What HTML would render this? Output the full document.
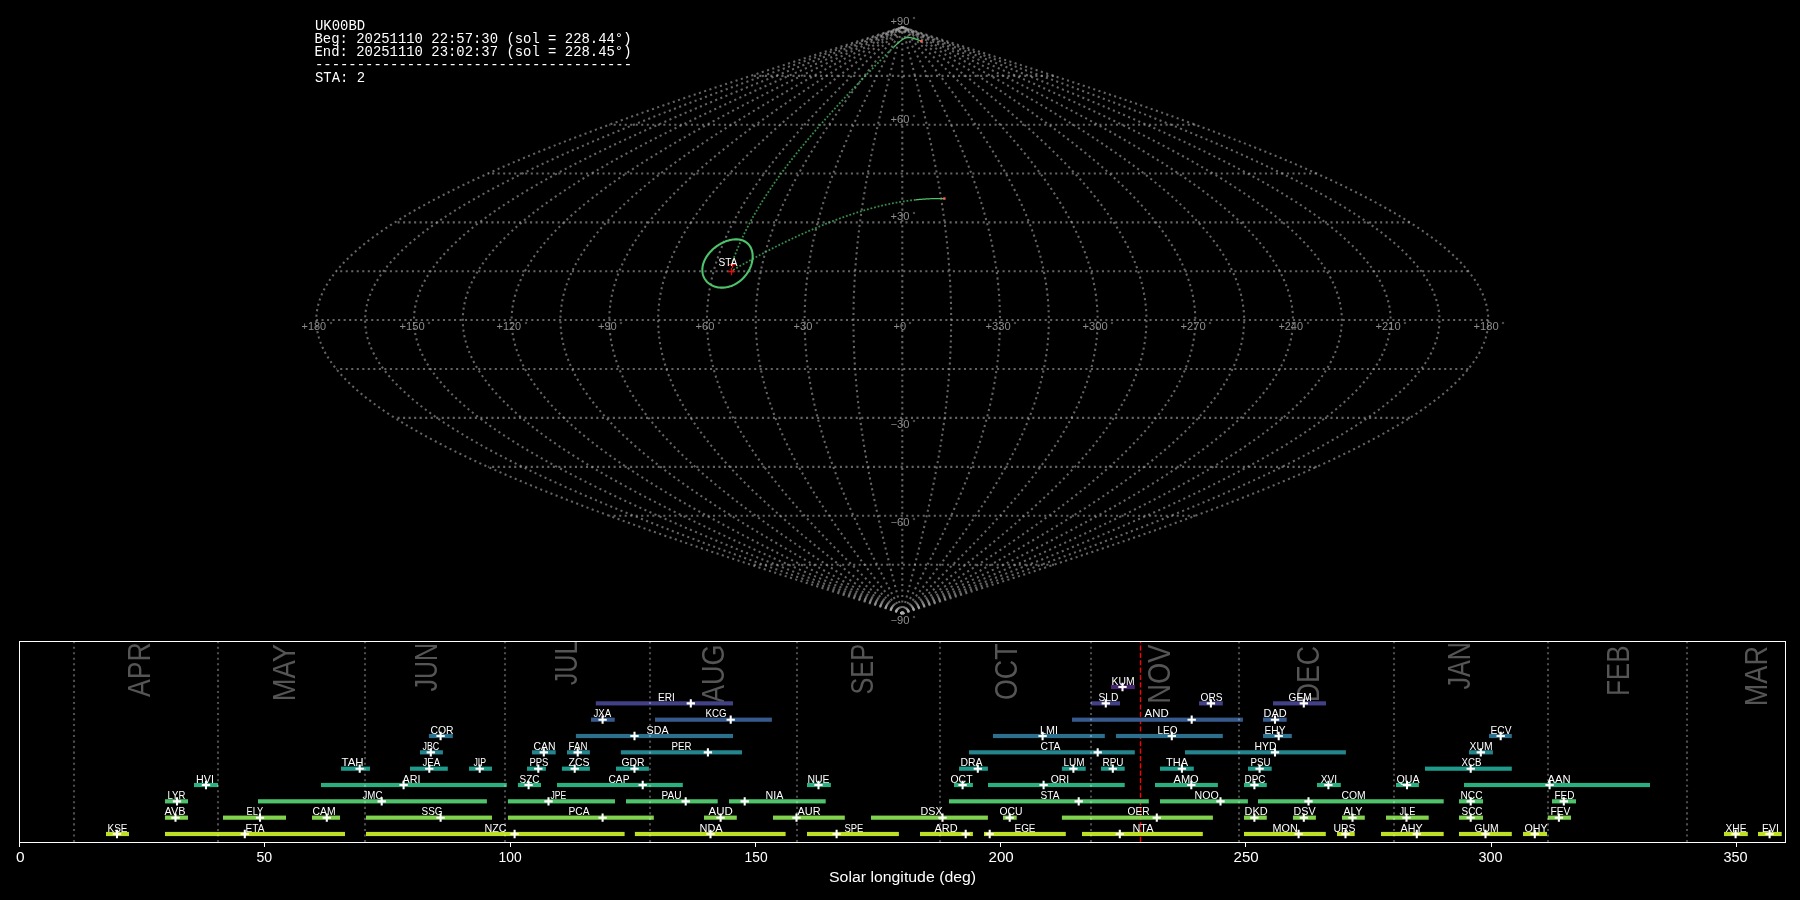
<!DOCTYPE html>
<html><head><meta charset="utf-8"><title>UK00BD STA</title>
<style>
html,body{margin:0;padding:0;background:#000;width:1800px;height:900px;overflow:hidden}
#wrap{width:1800px;height:900px;will-change:transform}
svg{display:block;font-family:"Liberation Sans",sans-serif}
</style></head><body>
<div id="wrap"><svg width="1800" height="900" viewBox="0 0 1800 900">
<g fill="none" stroke="#acacac" stroke-opacity="0.58" stroke-width="2.08" stroke-dasharray="2.08 3.44"><path d="M902.3 613.63 L907.41 612 L912.53 610.37 L917.64 608.74 L922.75 607.11 L927.86 605.48 L932.97 603.84 L938.07 602.21 L943.18 600.58 L948.28 598.95 L953.37 597.32 L958.47 595.69 L963.55 594.06 L968.64 592.43 L973.72 590.8 L978.79 589.16 L983.86 587.53 L988.92 585.9 L993.97 584.27 L999.02 582.64 L1004.06 581.01 L1009.09 579.38 L1014.12 577.75 L1019.13 576.12 L1024.14 574.49 L1029.14 572.86 L1034.12 571.22 L1039.1 569.59 L1044.07 567.96 L1049.02 566.33 L1053.97 564.7 L1058.9 563.07 L1063.83 561.44 L1068.74 559.81 L1073.63 558.18 L1078.52 556.55 L1083.39 554.91 L1088.24 553.28 L1093.09 551.65 L1097.91 550.02 L1102.73 548.39 L1107.52 546.76 L1112.31 545.13 L1117.07 543.5 L1121.82 541.87 L1126.56 540.24 L1131.27 538.6 L1135.97 536.97 L1140.65 535.34 L1145.31 533.71 L1149.96 532.08 L1154.58 530.45 L1159.19 528.82 L1163.78 527.19 L1168.34 525.56 L1172.89 523.92 L1177.41 522.29 L1181.92 520.66 L1186.4 519.03 L1190.86 517.4 L1195.3 515.77 L1199.72 514.14 L1204.12 512.51 L1208.49 510.88 L1212.84 509.25 L1217.16 507.62 L1221.46 505.98 L1225.74 504.35 L1229.99 502.72 L1234.22 501.09 L1238.42 499.46 L1242.6 497.83 L1246.75 496.2 L1250.87 494.57 L1254.97 492.94 L1259.04 491.31 L1263.08 489.67 L1267.1 488.04 L1271.09 486.41 L1275.05 484.78 L1278.98 483.15 L1282.88 481.52 L1286.76 479.89 L1290.6 478.26 L1294.42 476.63 L1298.2 475 L1301.96 473.36 L1305.68 471.73 L1309.38 470.1 L1313.04 468.47 L1316.67 466.84 L1320.27 465.21 L1323.84 463.58 L1327.38 461.95 L1330.88 460.32 L1334.35 458.69 L1337.79 457.05 L1341.19 455.42 L1344.57 453.79 L1347.9 452.16 L1351.21 450.53 L1354.48 448.9 L1357.71 447.27 L1360.91 445.64 L1364.08 444.01 L1367.21 442.38 L1370.31 440.74 L1373.37 439.11 L1376.39 437.48 L1379.38 435.85 L1382.33 434.22 L1385.24 432.59 L1388.12 430.96 L1390.96 429.33 L1393.77 427.7 L1396.53 426.06 L1399.26 424.43 L1401.95 422.8 L1404.61 421.17 L1407.22 419.54 L1409.8 417.91 L1412.34 416.28 L1414.83 414.65 L1417.29 413.02 L1419.71 411.39 L1422.1 409.75 L1424.44 408.12 L1426.74 406.49 L1429 404.86 L1431.22 403.23 L1433.4 401.6 L1435.54 399.97 L1437.64 398.34 L1439.7 396.71 L1441.72 395.08 L1443.7 393.44 L1445.64 391.81 L1447.53 390.18 L1449.39 388.55 L1451.2 386.92 L1452.97 385.29 L1454.7 383.66 L1456.38 382.03 L1458.03 380.4 L1459.63 378.77 L1461.19 377.13 L1462.7 375.5 L1464.18 373.87 L1465.61 372.24 L1467 370.61 L1468.34 368.98 L1469.64 367.35 L1470.9 365.72 L1472.12 364.09 L1473.29 362.46 L1474.42 360.82 L1475.5 359.19 L1476.54 357.56 L1477.54 355.93 L1478.5 354.3 L1479.41 352.67 L1480.27 351.04 L1481.09 349.41 L1481.87 347.78 L1482.61 346.15 L1483.29 344.51 L1483.94 342.88 L1484.54 341.25 L1485.1 339.62 L1485.61 337.99 L1486.08 336.36 L1486.5 334.73 L1486.88 333.1 L1487.21 331.47 L1487.5 329.84 L1487.75 328.2 L1487.95 326.57 L1488.11 324.94 L1488.22 323.31 L1488.29 321.68 L1488.31 320.05 L1488.29 318.42 L1488.22 316.79 L1488.11 315.17 L1487.95 313.54 L1487.75 311.91 L1487.5 310.28 L1487.21 308.66 L1486.88 307.03 L1486.5 305.4 L1486.08 303.77 L1485.61 302.14 L1485.1 300.52 L1484.54 298.89 L1483.94 297.26 L1483.29 295.63 L1482.61 294.01 L1481.87 292.38 L1481.09 290.75 L1480.27 289.12 L1479.41 287.49 L1478.5 285.87 L1477.54 284.24 L1476.54 282.61 L1475.5 280.98 L1474.42 279.36 L1473.29 277.73 L1472.12 276.1 L1470.9 274.47 L1469.64 272.84 L1468.34 271.22 L1467 269.59 L1465.61 267.96 L1464.18 266.33 L1462.7 264.7 L1461.19 263.08 L1459.63 261.45 L1458.03 259.82 L1456.38 258.19 L1454.7 256.57 L1452.97 254.94 L1451.2 253.31 L1449.39 251.68 L1447.53 250.05 L1445.64 248.43 L1443.7 246.8 L1441.72 245.17 L1439.7 243.54 L1437.64 241.92 L1435.54 240.29 L1433.4 238.66 L1431.22 237.03 L1429 235.4 L1426.74 233.78 L1424.44 232.15 L1422.1 230.52 L1419.71 228.89 L1417.29 227.27 L1414.83 225.64 L1412.34 224.01 L1409.8 222.38 L1407.22 220.75 L1404.61 219.13 L1401.95 217.5 L1399.26 215.87 L1396.53 214.24 L1393.77 212.62 L1390.96 210.99 L1388.12 209.36 L1385.24 207.73 L1382.33 206.1 L1379.38 204.48 L1376.39 202.85 L1373.37 201.22 L1370.31 199.59 L1367.21 197.97 L1364.08 196.34 L1360.91 194.71 L1357.71 193.08 L1354.48 191.45 L1351.21 189.83 L1347.9 188.2 L1344.57 186.57 L1341.19 184.94 L1337.79 183.31 L1334.35 181.69 L1330.88 180.06 L1327.38 178.43 L1323.84 176.8 L1320.27 175.18 L1316.67 173.55 L1313.04 171.92 L1309.38 170.29 L1305.68 168.66 L1301.96 167.04 L1298.2 165.41 L1294.42 163.78 L1290.6 162.15 L1286.76 160.53 L1282.88 158.9 L1278.98 157.27 L1275.05 155.64 L1271.09 154.01 L1267.1 152.39 L1263.08 150.76 L1259.04 149.13 L1254.97 147.5 L1250.87 145.88 L1246.75 144.25 L1242.6 142.62 L1238.42 140.99 L1234.22 139.36 L1229.99 137.74 L1225.74 136.11 L1221.46 134.48 L1217.16 132.85 L1212.84 131.23 L1208.49 129.6 L1204.12 127.97 L1199.72 126.34 L1195.3 124.71 L1190.86 123.09 L1186.4 121.46 L1181.92 119.83 L1177.41 118.2 L1172.89 116.58 L1168.34 114.95 L1163.78 113.32 L1159.19 111.69 L1154.58 110.06 L1149.96 108.44 L1145.31 106.81 L1140.65 105.18 L1135.97 103.55 L1131.27 101.92 L1126.56 100.3 L1121.82 98.67 L1117.07 97.04 L1112.31 95.41 L1107.52 93.79 L1102.73 92.16 L1097.91 90.53 L1093.09 88.9 L1088.24 87.27 L1083.39 85.65 L1078.52 84.02 L1073.63 82.39 L1068.74 80.76 L1063.83 79.14 L1058.9 77.51 L1053.97 75.88 L1049.02 74.25 L1044.07 72.62 L1039.1 71 L1034.12 69.37 L1029.14 67.74 L1024.14 66.11 L1019.13 64.49 L1014.12 62.86 L1009.09 61.23 L1004.06 59.6 L999.02 57.97 L993.97 56.35 L988.92 54.72 L983.86 53.09 L978.79 51.46 L973.72 49.84 L968.64 48.21 L963.55 46.58 L958.47 44.95 L953.37 43.32 L948.28 41.7 L943.18 40.07 L938.07 38.44 L932.97 36.81 L927.86 35.19 L922.75 33.56 L917.64 31.93 L912.53 30.3 L907.41 28.67 L902.3 27.05" stroke-dashoffset="0.0"/><path d="M902.3 613.63 L906.99 612 L911.67 610.37 L916.36 608.74 L921.05 607.11 L925.73 605.48 L930.41 603.84 L935.09 602.21 L939.77 600.58 L944.45 598.95 L949.12 597.32 L953.79 595.69 L958.45 594.06 L963.11 592.43 L967.77 590.8 L972.42 589.16 L977.06 587.53 L981.7 585.9 L986.33 584.27 L990.96 582.64 L995.58 581.01 L1000.19 579.38 L1004.8 577.75 L1009.4 576.12 L1013.98 574.49 L1018.57 572.86 L1023.14 571.22 L1027.7 569.59 L1032.25 567.96 L1036.8 566.33 L1041.33 564.7 L1045.85 563.07 L1050.37 561.44 L1054.87 559.81 L1059.35 558.18 L1063.83 556.55 L1068.3 554.91 L1072.75 553.28 L1077.19 551.65 L1081.61 550.02 L1086.02 548.39 L1090.42 546.76 L1094.81 545.13 L1099.17 543.5 L1103.53 541.87 L1107.87 540.24 L1112.19 538.6 L1116.5 536.97 L1120.79 535.34 L1125.06 533.71 L1129.32 532.08 L1133.56 530.45 L1137.78 528.82 L1141.99 527.19 L1146.17 525.56 L1150.34 523.92 L1154.49 522.29 L1158.62 520.66 L1162.73 519.03 L1166.82 517.4 L1170.89 515.77 L1174.94 514.14 L1178.97 512.51 L1182.97 510.88 L1186.96 509.25 L1190.92 507.62 L1194.87 505.98 L1198.79 504.35 L1202.68 502.72 L1206.56 501.09 L1210.41 499.46 L1214.24 497.83 L1218.04 496.2 L1221.82 494.57 L1225.58 492.94 L1229.31 491.31 L1233.02 489.67 L1236.7 488.04 L1240.35 486.41 L1243.98 484.78 L1247.59 483.15 L1251.17 481.52 L1254.72 479.89 L1258.24 478.26 L1261.74 476.63 L1265.21 475 L1268.65 473.36 L1272.07 471.73 L1275.45 470.1 L1278.81 468.47 L1282.14 466.84 L1285.44 465.21 L1288.71 463.58 L1291.95 461.95 L1295.16 460.32 L1298.35 458.69 L1301.5 457.05 L1304.62 455.42 L1307.71 453.79 L1310.77 452.16 L1313.8 450.53 L1316.8 448.9 L1319.76 447.27 L1322.7 445.64 L1325.6 444.01 L1328.47 442.38 L1331.31 440.74 L1334.11 439.11 L1336.88 437.48 L1339.62 435.85 L1342.33 434.22 L1345 432.59 L1347.64 430.96 L1350.24 429.33 L1352.81 427.7 L1355.35 426.06 L1357.85 424.43 L1360.32 422.8 L1362.75 421.17 L1365.14 419.54 L1367.51 417.91 L1369.83 416.28 L1372.12 414.65 L1374.38 413.02 L1376.6 411.39 L1378.78 409.75 L1380.93 408.12 L1383.04 406.49 L1385.11 404.86 L1387.15 403.23 L1389.14 401.6 L1391.11 399.97 L1393.03 398.34 L1394.92 396.71 L1396.77 395.08 L1398.58 393.44 L1400.36 391.81 L1402.1 390.18 L1403.8 388.55 L1405.46 386.92 L1407.08 385.29 L1408.66 383.66 L1410.21 382.03 L1411.71 380.4 L1413.18 378.77 L1414.61 377.13 L1416 375.5 L1417.35 373.87 L1418.66 372.24 L1419.94 370.61 L1421.17 368.98 L1422.36 367.35 L1423.52 365.72 L1424.63 364.09 L1425.71 362.46 L1426.74 360.82 L1427.74 359.19 L1428.69 357.56 L1429.6 355.93 L1430.48 354.3 L1431.31 352.67 L1432.11 351.04 L1432.86 349.41 L1433.57 347.78 L1434.25 346.15 L1434.88 344.51 L1435.47 342.88 L1436.02 341.25 L1436.53 339.62 L1437 337.99 L1437.43 336.36 L1437.82 334.73 L1438.17 333.1 L1438.47 331.47 L1438.74 329.84 L1438.96 328.2 L1439.15 326.57 L1439.29 324.94 L1439.39 323.31 L1439.45 321.68 L1439.47 320.05 L1439.45 318.42 L1439.39 316.79 L1439.29 315.17 L1439.15 313.54 L1438.96 311.91 L1438.74 310.28 L1438.47 308.66 L1438.17 307.03 L1437.82 305.4 L1437.43 303.77 L1437 302.14 L1436.53 300.52 L1436.02 298.89 L1435.47 297.26 L1434.88 295.63 L1434.25 294.01 L1433.57 292.38 L1432.86 290.75 L1432.11 289.12 L1431.31 287.49 L1430.48 285.87 L1429.6 284.24 L1428.69 282.61 L1427.74 280.98 L1426.74 279.36 L1425.71 277.73 L1424.63 276.1 L1423.52 274.47 L1422.36 272.84 L1421.17 271.22 L1419.94 269.59 L1418.66 267.96 L1417.35 266.33 L1416 264.7 L1414.61 263.08 L1413.18 261.45 L1411.71 259.82 L1410.21 258.19 L1408.66 256.57 L1407.08 254.94 L1405.46 253.31 L1403.8 251.68 L1402.1 250.05 L1400.36 248.43 L1398.58 246.8 L1396.77 245.17 L1394.92 243.54 L1393.03 241.92 L1391.11 240.29 L1389.14 238.66 L1387.15 237.03 L1385.11 235.4 L1383.04 233.78 L1380.93 232.15 L1378.78 230.52 L1376.6 228.89 L1374.38 227.27 L1372.12 225.64 L1369.83 224.01 L1367.51 222.38 L1365.14 220.75 L1362.75 219.13 L1360.32 217.5 L1357.85 215.87 L1355.35 214.24 L1352.81 212.62 L1350.24 210.99 L1347.64 209.36 L1345 207.73 L1342.33 206.1 L1339.62 204.48 L1336.88 202.85 L1334.11 201.22 L1331.31 199.59 L1328.47 197.97 L1325.6 196.34 L1322.7 194.71 L1319.76 193.08 L1316.8 191.45 L1313.8 189.83 L1310.77 188.2 L1307.71 186.57 L1304.62 184.94 L1301.5 183.31 L1298.35 181.69 L1295.16 180.06 L1291.95 178.43 L1288.71 176.8 L1285.44 175.18 L1282.14 173.55 L1278.81 171.92 L1275.45 170.29 L1272.07 168.66 L1268.65 167.04 L1265.21 165.41 L1261.74 163.78 L1258.24 162.15 L1254.72 160.53 L1251.17 158.9 L1247.59 157.27 L1243.98 155.64 L1240.35 154.01 L1236.7 152.39 L1233.02 150.76 L1229.31 149.13 L1225.58 147.5 L1221.82 145.88 L1218.04 144.25 L1214.24 142.62 L1210.41 140.99 L1206.56 139.36 L1202.68 137.74 L1198.79 136.11 L1194.87 134.48 L1190.92 132.85 L1186.96 131.23 L1182.97 129.6 L1178.97 127.97 L1174.94 126.34 L1170.89 124.71 L1166.82 123.09 L1162.73 121.46 L1158.62 119.83 L1154.49 118.2 L1150.34 116.58 L1146.17 114.95 L1141.99 113.32 L1137.78 111.69 L1133.56 110.06 L1129.32 108.44 L1125.06 106.81 L1120.79 105.18 L1116.5 103.55 L1112.19 101.92 L1107.87 100.3 L1103.53 98.67 L1099.17 97.04 L1094.81 95.41 L1090.42 93.79 L1086.02 92.16 L1081.61 90.53 L1077.19 88.9 L1072.75 87.27 L1068.3 85.65 L1063.83 84.02 L1059.35 82.39 L1054.87 80.76 L1050.37 79.14 L1045.85 77.51 L1041.33 75.88 L1036.8 74.25 L1032.25 72.62 L1027.7 71 L1023.14 69.37 L1018.57 67.74 L1013.98 66.11 L1009.4 64.49 L1004.8 62.86 L1000.19 61.23 L995.58 59.6 L990.96 57.97 L986.33 56.35 L981.7 54.72 L977.06 53.09 L972.42 51.46 L967.77 49.84 L963.11 48.21 L958.45 46.58 L953.79 44.95 L949.12 43.32 L944.45 41.7 L939.77 40.07 L935.09 38.44 L930.41 36.81 L925.73 35.19 L921.05 33.56 L916.36 31.93 L911.67 30.3 L906.99 28.67 L902.3 27.05" stroke-dashoffset="0.0"/><path d="M902.3 613.63 L906.56 612 L910.82 610.37 L915.08 608.74 L919.34 607.11 L923.6 605.48 L927.86 603.84 L932.11 602.21 L936.36 600.58 L940.61 598.95 L944.86 597.32 L949.11 595.69 L953.35 594.06 L957.58 592.43 L961.81 590.8 L966.04 589.16 L970.26 587.53 L974.48 585.9 L978.69 584.27 L982.9 582.64 L987.1 581.01 L991.29 579.38 L995.48 577.75 L999.66 576.12 L1003.83 574.49 L1008 572.86 L1012.15 571.22 L1016.3 569.59 L1020.44 567.96 L1024.57 566.33 L1028.69 564.7 L1032.8 563.07 L1036.9 561.44 L1041 559.81 L1045.08 558.18 L1049.15 556.55 L1053.21 554.91 L1057.25 553.28 L1061.29 551.65 L1065.31 550.02 L1069.32 548.39 L1073.32 546.76 L1077.31 545.13 L1081.28 543.5 L1085.24 541.87 L1089.18 540.24 L1093.11 538.6 L1097.03 536.97 L1100.93 535.34 L1104.81 533.71 L1108.68 532.08 L1112.54 530.45 L1116.37 528.82 L1120.2 527.19 L1124 525.56 L1127.79 523.92 L1131.56 522.29 L1135.32 520.66 L1139.05 519.03 L1142.77 517.4 L1146.47 515.77 L1150.15 514.14 L1153.81 512.51 L1157.46 510.88 L1161.08 509.25 L1164.68 507.62 L1168.27 505.98 L1171.83 504.35 L1175.38 502.72 L1178.9 501.09 L1182.4 499.46 L1185.88 497.83 L1189.34 496.2 L1192.78 494.57 L1196.19 492.94 L1199.58 491.31 L1202.95 489.67 L1206.3 488.04 L1209.62 486.41 L1212.92 484.78 L1216.2 483.15 L1219.45 481.52 L1222.68 479.89 L1225.88 478.26 L1229.06 476.63 L1232.22 475 L1235.35 473.36 L1238.45 471.73 L1241.53 470.1 L1244.58 468.47 L1247.61 466.84 L1250.61 465.21 L1253.58 463.58 L1256.53 461.95 L1259.45 460.32 L1262.34 458.69 L1265.21 457.05 L1268.05 455.42 L1270.85 453.79 L1273.64 452.16 L1276.39 450.53 L1279.12 448.9 L1281.81 447.27 L1284.48 445.64 L1287.12 444.01 L1289.73 442.38 L1292.31 440.74 L1294.86 439.11 L1297.38 437.48 L1299.87 435.85 L1302.32 434.22 L1304.75 432.59 L1307.15 430.96 L1309.52 429.33 L1311.86 427.7 L1314.16 426.06 L1316.44 424.43 L1318.68 422.8 L1320.89 421.17 L1323.07 419.54 L1325.21 417.91 L1327.33 416.28 L1329.41 414.65 L1331.46 413.02 L1333.48 411.39 L1335.46 409.75 L1337.41 408.12 L1339.33 406.49 L1341.22 404.86 L1343.07 403.23 L1344.89 401.6 L1346.67 399.97 L1348.42 398.34 L1350.14 396.71 L1351.82 395.08 L1353.47 393.44 L1355.08 391.81 L1356.66 390.18 L1358.2 388.55 L1359.71 386.92 L1361.19 385.29 L1362.63 383.66 L1364.03 382.03 L1365.4 380.4 L1366.74 378.77 L1368.04 377.13 L1369.3 375.5 L1370.53 373.87 L1371.72 372.24 L1372.88 370.61 L1374 368.98 L1375.09 367.35 L1376.13 365.72 L1377.15 364.09 L1378.12 362.46 L1379.06 360.82 L1379.97 359.19 L1380.84 357.56 L1381.67 355.93 L1382.46 354.3 L1383.22 352.67 L1383.94 351.04 L1384.63 349.41 L1385.28 347.78 L1385.89 346.15 L1386.46 344.51 L1387 342.88 L1387.5 341.25 L1387.96 339.62 L1388.39 337.99 L1388.78 336.36 L1389.13 334.73 L1389.45 333.1 L1389.73 331.47 L1389.97 329.84 L1390.18 328.2 L1390.34 326.57 L1390.47 324.94 L1390.57 323.31 L1390.62 321.68 L1390.64 320.05 L1390.62 318.42 L1390.57 316.79 L1390.47 315.17 L1390.34 313.54 L1390.18 311.91 L1389.97 310.28 L1389.73 308.66 L1389.45 307.03 L1389.13 305.4 L1388.78 303.77 L1388.39 302.14 L1387.96 300.52 L1387.5 298.89 L1387 297.26 L1386.46 295.63 L1385.89 294.01 L1385.28 292.38 L1384.63 290.75 L1383.94 289.12 L1383.22 287.49 L1382.46 285.87 L1381.67 284.24 L1380.84 282.61 L1379.97 280.98 L1379.06 279.36 L1378.12 277.73 L1377.15 276.1 L1376.13 274.47 L1375.09 272.84 L1374 271.22 L1372.88 269.59 L1371.72 267.96 L1370.53 266.33 L1369.3 264.7 L1368.04 263.08 L1366.74 261.45 L1365.4 259.82 L1364.03 258.19 L1362.63 256.57 L1361.19 254.94 L1359.71 253.31 L1358.2 251.68 L1356.66 250.05 L1355.08 248.43 L1353.47 246.8 L1351.82 245.17 L1350.14 243.54 L1348.42 241.92 L1346.67 240.29 L1344.89 238.66 L1343.07 237.03 L1341.22 235.4 L1339.33 233.78 L1337.41 232.15 L1335.46 230.52 L1333.48 228.89 L1331.46 227.27 L1329.41 225.64 L1327.33 224.01 L1325.21 222.38 L1323.07 220.75 L1320.89 219.13 L1318.68 217.5 L1316.44 215.87 L1314.16 214.24 L1311.86 212.62 L1309.52 210.99 L1307.15 209.36 L1304.75 207.73 L1302.32 206.1 L1299.87 204.48 L1297.38 202.85 L1294.86 201.22 L1292.31 199.59 L1289.73 197.97 L1287.12 196.34 L1284.48 194.71 L1281.81 193.08 L1279.12 191.45 L1276.39 189.83 L1273.64 188.2 L1270.85 186.57 L1268.05 184.94 L1265.21 183.31 L1262.34 181.69 L1259.45 180.06 L1256.53 178.43 L1253.58 176.8 L1250.61 175.18 L1247.61 173.55 L1244.58 171.92 L1241.53 170.29 L1238.45 168.66 L1235.35 167.04 L1232.22 165.41 L1229.06 163.78 L1225.88 162.15 L1222.68 160.53 L1219.45 158.9 L1216.2 157.27 L1212.92 155.64 L1209.62 154.01 L1206.3 152.39 L1202.95 150.76 L1199.58 149.13 L1196.19 147.5 L1192.78 145.88 L1189.34 144.25 L1185.88 142.62 L1182.4 140.99 L1178.9 139.36 L1175.38 137.74 L1171.83 136.11 L1168.27 134.48 L1164.68 132.85 L1161.08 131.23 L1157.46 129.6 L1153.81 127.97 L1150.15 126.34 L1146.47 124.71 L1142.77 123.09 L1139.05 121.46 L1135.32 119.83 L1131.56 118.2 L1127.79 116.58 L1124 114.95 L1120.2 113.32 L1116.37 111.69 L1112.54 110.06 L1108.68 108.44 L1104.81 106.81 L1100.93 105.18 L1097.03 103.55 L1093.11 101.92 L1089.18 100.3 L1085.24 98.67 L1081.28 97.04 L1077.31 95.41 L1073.32 93.79 L1069.32 92.16 L1065.31 90.53 L1061.29 88.9 L1057.25 87.27 L1053.21 85.65 L1049.15 84.02 L1045.08 82.39 L1041 80.76 L1036.9 79.14 L1032.8 77.51 L1028.69 75.88 L1024.57 74.25 L1020.44 72.62 L1016.3 71 L1012.15 69.37 L1008 67.74 L1003.83 66.11 L999.66 64.49 L995.48 62.86 L991.29 61.23 L987.1 59.6 L982.9 57.97 L978.69 56.35 L974.48 54.72 L970.26 53.09 L966.04 51.46 L961.81 49.84 L957.58 48.21 L953.35 46.58 L949.11 44.95 L944.86 43.32 L940.61 41.7 L936.36 40.07 L932.11 38.44 L927.86 36.81 L923.6 35.19 L919.34 33.56 L915.08 31.93 L910.82 30.3 L906.56 28.67 L902.3 27.05" stroke-dashoffset="0.0"/><path d="M902.3 613.63 L906.14 612 L909.97 610.37 L913.8 608.74 L917.64 607.11 L921.47 605.48 L925.3 603.84 L929.13 602.21 L932.96 600.58 L936.78 598.95 L940.61 597.32 L944.42 595.69 L948.24 594.06 L952.05 592.43 L955.86 590.8 L959.67 589.16 L963.47 587.53 L967.26 585.9 L971.05 584.27 L974.84 582.64 L978.62 581.01 L982.39 579.38 L986.16 577.75 L989.92 576.12 L993.68 574.49 L997.43 572.86 L1001.17 571.22 L1004.9 569.59 L1008.63 567.96 L1012.34 566.33 L1016.05 564.7 L1019.75 563.07 L1023.44 561.44 L1027.13 559.81 L1030.8 558.18 L1034.46 556.55 L1038.11 554.91 L1041.76 553.28 L1045.39 551.65 L1049.01 550.02 L1052.62 548.39 L1056.22 546.76 L1059.8 545.13 L1063.38 543.5 L1066.94 541.87 L1070.49 540.24 L1074.03 538.6 L1077.55 536.97 L1081.06 535.34 L1084.56 533.71 L1088.04 532.08 L1091.51 530.45 L1094.97 528.82 L1098.41 527.19 L1101.83 525.56 L1105.24 523.92 L1108.64 522.29 L1112.01 520.66 L1115.38 519.03 L1118.72 517.4 L1122.05 515.77 L1125.37 514.14 L1128.66 512.51 L1131.94 510.88 L1135.2 509.25 L1138.45 507.62 L1141.67 505.98 L1144.88 504.35 L1148.07 502.72 L1151.24 501.09 L1154.39 499.46 L1157.52 497.83 L1160.64 496.2 L1163.73 494.57 L1166.8 492.94 L1169.85 491.31 L1172.89 489.67 L1175.9 488.04 L1178.89 486.41 L1181.86 484.78 L1184.81 483.15 L1187.74 481.52 L1190.64 479.89 L1193.53 478.26 L1196.39 476.63 L1199.23 475 L1202.04 473.36 L1204.84 471.73 L1207.61 470.1 L1210.35 468.47 L1213.08 466.84 L1215.78 465.21 L1218.45 463.58 L1221.11 461.95 L1223.73 460.32 L1226.34 458.69 L1228.92 457.05 L1231.47 455.42 L1234 453.79 L1236.5 452.16 L1238.98 450.53 L1241.43 448.9 L1243.86 447.27 L1246.26 445.64 L1248.64 444.01 L1250.98 442.38 L1253.31 440.74 L1255.6 439.11 L1257.87 437.48 L1260.11 435.85 L1262.32 434.22 L1264.51 432.59 L1266.67 430.96 L1268.8 429.33 L1270.9 427.7 L1272.98 426.06 L1275.02 424.43 L1277.04 422.8 L1279.03 421.17 L1280.99 419.54 L1282.92 417.91 L1284.83 416.28 L1286.7 414.65 L1288.55 413.02 L1290.36 411.39 L1292.15 409.75 L1293.9 408.12 L1295.63 406.49 L1297.33 404.86 L1298.99 403.23 L1300.63 401.6 L1302.23 399.97 L1303.81 398.34 L1305.35 396.71 L1306.87 395.08 L1308.35 393.44 L1309.8 391.81 L1311.22 390.18 L1312.61 388.55 L1313.97 386.92 L1315.3 385.29 L1316.6 383.66 L1317.86 382.03 L1319.09 380.4 L1320.3 378.77 L1321.46 377.13 L1322.6 375.5 L1323.71 373.87 L1324.78 372.24 L1325.82 370.61 L1326.83 368.98 L1327.81 367.35 L1328.75 365.72 L1329.66 364.09 L1330.54 362.46 L1331.39 360.82 L1332.2 359.19 L1332.98 357.56 L1333.73 355.93 L1334.45 354.3 L1335.13 352.67 L1335.78 351.04 L1336.39 349.41 L1336.98 347.78 L1337.53 346.15 L1338.05 344.51 L1338.53 342.88 L1338.98 341.25 L1339.4 339.62 L1339.78 337.99 L1340.13 336.36 L1340.45 334.73 L1340.74 333.1 L1340.99 331.47 L1341.2 329.84 L1341.39 328.2 L1341.54 326.57 L1341.66 324.94 L1341.74 323.31 L1341.79 321.68 L1341.81 320.05 L1341.79 318.42 L1341.74 316.79 L1341.66 315.17 L1341.54 313.54 L1341.39 311.91 L1341.2 310.28 L1340.99 308.66 L1340.74 307.03 L1340.45 305.4 L1340.13 303.77 L1339.78 302.14 L1339.4 300.52 L1338.98 298.89 L1338.53 297.26 L1338.05 295.63 L1337.53 294.01 L1336.98 292.38 L1336.39 290.75 L1335.78 289.12 L1335.13 287.49 L1334.45 285.87 L1333.73 284.24 L1332.98 282.61 L1332.2 280.98 L1331.39 279.36 L1330.54 277.73 L1329.66 276.1 L1328.75 274.47 L1327.81 272.84 L1326.83 271.22 L1325.82 269.59 L1324.78 267.96 L1323.71 266.33 L1322.6 264.7 L1321.46 263.08 L1320.3 261.45 L1319.09 259.82 L1317.86 258.19 L1316.6 256.57 L1315.3 254.94 L1313.97 253.31 L1312.61 251.68 L1311.22 250.05 L1309.8 248.43 L1308.35 246.8 L1306.87 245.17 L1305.35 243.54 L1303.81 241.92 L1302.23 240.29 L1300.63 238.66 L1298.99 237.03 L1297.33 235.4 L1295.63 233.78 L1293.9 232.15 L1292.15 230.52 L1290.36 228.89 L1288.55 227.27 L1286.7 225.64 L1284.83 224.01 L1282.92 222.38 L1280.99 220.75 L1279.03 219.13 L1277.04 217.5 L1275.02 215.87 L1272.98 214.24 L1270.9 212.62 L1268.8 210.99 L1266.67 209.36 L1264.51 207.73 L1262.32 206.1 L1260.11 204.48 L1257.87 202.85 L1255.6 201.22 L1253.31 199.59 L1250.98 197.97 L1248.64 196.34 L1246.26 194.71 L1243.86 193.08 L1241.43 191.45 L1238.98 189.83 L1236.5 188.2 L1234 186.57 L1231.47 184.94 L1228.92 183.31 L1226.34 181.69 L1223.73 180.06 L1221.11 178.43 L1218.45 176.8 L1215.78 175.18 L1213.08 173.55 L1210.35 171.92 L1207.61 170.29 L1204.84 168.66 L1202.04 167.04 L1199.23 165.41 L1196.39 163.78 L1193.53 162.15 L1190.64 160.53 L1187.74 158.9 L1184.81 157.27 L1181.86 155.64 L1178.89 154.01 L1175.9 152.39 L1172.89 150.76 L1169.85 149.13 L1166.8 147.5 L1163.73 145.88 L1160.64 144.25 L1157.52 142.62 L1154.39 140.99 L1151.24 139.36 L1148.07 137.74 L1144.88 136.11 L1141.67 134.48 L1138.45 132.85 L1135.2 131.23 L1131.94 129.6 L1128.66 127.97 L1125.37 126.34 L1122.05 124.71 L1118.72 123.09 L1115.38 121.46 L1112.01 119.83 L1108.64 118.2 L1105.24 116.58 L1101.83 114.95 L1098.41 113.32 L1094.97 111.69 L1091.51 110.06 L1088.04 108.44 L1084.56 106.81 L1081.06 105.18 L1077.55 103.55 L1074.03 101.92 L1070.49 100.3 L1066.94 98.67 L1063.38 97.04 L1059.8 95.41 L1056.22 93.79 L1052.62 92.16 L1049.01 90.53 L1045.39 88.9 L1041.76 87.27 L1038.11 85.65 L1034.46 84.02 L1030.8 82.39 L1027.13 80.76 L1023.44 79.14 L1019.75 77.51 L1016.05 75.88 L1012.34 74.25 L1008.63 72.62 L1004.9 71 L1001.17 69.37 L997.43 67.74 L993.68 66.11 L989.92 64.49 L986.16 62.86 L982.39 61.23 L978.62 59.6 L974.84 57.97 L971.05 56.35 L967.26 54.72 L963.47 53.09 L959.67 51.46 L955.86 49.84 L952.05 48.21 L948.24 46.58 L944.42 44.95 L940.61 43.32 L936.78 41.7 L932.96 40.07 L929.13 38.44 L925.3 36.81 L921.47 35.19 L917.64 33.56 L913.8 31.93 L909.97 30.3 L906.14 28.67 L902.3 27.05" stroke-dashoffset="0.0"/><path d="M902.3 613.63 L905.71 612 L909.12 610.37 L912.53 608.74 L915.93 607.11 L919.34 605.48 L922.75 603.84 L926.15 602.21 L929.55 600.58 L932.95 598.95 L936.35 597.32 L939.74 595.69 L943.14 594.06 L946.53 592.43 L949.91 590.8 L953.29 589.16 L956.67 587.53 L960.04 585.9 L963.41 584.27 L966.78 582.64 L970.14 581.01 L973.49 579.38 L976.84 577.75 L980.19 576.12 L983.53 574.49 L986.86 572.86 L990.18 571.22 L993.5 569.59 L996.81 567.96 L1000.12 566.33 L1003.41 564.7 L1006.7 563.07 L1009.98 561.44 L1013.26 559.81 L1016.52 558.18 L1019.78 556.55 L1023.02 554.91 L1026.26 553.28 L1029.49 551.65 L1032.71 550.02 L1035.92 548.39 L1039.12 546.76 L1042.3 545.13 L1045.48 543.5 L1048.65 541.87 L1051.8 540.24 L1054.95 538.6 L1058.08 536.97 L1061.2 535.34 L1064.31 533.71 L1067.41 532.08 L1070.49 530.45 L1073.56 528.82 L1076.62 527.19 L1079.66 525.56 L1082.69 523.92 L1085.71 522.29 L1088.71 520.66 L1091.7 519.03 L1094.68 517.4 L1097.64 515.77 L1100.58 514.14 L1103.51 512.51 L1106.43 510.88 L1109.32 509.25 L1112.21 507.62 L1115.08 505.98 L1117.93 504.35 L1120.76 502.72 L1123.58 501.09 L1126.38 499.46 L1129.16 497.83 L1131.93 496.2 L1134.68 494.57 L1137.41 492.94 L1140.13 491.31 L1142.82 489.67 L1145.5 488.04 L1148.16 486.41 L1150.8 484.78 L1153.42 483.15 L1156.02 481.52 L1158.6 479.89 L1161.17 478.26 L1163.71 476.63 L1166.23 475 L1168.74 473.36 L1171.22 471.73 L1173.68 470.1 L1176.13 468.47 L1178.55 466.84 L1180.95 465.21 L1183.33 463.58 L1185.68 461.95 L1188.02 460.32 L1190.33 458.69 L1192.63 457.05 L1194.9 455.42 L1197.14 453.79 L1199.37 452.16 L1201.57 450.53 L1203.75 448.9 L1205.91 447.27 L1208.04 445.64 L1210.15 444.01 L1212.24 442.38 L1214.3 440.74 L1216.34 439.11 L1218.36 437.48 L1220.35 435.85 L1222.32 434.22 L1224.26 432.59 L1226.18 430.96 L1228.08 429.33 L1229.95 427.7 L1231.79 426.06 L1233.61 424.43 L1235.4 422.8 L1237.17 421.17 L1238.91 419.54 L1240.63 417.91 L1242.32 416.28 L1243.99 414.65 L1245.63 413.02 L1247.24 411.39 L1248.83 409.75 L1250.39 408.12 L1251.93 406.49 L1253.43 404.86 L1254.91 403.23 L1256.37 401.6 L1257.8 399.97 L1259.2 398.34 L1260.57 396.71 L1261.92 395.08 L1263.23 393.44 L1264.52 391.81 L1265.79 390.18 L1267.02 388.55 L1268.23 386.92 L1269.41 385.29 L1270.56 383.66 L1271.69 382.03 L1272.78 380.4 L1273.85 378.77 L1274.89 377.13 L1275.9 375.5 L1276.88 373.87 L1277.84 372.24 L1278.76 370.61 L1279.66 368.98 L1280.53 367.35 L1281.37 365.72 L1282.18 364.09 L1282.96 362.46 L1283.71 360.82 L1284.43 359.19 L1285.13 357.56 L1285.79 355.93 L1286.43 354.3 L1287.04 352.67 L1287.61 351.04 L1288.16 349.41 L1288.68 347.78 L1289.17 346.15 L1289.63 344.51 L1290.06 342.88 L1290.46 341.25 L1290.83 339.62 L1291.17 337.99 L1291.49 336.36 L1291.77 334.73 L1292.02 333.1 L1292.24 331.47 L1292.44 329.84 L1292.6 328.2 L1292.73 326.57 L1292.84 324.94 L1292.91 323.31 L1292.96 321.68 L1292.97 320.05 L1292.96 318.42 L1292.91 316.79 L1292.84 315.17 L1292.73 313.54 L1292.6 311.91 L1292.44 310.28 L1292.24 308.66 L1292.02 307.03 L1291.77 305.4 L1291.49 303.77 L1291.17 302.14 L1290.83 300.52 L1290.46 298.89 L1290.06 297.26 L1289.63 295.63 L1289.17 294.01 L1288.68 292.38 L1288.16 290.75 L1287.61 289.12 L1287.04 287.49 L1286.43 285.87 L1285.79 284.24 L1285.13 282.61 L1284.43 280.98 L1283.71 279.36 L1282.96 277.73 L1282.18 276.1 L1281.37 274.47 L1280.53 272.84 L1279.66 271.22 L1278.76 269.59 L1277.84 267.96 L1276.88 266.33 L1275.9 264.7 L1274.89 263.08 L1273.85 261.45 L1272.78 259.82 L1271.69 258.19 L1270.56 256.57 L1269.41 254.94 L1268.23 253.31 L1267.02 251.68 L1265.79 250.05 L1264.52 248.43 L1263.23 246.8 L1261.92 245.17 L1260.57 243.54 L1259.2 241.92 L1257.8 240.29 L1256.37 238.66 L1254.91 237.03 L1253.43 235.4 L1251.93 233.78 L1250.39 232.15 L1248.83 230.52 L1247.24 228.89 L1245.63 227.27 L1243.99 225.64 L1242.32 224.01 L1240.63 222.38 L1238.91 220.75 L1237.17 219.13 L1235.4 217.5 L1233.61 215.87 L1231.79 214.24 L1229.95 212.62 L1228.08 210.99 L1226.18 209.36 L1224.26 207.73 L1222.32 206.1 L1220.35 204.48 L1218.36 202.85 L1216.34 201.22 L1214.3 199.59 L1212.24 197.97 L1210.15 196.34 L1208.04 194.71 L1205.91 193.08 L1203.75 191.45 L1201.57 189.83 L1199.37 188.2 L1197.14 186.57 L1194.9 184.94 L1192.63 183.31 L1190.33 181.69 L1188.02 180.06 L1185.68 178.43 L1183.33 176.8 L1180.95 175.18 L1178.55 173.55 L1176.13 171.92 L1173.68 170.29 L1171.22 168.66 L1168.74 167.04 L1166.23 165.41 L1163.71 163.78 L1161.17 162.15 L1158.6 160.53 L1156.02 158.9 L1153.42 157.27 L1150.8 155.64 L1148.16 154.01 L1145.5 152.39 L1142.82 150.76 L1140.13 149.13 L1137.41 147.5 L1134.68 145.88 L1131.93 144.25 L1129.16 142.62 L1126.38 140.99 L1123.58 139.36 L1120.76 137.74 L1117.93 136.11 L1115.08 134.48 L1112.21 132.85 L1109.32 131.23 L1106.43 129.6 L1103.51 127.97 L1100.58 126.34 L1097.64 124.71 L1094.68 123.09 L1091.7 121.46 L1088.71 119.83 L1085.71 118.2 L1082.69 116.58 L1079.66 114.95 L1076.62 113.32 L1073.56 111.69 L1070.49 110.06 L1067.41 108.44 L1064.31 106.81 L1061.2 105.18 L1058.08 103.55 L1054.95 101.92 L1051.8 100.3 L1048.65 98.67 L1045.48 97.04 L1042.3 95.41 L1039.12 93.79 L1035.92 92.16 L1032.71 90.53 L1029.49 88.9 L1026.26 87.27 L1023.02 85.65 L1019.78 84.02 L1016.52 82.39 L1013.26 80.76 L1009.98 79.14 L1006.7 77.51 L1003.41 75.88 L1000.12 74.25 L996.81 72.62 L993.5 71 L990.18 69.37 L986.86 67.74 L983.53 66.11 L980.19 64.49 L976.84 62.86 L973.49 61.23 L970.14 59.6 L966.78 57.97 L963.41 56.35 L960.04 54.72 L956.67 53.09 L953.29 51.46 L949.91 49.84 L946.53 48.21 L943.14 46.58 L939.74 44.95 L936.35 43.32 L932.95 41.7 L929.55 40.07 L926.15 38.44 L922.75 36.81 L919.34 35.19 L915.93 33.56 L912.53 31.93 L909.12 30.3 L905.71 28.67 L902.3 27.05" stroke-dashoffset="0.0"/><path d="M902.3 613.63 L905.28 612 L908.27 610.37 L911.25 608.74 L914.23 607.11 L917.21 605.48 L920.19 603.84 L923.17 602.21 L926.15 600.58 L929.12 598.95 L932.09 597.32 L935.06 595.69 L938.03 594.06 L941 592.43 L943.96 590.8 L946.92 589.16 L949.87 587.53 L952.83 585.9 L955.78 584.27 L958.72 582.64 L961.66 581.01 L964.6 579.38 L967.53 577.75 L970.45 576.12 L973.37 574.49 L976.29 572.86 L979.2 571.22 L982.1 569.59 L985 567.96 L987.89 566.33 L990.77 564.7 L993.65 563.07 L996.52 561.44 L999.39 559.81 L1002.24 558.18 L1005.09 556.55 L1007.93 554.91 L1010.77 553.28 L1013.59 551.65 L1016.41 550.02 L1019.22 548.39 L1022.01 546.76 L1024.8 545.13 L1027.58 543.5 L1030.35 541.87 L1033.12 540.24 L1035.87 538.6 L1038.61 536.97 L1041.34 535.34 L1044.06 533.71 L1046.77 532.08 L1049.47 530.45 L1052.15 528.82 L1054.83 527.19 L1057.49 525.56 L1060.14 523.92 L1062.78 522.29 L1065.41 520.66 L1068.03 519.03 L1070.63 517.4 L1073.22 515.77 L1075.8 514.14 L1078.36 512.51 L1080.91 510.88 L1083.45 509.25 L1085.97 507.62 L1088.48 505.98 L1090.97 504.35 L1093.45 502.72 L1095.92 501.09 L1098.37 499.46 L1100.81 497.83 L1103.23 496.2 L1105.63 494.57 L1108.02 492.94 L1110.4 491.31 L1112.76 489.67 L1115.1 488.04 L1117.43 486.41 L1119.74 484.78 L1122.03 483.15 L1124.31 481.52 L1126.57 479.89 L1128.81 478.26 L1131.03 476.63 L1133.24 475 L1135.43 473.36 L1137.61 471.73 L1139.76 470.1 L1141.9 468.47 L1144.02 466.84 L1146.12 465.21 L1148.2 463.58 L1150.26 461.95 L1152.3 460.32 L1154.33 458.69 L1156.34 457.05 L1158.32 455.42 L1160.29 453.79 L1162.24 452.16 L1164.16 450.53 L1166.07 448.9 L1167.96 447.27 L1169.83 445.64 L1171.67 444.01 L1173.5 442.38 L1175.3 440.74 L1177.09 439.11 L1178.85 437.48 L1180.6 435.85 L1182.32 434.22 L1184.02 432.59 L1185.7 430.96 L1187.35 429.33 L1188.99 427.7 L1190.6 426.06 L1192.2 424.43 L1193.76 422.8 L1195.31 421.17 L1196.84 419.54 L1198.34 417.91 L1199.82 416.28 L1201.28 414.65 L1202.71 413.02 L1204.13 411.39 L1205.51 409.75 L1206.88 408.12 L1208.22 406.49 L1209.54 404.86 L1210.84 403.23 L1212.11 401.6 L1213.36 399.97 L1214.58 398.34 L1215.79 396.71 L1216.96 395.08 L1218.12 393.44 L1219.25 391.81 L1220.35 390.18 L1221.43 388.55 L1222.49 386.92 L1223.52 385.29 L1224.53 383.66 L1225.51 382.03 L1226.47 380.4 L1227.41 378.77 L1228.32 377.13 L1229.2 375.5 L1230.06 373.87 L1230.9 372.24 L1231.71 370.61 L1232.49 368.98 L1233.25 367.35 L1233.98 365.72 L1234.69 364.09 L1235.38 362.46 L1236.04 360.82 L1236.67 359.19 L1237.28 357.56 L1237.86 355.93 L1238.41 354.3 L1238.94 352.67 L1239.45 351.04 L1239.93 349.41 L1240.38 347.78 L1240.81 346.15 L1241.21 344.51 L1241.59 342.88 L1241.94 341.25 L1242.27 339.62 L1242.56 337.99 L1242.84 336.36 L1243.08 334.73 L1243.31 333.1 L1243.5 331.47 L1243.67 329.84 L1243.81 328.2 L1243.93 326.57 L1244.02 324.94 L1244.09 323.31 L1244.12 321.68 L1244.14 320.05 L1244.12 318.42 L1244.09 316.79 L1244.02 315.17 L1243.93 313.54 L1243.81 311.91 L1243.67 310.28 L1243.5 308.66 L1243.31 307.03 L1243.08 305.4 L1242.84 303.77 L1242.56 302.14 L1242.27 300.52 L1241.94 298.89 L1241.59 297.26 L1241.21 295.63 L1240.81 294.01 L1240.38 292.38 L1239.93 290.75 L1239.45 289.12 L1238.94 287.49 L1238.41 285.87 L1237.86 284.24 L1237.28 282.61 L1236.67 280.98 L1236.04 279.36 L1235.38 277.73 L1234.69 276.1 L1233.98 274.47 L1233.25 272.84 L1232.49 271.22 L1231.71 269.59 L1230.9 267.96 L1230.06 266.33 L1229.2 264.7 L1228.32 263.08 L1227.41 261.45 L1226.47 259.82 L1225.51 258.19 L1224.53 256.57 L1223.52 254.94 L1222.49 253.31 L1221.43 251.68 L1220.35 250.05 L1219.25 248.43 L1218.12 246.8 L1216.96 245.17 L1215.79 243.54 L1214.58 241.92 L1213.36 240.29 L1212.11 238.66 L1210.84 237.03 L1209.54 235.4 L1208.22 233.78 L1206.88 232.15 L1205.51 230.52 L1204.13 228.89 L1202.71 227.27 L1201.28 225.64 L1199.82 224.01 L1198.34 222.38 L1196.84 220.75 L1195.31 219.13 L1193.76 217.5 L1192.2 215.87 L1190.6 214.24 L1188.99 212.62 L1187.35 210.99 L1185.7 209.36 L1184.02 207.73 L1182.32 206.1 L1180.6 204.48 L1178.85 202.85 L1177.09 201.22 L1175.3 199.59 L1173.5 197.97 L1171.67 196.34 L1169.83 194.71 L1167.96 193.08 L1166.07 191.45 L1164.16 189.83 L1162.24 188.2 L1160.29 186.57 L1158.32 184.94 L1156.34 183.31 L1154.33 181.69 L1152.3 180.06 L1150.26 178.43 L1148.2 176.8 L1146.12 175.18 L1144.02 173.55 L1141.9 171.92 L1139.76 170.29 L1137.61 168.66 L1135.43 167.04 L1133.24 165.41 L1131.03 163.78 L1128.81 162.15 L1126.57 160.53 L1124.31 158.9 L1122.03 157.27 L1119.74 155.64 L1117.43 154.01 L1115.1 152.39 L1112.76 150.76 L1110.4 149.13 L1108.02 147.5 L1105.63 145.88 L1103.23 144.25 L1100.81 142.62 L1098.37 140.99 L1095.92 139.36 L1093.45 137.74 L1090.97 136.11 L1088.48 134.48 L1085.97 132.85 L1083.45 131.23 L1080.91 129.6 L1078.36 127.97 L1075.8 126.34 L1073.22 124.71 L1070.63 123.09 L1068.03 121.46 L1065.41 119.83 L1062.78 118.2 L1060.14 116.58 L1057.49 114.95 L1054.83 113.32 L1052.15 111.69 L1049.47 110.06 L1046.77 108.44 L1044.06 106.81 L1041.34 105.18 L1038.61 103.55 L1035.87 101.92 L1033.12 100.3 L1030.35 98.67 L1027.58 97.04 L1024.8 95.41 L1022.01 93.79 L1019.22 92.16 L1016.41 90.53 L1013.59 88.9 L1010.77 87.27 L1007.93 85.65 L1005.09 84.02 L1002.24 82.39 L999.39 80.76 L996.52 79.14 L993.65 77.51 L990.77 75.88 L987.89 74.25 L985 72.62 L982.1 71 L979.2 69.37 L976.29 67.74 L973.37 66.11 L970.45 64.49 L967.53 62.86 L964.6 61.23 L961.66 59.6 L958.72 57.97 L955.78 56.35 L952.83 54.72 L949.87 53.09 L946.92 51.46 L943.96 49.84 L941 48.21 L938.03 46.58 L935.06 44.95 L932.09 43.32 L929.12 41.7 L926.15 40.07 L923.17 38.44 L920.19 36.81 L917.21 35.19 L914.23 33.56 L911.25 31.93 L908.27 30.3 L905.28 28.67 L902.3 27.05" stroke-dashoffset="0.0"/><path d="M902.3 613.63 L904.86 612 L907.41 610.37 L909.97 608.74 L912.53 607.11 L915.08 605.48 L917.63 603.84 L920.19 602.21 L922.74 600.58 L925.29 598.95 L927.84 597.32 L930.38 595.69 L932.93 594.06 L935.47 592.43 L938.01 590.8 L940.54 589.16 L943.08 587.53 L945.61 585.9 L948.14 584.27 L950.66 582.64 L953.18 581.01 L955.7 579.38 L958.21 577.75 L960.72 576.12 L963.22 574.49 L965.72 572.86 L968.21 571.22 L970.7 569.59 L973.18 567.96 L975.66 566.33 L978.14 564.7 L980.6 563.07 L983.06 561.44 L985.52 559.81 L987.97 558.18 L990.41 556.55 L992.84 554.91 L995.27 553.28 L997.69 551.65 L1000.11 550.02 L1002.51 548.39 L1004.91 546.76 L1007.3 545.13 L1009.69 543.5 L1012.06 541.87 L1014.43 540.24 L1016.79 538.6 L1019.14 536.97 L1021.48 535.34 L1023.81 533.71 L1026.13 532.08 L1028.44 530.45 L1030.74 528.82 L1033.04 527.19 L1035.32 525.56 L1037.59 523.92 L1039.86 522.29 L1042.11 520.66 L1044.35 519.03 L1046.58 517.4 L1048.8 515.77 L1051.01 514.14 L1053.21 512.51 L1055.39 510.88 L1057.57 509.25 L1059.73 507.62 L1061.88 505.98 L1064.02 504.35 L1066.15 502.72 L1068.26 501.09 L1070.36 499.46 L1072.45 497.83 L1074.52 496.2 L1076.59 494.57 L1078.63 492.94 L1080.67 491.31 L1082.69 489.67 L1084.7 488.04 L1086.69 486.41 L1088.67 484.78 L1090.64 483.15 L1092.59 481.52 L1094.53 479.89 L1096.45 478.26 L1098.36 476.63 L1100.25 475 L1102.13 473.36 L1103.99 471.73 L1105.84 470.1 L1107.67 468.47 L1109.49 466.84 L1111.29 465.21 L1113.07 463.58 L1114.84 461.95 L1116.59 460.32 L1118.33 458.69 L1120.04 457.05 L1121.75 455.42 L1123.43 453.79 L1125.1 452.16 L1126.75 450.53 L1128.39 448.9 L1130.01 447.27 L1131.61 445.64 L1133.19 444.01 L1134.76 442.38 L1136.3 440.74 L1137.83 439.11 L1139.35 437.48 L1140.84 435.85 L1142.31 434.22 L1143.77 432.59 L1145.21 430.96 L1146.63 429.33 L1148.03 427.7 L1149.42 426.06 L1150.78 424.43 L1152.13 422.8 L1153.45 421.17 L1154.76 419.54 L1156.05 417.91 L1157.32 416.28 L1158.57 414.65 L1159.8 413.02 L1161.01 411.39 L1162.2 409.75 L1163.37 408.12 L1164.52 406.49 L1165.65 404.86 L1166.76 403.23 L1167.85 401.6 L1168.92 399.97 L1169.97 398.34 L1171 396.71 L1172.01 395.08 L1173 393.44 L1173.97 391.81 L1174.92 390.18 L1175.84 388.55 L1176.75 386.92 L1177.63 385.29 L1178.5 383.66 L1179.34 382.03 L1180.16 380.4 L1180.96 378.77 L1181.74 377.13 L1182.5 375.5 L1183.24 373.87 L1183.95 372.24 L1184.65 370.61 L1185.32 368.98 L1185.97 367.35 L1186.6 365.72 L1187.21 364.09 L1187.79 362.46 L1188.36 360.82 L1188.9 359.19 L1189.42 357.56 L1189.92 355.93 L1190.4 354.3 L1190.85 352.67 L1191.29 351.04 L1191.7 349.41 L1192.09 347.78 L1192.45 346.15 L1192.8 344.51 L1193.12 342.88 L1193.42 341.25 L1193.7 339.62 L1193.96 337.99 L1194.19 336.36 L1194.4 334.73 L1194.59 333.1 L1194.76 331.47 L1194.9 329.84 L1195.03 328.2 L1195.13 326.57 L1195.2 324.94 L1195.26 323.31 L1195.29 321.68 L1195.3 320.05 L1195.29 318.42 L1195.26 316.79 L1195.2 315.17 L1195.13 313.54 L1195.03 311.91 L1194.9 310.28 L1194.76 308.66 L1194.59 307.03 L1194.4 305.4 L1194.19 303.77 L1193.96 302.14 L1193.7 300.52 L1193.42 298.89 L1193.12 297.26 L1192.8 295.63 L1192.45 294.01 L1192.09 292.38 L1191.7 290.75 L1191.29 289.12 L1190.85 287.49 L1190.4 285.87 L1189.92 284.24 L1189.42 282.61 L1188.9 280.98 L1188.36 279.36 L1187.79 277.73 L1187.21 276.1 L1186.6 274.47 L1185.97 272.84 L1185.32 271.22 L1184.65 269.59 L1183.95 267.96 L1183.24 266.33 L1182.5 264.7 L1181.74 263.08 L1180.96 261.45 L1180.16 259.82 L1179.34 258.19 L1178.5 256.57 L1177.63 254.94 L1176.75 253.31 L1175.84 251.68 L1174.92 250.05 L1173.97 248.43 L1173 246.8 L1172.01 245.17 L1171 243.54 L1169.97 241.92 L1168.92 240.29 L1167.85 238.66 L1166.76 237.03 L1165.65 235.4 L1164.52 233.78 L1163.37 232.15 L1162.2 230.52 L1161.01 228.89 L1159.8 227.27 L1158.57 225.64 L1157.32 224.01 L1156.05 222.38 L1154.76 220.75 L1153.45 219.13 L1152.13 217.5 L1150.78 215.87 L1149.42 214.24 L1148.03 212.62 L1146.63 210.99 L1145.21 209.36 L1143.77 207.73 L1142.31 206.1 L1140.84 204.48 L1139.35 202.85 L1137.83 201.22 L1136.3 199.59 L1134.76 197.97 L1133.19 196.34 L1131.61 194.71 L1130.01 193.08 L1128.39 191.45 L1126.75 189.83 L1125.1 188.2 L1123.43 186.57 L1121.75 184.94 L1120.04 183.31 L1118.33 181.69 L1116.59 180.06 L1114.84 178.43 L1113.07 176.8 L1111.29 175.18 L1109.49 173.55 L1107.67 171.92 L1105.84 170.29 L1103.99 168.66 L1102.13 167.04 L1100.25 165.41 L1098.36 163.78 L1096.45 162.15 L1094.53 160.53 L1092.59 158.9 L1090.64 157.27 L1088.67 155.64 L1086.69 154.01 L1084.7 152.39 L1082.69 150.76 L1080.67 149.13 L1078.63 147.5 L1076.59 145.88 L1074.52 144.25 L1072.45 142.62 L1070.36 140.99 L1068.26 139.36 L1066.15 137.74 L1064.02 136.11 L1061.88 134.48 L1059.73 132.85 L1057.57 131.23 L1055.39 129.6 L1053.21 127.97 L1051.01 126.34 L1048.8 124.71 L1046.58 123.09 L1044.35 121.46 L1042.11 119.83 L1039.86 118.2 L1037.59 116.58 L1035.32 114.95 L1033.04 113.32 L1030.74 111.69 L1028.44 110.06 L1026.13 108.44 L1023.81 106.81 L1021.48 105.18 L1019.14 103.55 L1016.79 101.92 L1014.43 100.3 L1012.06 98.67 L1009.69 97.04 L1007.3 95.41 L1004.91 93.79 L1002.51 92.16 L1000.11 90.53 L997.69 88.9 L995.27 87.27 L992.84 85.65 L990.41 84.02 L987.97 82.39 L985.52 80.76 L983.06 79.14 L980.6 77.51 L978.14 75.88 L975.66 74.25 L973.18 72.62 L970.7 71 L968.21 69.37 L965.72 67.74 L963.22 66.11 L960.72 64.49 L958.21 62.86 L955.7 61.23 L953.18 59.6 L950.66 57.97 L948.14 56.35 L945.61 54.72 L943.08 53.09 L940.54 51.46 L938.01 49.84 L935.47 48.21 L932.93 46.58 L930.38 44.95 L927.84 43.32 L925.29 41.7 L922.74 40.07 L920.19 38.44 L917.63 36.81 L915.08 35.19 L912.53 33.56 L909.97 31.93 L907.41 30.3 L904.86 28.67 L902.3 27.05" stroke-dashoffset="0.0"/><path d="M902.3 613.63 L904.43 612 L906.56 610.37 L908.69 608.74 L910.82 607.11 L912.95 605.48 L915.08 603.84 L917.21 602.21 L919.33 600.58 L921.46 598.95 L923.58 597.32 L925.7 595.69 L927.82 594.06 L929.94 592.43 L932.06 590.8 L934.17 589.16 L936.28 587.53 L938.39 585.9 L940.5 584.27 L942.6 582.64 L944.7 581.01 L946.8 579.38 L948.89 577.75 L950.98 576.12 L953.07 574.49 L955.15 572.86 L957.23 571.22 L959.3 569.59 L961.37 567.96 L963.44 566.33 L965.5 564.7 L967.55 563.07 L969.6 561.44 L971.65 559.81 L973.69 558.18 L975.72 556.55 L977.75 554.91 L979.78 553.28 L981.79 551.65 L983.81 550.02 L985.81 548.39 L987.81 546.76 L989.8 545.13 L991.79 543.5 L993.77 541.87 L995.74 540.24 L997.7 538.6 L999.66 536.97 L1001.61 535.34 L1003.56 533.71 L1005.49 532.08 L1007.42 530.45 L1009.34 528.82 L1011.25 527.19 L1013.15 525.56 L1015.05 523.92 L1016.93 522.29 L1018.81 520.66 L1020.68 519.03 L1022.54 517.4 L1024.38 515.77 L1026.23 514.14 L1028.06 512.51 L1029.88 510.88 L1031.69 509.25 L1033.49 507.62 L1035.28 505.98 L1037.07 504.35 L1038.84 502.72 L1040.6 501.09 L1042.35 499.46 L1044.09 497.83 L1045.82 496.2 L1047.54 494.57 L1049.25 492.94 L1050.94 491.31 L1052.63 489.67 L1054.3 488.04 L1055.96 486.41 L1057.61 484.78 L1059.25 483.15 L1060.88 481.52 L1062.49 479.89 L1064.09 478.26 L1065.68 476.63 L1067.26 475 L1068.82 473.36 L1070.38 471.73 L1071.91 470.1 L1073.44 468.47 L1074.95 466.84 L1076.45 465.21 L1077.94 463.58 L1079.41 461.95 L1080.87 460.32 L1082.32 458.69 L1083.75 457.05 L1085.17 455.42 L1086.58 453.79 L1087.97 452.16 L1089.35 450.53 L1090.71 448.9 L1092.06 447.27 L1093.39 445.64 L1094.71 444.01 L1096.01 442.38 L1097.3 440.74 L1098.58 439.11 L1099.84 437.48 L1101.08 435.85 L1102.31 434.22 L1103.53 432.59 L1104.73 430.96 L1105.91 429.33 L1107.08 427.7 L1108.23 426.06 L1109.37 424.43 L1110.49 422.8 L1111.59 421.17 L1112.68 419.54 L1113.76 417.91 L1114.81 416.28 L1115.86 414.65 L1116.88 413.02 L1117.89 411.39 L1118.88 409.75 L1119.86 408.12 L1120.82 406.49 L1121.76 404.86 L1122.68 403.23 L1123.59 401.6 L1124.49 399.97 L1125.36 398.34 L1126.22 396.71 L1127.06 395.08 L1127.88 393.44 L1128.69 391.81 L1129.48 390.18 L1130.25 388.55 L1131.01 386.92 L1131.74 385.29 L1132.46 383.66 L1133.17 382.03 L1133.85 380.4 L1134.52 378.77 L1135.17 377.13 L1135.8 375.5 L1136.42 373.87 L1137.01 372.24 L1137.59 370.61 L1138.15 368.98 L1138.69 367.35 L1139.22 365.72 L1139.72 364.09 L1140.21 362.46 L1140.68 360.82 L1141.13 359.19 L1141.57 357.56 L1141.98 355.93 L1142.38 354.3 L1142.76 352.67 L1143.12 351.04 L1143.46 349.41 L1143.79 347.78 L1144.09 346.15 L1144.38 344.51 L1144.65 342.88 L1144.9 341.25 L1145.13 339.62 L1145.35 337.99 L1145.54 336.36 L1145.72 334.73 L1145.88 333.1 L1146.01 331.47 L1146.14 329.84 L1146.24 328.2 L1146.32 326.57 L1146.39 324.94 L1146.43 323.31 L1146.46 321.68 L1146.47 320.05 L1146.46 318.42 L1146.43 316.79 L1146.39 315.17 L1146.32 313.54 L1146.24 311.91 L1146.14 310.28 L1146.01 308.66 L1145.88 307.03 L1145.72 305.4 L1145.54 303.77 L1145.35 302.14 L1145.13 300.52 L1144.9 298.89 L1144.65 297.26 L1144.38 295.63 L1144.09 294.01 L1143.79 292.38 L1143.46 290.75 L1143.12 289.12 L1142.76 287.49 L1142.38 285.87 L1141.98 284.24 L1141.57 282.61 L1141.13 280.98 L1140.68 279.36 L1140.21 277.73 L1139.72 276.1 L1139.22 274.47 L1138.69 272.84 L1138.15 271.22 L1137.59 269.59 L1137.01 267.96 L1136.42 266.33 L1135.8 264.7 L1135.17 263.08 L1134.52 261.45 L1133.85 259.82 L1133.17 258.19 L1132.46 256.57 L1131.74 254.94 L1131.01 253.31 L1130.25 251.68 L1129.48 250.05 L1128.69 248.43 L1127.88 246.8 L1127.06 245.17 L1126.22 243.54 L1125.36 241.92 L1124.49 240.29 L1123.59 238.66 L1122.68 237.03 L1121.76 235.4 L1120.82 233.78 L1119.86 232.15 L1118.88 230.52 L1117.89 228.89 L1116.88 227.27 L1115.86 225.64 L1114.81 224.01 L1113.76 222.38 L1112.68 220.75 L1111.59 219.13 L1110.49 217.5 L1109.37 215.87 L1108.23 214.24 L1107.08 212.62 L1105.91 210.99 L1104.73 209.36 L1103.53 207.73 L1102.31 206.1 L1101.08 204.48 L1099.84 202.85 L1098.58 201.22 L1097.3 199.59 L1096.01 197.97 L1094.71 196.34 L1093.39 194.71 L1092.06 193.08 L1090.71 191.45 L1089.35 189.83 L1087.97 188.2 L1086.58 186.57 L1085.17 184.94 L1083.75 183.31 L1082.32 181.69 L1080.87 180.06 L1079.41 178.43 L1077.94 176.8 L1076.45 175.18 L1074.95 173.55 L1073.44 171.92 L1071.91 170.29 L1070.38 168.66 L1068.82 167.04 L1067.26 165.41 L1065.68 163.78 L1064.09 162.15 L1062.49 160.53 L1060.88 158.9 L1059.25 157.27 L1057.61 155.64 L1055.96 154.01 L1054.3 152.39 L1052.63 150.76 L1050.94 149.13 L1049.25 147.5 L1047.54 145.88 L1045.82 144.25 L1044.09 142.62 L1042.35 140.99 L1040.6 139.36 L1038.84 137.74 L1037.07 136.11 L1035.28 134.48 L1033.49 132.85 L1031.69 131.23 L1029.88 129.6 L1028.06 127.97 L1026.23 126.34 L1024.38 124.71 L1022.54 123.09 L1020.68 121.46 L1018.81 119.83 L1016.93 118.2 L1015.05 116.58 L1013.15 114.95 L1011.25 113.32 L1009.34 111.69 L1007.42 110.06 L1005.49 108.44 L1003.56 106.81 L1001.61 105.18 L999.66 103.55 L997.7 101.92 L995.74 100.3 L993.77 98.67 L991.79 97.04 L989.8 95.41 L987.81 93.79 L985.81 92.16 L983.81 90.53 L981.79 88.9 L979.78 87.27 L977.75 85.65 L975.72 84.02 L973.69 82.39 L971.65 80.76 L969.6 79.14 L967.55 77.51 L965.5 75.88 L963.44 74.25 L961.37 72.62 L959.3 71 L957.23 69.37 L955.15 67.74 L953.07 66.11 L950.98 64.49 L948.89 62.86 L946.8 61.23 L944.7 59.6 L942.6 57.97 L940.5 56.35 L938.39 54.72 L936.28 53.09 L934.17 51.46 L932.06 49.84 L929.94 48.21 L927.82 46.58 L925.7 44.95 L923.58 43.32 L921.46 41.7 L919.33 40.07 L917.21 38.44 L915.08 36.81 L912.95 35.19 L910.82 33.56 L908.69 31.93 L906.56 30.3 L904.43 28.67 L902.3 27.05" stroke-dashoffset="0.0"/><path d="M902.3 613.63 L904 612 L905.71 610.37 L907.41 608.74 L909.12 607.11 L910.82 605.48 L912.52 603.84 L914.22 602.21 L915.93 600.58 L917.63 598.95 L919.32 597.32 L921.02 595.69 L922.72 594.06 L924.41 592.43 L926.11 590.8 L927.8 589.16 L929.49 587.53 L931.17 585.9 L932.86 584.27 L934.54 582.64 L936.22 581.01 L937.9 579.38 L939.57 577.75 L941.24 576.12 L942.91 574.49 L944.58 572.86 L946.24 571.22 L947.9 569.59 L949.56 567.96 L951.21 566.33 L952.86 564.7 L954.5 563.07 L956.14 561.44 L957.78 559.81 L959.41 558.18 L961.04 556.55 L962.66 554.91 L964.28 553.28 L965.9 551.65 L967.5 550.02 L969.11 548.39 L970.71 546.76 L972.3 545.13 L973.89 543.5 L975.47 541.87 L977.05 540.24 L978.62 538.6 L980.19 536.97 L981.75 535.34 L983.3 533.71 L984.85 532.08 L986.39 530.45 L987.93 528.82 L989.46 527.19 L990.98 525.56 L992.5 523.92 L994 522.29 L995.51 520.66 L997 519.03 L998.49 517.4 L999.97 515.77 L1001.44 514.14 L1002.91 512.51 L1004.36 510.88 L1005.81 509.25 L1007.25 507.62 L1008.69 505.98 L1010.11 504.35 L1011.53 502.72 L1012.94 501.09 L1014.34 499.46 L1015.73 497.83 L1017.12 496.2 L1018.49 494.57 L1019.86 492.94 L1021.21 491.31 L1022.56 489.67 L1023.9 488.04 L1025.23 486.41 L1026.55 484.78 L1027.86 483.15 L1029.16 481.52 L1030.45 479.89 L1031.73 478.26 L1033.01 476.63 L1034.27 475 L1035.52 473.36 L1036.76 471.73 L1037.99 470.1 L1039.21 468.47 L1040.42 466.84 L1041.62 465.21 L1042.81 463.58 L1043.99 461.95 L1045.16 460.32 L1046.32 458.69 L1047.46 457.05 L1048.6 455.42 L1049.72 453.79 L1050.83 452.16 L1051.94 450.53 L1053.03 448.9 L1054.1 447.27 L1055.17 445.64 L1056.23 444.01 L1057.27 442.38 L1058.3 440.74 L1059.32 439.11 L1060.33 437.48 L1061.33 435.85 L1062.31 434.22 L1063.28 432.59 L1064.24 430.96 L1065.19 429.33 L1066.12 427.7 L1067.04 426.06 L1067.95 424.43 L1068.85 422.8 L1069.74 421.17 L1070.61 419.54 L1071.47 417.91 L1072.31 416.28 L1073.14 414.65 L1073.96 413.02 L1074.77 411.39 L1075.57 409.75 L1076.35 408.12 L1077.11 406.49 L1077.87 404.86 L1078.61 403.23 L1079.33 401.6 L1080.05 399.97 L1080.75 398.34 L1081.43 396.71 L1082.11 395.08 L1082.77 393.44 L1083.41 391.81 L1084.04 390.18 L1084.66 388.55 L1085.27 386.92 L1085.86 385.29 L1086.43 383.66 L1086.99 382.03 L1087.54 380.4 L1088.08 378.77 L1088.6 377.13 L1089.1 375.5 L1089.59 373.87 L1090.07 372.24 L1090.53 370.61 L1090.98 368.98 L1091.41 367.35 L1091.83 365.72 L1092.24 364.09 L1092.63 362.46 L1093.01 360.82 L1093.37 359.19 L1093.71 357.56 L1094.05 355.93 L1094.37 354.3 L1094.67 352.67 L1094.96 351.04 L1095.23 349.41 L1095.49 347.78 L1095.74 346.15 L1095.96 344.51 L1096.18 342.88 L1096.38 341.25 L1096.57 339.62 L1096.74 337.99 L1096.89 336.36 L1097.03 334.73 L1097.16 333.1 L1097.27 331.47 L1097.37 329.84 L1097.45 328.2 L1097.52 326.57 L1097.57 324.94 L1097.61 323.31 L1097.63 321.68 L1097.64 320.05 L1097.63 318.42 L1097.61 316.79 L1097.57 315.17 L1097.52 313.54 L1097.45 311.91 L1097.37 310.28 L1097.27 308.66 L1097.16 307.03 L1097.03 305.4 L1096.89 303.77 L1096.74 302.14 L1096.57 300.52 L1096.38 298.89 L1096.18 297.26 L1095.96 295.63 L1095.74 294.01 L1095.49 292.38 L1095.23 290.75 L1094.96 289.12 L1094.67 287.49 L1094.37 285.87 L1094.05 284.24 L1093.71 282.61 L1093.37 280.98 L1093.01 279.36 L1092.63 277.73 L1092.24 276.1 L1091.83 274.47 L1091.41 272.84 L1090.98 271.22 L1090.53 269.59 L1090.07 267.96 L1089.59 266.33 L1089.1 264.7 L1088.6 263.08 L1088.08 261.45 L1087.54 259.82 L1086.99 258.19 L1086.43 256.57 L1085.86 254.94 L1085.27 253.31 L1084.66 251.68 L1084.04 250.05 L1083.41 248.43 L1082.77 246.8 L1082.11 245.17 L1081.43 243.54 L1080.75 241.92 L1080.05 240.29 L1079.33 238.66 L1078.61 237.03 L1077.87 235.4 L1077.11 233.78 L1076.35 232.15 L1075.57 230.52 L1074.77 228.89 L1073.96 227.27 L1073.14 225.64 L1072.31 224.01 L1071.47 222.38 L1070.61 220.75 L1069.74 219.13 L1068.85 217.5 L1067.95 215.87 L1067.04 214.24 L1066.12 212.62 L1065.19 210.99 L1064.24 209.36 L1063.28 207.73 L1062.31 206.1 L1061.33 204.48 L1060.33 202.85 L1059.32 201.22 L1058.3 199.59 L1057.27 197.97 L1056.23 196.34 L1055.17 194.71 L1054.1 193.08 L1053.03 191.45 L1051.94 189.83 L1050.83 188.2 L1049.72 186.57 L1048.6 184.94 L1047.46 183.31 L1046.32 181.69 L1045.16 180.06 L1043.99 178.43 L1042.81 176.8 L1041.62 175.18 L1040.42 173.55 L1039.21 171.92 L1037.99 170.29 L1036.76 168.66 L1035.52 167.04 L1034.27 165.41 L1033.01 163.78 L1031.73 162.15 L1030.45 160.53 L1029.16 158.9 L1027.86 157.27 L1026.55 155.64 L1025.23 154.01 L1023.9 152.39 L1022.56 150.76 L1021.21 149.13 L1019.86 147.5 L1018.49 145.88 L1017.12 144.25 L1015.73 142.62 L1014.34 140.99 L1012.94 139.36 L1011.53 137.74 L1010.11 136.11 L1008.69 134.48 L1007.25 132.85 L1005.81 131.23 L1004.36 129.6 L1002.91 127.97 L1001.44 126.34 L999.97 124.71 L998.49 123.09 L997 121.46 L995.51 119.83 L994 118.2 L992.5 116.58 L990.98 114.95 L989.46 113.32 L987.93 111.69 L986.39 110.06 L984.85 108.44 L983.3 106.81 L981.75 105.18 L980.19 103.55 L978.62 101.92 L977.05 100.3 L975.47 98.67 L973.89 97.04 L972.3 95.41 L970.71 93.79 L969.11 92.16 L967.5 90.53 L965.9 88.9 L964.28 87.27 L962.66 85.65 L961.04 84.02 L959.41 82.39 L957.78 80.76 L956.14 79.14 L954.5 77.51 L952.86 75.88 L951.21 74.25 L949.56 72.62 L947.9 71 L946.24 69.37 L944.58 67.74 L942.91 66.11 L941.24 64.49 L939.57 62.86 L937.9 61.23 L936.22 59.6 L934.54 57.97 L932.86 56.35 L931.17 54.72 L929.49 53.09 L927.8 51.46 L926.11 49.84 L924.41 48.21 L922.72 46.58 L921.02 44.95 L919.32 43.32 L917.63 41.7 L915.93 40.07 L914.22 38.44 L912.52 36.81 L910.82 35.19 L909.12 33.56 L907.41 31.93 L905.71 30.3 L904 28.67 L902.3 27.05" stroke-dashoffset="0.0"/><path d="M902.3 613.63 L903.58 612 L904.86 610.37 L906.13 608.74 L907.41 607.11 L908.69 605.48 L909.97 603.84 L911.24 602.21 L912.52 600.58 L913.79 598.95 L915.07 597.32 L916.34 595.69 L917.61 594.06 L918.88 592.43 L920.15 590.8 L921.42 589.16 L922.69 587.53 L923.95 585.9 L925.22 584.27 L926.48 582.64 L927.74 581.01 L929 579.38 L930.25 577.75 L931.51 576.12 L932.76 574.49 L934.01 572.86 L935.26 571.22 L936.5 569.59 L937.74 567.96 L938.98 566.33 L940.22 564.7 L941.45 563.07 L942.68 561.44 L943.91 559.81 L945.13 558.18 L946.35 556.55 L947.57 554.91 L948.79 553.28 L950 551.65 L951.2 550.02 L952.41 548.39 L953.61 546.76 L954.8 545.13 L955.99 543.5 L957.18 541.87 L958.36 540.24 L959.54 538.6 L960.72 536.97 L961.89 535.34 L963.05 533.71 L964.21 532.08 L965.37 530.45 L966.52 528.82 L967.67 527.19 L968.81 525.56 L969.95 523.92 L971.08 522.29 L972.2 520.66 L973.33 519.03 L974.44 517.4 L975.55 515.77 L976.66 514.14 L977.75 512.51 L978.85 510.88 L979.93 509.25 L981.02 507.62 L982.09 505.98 L983.16 504.35 L984.22 502.72 L985.28 501.09 L986.33 499.46 L987.37 497.83 L988.41 496.2 L989.44 494.57 L990.47 492.94 L991.48 491.31 L992.5 489.67 L993.5 488.04 L994.5 486.41 L995.49 484.78 L996.47 483.15 L997.45 481.52 L998.41 479.89 L999.38 478.26 L1000.33 476.63 L1001.28 475 L1002.21 473.36 L1003.15 471.73 L1004.07 470.1 L1004.98 468.47 L1005.89 466.84 L1006.79 465.21 L1007.68 463.58 L1008.57 461.95 L1009.44 460.32 L1010.31 458.69 L1011.17 457.05 L1012.02 455.42 L1012.87 453.79 L1013.7 452.16 L1014.53 450.53 L1015.34 448.9 L1016.15 447.27 L1016.95 445.64 L1017.75 444.01 L1018.53 442.38 L1019.3 440.74 L1020.07 439.11 L1020.82 437.48 L1021.57 435.85 L1022.31 434.22 L1023.04 432.59 L1023.76 430.96 L1024.47 429.33 L1025.17 427.7 L1025.86 426.06 L1026.54 424.43 L1027.21 422.8 L1027.88 421.17 L1028.53 419.54 L1029.17 417.91 L1029.81 416.28 L1030.43 414.65 L1031.05 413.02 L1031.65 411.39 L1032.25 409.75 L1032.83 408.12 L1033.41 406.49 L1033.98 404.86 L1034.53 403.23 L1035.08 401.6 L1035.61 399.97 L1036.14 398.34 L1036.65 396.71 L1037.16 395.08 L1037.65 393.44 L1038.13 391.81 L1038.61 390.18 L1039.07 388.55 L1039.52 386.92 L1039.97 385.29 L1040.4 383.66 L1040.82 382.03 L1041.23 380.4 L1041.63 378.77 L1042.02 377.13 L1042.4 375.5 L1042.77 373.87 L1043.13 372.24 L1043.47 370.61 L1043.81 368.98 L1044.14 367.35 L1044.45 365.72 L1044.75 364.09 L1045.05 362.46 L1045.33 360.82 L1045.6 359.19 L1045.86 357.56 L1046.11 355.93 L1046.35 354.3 L1046.58 352.67 L1046.79 351.04 L1047 349.41 L1047.19 347.78 L1047.38 346.15 L1047.55 344.51 L1047.71 342.88 L1047.86 341.25 L1048 339.62 L1048.13 337.99 L1048.24 336.36 L1048.35 334.73 L1048.45 333.1 L1048.53 331.47 L1048.6 329.84 L1048.66 328.2 L1048.71 326.57 L1048.75 324.94 L1048.78 323.31 L1048.8 321.68 L1048.8 320.05 L1048.8 318.42 L1048.78 316.79 L1048.75 315.17 L1048.71 313.54 L1048.66 311.91 L1048.6 310.28 L1048.53 308.66 L1048.45 307.03 L1048.35 305.4 L1048.24 303.77 L1048.13 302.14 L1048 300.52 L1047.86 298.89 L1047.71 297.26 L1047.55 295.63 L1047.38 294.01 L1047.19 292.38 L1047 290.75 L1046.79 289.12 L1046.58 287.49 L1046.35 285.87 L1046.11 284.24 L1045.86 282.61 L1045.6 280.98 L1045.33 279.36 L1045.05 277.73 L1044.75 276.1 L1044.45 274.47 L1044.14 272.84 L1043.81 271.22 L1043.47 269.59 L1043.13 267.96 L1042.77 266.33 L1042.4 264.7 L1042.02 263.08 L1041.63 261.45 L1041.23 259.82 L1040.82 258.19 L1040.4 256.57 L1039.97 254.94 L1039.52 253.31 L1039.07 251.68 L1038.61 250.05 L1038.13 248.43 L1037.65 246.8 L1037.16 245.17 L1036.65 243.54 L1036.14 241.92 L1035.61 240.29 L1035.08 238.66 L1034.53 237.03 L1033.98 235.4 L1033.41 233.78 L1032.83 232.15 L1032.25 230.52 L1031.65 228.89 L1031.05 227.27 L1030.43 225.64 L1029.81 224.01 L1029.17 222.38 L1028.53 220.75 L1027.88 219.13 L1027.21 217.5 L1026.54 215.87 L1025.86 214.24 L1025.17 212.62 L1024.47 210.99 L1023.76 209.36 L1023.04 207.73 L1022.31 206.1 L1021.57 204.48 L1020.82 202.85 L1020.07 201.22 L1019.3 199.59 L1018.53 197.97 L1017.75 196.34 L1016.95 194.71 L1016.15 193.08 L1015.34 191.45 L1014.53 189.83 L1013.7 188.2 L1012.87 186.57 L1012.02 184.94 L1011.17 183.31 L1010.31 181.69 L1009.44 180.06 L1008.57 178.43 L1007.68 176.8 L1006.79 175.18 L1005.89 173.55 L1004.98 171.92 L1004.07 170.29 L1003.15 168.66 L1002.21 167.04 L1001.28 165.41 L1000.33 163.78 L999.38 162.15 L998.41 160.53 L997.45 158.9 L996.47 157.27 L995.49 155.64 L994.5 154.01 L993.5 152.39 L992.5 150.76 L991.48 149.13 L990.47 147.5 L989.44 145.88 L988.41 144.25 L987.37 142.62 L986.33 140.99 L985.28 139.36 L984.22 137.74 L983.16 136.11 L982.09 134.48 L981.02 132.85 L979.93 131.23 L978.85 129.6 L977.75 127.97 L976.66 126.34 L975.55 124.71 L974.44 123.09 L973.33 121.46 L972.2 119.83 L971.08 118.2 L969.95 116.58 L968.81 114.95 L967.67 113.32 L966.52 111.69 L965.37 110.06 L964.21 108.44 L963.05 106.81 L961.89 105.18 L960.72 103.55 L959.54 101.92 L958.36 100.3 L957.18 98.67 L955.99 97.04 L954.8 95.41 L953.61 93.79 L952.41 92.16 L951.2 90.53 L950 88.9 L948.79 87.27 L947.57 85.65 L946.35 84.02 L945.13 82.39 L943.91 80.76 L942.68 79.14 L941.45 77.51 L940.22 75.88 L938.98 74.25 L937.74 72.62 L936.5 71 L935.26 69.37 L934.01 67.74 L932.76 66.11 L931.51 64.49 L930.25 62.86 L929 61.23 L927.74 59.6 L926.48 57.97 L925.22 56.35 L923.95 54.72 L922.69 53.09 L921.42 51.46 L920.15 49.84 L918.88 48.21 L917.61 46.58 L916.34 44.95 L915.07 43.32 L913.79 41.7 L912.52 40.07 L911.24 38.44 L909.97 36.81 L908.69 35.19 L907.41 33.56 L906.13 31.93 L904.86 30.3 L903.58 28.67 L902.3 27.05" stroke-dashoffset="0.0"/><path d="M902.3 613.63 L903.15 612 L904 610.37 L904.86 608.74 L905.71 607.11 L906.56 605.48 L907.41 603.84 L908.26 602.21 L909.11 600.58 L909.96 598.95 L910.81 597.32 L911.66 595.69 L912.51 594.06 L913.36 592.43 L914.2 590.8 L915.05 589.16 L915.89 587.53 L916.74 585.9 L917.58 584.27 L918.42 582.64 L919.26 581.01 L920.1 579.38 L920.94 577.75 L921.77 576.12 L922.61 574.49 L923.44 572.86 L924.27 571.22 L925.1 569.59 L925.93 567.96 L926.75 566.33 L927.58 564.7 L928.4 563.07 L929.22 561.44 L930.04 559.81 L930.86 558.18 L931.67 556.55 L932.48 554.91 L933.29 553.28 L934.1 551.65 L934.9 550.02 L935.7 548.39 L936.5 546.76 L937.3 545.13 L938.1 543.5 L938.89 541.87 L939.68 540.24 L940.46 538.6 L941.25 536.97 L942.03 535.34 L942.8 533.71 L943.58 532.08 L944.35 530.45 L945.11 528.82 L945.88 527.19 L946.64 525.56 L947.4 523.92 L948.15 522.29 L948.9 520.66 L949.65 519.03 L950.39 517.4 L951.13 515.77 L951.87 514.14 L952.6 512.51 L953.33 510.88 L954.06 509.25 L954.78 507.62 L955.49 505.98 L956.21 504.35 L956.92 502.72 L957.62 501.09 L958.32 499.46 L959.02 497.83 L959.71 496.2 L960.4 494.57 L961.08 492.94 L961.76 491.31 L962.43 489.67 L963.1 488.04 L963.76 486.41 L964.42 484.78 L965.08 483.15 L965.73 481.52 L966.38 479.89 L967.02 478.26 L967.65 476.63 L968.28 475 L968.91 473.36 L969.53 471.73 L970.15 470.1 L970.76 468.47 L971.36 466.84 L971.96 465.21 L972.56 463.58 L973.15 461.95 L973.73 460.32 L974.31 458.69 L974.88 457.05 L975.45 455.42 L976.01 453.79 L976.57 452.16 L977.12 450.53 L977.66 448.9 L978.2 447.27 L978.74 445.64 L979.26 444.01 L979.79 442.38 L980.3 440.74 L980.81 439.11 L981.32 437.48 L981.81 435.85 L982.3 434.22 L982.79 432.59 L983.27 430.96 L983.74 429.33 L984.21 427.7 L984.67 426.06 L985.13 424.43 L985.58 422.8 L986.02 421.17 L986.45 419.54 L986.88 417.91 L987.31 416.28 L987.72 414.65 L988.13 413.02 L988.54 411.39 L988.93 409.75 L989.32 408.12 L989.71 406.49 L990.08 404.86 L990.45 403.23 L990.82 401.6 L991.17 399.97 L991.52 398.34 L991.87 396.71 L992.2 395.08 L992.53 393.44 L992.86 391.81 L993.17 390.18 L993.48 388.55 L993.78 386.92 L994.08 385.29 L994.37 383.66 L994.65 382.03 L994.92 380.4 L995.19 378.77 L995.45 377.13 L995.7 375.5 L995.95 373.87 L996.18 372.24 L996.42 370.61 L996.64 368.98 L996.86 367.35 L997.07 365.72 L997.27 364.09 L997.46 362.46 L997.65 360.82 L997.83 359.19 L998.01 357.56 L998.17 355.93 L998.33 354.3 L998.48 352.67 L998.63 351.04 L998.77 349.41 L998.9 347.78 L999.02 346.15 L999.13 344.51 L999.24 342.88 L999.34 341.25 L999.43 339.62 L999.52 337.99 L999.6 336.36 L999.67 334.73 L999.73 333.1 L999.79 331.47 L999.83 329.84 L999.88 328.2 L999.91 326.57 L999.93 324.94 L999.95 323.31 L999.96 321.68 L999.97 320.05 L999.96 318.42 L999.95 316.79 L999.93 315.17 L999.91 313.54 L999.88 311.91 L999.83 310.28 L999.79 308.66 L999.73 307.03 L999.67 305.4 L999.6 303.77 L999.52 302.14 L999.43 300.52 L999.34 298.89 L999.24 297.26 L999.13 295.63 L999.02 294.01 L998.9 292.38 L998.77 290.75 L998.63 289.12 L998.48 287.49 L998.33 285.87 L998.17 284.24 L998.01 282.61 L997.83 280.98 L997.65 279.36 L997.46 277.73 L997.27 276.1 L997.07 274.47 L996.86 272.84 L996.64 271.22 L996.42 269.59 L996.18 267.96 L995.95 266.33 L995.7 264.7 L995.45 263.08 L995.19 261.45 L994.92 259.82 L994.65 258.19 L994.37 256.57 L994.08 254.94 L993.78 253.31 L993.48 251.68 L993.17 250.05 L992.86 248.43 L992.53 246.8 L992.2 245.17 L991.87 243.54 L991.52 241.92 L991.17 240.29 L990.82 238.66 L990.45 237.03 L990.08 235.4 L989.71 233.78 L989.32 232.15 L988.93 230.52 L988.54 228.89 L988.13 227.27 L987.72 225.64 L987.31 224.01 L986.88 222.38 L986.45 220.75 L986.02 219.13 L985.58 217.5 L985.13 215.87 L984.67 214.24 L984.21 212.62 L983.74 210.99 L983.27 209.36 L982.79 207.73 L982.3 206.1 L981.81 204.48 L981.32 202.85 L980.81 201.22 L980.3 199.59 L979.79 197.97 L979.26 196.34 L978.74 194.71 L978.2 193.08 L977.66 191.45 L977.12 189.83 L976.57 188.2 L976.01 186.57 L975.45 184.94 L974.88 183.31 L974.31 181.69 L973.73 180.06 L973.15 178.43 L972.56 176.8 L971.96 175.18 L971.36 173.55 L970.76 171.92 L970.15 170.29 L969.53 168.66 L968.91 167.04 L968.28 165.41 L967.65 163.78 L967.02 162.15 L966.38 160.53 L965.73 158.9 L965.08 157.27 L964.42 155.64 L963.76 154.01 L963.1 152.39 L962.43 150.76 L961.76 149.13 L961.08 147.5 L960.4 145.88 L959.71 144.25 L959.02 142.62 L958.32 140.99 L957.62 139.36 L956.92 137.74 L956.21 136.11 L955.49 134.48 L954.78 132.85 L954.06 131.23 L953.33 129.6 L952.6 127.97 L951.87 126.34 L951.13 124.71 L950.39 123.09 L949.65 121.46 L948.9 119.83 L948.15 118.2 L947.4 116.58 L946.64 114.95 L945.88 113.32 L945.11 111.69 L944.35 110.06 L943.58 108.44 L942.8 106.81 L942.03 105.18 L941.25 103.55 L940.46 101.92 L939.68 100.3 L938.89 98.67 L938.1 97.04 L937.3 95.41 L936.5 93.79 L935.7 92.16 L934.9 90.53 L934.1 88.9 L933.29 87.27 L932.48 85.65 L931.67 84.02 L930.86 82.39 L930.04 80.76 L929.22 79.14 L928.4 77.51 L927.58 75.88 L926.75 74.25 L925.93 72.62 L925.1 71 L924.27 69.37 L923.44 67.74 L922.61 66.11 L921.77 64.49 L920.94 62.86 L920.1 61.23 L919.26 59.6 L918.42 57.97 L917.58 56.35 L916.74 54.72 L915.89 53.09 L915.05 51.46 L914.2 49.84 L913.36 48.21 L912.51 46.58 L911.66 44.95 L910.81 43.32 L909.96 41.7 L909.11 40.07 L908.26 38.44 L907.41 36.81 L906.56 35.19 L905.71 33.56 L904.86 31.93 L904 30.3 L903.15 28.67 L902.3 27.05" stroke-dashoffset="0.0"/><path d="M902.3 613.63 L902.73 612 L903.15 610.37 L903.58 608.74 L904 607.11 L904.43 605.48 L904.86 603.84 L905.28 602.21 L905.71 600.58 L906.13 598.95 L906.56 597.32 L906.98 595.69 L907.4 594.06 L907.83 592.43 L908.25 590.8 L908.67 589.16 L909.1 587.53 L909.52 585.9 L909.94 584.27 L910.36 582.64 L910.78 581.01 L911.2 579.38 L911.62 577.75 L912.04 576.12 L912.45 574.49 L912.87 572.86 L913.29 571.22 L913.7 569.59 L914.11 567.96 L914.53 566.33 L914.94 564.7 L915.35 563.07 L915.76 561.44 L916.17 559.81 L916.58 558.18 L916.98 556.55 L917.39 554.91 L917.8 553.28 L918.2 551.65 L918.6 550.02 L919 548.39 L919.4 546.76 L919.8 545.13 L920.2 543.5 L920.59 541.87 L920.99 540.24 L921.38 538.6 L921.77 536.97 L922.16 535.34 L922.55 533.71 L922.94 532.08 L923.32 530.45 L923.71 528.82 L924.09 527.19 L924.47 525.56 L924.85 523.92 L925.23 522.29 L925.6 520.66 L925.98 519.03 L926.35 517.4 L926.72 515.77 L927.09 514.14 L927.45 512.51 L927.82 510.88 L928.18 509.25 L928.54 507.62 L928.9 505.98 L929.25 504.35 L929.61 502.72 L929.96 501.09 L930.31 499.46 L930.66 497.83 L931 496.2 L931.35 494.57 L931.69 492.94 L932.03 491.31 L932.37 489.67 L932.7 488.04 L933.03 486.41 L933.36 484.78 L933.69 483.15 L934.02 481.52 L934.34 479.89 L934.66 478.26 L934.98 476.63 L935.29 475 L935.6 473.36 L935.92 471.73 L936.22 470.1 L936.53 468.47 L936.83 466.84 L937.13 465.21 L937.43 463.58 L937.72 461.95 L938.01 460.32 L938.3 458.69 L938.59 457.05 L938.87 455.42 L939.16 453.79 L939.43 452.16 L939.71 450.53 L939.98 448.9 L940.25 447.27 L940.52 445.64 L940.78 444.01 L941.04 442.38 L941.3 440.74 L941.56 439.11 L941.81 437.48 L942.06 435.85 L942.3 434.22 L942.55 432.59 L942.79 430.96 L943.02 429.33 L943.26 427.7 L943.49 426.06 L943.71 424.43 L943.94 422.8 L944.16 421.17 L944.38 419.54 L944.59 417.91 L944.8 416.28 L945.01 414.65 L945.22 413.02 L945.42 411.39 L945.62 409.75 L945.81 408.12 L946 406.49 L946.19 404.86 L946.38 403.23 L946.56 401.6 L946.74 399.97 L946.91 398.34 L947.08 396.71 L947.25 395.08 L947.42 393.44 L947.58 391.81 L947.74 390.18 L947.89 388.55 L948.04 386.92 L948.19 385.29 L948.33 383.66 L948.47 382.03 L948.61 380.4 L948.74 378.77 L948.87 377.13 L949 375.5 L949.12 373.87 L949.24 372.24 L949.36 370.61 L949.47 368.98 L949.58 367.35 L949.68 365.72 L949.78 364.09 L949.88 362.46 L949.98 360.82 L950.07 359.19 L950.15 357.56 L950.24 355.93 L950.32 354.3 L950.39 352.67 L950.46 351.04 L950.53 349.41 L950.6 347.78 L950.66 346.15 L950.72 344.51 L950.77 342.88 L950.82 341.25 L950.87 339.62 L950.91 337.99 L950.95 336.36 L950.98 334.73 L951.02 333.1 L951.04 331.47 L951.07 329.84 L951.09 328.2 L951.1 326.57 L951.12 324.94 L951.13 323.31 L951.13 321.68 L951.13 320.05 L951.13 318.42 L951.13 316.79 L951.12 315.17 L951.1 313.54 L951.09 311.91 L951.07 310.28 L951.04 308.66 L951.02 307.03 L950.98 305.4 L950.95 303.77 L950.91 302.14 L950.87 300.52 L950.82 298.89 L950.77 297.26 L950.72 295.63 L950.66 294.01 L950.6 292.38 L950.53 290.75 L950.46 289.12 L950.39 287.49 L950.32 285.87 L950.24 284.24 L950.15 282.61 L950.07 280.98 L949.98 279.36 L949.88 277.73 L949.78 276.1 L949.68 274.47 L949.58 272.84 L949.47 271.22 L949.36 269.59 L949.24 267.96 L949.12 266.33 L949 264.7 L948.87 263.08 L948.74 261.45 L948.61 259.82 L948.47 258.19 L948.33 256.57 L948.19 254.94 L948.04 253.31 L947.89 251.68 L947.74 250.05 L947.58 248.43 L947.42 246.8 L947.25 245.17 L947.08 243.54 L946.91 241.92 L946.74 240.29 L946.56 238.66 L946.38 237.03 L946.19 235.4 L946 233.78 L945.81 232.15 L945.62 230.52 L945.42 228.89 L945.22 227.27 L945.01 225.64 L944.8 224.01 L944.59 222.38 L944.38 220.75 L944.16 219.13 L943.94 217.5 L943.71 215.87 L943.49 214.24 L943.26 212.62 L943.02 210.99 L942.79 209.36 L942.55 207.73 L942.3 206.1 L942.06 204.48 L941.81 202.85 L941.56 201.22 L941.3 199.59 L941.04 197.97 L940.78 196.34 L940.52 194.71 L940.25 193.08 L939.98 191.45 L939.71 189.83 L939.43 188.2 L939.16 186.57 L938.87 184.94 L938.59 183.31 L938.3 181.69 L938.01 180.06 L937.72 178.43 L937.43 176.8 L937.13 175.18 L936.83 173.55 L936.53 171.92 L936.22 170.29 L935.92 168.66 L935.6 167.04 L935.29 165.41 L934.98 163.78 L934.66 162.15 L934.34 160.53 L934.02 158.9 L933.69 157.27 L933.36 155.64 L933.03 154.01 L932.7 152.39 L932.37 150.76 L932.03 149.13 L931.69 147.5 L931.35 145.88 L931 144.25 L930.66 142.62 L930.31 140.99 L929.96 139.36 L929.61 137.74 L929.25 136.11 L928.9 134.48 L928.54 132.85 L928.18 131.23 L927.82 129.6 L927.45 127.97 L927.09 126.34 L926.72 124.71 L926.35 123.09 L925.98 121.46 L925.6 119.83 L925.23 118.2 L924.85 116.58 L924.47 114.95 L924.09 113.32 L923.71 111.69 L923.32 110.06 L922.94 108.44 L922.55 106.81 L922.16 105.18 L921.77 103.55 L921.38 101.92 L920.99 100.3 L920.59 98.67 L920.2 97.04 L919.8 95.41 L919.4 93.79 L919 92.16 L918.6 90.53 L918.2 88.9 L917.8 87.27 L917.39 85.65 L916.98 84.02 L916.58 82.39 L916.17 80.76 L915.76 79.14 L915.35 77.51 L914.94 75.88 L914.53 74.25 L914.11 72.62 L913.7 71 L913.29 69.37 L912.87 67.74 L912.45 66.11 L912.04 64.49 L911.62 62.86 L911.2 61.23 L910.78 59.6 L910.36 57.97 L909.94 56.35 L909.52 54.72 L909.1 53.09 L908.67 51.46 L908.25 49.84 L907.83 48.21 L907.4 46.58 L906.98 44.95 L906.56 43.32 L906.13 41.7 L905.71 40.07 L905.28 38.44 L904.86 36.81 L904.43 35.19 L904 33.56 L903.58 31.93 L903.15 30.3 L902.73 28.67 L902.3 27.05" stroke-dashoffset="0.0"/><path d="M902.3 613.63 L902.3 612 L902.3 610.37 L902.3 608.74 L902.3 607.11 L902.3 605.48 L902.3 603.84 L902.3 602.21 L902.3 600.58 L902.3 598.95 L902.3 597.32 L902.3 595.69 L902.3 594.06 L902.3 592.43 L902.3 590.8 L902.3 589.16 L902.3 587.53 L902.3 585.9 L902.3 584.27 L902.3 582.64 L902.3 581.01 L902.3 579.38 L902.3 577.75 L902.3 576.12 L902.3 574.49 L902.3 572.86 L902.3 571.22 L902.3 569.59 L902.3 567.96 L902.3 566.33 L902.3 564.7 L902.3 563.07 L902.3 561.44 L902.3 559.81 L902.3 558.18 L902.3 556.55 L902.3 554.91 L902.3 553.28 L902.3 551.65 L902.3 550.02 L902.3 548.39 L902.3 546.76 L902.3 545.13 L902.3 543.5 L902.3 541.87 L902.3 540.24 L902.3 538.6 L902.3 536.97 L902.3 535.34 L902.3 533.71 L902.3 532.08 L902.3 530.45 L902.3 528.82 L902.3 527.19 L902.3 525.56 L902.3 523.92 L902.3 522.29 L902.3 520.66 L902.3 519.03 L902.3 517.4 L902.3 515.77 L902.3 514.14 L902.3 512.51 L902.3 510.88 L902.3 509.25 L902.3 507.62 L902.3 505.98 L902.3 504.35 L902.3 502.72 L902.3 501.09 L902.3 499.46 L902.3 497.83 L902.3 496.2 L902.3 494.57 L902.3 492.94 L902.3 491.31 L902.3 489.67 L902.3 488.04 L902.3 486.41 L902.3 484.78 L902.3 483.15 L902.3 481.52 L902.3 479.89 L902.3 478.26 L902.3 476.63 L902.3 475 L902.3 473.36 L902.3 471.73 L902.3 470.1 L902.3 468.47 L902.3 466.84 L902.3 465.21 L902.3 463.58 L902.3 461.95 L902.3 460.32 L902.3 458.69 L902.3 457.05 L902.3 455.42 L902.3 453.79 L902.3 452.16 L902.3 450.53 L902.3 448.9 L902.3 447.27 L902.3 445.64 L902.3 444.01 L902.3 442.38 L902.3 440.74 L902.3 439.11 L902.3 437.48 L902.3 435.85 L902.3 434.22 L902.3 432.59 L902.3 430.96 L902.3 429.33 L902.3 427.7 L902.3 426.06 L902.3 424.43 L902.3 422.8 L902.3 421.17 L902.3 419.54 L902.3 417.91 L902.3 416.28 L902.3 414.65 L902.3 413.02 L902.3 411.39 L902.3 409.75 L902.3 408.12 L902.3 406.49 L902.3 404.86 L902.3 403.23 L902.3 401.6 L902.3 399.97 L902.3 398.34 L902.3 396.71 L902.3 395.08 L902.3 393.44 L902.3 391.81 L902.3 390.18 L902.3 388.55 L902.3 386.92 L902.3 385.29 L902.3 383.66 L902.3 382.03 L902.3 380.4 L902.3 378.77 L902.3 377.13 L902.3 375.5 L902.3 373.87 L902.3 372.24 L902.3 370.61 L902.3 368.98 L902.3 367.35 L902.3 365.72 L902.3 364.09 L902.3 362.46 L902.3 360.82 L902.3 359.19 L902.3 357.56 L902.3 355.93 L902.3 354.3 L902.3 352.67 L902.3 351.04 L902.3 349.41 L902.3 347.78 L902.3 346.15 L902.3 344.51 L902.3 342.88 L902.3 341.25 L902.3 339.62 L902.3 337.99 L902.3 336.36 L902.3 334.73 L902.3 333.1 L902.3 331.47 L902.3 329.84 L902.3 328.2 L902.3 326.57 L902.3 324.94 L902.3 323.31 L902.3 321.68 L902.3 320.05 L902.3 318.42 L902.3 316.79 L902.3 315.17 L902.3 313.54 L902.3 311.91 L902.3 310.28 L902.3 308.66 L902.3 307.03 L902.3 305.4 L902.3 303.77 L902.3 302.14 L902.3 300.52 L902.3 298.89 L902.3 297.26 L902.3 295.63 L902.3 294.01 L902.3 292.38 L902.3 290.75 L902.3 289.12 L902.3 287.49 L902.3 285.87 L902.3 284.24 L902.3 282.61 L902.3 280.98 L902.3 279.36 L902.3 277.73 L902.3 276.1 L902.3 274.47 L902.3 272.84 L902.3 271.22 L902.3 269.59 L902.3 267.96 L902.3 266.33 L902.3 264.7 L902.3 263.08 L902.3 261.45 L902.3 259.82 L902.3 258.19 L902.3 256.57 L902.3 254.94 L902.3 253.31 L902.3 251.68 L902.3 250.05 L902.3 248.43 L902.3 246.8 L902.3 245.17 L902.3 243.54 L902.3 241.92 L902.3 240.29 L902.3 238.66 L902.3 237.03 L902.3 235.4 L902.3 233.78 L902.3 232.15 L902.3 230.52 L902.3 228.89 L902.3 227.27 L902.3 225.64 L902.3 224.01 L902.3 222.38 L902.3 220.75 L902.3 219.13 L902.3 217.5 L902.3 215.87 L902.3 214.24 L902.3 212.62 L902.3 210.99 L902.3 209.36 L902.3 207.73 L902.3 206.1 L902.3 204.48 L902.3 202.85 L902.3 201.22 L902.3 199.59 L902.3 197.97 L902.3 196.34 L902.3 194.71 L902.3 193.08 L902.3 191.45 L902.3 189.83 L902.3 188.2 L902.3 186.57 L902.3 184.94 L902.3 183.31 L902.3 181.69 L902.3 180.06 L902.3 178.43 L902.3 176.8 L902.3 175.18 L902.3 173.55 L902.3 171.92 L902.3 170.29 L902.3 168.66 L902.3 167.04 L902.3 165.41 L902.3 163.78 L902.3 162.15 L902.3 160.53 L902.3 158.9 L902.3 157.27 L902.3 155.64 L902.3 154.01 L902.3 152.39 L902.3 150.76 L902.3 149.13 L902.3 147.5 L902.3 145.88 L902.3 144.25 L902.3 142.62 L902.3 140.99 L902.3 139.36 L902.3 137.74 L902.3 136.11 L902.3 134.48 L902.3 132.85 L902.3 131.23 L902.3 129.6 L902.3 127.97 L902.3 126.34 L902.3 124.71 L902.3 123.09 L902.3 121.46 L902.3 119.83 L902.3 118.2 L902.3 116.58 L902.3 114.95 L902.3 113.32 L902.3 111.69 L902.3 110.06 L902.3 108.44 L902.3 106.81 L902.3 105.18 L902.3 103.55 L902.3 101.92 L902.3 100.3 L902.3 98.67 L902.3 97.04 L902.3 95.41 L902.3 93.79 L902.3 92.16 L902.3 90.53 L902.3 88.9 L902.3 87.27 L902.3 85.65 L902.3 84.02 L902.3 82.39 L902.3 80.76 L902.3 79.14 L902.3 77.51 L902.3 75.88 L902.3 74.25 L902.3 72.62 L902.3 71 L902.3 69.37 L902.3 67.74 L902.3 66.11 L902.3 64.49 L902.3 62.86 L902.3 61.23 L902.3 59.6 L902.3 57.97 L902.3 56.35 L902.3 54.72 L902.3 53.09 L902.3 51.46 L902.3 49.84 L902.3 48.21 L902.3 46.58 L902.3 44.95 L902.3 43.32 L902.3 41.7 L902.3 40.07 L902.3 38.44 L902.3 36.81 L902.3 35.19 L902.3 33.56 L902.3 31.93 L902.3 30.3 L902.3 28.67 L902.3 27.05" stroke-dashoffset="0.0"/><path d="M902.3 613.63 L901.87 612 L901.45 610.37 L901.02 608.74 L900.6 607.11 L900.17 605.48 L899.74 603.84 L899.32 602.21 L898.89 600.58 L898.47 598.95 L898.04 597.32 L897.62 595.69 L897.2 594.06 L896.77 592.43 L896.35 590.8 L895.93 589.16 L895.5 587.53 L895.08 585.9 L894.66 584.27 L894.24 582.64 L893.82 581.01 L893.4 579.38 L892.98 577.75 L892.56 576.12 L892.15 574.49 L891.73 572.86 L891.31 571.22 L890.9 569.59 L890.49 567.96 L890.07 566.33 L889.66 564.7 L889.25 563.07 L888.84 561.44 L888.43 559.81 L888.02 558.18 L887.62 556.55 L887.21 554.91 L886.8 553.28 L886.4 551.65 L886 550.02 L885.6 548.39 L885.2 546.76 L884.8 545.13 L884.4 543.5 L884.01 541.87 L883.61 540.24 L883.22 538.6 L882.83 536.97 L882.44 535.34 L882.05 533.71 L881.66 532.08 L881.28 530.45 L880.89 528.82 L880.51 527.19 L880.13 525.56 L879.75 523.92 L879.37 522.29 L879 520.66 L878.62 519.03 L878.25 517.4 L877.88 515.77 L877.51 514.14 L877.15 512.51 L876.78 510.88 L876.42 509.25 L876.06 507.62 L875.7 505.98 L875.35 504.35 L874.99 502.72 L874.64 501.09 L874.29 499.46 L873.94 497.83 L873.6 496.2 L873.25 494.57 L872.91 492.94 L872.57 491.31 L872.23 489.67 L871.9 488.04 L871.57 486.41 L871.24 484.78 L870.91 483.15 L870.58 481.52 L870.26 479.89 L869.94 478.26 L869.62 476.63 L869.31 475 L869 473.36 L868.68 471.73 L868.38 470.1 L868.07 468.47 L867.77 466.84 L867.47 465.21 L867.17 463.58 L866.88 461.95 L866.59 460.32 L866.3 458.69 L866.01 457.05 L865.73 455.42 L865.44 453.79 L865.17 452.16 L864.89 450.53 L864.62 448.9 L864.35 447.27 L864.08 445.64 L863.82 444.01 L863.56 442.38 L863.3 440.74 L863.04 439.11 L862.79 437.48 L862.54 435.85 L862.3 434.22 L862.05 432.59 L861.81 430.96 L861.58 429.33 L861.34 427.7 L861.11 426.06 L860.89 424.43 L860.66 422.8 L860.44 421.17 L860.22 419.54 L860.01 417.91 L859.8 416.28 L859.59 414.65 L859.38 413.02 L859.18 411.39 L858.98 409.75 L858.79 408.12 L858.6 406.49 L858.41 404.86 L858.22 403.23 L858.04 401.6 L857.86 399.97 L857.69 398.34 L857.52 396.71 L857.35 395.08 L857.18 393.44 L857.02 391.81 L856.86 390.18 L856.71 388.55 L856.56 386.92 L856.41 385.29 L856.27 383.66 L856.13 382.03 L855.99 380.4 L855.86 378.77 L855.73 377.13 L855.6 375.5 L855.48 373.87 L855.36 372.24 L855.24 370.61 L855.13 368.98 L855.02 367.35 L854.92 365.72 L854.82 364.09 L854.72 362.46 L854.62 360.82 L854.53 359.19 L854.45 357.56 L854.36 355.93 L854.28 354.3 L854.21 352.67 L854.14 351.04 L854.07 349.41 L854 347.78 L853.94 346.15 L853.88 344.51 L853.83 342.88 L853.78 341.25 L853.73 339.62 L853.69 337.99 L853.65 336.36 L853.62 334.73 L853.58 333.1 L853.56 331.47 L853.53 329.84 L853.51 328.2 L853.5 326.57 L853.48 324.94 L853.47 323.31 L853.47 321.68 L853.47 320.05 L853.47 318.42 L853.47 316.79 L853.48 315.17 L853.5 313.54 L853.51 311.91 L853.53 310.28 L853.56 308.66 L853.58 307.03 L853.62 305.4 L853.65 303.77 L853.69 302.14 L853.73 300.52 L853.78 298.89 L853.83 297.26 L853.88 295.63 L853.94 294.01 L854 292.38 L854.07 290.75 L854.14 289.12 L854.21 287.49 L854.28 285.87 L854.36 284.24 L854.45 282.61 L854.53 280.98 L854.62 279.36 L854.72 277.73 L854.82 276.1 L854.92 274.47 L855.02 272.84 L855.13 271.22 L855.24 269.59 L855.36 267.96 L855.48 266.33 L855.6 264.7 L855.73 263.08 L855.86 261.45 L855.99 259.82 L856.13 258.19 L856.27 256.57 L856.41 254.94 L856.56 253.31 L856.71 251.68 L856.86 250.05 L857.02 248.43 L857.18 246.8 L857.35 245.17 L857.52 243.54 L857.69 241.92 L857.86 240.29 L858.04 238.66 L858.22 237.03 L858.41 235.4 L858.6 233.78 L858.79 232.15 L858.98 230.52 L859.18 228.89 L859.38 227.27 L859.59 225.64 L859.8 224.01 L860.01 222.38 L860.22 220.75 L860.44 219.13 L860.66 217.5 L860.89 215.87 L861.11 214.24 L861.34 212.62 L861.58 210.99 L861.81 209.36 L862.05 207.73 L862.3 206.1 L862.54 204.48 L862.79 202.85 L863.04 201.22 L863.3 199.59 L863.56 197.97 L863.82 196.34 L864.08 194.71 L864.35 193.08 L864.62 191.45 L864.89 189.83 L865.17 188.2 L865.44 186.57 L865.73 184.94 L866.01 183.31 L866.3 181.69 L866.59 180.06 L866.88 178.43 L867.17 176.8 L867.47 175.18 L867.77 173.55 L868.07 171.92 L868.38 170.29 L868.68 168.66 L869 167.04 L869.31 165.41 L869.62 163.78 L869.94 162.15 L870.26 160.53 L870.58 158.9 L870.91 157.27 L871.24 155.64 L871.57 154.01 L871.9 152.39 L872.23 150.76 L872.57 149.13 L872.91 147.5 L873.25 145.88 L873.6 144.25 L873.94 142.62 L874.29 140.99 L874.64 139.36 L874.99 137.74 L875.35 136.11 L875.7 134.48 L876.06 132.85 L876.42 131.23 L876.78 129.6 L877.15 127.97 L877.51 126.34 L877.88 124.71 L878.25 123.09 L878.62 121.46 L879 119.83 L879.37 118.2 L879.75 116.58 L880.13 114.95 L880.51 113.32 L880.89 111.69 L881.28 110.06 L881.66 108.44 L882.05 106.81 L882.44 105.18 L882.83 103.55 L883.22 101.92 L883.61 100.3 L884.01 98.67 L884.4 97.04 L884.8 95.41 L885.2 93.79 L885.6 92.16 L886 90.53 L886.4 88.9 L886.8 87.27 L887.21 85.65 L887.62 84.02 L888.02 82.39 L888.43 80.76 L888.84 79.14 L889.25 77.51 L889.66 75.88 L890.07 74.25 L890.49 72.62 L890.9 71 L891.31 69.37 L891.73 67.74 L892.15 66.11 L892.56 64.49 L892.98 62.86 L893.4 61.23 L893.82 59.6 L894.24 57.97 L894.66 56.35 L895.08 54.72 L895.5 53.09 L895.93 51.46 L896.35 49.84 L896.77 48.21 L897.2 46.58 L897.62 44.95 L898.04 43.32 L898.47 41.7 L898.89 40.07 L899.32 38.44 L899.74 36.81 L900.17 35.19 L900.6 33.56 L901.02 31.93 L901.45 30.3 L901.87 28.67 L902.3 27.05" stroke-dashoffset="0.0"/><path d="M902.3 613.63 L901.45 612 L900.6 610.37 L899.74 608.74 L898.89 607.11 L898.04 605.48 L897.19 603.84 L896.34 602.21 L895.49 600.58 L894.64 598.95 L893.79 597.32 L892.94 595.69 L892.09 594.06 L891.24 592.43 L890.4 590.8 L889.55 589.16 L888.71 587.53 L887.86 585.9 L887.02 584.27 L886.18 582.64 L885.34 581.01 L884.5 579.38 L883.66 577.75 L882.83 576.12 L881.99 574.49 L881.16 572.86 L880.33 571.22 L879.5 569.59 L878.67 567.96 L877.85 566.33 L877.02 564.7 L876.2 563.07 L875.38 561.44 L874.56 559.81 L873.74 558.18 L872.93 556.55 L872.12 554.91 L871.31 553.28 L870.5 551.65 L869.7 550.02 L868.9 548.39 L868.1 546.76 L867.3 545.13 L866.5 543.5 L865.71 541.87 L864.92 540.24 L864.14 538.6 L863.35 536.97 L862.57 535.34 L861.8 533.71 L861.02 532.08 L860.25 530.45 L859.49 528.82 L858.72 527.19 L857.96 525.56 L857.2 523.92 L856.45 522.29 L855.7 520.66 L854.95 519.03 L854.21 517.4 L853.47 515.77 L852.73 514.14 L852 512.51 L851.27 510.88 L850.54 509.25 L849.82 507.62 L849.11 505.98 L848.39 504.35 L847.68 502.72 L846.98 501.09 L846.28 499.46 L845.58 497.83 L844.89 496.2 L844.2 494.57 L843.52 492.94 L842.84 491.31 L842.17 489.67 L841.5 488.04 L840.84 486.41 L840.18 484.78 L839.52 483.15 L838.87 481.52 L838.22 479.89 L837.58 478.26 L836.95 476.63 L836.32 475 L835.69 473.36 L835.07 471.73 L834.45 470.1 L833.84 468.47 L833.24 466.84 L832.64 465.21 L832.04 463.58 L831.45 461.95 L830.87 460.32 L830.29 458.69 L829.72 457.05 L829.15 455.42 L828.59 453.79 L828.03 452.16 L827.48 450.53 L826.94 448.9 L826.4 447.27 L825.86 445.64 L825.34 444.01 L824.81 442.38 L824.3 440.74 L823.79 439.11 L823.28 437.48 L822.79 435.85 L822.3 434.22 L821.81 432.59 L821.33 430.96 L820.86 429.33 L820.39 427.7 L819.93 426.06 L819.47 424.43 L819.02 422.8 L818.58 421.17 L818.15 419.54 L817.72 417.91 L817.29 416.28 L816.88 414.65 L816.47 413.02 L816.06 411.39 L815.67 409.75 L815.28 408.12 L814.89 406.49 L814.52 404.86 L814.15 403.23 L813.78 401.6 L813.43 399.97 L813.08 398.34 L812.73 396.71 L812.4 395.08 L812.07 393.44 L811.74 391.81 L811.43 390.18 L811.12 388.55 L810.82 386.92 L810.52 385.29 L810.23 383.66 L809.95 382.03 L809.68 380.4 L809.41 378.77 L809.15 377.13 L808.9 375.5 L808.65 373.87 L808.42 372.24 L808.18 370.61 L807.96 368.98 L807.74 367.35 L807.53 365.72 L807.33 364.09 L807.14 362.46 L806.95 360.82 L806.77 359.19 L806.59 357.56 L806.43 355.93 L806.27 354.3 L806.12 352.67 L805.97 351.04 L805.83 349.41 L805.7 347.78 L805.58 346.15 L805.47 344.51 L805.36 342.88 L805.26 341.25 L805.17 339.62 L805.08 337.99 L805 336.36 L804.93 334.73 L804.87 333.1 L804.81 331.47 L804.77 329.84 L804.72 328.2 L804.69 326.57 L804.67 324.94 L804.65 323.31 L804.64 321.68 L804.63 320.05 L804.64 318.42 L804.65 316.79 L804.67 315.17 L804.69 313.54 L804.72 311.91 L804.77 310.28 L804.81 308.66 L804.87 307.03 L804.93 305.4 L805 303.77 L805.08 302.14 L805.17 300.52 L805.26 298.89 L805.36 297.26 L805.47 295.63 L805.58 294.01 L805.7 292.38 L805.83 290.75 L805.97 289.12 L806.12 287.49 L806.27 285.87 L806.43 284.24 L806.59 282.61 L806.77 280.98 L806.95 279.36 L807.14 277.73 L807.33 276.1 L807.53 274.47 L807.74 272.84 L807.96 271.22 L808.18 269.59 L808.42 267.96 L808.65 266.33 L808.9 264.7 L809.15 263.08 L809.41 261.45 L809.68 259.82 L809.95 258.19 L810.23 256.57 L810.52 254.94 L810.82 253.31 L811.12 251.68 L811.43 250.05 L811.74 248.43 L812.07 246.8 L812.4 245.17 L812.73 243.54 L813.08 241.92 L813.43 240.29 L813.78 238.66 L814.15 237.03 L814.52 235.4 L814.89 233.78 L815.28 232.15 L815.67 230.52 L816.06 228.89 L816.47 227.27 L816.88 225.64 L817.29 224.01 L817.72 222.38 L818.15 220.75 L818.58 219.13 L819.02 217.5 L819.47 215.87 L819.93 214.24 L820.39 212.62 L820.86 210.99 L821.33 209.36 L821.81 207.73 L822.3 206.1 L822.79 204.48 L823.28 202.85 L823.79 201.22 L824.3 199.59 L824.81 197.97 L825.34 196.34 L825.86 194.71 L826.4 193.08 L826.94 191.45 L827.48 189.83 L828.03 188.2 L828.59 186.57 L829.15 184.94 L829.72 183.31 L830.29 181.69 L830.87 180.06 L831.45 178.43 L832.04 176.8 L832.64 175.18 L833.24 173.55 L833.84 171.92 L834.45 170.29 L835.07 168.66 L835.69 167.04 L836.32 165.41 L836.95 163.78 L837.58 162.15 L838.22 160.53 L838.87 158.9 L839.52 157.27 L840.18 155.64 L840.84 154.01 L841.5 152.39 L842.17 150.76 L842.84 149.13 L843.52 147.5 L844.2 145.88 L844.89 144.25 L845.58 142.62 L846.28 140.99 L846.98 139.36 L847.68 137.74 L848.39 136.11 L849.11 134.48 L849.82 132.85 L850.54 131.23 L851.27 129.6 L852 127.97 L852.73 126.34 L853.47 124.71 L854.21 123.09 L854.95 121.46 L855.7 119.83 L856.45 118.2 L857.2 116.58 L857.96 114.95 L858.72 113.32 L859.49 111.69 L860.25 110.06 L861.02 108.44 L861.8 106.81 L862.57 105.18 L863.35 103.55 L864.14 101.92 L864.92 100.3 L865.71 98.67 L866.5 97.04 L867.3 95.41 L868.1 93.79 L868.9 92.16 L869.7 90.53 L870.5 88.9 L871.31 87.27 L872.12 85.65 L872.93 84.02 L873.74 82.39 L874.56 80.76 L875.38 79.14 L876.2 77.51 L877.02 75.88 L877.85 74.25 L878.67 72.62 L879.5 71 L880.33 69.37 L881.16 67.74 L881.99 66.11 L882.83 64.49 L883.66 62.86 L884.5 61.23 L885.34 59.6 L886.18 57.97 L887.02 56.35 L887.86 54.72 L888.71 53.09 L889.55 51.46 L890.4 49.84 L891.24 48.21 L892.09 46.58 L892.94 44.95 L893.79 43.32 L894.64 41.7 L895.49 40.07 L896.34 38.44 L897.19 36.81 L898.04 35.19 L898.89 33.56 L899.74 31.93 L900.6 30.3 L901.45 28.67 L902.3 27.05" stroke-dashoffset="0.0"/><path d="M902.3 613.63 L901.02 612 L899.74 610.37 L898.47 608.74 L897.19 607.11 L895.91 605.48 L894.63 603.84 L893.36 602.21 L892.08 600.58 L890.81 598.95 L889.53 597.32 L888.26 595.69 L886.99 594.06 L885.72 592.43 L884.45 590.8 L883.18 589.16 L881.91 587.53 L880.65 585.9 L879.38 584.27 L878.12 582.64 L876.86 581.01 L875.6 579.38 L874.35 577.75 L873.09 576.12 L871.84 574.49 L870.59 572.86 L869.34 571.22 L868.1 569.59 L866.86 567.96 L865.62 566.33 L864.38 564.7 L863.15 563.07 L861.92 561.44 L860.69 559.81 L859.47 558.18 L858.25 556.55 L857.03 554.91 L855.81 553.28 L854.6 551.65 L853.4 550.02 L852.19 548.39 L850.99 546.76 L849.8 545.13 L848.61 543.5 L847.42 541.87 L846.24 540.24 L845.06 538.6 L843.88 536.97 L842.71 535.34 L841.55 533.71 L840.39 532.08 L839.23 530.45 L838.08 528.82 L836.93 527.19 L835.79 525.56 L834.65 523.92 L833.52 522.29 L832.4 520.66 L831.27 519.03 L830.16 517.4 L829.05 515.77 L827.94 514.14 L826.85 512.51 L825.75 510.88 L824.67 509.25 L823.58 507.62 L822.51 505.98 L821.44 504.35 L820.38 502.72 L819.32 501.09 L818.27 499.46 L817.23 497.83 L816.19 496.2 L815.16 494.57 L814.13 492.94 L813.12 491.31 L812.1 489.67 L811.1 488.04 L810.1 486.41 L809.11 484.78 L808.13 483.15 L807.15 481.52 L806.19 479.89 L805.22 478.26 L804.27 476.63 L803.32 475 L802.39 473.36 L801.45 471.73 L800.53 470.1 L799.62 468.47 L798.71 466.84 L797.81 465.21 L796.92 463.58 L796.03 461.95 L795.16 460.32 L794.29 458.69 L793.43 457.05 L792.58 455.42 L791.73 453.79 L790.9 452.16 L790.07 450.53 L789.26 448.9 L788.45 447.27 L787.65 445.64 L786.85 444.01 L786.07 442.38 L785.3 440.74 L784.53 439.11 L783.78 437.48 L783.03 435.85 L782.29 434.22 L781.56 432.59 L780.84 430.96 L780.13 429.33 L779.43 427.7 L778.74 426.06 L778.06 424.43 L777.39 422.8 L776.72 421.17 L776.07 419.54 L775.43 417.91 L774.79 416.28 L774.17 414.65 L773.55 413.02 L772.95 411.39 L772.35 409.75 L771.77 408.12 L771.19 406.49 L770.62 404.86 L770.07 403.23 L769.52 401.6 L768.99 399.97 L768.46 398.34 L767.95 396.71 L767.44 395.08 L766.95 393.44 L766.47 391.81 L765.99 390.18 L765.53 388.55 L765.08 386.92 L764.63 385.29 L764.2 383.66 L763.78 382.03 L763.37 380.4 L762.97 378.77 L762.58 377.13 L762.2 375.5 L761.83 373.87 L761.47 372.24 L761.13 370.61 L760.79 368.98 L760.46 367.35 L760.15 365.72 L759.85 364.09 L759.55 362.46 L759.27 360.82 L759 359.19 L758.74 357.56 L758.49 355.93 L758.25 354.3 L758.02 352.67 L757.81 351.04 L757.6 349.41 L757.41 347.78 L757.22 346.15 L757.05 344.51 L756.89 342.88 L756.74 341.25 L756.6 339.62 L756.47 337.99 L756.36 336.36 L756.25 334.73 L756.15 333.1 L756.07 331.47 L756 329.84 L755.94 328.2 L755.89 326.57 L755.85 324.94 L755.82 323.31 L755.8 321.68 L755.8 320.05 L755.8 318.42 L755.82 316.79 L755.85 315.17 L755.89 313.54 L755.94 311.91 L756 310.28 L756.07 308.66 L756.15 307.03 L756.25 305.4 L756.36 303.77 L756.47 302.14 L756.6 300.52 L756.74 298.89 L756.89 297.26 L757.05 295.63 L757.22 294.01 L757.41 292.38 L757.6 290.75 L757.81 289.12 L758.02 287.49 L758.25 285.87 L758.49 284.24 L758.74 282.61 L759 280.98 L759.27 279.36 L759.55 277.73 L759.85 276.1 L760.15 274.47 L760.46 272.84 L760.79 271.22 L761.13 269.59 L761.47 267.96 L761.83 266.33 L762.2 264.7 L762.58 263.08 L762.97 261.45 L763.37 259.82 L763.78 258.19 L764.2 256.57 L764.63 254.94 L765.08 253.31 L765.53 251.68 L765.99 250.05 L766.47 248.43 L766.95 246.8 L767.44 245.17 L767.95 243.54 L768.46 241.92 L768.99 240.29 L769.52 238.66 L770.07 237.03 L770.62 235.4 L771.19 233.78 L771.77 232.15 L772.35 230.52 L772.95 228.89 L773.55 227.27 L774.17 225.64 L774.79 224.01 L775.43 222.38 L776.07 220.75 L776.72 219.13 L777.39 217.5 L778.06 215.87 L778.74 214.24 L779.43 212.62 L780.13 210.99 L780.84 209.36 L781.56 207.73 L782.29 206.1 L783.03 204.48 L783.78 202.85 L784.53 201.22 L785.3 199.59 L786.07 197.97 L786.85 196.34 L787.65 194.71 L788.45 193.08 L789.26 191.45 L790.07 189.83 L790.9 188.2 L791.73 186.57 L792.58 184.94 L793.43 183.31 L794.29 181.69 L795.16 180.06 L796.03 178.43 L796.92 176.8 L797.81 175.18 L798.71 173.55 L799.62 171.92 L800.53 170.29 L801.45 168.66 L802.39 167.04 L803.32 165.41 L804.27 163.78 L805.22 162.15 L806.19 160.53 L807.15 158.9 L808.13 157.27 L809.11 155.64 L810.1 154.01 L811.1 152.39 L812.1 150.76 L813.12 149.13 L814.13 147.5 L815.16 145.88 L816.19 144.25 L817.23 142.62 L818.27 140.99 L819.32 139.36 L820.38 137.74 L821.44 136.11 L822.51 134.48 L823.58 132.85 L824.67 131.23 L825.75 129.6 L826.85 127.97 L827.94 126.34 L829.05 124.71 L830.16 123.09 L831.27 121.46 L832.4 119.83 L833.52 118.2 L834.65 116.58 L835.79 114.95 L836.93 113.32 L838.08 111.69 L839.23 110.06 L840.39 108.44 L841.55 106.81 L842.71 105.18 L843.88 103.55 L845.06 101.92 L846.24 100.3 L847.42 98.67 L848.61 97.04 L849.8 95.41 L850.99 93.79 L852.19 92.16 L853.4 90.53 L854.6 88.9 L855.81 87.27 L857.03 85.65 L858.25 84.02 L859.47 82.39 L860.69 80.76 L861.92 79.14 L863.15 77.51 L864.38 75.88 L865.62 74.25 L866.86 72.62 L868.1 71 L869.34 69.37 L870.59 67.74 L871.84 66.11 L873.09 64.49 L874.35 62.86 L875.6 61.23 L876.86 59.6 L878.12 57.97 L879.38 56.35 L880.65 54.72 L881.91 53.09 L883.18 51.46 L884.45 49.84 L885.72 48.21 L886.99 46.58 L888.26 44.95 L889.53 43.32 L890.81 41.7 L892.08 40.07 L893.36 38.44 L894.63 36.81 L895.91 35.19 L897.19 33.56 L898.47 31.93 L899.74 30.3 L901.02 28.67 L902.3 27.05" stroke-dashoffset="0.0"/><path d="M902.3 613.63 L900.6 612 L898.89 610.37 L897.19 608.74 L895.48 607.11 L893.78 605.48 L892.08 603.84 L890.38 602.21 L888.67 600.58 L886.97 598.95 L885.28 597.32 L883.58 595.69 L881.88 594.06 L880.19 592.43 L878.49 590.8 L876.8 589.16 L875.11 587.53 L873.43 585.9 L871.74 584.27 L870.06 582.64 L868.38 581.01 L866.7 579.38 L865.03 577.75 L863.36 576.12 L861.69 574.49 L860.02 572.86 L858.36 571.22 L856.7 569.59 L855.04 567.96 L853.39 566.33 L851.74 564.7 L850.1 563.07 L848.46 561.44 L846.82 559.81 L845.19 558.18 L843.56 556.55 L841.94 554.91 L840.32 553.28 L838.7 551.65 L837.1 550.02 L835.49 548.39 L833.89 546.76 L832.3 545.13 L830.71 543.5 L829.13 541.87 L827.55 540.24 L825.98 538.6 L824.41 536.97 L822.85 535.34 L821.3 533.71 L819.75 532.08 L818.21 530.45 L816.67 528.82 L815.14 527.19 L813.62 525.56 L812.1 523.92 L810.6 522.29 L809.09 520.66 L807.6 519.03 L806.11 517.4 L804.63 515.77 L803.16 514.14 L801.69 512.51 L800.24 510.88 L798.79 509.25 L797.35 507.62 L795.91 505.98 L794.49 504.35 L793.07 502.72 L791.66 501.09 L790.26 499.46 L788.87 497.83 L787.48 496.2 L786.11 494.57 L784.74 492.94 L783.39 491.31 L782.04 489.67 L780.7 488.04 L779.37 486.41 L778.05 484.78 L776.74 483.15 L775.44 481.52 L774.15 479.89 L772.87 478.26 L771.59 476.63 L770.33 475 L769.08 473.36 L767.84 471.73 L766.61 470.1 L765.39 468.47 L764.18 466.84 L762.98 465.21 L761.79 463.58 L760.61 461.95 L759.44 460.32 L758.28 458.69 L757.14 457.05 L756 455.42 L754.88 453.79 L753.77 452.16 L752.66 450.53 L751.57 448.9 L750.5 447.27 L749.43 445.64 L748.37 444.01 L747.33 442.38 L746.3 440.74 L745.28 439.11 L744.27 437.48 L743.27 435.85 L742.29 434.22 L741.32 432.59 L740.36 430.96 L739.41 429.33 L738.48 427.7 L737.56 426.06 L736.65 424.43 L735.75 422.8 L734.86 421.17 L733.99 419.54 L733.13 417.91 L732.29 416.28 L731.46 414.65 L730.64 413.02 L729.83 411.39 L729.03 409.75 L728.25 408.12 L727.49 406.49 L726.73 404.86 L725.99 403.23 L725.27 401.6 L724.55 399.97 L723.85 398.34 L723.17 396.71 L722.49 395.08 L721.83 393.44 L721.19 391.81 L720.56 390.18 L719.94 388.55 L719.33 386.92 L718.74 385.29 L718.17 383.66 L717.61 382.03 L717.06 380.4 L716.52 378.77 L716 377.13 L715.5 375.5 L715.01 373.87 L714.53 372.24 L714.07 370.61 L713.62 368.98 L713.19 367.35 L712.77 365.72 L712.36 364.09 L711.97 362.46 L711.59 360.82 L711.23 359.19 L710.89 357.56 L710.55 355.93 L710.23 354.3 L709.93 352.67 L709.64 351.04 L709.37 349.41 L709.11 347.78 L708.86 346.15 L708.64 344.51 L708.42 342.88 L708.22 341.25 L708.03 339.62 L707.86 337.99 L707.71 336.36 L707.57 334.73 L707.44 333.1 L707.33 331.47 L707.23 329.84 L707.15 328.2 L707.08 326.57 L707.03 324.94 L706.99 323.31 L706.97 321.68 L706.96 320.05 L706.97 318.42 L706.99 316.79 L707.03 315.17 L707.08 313.54 L707.15 311.91 L707.23 310.28 L707.33 308.66 L707.44 307.03 L707.57 305.4 L707.71 303.77 L707.86 302.14 L708.03 300.52 L708.22 298.89 L708.42 297.26 L708.64 295.63 L708.86 294.01 L709.11 292.38 L709.37 290.75 L709.64 289.12 L709.93 287.49 L710.23 285.87 L710.55 284.24 L710.89 282.61 L711.23 280.98 L711.59 279.36 L711.97 277.73 L712.36 276.1 L712.77 274.47 L713.19 272.84 L713.62 271.22 L714.07 269.59 L714.53 267.96 L715.01 266.33 L715.5 264.7 L716 263.08 L716.52 261.45 L717.06 259.82 L717.61 258.19 L718.17 256.57 L718.74 254.94 L719.33 253.31 L719.94 251.68 L720.56 250.05 L721.19 248.43 L721.83 246.8 L722.49 245.17 L723.17 243.54 L723.85 241.92 L724.55 240.29 L725.27 238.66 L725.99 237.03 L726.73 235.4 L727.49 233.78 L728.25 232.15 L729.03 230.52 L729.83 228.89 L730.64 227.27 L731.46 225.64 L732.29 224.01 L733.13 222.38 L733.99 220.75 L734.86 219.13 L735.75 217.5 L736.65 215.87 L737.56 214.24 L738.48 212.62 L739.41 210.99 L740.36 209.36 L741.32 207.73 L742.29 206.1 L743.27 204.48 L744.27 202.85 L745.28 201.22 L746.3 199.59 L747.33 197.97 L748.37 196.34 L749.43 194.71 L750.5 193.08 L751.57 191.45 L752.66 189.83 L753.77 188.2 L754.88 186.57 L756 184.94 L757.14 183.31 L758.28 181.69 L759.44 180.06 L760.61 178.43 L761.79 176.8 L762.98 175.18 L764.18 173.55 L765.39 171.92 L766.61 170.29 L767.84 168.66 L769.08 167.04 L770.33 165.41 L771.59 163.78 L772.87 162.15 L774.15 160.53 L775.44 158.9 L776.74 157.27 L778.05 155.64 L779.37 154.01 L780.7 152.39 L782.04 150.76 L783.39 149.13 L784.74 147.5 L786.11 145.88 L787.48 144.25 L788.87 142.62 L790.26 140.99 L791.66 139.36 L793.07 137.74 L794.49 136.11 L795.91 134.48 L797.35 132.85 L798.79 131.23 L800.24 129.6 L801.69 127.97 L803.16 126.34 L804.63 124.71 L806.11 123.09 L807.6 121.46 L809.09 119.83 L810.6 118.2 L812.1 116.58 L813.62 114.95 L815.14 113.32 L816.67 111.69 L818.21 110.06 L819.75 108.44 L821.3 106.81 L822.85 105.18 L824.41 103.55 L825.98 101.92 L827.55 100.3 L829.13 98.67 L830.71 97.04 L832.3 95.41 L833.89 93.79 L835.49 92.16 L837.1 90.53 L838.7 88.9 L840.32 87.27 L841.94 85.65 L843.56 84.02 L845.19 82.39 L846.82 80.76 L848.46 79.14 L850.1 77.51 L851.74 75.88 L853.39 74.25 L855.04 72.62 L856.7 71 L858.36 69.37 L860.02 67.74 L861.69 66.11 L863.36 64.49 L865.03 62.86 L866.7 61.23 L868.38 59.6 L870.06 57.97 L871.74 56.35 L873.43 54.72 L875.11 53.09 L876.8 51.46 L878.49 49.84 L880.19 48.21 L881.88 46.58 L883.58 44.95 L885.28 43.32 L886.97 41.7 L888.67 40.07 L890.38 38.44 L892.08 36.81 L893.78 35.19 L895.48 33.56 L897.19 31.93 L898.89 30.3 L900.6 28.67 L902.3 27.05" stroke-dashoffset="0.0"/><path d="M902.3 613.63 L900.17 612 L898.04 610.37 L895.91 608.74 L893.78 607.11 L891.65 605.48 L889.52 603.84 L887.39 602.21 L885.27 600.58 L883.14 598.95 L881.02 597.32 L878.9 595.69 L876.78 594.06 L874.66 592.43 L872.54 590.8 L870.43 589.16 L868.32 587.53 L866.21 585.9 L864.1 584.27 L862 582.64 L859.9 581.01 L857.8 579.38 L855.71 577.75 L853.62 576.12 L851.53 574.49 L849.45 572.86 L847.37 571.22 L845.3 569.59 L843.23 567.96 L841.16 566.33 L839.1 564.7 L837.05 563.07 L835 561.44 L832.95 559.81 L830.91 558.18 L828.88 556.55 L826.85 554.91 L824.82 553.28 L822.81 551.65 L820.79 550.02 L818.79 548.39 L816.79 546.76 L814.8 545.13 L812.81 543.5 L810.83 541.87 L808.86 540.24 L806.9 538.6 L804.94 536.97 L802.99 535.34 L801.04 533.71 L799.11 532.08 L797.18 530.45 L795.26 528.82 L793.35 527.19 L791.45 525.56 L789.55 523.92 L787.67 522.29 L785.79 520.66 L783.92 519.03 L782.06 517.4 L780.21 515.77 L778.37 514.14 L776.54 512.51 L774.72 510.88 L772.91 509.25 L771.11 507.62 L769.32 505.98 L767.53 504.35 L765.76 502.72 L764 501.09 L762.25 499.46 L760.51 497.83 L758.78 496.2 L757.06 494.57 L755.35 492.94 L753.66 491.31 L751.97 489.67 L750.3 488.04 L748.64 486.41 L746.99 484.78 L745.35 483.15 L743.72 481.52 L742.11 479.89 L740.51 478.26 L738.92 476.63 L737.34 475 L735.78 473.36 L734.22 471.73 L732.69 470.1 L731.16 468.47 L729.65 466.84 L728.15 465.21 L726.66 463.58 L725.19 461.95 L723.73 460.32 L722.28 458.69 L720.85 457.05 L719.43 455.42 L718.02 453.79 L716.63 452.16 L715.25 450.53 L713.89 448.9 L712.54 447.27 L711.21 445.64 L709.89 444.01 L708.59 442.38 L707.3 440.74 L706.02 439.11 L704.76 437.48 L703.52 435.85 L702.29 434.22 L701.07 432.59 L699.87 430.96 L698.69 429.33 L697.52 427.7 L696.37 426.06 L695.23 424.43 L694.11 422.8 L693.01 421.17 L691.92 419.54 L690.84 417.91 L689.79 416.28 L688.74 414.65 L687.72 413.02 L686.71 411.39 L685.72 409.75 L684.74 408.12 L683.78 406.49 L682.84 404.86 L681.92 403.23 L681.01 401.6 L680.11 399.97 L679.24 398.34 L678.38 396.71 L677.54 395.08 L676.72 393.44 L675.91 391.81 L675.12 390.18 L674.35 388.55 L673.59 386.92 L672.86 385.29 L672.14 383.66 L671.43 382.03 L670.75 380.4 L670.08 378.77 L669.43 377.13 L668.8 375.5 L668.18 373.87 L667.59 372.24 L667.01 370.61 L666.45 368.98 L665.91 367.35 L665.38 365.72 L664.88 364.09 L664.39 362.46 L663.92 360.82 L663.47 359.19 L663.03 357.56 L662.62 355.93 L662.22 354.3 L661.84 352.67 L661.48 351.04 L661.14 349.41 L660.81 347.78 L660.51 346.15 L660.22 344.51 L659.95 342.88 L659.7 341.25 L659.47 339.62 L659.25 337.99 L659.06 336.36 L658.88 334.73 L658.72 333.1 L658.59 331.47 L658.46 329.84 L658.36 328.2 L658.28 326.57 L658.21 324.94 L658.17 323.31 L658.14 321.68 L658.13 320.05 L658.14 318.42 L658.17 316.79 L658.21 315.17 L658.28 313.54 L658.36 311.91 L658.46 310.28 L658.59 308.66 L658.72 307.03 L658.88 305.4 L659.06 303.77 L659.25 302.14 L659.47 300.52 L659.7 298.89 L659.95 297.26 L660.22 295.63 L660.51 294.01 L660.81 292.38 L661.14 290.75 L661.48 289.12 L661.84 287.49 L662.22 285.87 L662.62 284.24 L663.03 282.61 L663.47 280.98 L663.92 279.36 L664.39 277.73 L664.88 276.1 L665.38 274.47 L665.91 272.84 L666.45 271.22 L667.01 269.59 L667.59 267.96 L668.18 266.33 L668.8 264.7 L669.43 263.08 L670.08 261.45 L670.75 259.82 L671.43 258.19 L672.14 256.57 L672.86 254.94 L673.59 253.31 L674.35 251.68 L675.12 250.05 L675.91 248.43 L676.72 246.8 L677.54 245.17 L678.38 243.54 L679.24 241.92 L680.11 240.29 L681.01 238.66 L681.92 237.03 L682.84 235.4 L683.78 233.78 L684.74 232.15 L685.72 230.52 L686.71 228.89 L687.72 227.27 L688.74 225.64 L689.79 224.01 L690.84 222.38 L691.92 220.75 L693.01 219.13 L694.11 217.5 L695.23 215.87 L696.37 214.24 L697.52 212.62 L698.69 210.99 L699.87 209.36 L701.07 207.73 L702.29 206.1 L703.52 204.48 L704.76 202.85 L706.02 201.22 L707.3 199.59 L708.59 197.97 L709.89 196.34 L711.21 194.71 L712.54 193.08 L713.89 191.45 L715.25 189.83 L716.63 188.2 L718.02 186.57 L719.43 184.94 L720.85 183.31 L722.28 181.69 L723.73 180.06 L725.19 178.43 L726.66 176.8 L728.15 175.18 L729.65 173.55 L731.16 171.92 L732.69 170.29 L734.22 168.66 L735.78 167.04 L737.34 165.41 L738.92 163.78 L740.51 162.15 L742.11 160.53 L743.72 158.9 L745.35 157.27 L746.99 155.64 L748.64 154.01 L750.3 152.39 L751.97 150.76 L753.66 149.13 L755.35 147.5 L757.06 145.88 L758.78 144.25 L760.51 142.62 L762.25 140.99 L764 139.36 L765.76 137.74 L767.53 136.11 L769.32 134.48 L771.11 132.85 L772.91 131.23 L774.72 129.6 L776.54 127.97 L778.37 126.34 L780.21 124.71 L782.06 123.09 L783.92 121.46 L785.79 119.83 L787.67 118.2 L789.55 116.58 L791.45 114.95 L793.35 113.32 L795.26 111.69 L797.18 110.06 L799.11 108.44 L801.04 106.81 L802.99 105.18 L804.94 103.55 L806.9 101.92 L808.86 100.3 L810.83 98.67 L812.81 97.04 L814.8 95.41 L816.79 93.79 L818.79 92.16 L820.79 90.53 L822.81 88.9 L824.82 87.27 L826.85 85.65 L828.88 84.02 L830.91 82.39 L832.95 80.76 L835 79.14 L837.05 77.51 L839.1 75.88 L841.16 74.25 L843.23 72.62 L845.3 71 L847.37 69.37 L849.45 67.74 L851.53 66.11 L853.62 64.49 L855.71 62.86 L857.8 61.23 L859.9 59.6 L862 57.97 L864.1 56.35 L866.21 54.72 L868.32 53.09 L870.43 51.46 L872.54 49.84 L874.66 48.21 L876.78 46.58 L878.9 44.95 L881.02 43.32 L883.14 41.7 L885.27 40.07 L887.39 38.44 L889.52 36.81 L891.65 35.19 L893.78 33.56 L895.91 31.93 L898.04 30.3 L900.17 28.67 L902.3 27.05" stroke-dashoffset="0.0"/><path d="M902.3 613.63 L899.74 612 L897.19 610.37 L894.63 608.74 L892.07 607.11 L889.52 605.48 L886.97 603.84 L884.41 602.21 L881.86 600.58 L879.31 598.95 L876.76 597.32 L874.22 595.69 L871.67 594.06 L869.13 592.43 L866.59 590.8 L864.06 589.16 L861.52 587.53 L858.99 585.9 L856.46 584.27 L853.94 582.64 L851.42 581.01 L848.9 579.38 L846.39 577.75 L843.88 576.12 L841.38 574.49 L838.88 572.86 L836.39 571.22 L833.9 569.59 L831.42 567.96 L828.94 566.33 L826.46 564.7 L824 563.07 L821.54 561.44 L819.08 559.81 L816.63 558.18 L814.19 556.55 L811.76 554.91 L809.33 553.28 L806.91 551.65 L804.49 550.02 L802.09 548.39 L799.69 546.76 L797.3 545.13 L794.91 543.5 L792.54 541.87 L790.17 540.24 L787.81 538.6 L785.46 536.97 L783.12 535.34 L780.79 533.71 L778.47 532.08 L776.16 530.45 L773.86 528.82 L771.56 527.19 L769.28 525.56 L767.01 523.92 L764.74 522.29 L762.49 520.66 L760.25 519.03 L758.02 517.4 L755.8 515.77 L753.59 514.14 L751.39 512.51 L749.21 510.88 L747.03 509.25 L744.87 507.62 L742.72 505.98 L740.58 504.35 L738.45 502.72 L736.34 501.09 L734.24 499.46 L732.15 497.83 L730.08 496.2 L728.01 494.57 L725.97 492.94 L723.93 491.31 L721.91 489.67 L719.9 488.04 L717.91 486.41 L715.93 484.78 L713.96 483.15 L712.01 481.52 L710.07 479.89 L708.15 478.26 L706.24 476.63 L704.35 475 L702.47 473.36 L700.61 471.73 L698.76 470.1 L696.93 468.47 L695.11 466.84 L693.31 465.21 L691.53 463.58 L689.76 461.95 L688.01 460.32 L686.27 458.69 L684.56 457.05 L682.85 455.42 L681.17 453.79 L679.5 452.16 L677.85 450.53 L676.21 448.9 L674.59 447.27 L672.99 445.64 L671.41 444.01 L669.84 442.38 L668.3 440.74 L666.77 439.11 L665.25 437.48 L663.76 435.85 L662.29 434.22 L660.83 432.59 L659.39 430.96 L657.97 429.33 L656.57 427.7 L655.18 426.06 L653.82 424.43 L652.47 422.8 L651.15 421.17 L649.84 419.54 L648.55 417.91 L647.28 416.28 L646.03 414.65 L644.8 413.02 L643.59 411.39 L642.4 409.75 L641.23 408.12 L640.08 406.49 L638.95 404.86 L637.84 403.23 L636.75 401.6 L635.68 399.97 L634.63 398.34 L633.6 396.71 L632.59 395.08 L631.6 393.44 L630.63 391.81 L629.68 390.18 L628.76 388.55 L627.85 386.92 L626.97 385.29 L626.1 383.66 L625.26 382.03 L624.44 380.4 L623.64 378.77 L622.86 377.13 L622.1 375.5 L621.36 373.87 L620.65 372.24 L619.95 370.61 L619.28 368.98 L618.63 367.35 L618 365.72 L617.39 364.09 L616.81 362.46 L616.24 360.82 L615.7 359.19 L615.18 357.56 L614.68 355.93 L614.2 354.3 L613.75 352.67 L613.31 351.04 L612.9 349.41 L612.51 347.78 L612.15 346.15 L611.8 344.51 L611.48 342.88 L611.18 341.25 L610.9 339.62 L610.64 337.99 L610.41 336.36 L610.2 334.73 L610.01 333.1 L609.84 331.47 L609.7 329.84 L609.57 328.2 L609.47 326.57 L609.4 324.94 L609.34 323.31 L609.31 321.68 L609.3 320.05 L609.31 318.42 L609.34 316.79 L609.4 315.17 L609.47 313.54 L609.57 311.91 L609.7 310.28 L609.84 308.66 L610.01 307.03 L610.2 305.4 L610.41 303.77 L610.64 302.14 L610.9 300.52 L611.18 298.89 L611.48 297.26 L611.8 295.63 L612.15 294.01 L612.51 292.38 L612.9 290.75 L613.31 289.12 L613.75 287.49 L614.2 285.87 L614.68 284.24 L615.18 282.61 L615.7 280.98 L616.24 279.36 L616.81 277.73 L617.39 276.1 L618 274.47 L618.63 272.84 L619.28 271.22 L619.95 269.59 L620.65 267.96 L621.36 266.33 L622.1 264.7 L622.86 263.08 L623.64 261.45 L624.44 259.82 L625.26 258.19 L626.1 256.57 L626.97 254.94 L627.85 253.31 L628.76 251.68 L629.68 250.05 L630.63 248.43 L631.6 246.8 L632.59 245.17 L633.6 243.54 L634.63 241.92 L635.68 240.29 L636.75 238.66 L637.84 237.03 L638.95 235.4 L640.08 233.78 L641.23 232.15 L642.4 230.52 L643.59 228.89 L644.8 227.27 L646.03 225.64 L647.28 224.01 L648.55 222.38 L649.84 220.75 L651.15 219.13 L652.47 217.5 L653.82 215.87 L655.18 214.24 L656.57 212.62 L657.97 210.99 L659.39 209.36 L660.83 207.73 L662.29 206.1 L663.76 204.48 L665.25 202.85 L666.77 201.22 L668.3 199.59 L669.84 197.97 L671.41 196.34 L672.99 194.71 L674.59 193.08 L676.21 191.45 L677.85 189.83 L679.5 188.2 L681.17 186.57 L682.85 184.94 L684.56 183.31 L686.27 181.69 L688.01 180.06 L689.76 178.43 L691.53 176.8 L693.31 175.18 L695.11 173.55 L696.93 171.92 L698.76 170.29 L700.61 168.66 L702.47 167.04 L704.35 165.41 L706.24 163.78 L708.15 162.15 L710.07 160.53 L712.01 158.9 L713.96 157.27 L715.93 155.64 L717.91 154.01 L719.9 152.39 L721.91 150.76 L723.93 149.13 L725.97 147.5 L728.01 145.88 L730.08 144.25 L732.15 142.62 L734.24 140.99 L736.34 139.36 L738.45 137.74 L740.58 136.11 L742.72 134.48 L744.87 132.85 L747.03 131.23 L749.21 129.6 L751.39 127.97 L753.59 126.34 L755.8 124.71 L758.02 123.09 L760.25 121.46 L762.49 119.83 L764.74 118.2 L767.01 116.58 L769.28 114.95 L771.56 113.32 L773.86 111.69 L776.16 110.06 L778.47 108.44 L780.79 106.81 L783.12 105.18 L785.46 103.55 L787.81 101.92 L790.17 100.3 L792.54 98.67 L794.91 97.04 L797.3 95.41 L799.69 93.79 L802.09 92.16 L804.49 90.53 L806.91 88.9 L809.33 87.27 L811.76 85.65 L814.19 84.02 L816.63 82.39 L819.08 80.76 L821.54 79.14 L824 77.51 L826.46 75.88 L828.94 74.25 L831.42 72.62 L833.9 71 L836.39 69.37 L838.88 67.74 L841.38 66.11 L843.88 64.49 L846.39 62.86 L848.9 61.23 L851.42 59.6 L853.94 57.97 L856.46 56.35 L858.99 54.72 L861.52 53.09 L864.06 51.46 L866.59 49.84 L869.13 48.21 L871.67 46.58 L874.22 44.95 L876.76 43.32 L879.31 41.7 L881.86 40.07 L884.41 38.44 L886.97 36.81 L889.52 35.19 L892.07 33.56 L894.63 31.93 L897.19 30.3 L899.74 28.67 L902.3 27.05" stroke-dashoffset="0.0"/><path d="M902.3 613.63 L899.32 612 L896.33 610.37 L893.35 608.74 L890.37 607.11 L887.39 605.48 L884.41 603.84 L881.43 602.21 L878.45 600.58 L875.48 598.95 L872.51 597.32 L869.54 595.69 L866.57 594.06 L863.6 592.43 L860.64 590.8 L857.68 589.16 L854.73 587.53 L851.77 585.9 L848.82 584.27 L845.88 582.64 L842.94 581.01 L840 579.38 L837.07 577.75 L834.15 576.12 L831.23 574.49 L828.31 572.86 L825.4 571.22 L822.5 569.59 L819.6 567.96 L816.71 566.33 L813.83 564.7 L810.95 563.07 L808.08 561.44 L805.21 559.81 L802.36 558.18 L799.51 556.55 L796.67 554.91 L793.83 553.28 L791.01 551.65 L788.19 550.02 L785.38 548.39 L782.59 546.76 L779.8 545.13 L777.02 543.5 L774.25 541.87 L771.48 540.24 L768.73 538.6 L765.99 536.97 L763.26 535.34 L760.54 533.71 L757.83 532.08 L755.13 530.45 L752.45 528.82 L749.77 527.19 L747.11 525.56 L744.46 523.92 L741.82 522.29 L739.19 520.66 L736.57 519.03 L733.97 517.4 L731.38 515.77 L728.8 514.14 L726.24 512.51 L723.69 510.88 L721.15 509.25 L718.63 507.62 L716.12 505.98 L713.63 504.35 L711.15 502.72 L708.68 501.09 L706.23 499.46 L703.79 497.83 L701.37 496.2 L698.97 494.57 L696.58 492.94 L694.2 491.31 L691.84 489.67 L689.5 488.04 L687.17 486.41 L684.86 484.78 L682.57 483.15 L680.29 481.52 L678.03 479.89 L675.79 478.26 L673.57 476.63 L671.36 475 L669.17 473.36 L666.99 471.73 L664.84 470.1 L662.7 468.47 L660.58 466.84 L658.48 465.21 L656.4 463.58 L654.34 461.95 L652.3 460.32 L650.27 458.69 L648.26 457.05 L646.28 455.42 L644.31 453.79 L642.36 452.16 L640.44 450.53 L638.53 448.9 L636.64 447.27 L634.77 445.64 L632.93 444.01 L631.1 442.38 L629.3 440.74 L627.51 439.11 L625.75 437.48 L624 435.85 L622.28 434.22 L620.58 432.59 L618.9 430.96 L617.25 429.33 L615.61 427.7 L614 426.06 L612.4 424.43 L610.84 422.8 L609.29 421.17 L607.76 419.54 L606.26 417.91 L604.78 416.28 L603.32 414.65 L601.89 413.02 L600.47 411.39 L599.09 409.75 L597.72 408.12 L596.38 406.49 L595.06 404.86 L593.76 403.23 L592.49 401.6 L591.24 399.97 L590.02 398.34 L588.81 396.71 L587.64 395.08 L586.48 393.44 L585.35 391.81 L584.25 390.18 L583.17 388.55 L582.11 386.92 L581.08 385.29 L580.07 383.66 L579.09 382.03 L578.13 380.4 L577.19 378.77 L576.28 377.13 L575.4 375.5 L574.54 373.87 L573.7 372.24 L572.89 370.61 L572.11 368.98 L571.35 367.35 L570.62 365.72 L569.91 364.09 L569.22 362.46 L568.56 360.82 L567.93 359.19 L567.32 357.56 L566.74 355.93 L566.19 354.3 L565.66 352.67 L565.15 351.04 L564.67 349.41 L564.22 347.78 L563.79 346.15 L563.39 344.51 L563.01 342.88 L562.66 341.25 L562.33 339.62 L562.04 337.99 L561.76 336.36 L561.52 334.73 L561.29 333.1 L561.1 331.47 L560.93 329.84 L560.79 328.2 L560.67 326.57 L560.58 324.94 L560.51 323.31 L560.48 321.68 L560.46 320.05 L560.48 318.42 L560.51 316.79 L560.58 315.17 L560.67 313.54 L560.79 311.91 L560.93 310.28 L561.1 308.66 L561.29 307.03 L561.52 305.4 L561.76 303.77 L562.04 302.14 L562.33 300.52 L562.66 298.89 L563.01 297.26 L563.39 295.63 L563.79 294.01 L564.22 292.38 L564.67 290.75 L565.15 289.12 L565.66 287.49 L566.19 285.87 L566.74 284.24 L567.32 282.61 L567.93 280.98 L568.56 279.36 L569.22 277.73 L569.91 276.1 L570.62 274.47 L571.35 272.84 L572.11 271.22 L572.89 269.59 L573.7 267.96 L574.54 266.33 L575.4 264.7 L576.28 263.08 L577.19 261.45 L578.13 259.82 L579.09 258.19 L580.07 256.57 L581.08 254.94 L582.11 253.31 L583.17 251.68 L584.25 250.05 L585.35 248.43 L586.48 246.8 L587.64 245.17 L588.81 243.54 L590.02 241.92 L591.24 240.29 L592.49 238.66 L593.76 237.03 L595.06 235.4 L596.38 233.78 L597.72 232.15 L599.09 230.52 L600.47 228.89 L601.89 227.27 L603.32 225.64 L604.78 224.01 L606.26 222.38 L607.76 220.75 L609.29 219.13 L610.84 217.5 L612.4 215.87 L614 214.24 L615.61 212.62 L617.25 210.99 L618.9 209.36 L620.58 207.73 L622.28 206.1 L624 204.48 L625.75 202.85 L627.51 201.22 L629.3 199.59 L631.1 197.97 L632.93 196.34 L634.77 194.71 L636.64 193.08 L638.53 191.45 L640.44 189.83 L642.36 188.2 L644.31 186.57 L646.28 184.94 L648.26 183.31 L650.27 181.69 L652.3 180.06 L654.34 178.43 L656.4 176.8 L658.48 175.18 L660.58 173.55 L662.7 171.92 L664.84 170.29 L666.99 168.66 L669.17 167.04 L671.36 165.41 L673.57 163.78 L675.79 162.15 L678.03 160.53 L680.29 158.9 L682.57 157.27 L684.86 155.64 L687.17 154.01 L689.5 152.39 L691.84 150.76 L694.2 149.13 L696.58 147.5 L698.97 145.88 L701.37 144.25 L703.79 142.62 L706.23 140.99 L708.68 139.36 L711.15 137.74 L713.63 136.11 L716.12 134.48 L718.63 132.85 L721.15 131.23 L723.69 129.6 L726.24 127.97 L728.8 126.34 L731.38 124.71 L733.97 123.09 L736.57 121.46 L739.19 119.83 L741.82 118.2 L744.46 116.58 L747.11 114.95 L749.77 113.32 L752.45 111.69 L755.13 110.06 L757.83 108.44 L760.54 106.81 L763.26 105.18 L765.99 103.55 L768.73 101.92 L771.48 100.3 L774.25 98.67 L777.02 97.04 L779.8 95.41 L782.59 93.79 L785.38 92.16 L788.19 90.53 L791.01 88.9 L793.83 87.27 L796.67 85.65 L799.51 84.02 L802.36 82.39 L805.21 80.76 L808.08 79.14 L810.95 77.51 L813.83 75.88 L816.71 74.25 L819.6 72.62 L822.5 71 L825.4 69.37 L828.31 67.74 L831.23 66.11 L834.15 64.49 L837.07 62.86 L840 61.23 L842.94 59.6 L845.88 57.97 L848.82 56.35 L851.77 54.72 L854.73 53.09 L857.68 51.46 L860.64 49.84 L863.6 48.21 L866.57 46.58 L869.54 44.95 L872.51 43.32 L875.48 41.7 L878.45 40.07 L881.43 38.44 L884.41 36.81 L887.39 35.19 L890.37 33.56 L893.35 31.93 L896.33 30.3 L899.32 28.67 L902.3 27.05" stroke-dashoffset="0.0"/><path d="M902.3 613.63 L898.89 612 L895.48 610.37 L892.07 608.74 L888.67 607.11 L885.26 605.48 L881.85 603.84 L878.45 602.21 L875.05 600.58 L871.65 598.95 L868.25 597.32 L864.86 595.69 L861.46 594.06 L858.07 592.43 L854.69 590.8 L851.31 589.16 L847.93 587.53 L844.56 585.9 L841.19 584.27 L837.82 582.64 L834.46 581.01 L831.11 579.38 L827.76 577.75 L824.41 576.12 L821.07 574.49 L817.74 572.86 L814.42 571.22 L811.1 569.59 L807.79 567.96 L804.48 566.33 L801.19 564.7 L797.9 563.07 L794.62 561.44 L791.34 559.81 L788.08 558.18 L784.82 556.55 L781.58 554.91 L778.34 553.28 L775.11 551.65 L771.89 550.02 L768.68 548.39 L765.48 546.76 L762.3 545.13 L759.12 543.5 L755.95 541.87 L752.8 540.24 L749.65 538.6 L746.52 536.97 L743.4 535.34 L740.29 533.71 L737.19 532.08 L734.11 530.45 L731.04 528.82 L727.98 527.19 L724.94 525.56 L721.91 523.92 L718.89 522.29 L715.89 520.66 L712.9 519.03 L709.92 517.4 L706.96 515.77 L704.02 514.14 L701.09 512.51 L698.17 510.88 L695.28 509.25 L692.39 507.62 L689.52 505.98 L686.67 504.35 L683.84 502.72 L681.02 501.09 L678.22 499.46 L675.44 497.83 L672.67 496.2 L669.92 494.57 L667.19 492.94 L664.47 491.31 L661.78 489.67 L659.1 488.04 L656.44 486.41 L653.8 484.78 L651.18 483.15 L648.58 481.52 L646 479.89 L643.43 478.26 L640.89 476.63 L638.37 475 L635.86 473.36 L633.38 471.73 L630.92 470.1 L628.47 468.47 L626.05 466.84 L623.65 465.21 L621.27 463.58 L618.92 461.95 L616.58 460.32 L614.27 458.69 L611.97 457.05 L609.7 455.42 L607.46 453.79 L605.23 452.16 L603.03 450.53 L600.85 448.9 L598.69 447.27 L596.56 445.64 L594.45 444.01 L592.36 442.38 L590.3 440.74 L588.26 439.11 L586.24 437.48 L584.25 435.85 L582.28 434.22 L580.34 432.59 L578.42 430.96 L576.52 429.33 L574.65 427.7 L572.81 426.06 L570.99 424.43 L569.2 422.8 L567.43 421.17 L565.69 419.54 L563.97 417.91 L562.28 416.28 L560.61 414.65 L558.97 413.02 L557.36 411.39 L555.77 409.75 L554.21 408.12 L552.67 406.49 L551.17 404.86 L549.69 403.23 L548.23 401.6 L546.8 399.97 L545.4 398.34 L544.03 396.71 L542.68 395.08 L541.37 393.44 L540.08 391.81 L538.81 390.18 L537.58 388.55 L536.37 386.92 L535.19 385.29 L534.04 383.66 L532.91 382.03 L531.82 380.4 L530.75 378.77 L529.71 377.13 L528.7 375.5 L527.72 373.87 L526.76 372.24 L525.84 370.61 L524.94 368.98 L524.07 367.35 L523.23 365.72 L522.42 364.09 L521.64 362.46 L520.89 360.82 L520.17 359.19 L519.47 357.56 L518.81 355.93 L518.17 354.3 L517.56 352.67 L516.99 351.04 L516.44 349.41 L515.92 347.78 L515.43 346.15 L514.97 344.51 L514.54 342.88 L514.14 341.25 L513.77 339.62 L513.43 337.99 L513.11 336.36 L512.83 334.73 L512.58 333.1 L512.36 331.47 L512.16 329.84 L512 328.2 L511.87 326.57 L511.76 324.94 L511.69 323.31 L511.64 321.68 L511.63 320.05 L511.64 318.42 L511.69 316.79 L511.76 315.17 L511.87 313.54 L512 311.91 L512.16 310.28 L512.36 308.66 L512.58 307.03 L512.83 305.4 L513.11 303.77 L513.43 302.14 L513.77 300.52 L514.14 298.89 L514.54 297.26 L514.97 295.63 L515.43 294.01 L515.92 292.38 L516.44 290.75 L516.99 289.12 L517.56 287.49 L518.17 285.87 L518.81 284.24 L519.47 282.61 L520.17 280.98 L520.89 279.36 L521.64 277.73 L522.42 276.1 L523.23 274.47 L524.07 272.84 L524.94 271.22 L525.84 269.59 L526.76 267.96 L527.72 266.33 L528.7 264.7 L529.71 263.08 L530.75 261.45 L531.82 259.82 L532.91 258.19 L534.04 256.57 L535.19 254.94 L536.37 253.31 L537.58 251.68 L538.81 250.05 L540.08 248.43 L541.37 246.8 L542.68 245.17 L544.03 243.54 L545.4 241.92 L546.8 240.29 L548.23 238.66 L549.69 237.03 L551.17 235.4 L552.67 233.78 L554.21 232.15 L555.77 230.52 L557.36 228.89 L558.97 227.27 L560.61 225.64 L562.28 224.01 L563.97 222.38 L565.69 220.75 L567.43 219.13 L569.2 217.5 L570.99 215.87 L572.81 214.24 L574.65 212.62 L576.52 210.99 L578.42 209.36 L580.34 207.73 L582.28 206.1 L584.25 204.48 L586.24 202.85 L588.26 201.22 L590.3 199.59 L592.36 197.97 L594.45 196.34 L596.56 194.71 L598.69 193.08 L600.85 191.45 L603.03 189.83 L605.23 188.2 L607.46 186.57 L609.7 184.94 L611.97 183.31 L614.27 181.69 L616.58 180.06 L618.92 178.43 L621.27 176.8 L623.65 175.18 L626.05 173.55 L628.47 171.92 L630.92 170.29 L633.38 168.66 L635.86 167.04 L638.37 165.41 L640.89 163.78 L643.43 162.15 L646 160.53 L648.58 158.9 L651.18 157.27 L653.8 155.64 L656.44 154.01 L659.1 152.39 L661.78 150.76 L664.47 149.13 L667.19 147.5 L669.92 145.88 L672.67 144.25 L675.44 142.62 L678.22 140.99 L681.02 139.36 L683.84 137.74 L686.67 136.11 L689.52 134.48 L692.39 132.85 L695.28 131.23 L698.17 129.6 L701.09 127.97 L704.02 126.34 L706.96 124.71 L709.92 123.09 L712.9 121.46 L715.89 119.83 L718.89 118.2 L721.91 116.58 L724.94 114.95 L727.98 113.32 L731.04 111.69 L734.11 110.06 L737.19 108.44 L740.29 106.81 L743.4 105.18 L746.52 103.55 L749.65 101.92 L752.8 100.3 L755.95 98.67 L759.12 97.04 L762.3 95.41 L765.48 93.79 L768.68 92.16 L771.89 90.53 L775.11 88.9 L778.34 87.27 L781.58 85.65 L784.82 84.02 L788.08 82.39 L791.34 80.76 L794.62 79.14 L797.9 77.51 L801.19 75.88 L804.48 74.25 L807.79 72.62 L811.1 71 L814.42 69.37 L817.74 67.74 L821.07 66.11 L824.41 64.49 L827.76 62.86 L831.11 61.23 L834.46 59.6 L837.82 57.97 L841.19 56.35 L844.56 54.72 L847.93 53.09 L851.31 51.46 L854.69 49.84 L858.07 48.21 L861.46 46.58 L864.86 44.95 L868.25 43.32 L871.65 41.7 L875.05 40.07 L878.45 38.44 L881.85 36.81 L885.26 35.19 L888.67 33.56 L892.07 31.93 L895.48 30.3 L898.89 28.67 L902.3 27.05" stroke-dashoffset="0.0"/><path d="M902.3 613.63 L898.46 612 L894.63 610.37 L890.8 608.74 L886.96 607.11 L883.13 605.48 L879.3 603.84 L875.47 602.21 L871.64 600.58 L867.82 598.95 L863.99 597.32 L860.18 595.69 L856.36 594.06 L852.55 592.43 L848.74 590.8 L844.93 589.16 L841.13 587.53 L837.34 585.9 L833.55 584.27 L829.76 582.64 L825.98 581.01 L822.21 579.38 L818.44 577.75 L814.68 576.12 L810.92 574.49 L807.17 572.86 L803.43 571.22 L799.7 569.59 L795.97 567.96 L792.26 566.33 L788.55 564.7 L784.85 563.07 L781.16 561.44 L777.47 559.81 L773.8 558.18 L770.14 556.55 L766.49 554.91 L762.84 553.28 L759.21 551.65 L755.59 550.02 L751.98 548.39 L748.38 546.76 L744.8 545.13 L741.22 543.5 L737.66 541.87 L734.11 540.24 L730.57 538.6 L727.05 536.97 L723.54 535.34 L720.04 533.71 L716.56 532.08 L713.09 530.45 L709.63 528.82 L706.19 527.19 L702.77 525.56 L699.36 523.92 L695.96 522.29 L692.59 520.66 L689.22 519.03 L685.88 517.4 L682.55 515.77 L679.23 514.14 L675.94 512.51 L672.66 510.88 L669.4 509.25 L666.15 507.62 L662.93 505.98 L659.72 504.35 L656.53 502.72 L653.36 501.09 L650.21 499.46 L647.08 497.83 L643.96 496.2 L640.87 494.57 L637.8 492.94 L634.75 491.31 L631.71 489.67 L628.7 488.04 L625.71 486.41 L622.74 484.78 L619.79 483.15 L616.86 481.52 L613.96 479.89 L611.07 478.26 L608.21 476.63 L605.37 475 L602.56 473.36 L599.76 471.73 L596.99 470.1 L594.25 468.47 L591.52 466.84 L588.82 465.21 L586.15 463.58 L583.49 461.95 L580.87 460.32 L578.26 458.69 L575.68 457.05 L573.13 455.42 L570.6 453.79 L568.1 452.16 L565.62 450.53 L563.17 448.9 L560.74 447.27 L558.34 445.64 L555.96 444.01 L553.62 442.38 L551.29 440.74 L549 439.11 L546.73 437.48 L544.49 435.85 L542.28 434.22 L540.09 432.59 L537.93 430.96 L535.8 429.33 L533.7 427.7 L531.62 426.06 L529.58 424.43 L527.56 422.8 L525.57 421.17 L523.61 419.54 L521.68 417.91 L519.77 416.28 L517.9 414.65 L516.05 413.02 L514.24 411.39 L512.45 409.75 L510.7 408.12 L508.97 406.49 L507.27 404.86 L505.61 403.23 L503.97 401.6 L502.37 399.97 L500.79 398.34 L499.25 396.71 L497.73 395.08 L496.25 393.44 L494.8 391.81 L493.38 390.18 L491.99 388.55 L490.63 386.92 L489.3 385.29 L488 383.66 L486.74 382.03 L485.51 380.4 L484.3 378.77 L483.14 377.13 L482 375.5 L480.89 373.87 L479.82 372.24 L478.78 370.61 L477.77 368.98 L476.79 367.35 L475.85 365.72 L474.94 364.09 L474.06 362.46 L473.21 360.82 L472.4 359.19 L471.62 357.56 L470.87 355.93 L470.15 354.3 L469.47 352.67 L468.82 351.04 L468.21 349.41 L467.62 347.78 L467.07 346.15 L466.55 344.51 L466.07 342.88 L465.62 341.25 L465.2 339.62 L464.82 337.99 L464.47 336.36 L464.15 334.73 L463.86 333.1 L463.61 331.47 L463.4 329.84 L463.21 328.2 L463.06 326.57 L462.94 324.94 L462.86 323.31 L462.81 321.68 L462.79 320.05 L462.81 318.42 L462.86 316.79 L462.94 315.17 L463.06 313.54 L463.21 311.91 L463.4 310.28 L463.61 308.66 L463.86 307.03 L464.15 305.4 L464.47 303.77 L464.82 302.14 L465.2 300.52 L465.62 298.89 L466.07 297.26 L466.55 295.63 L467.07 294.01 L467.62 292.38 L468.21 290.75 L468.82 289.12 L469.47 287.49 L470.15 285.87 L470.87 284.24 L471.62 282.61 L472.4 280.98 L473.21 279.36 L474.06 277.73 L474.94 276.1 L475.85 274.47 L476.79 272.84 L477.77 271.22 L478.78 269.59 L479.82 267.96 L480.89 266.33 L482 264.7 L483.14 263.08 L484.3 261.45 L485.51 259.82 L486.74 258.19 L488 256.57 L489.3 254.94 L490.63 253.31 L491.99 251.68 L493.38 250.05 L494.8 248.43 L496.25 246.8 L497.73 245.17 L499.25 243.54 L500.79 241.92 L502.37 240.29 L503.97 238.66 L505.61 237.03 L507.27 235.4 L508.97 233.78 L510.7 232.15 L512.45 230.52 L514.24 228.89 L516.05 227.27 L517.9 225.64 L519.77 224.01 L521.68 222.38 L523.61 220.75 L525.57 219.13 L527.56 217.5 L529.58 215.87 L531.62 214.24 L533.7 212.62 L535.8 210.99 L537.93 209.36 L540.09 207.73 L542.28 206.1 L544.49 204.48 L546.73 202.85 L549 201.22 L551.29 199.59 L553.62 197.97 L555.96 196.34 L558.34 194.71 L560.74 193.08 L563.17 191.45 L565.62 189.83 L568.1 188.2 L570.6 186.57 L573.13 184.94 L575.68 183.31 L578.26 181.69 L580.87 180.06 L583.49 178.43 L586.15 176.8 L588.82 175.18 L591.52 173.55 L594.25 171.92 L596.99 170.29 L599.76 168.66 L602.56 167.04 L605.37 165.41 L608.21 163.78 L611.07 162.15 L613.96 160.53 L616.86 158.9 L619.79 157.27 L622.74 155.64 L625.71 154.01 L628.7 152.39 L631.71 150.76 L634.75 149.13 L637.8 147.5 L640.87 145.88 L643.96 144.25 L647.08 142.62 L650.21 140.99 L653.36 139.36 L656.53 137.74 L659.72 136.11 L662.93 134.48 L666.15 132.85 L669.4 131.23 L672.66 129.6 L675.94 127.97 L679.23 126.34 L682.55 124.71 L685.88 123.09 L689.22 121.46 L692.59 119.83 L695.96 118.2 L699.36 116.58 L702.77 114.95 L706.19 113.32 L709.63 111.69 L713.09 110.06 L716.56 108.44 L720.04 106.81 L723.54 105.18 L727.05 103.55 L730.57 101.92 L734.11 100.3 L737.66 98.67 L741.22 97.04 L744.8 95.41 L748.38 93.79 L751.98 92.16 L755.59 90.53 L759.21 88.9 L762.84 87.27 L766.49 85.65 L770.14 84.02 L773.8 82.39 L777.47 80.76 L781.16 79.14 L784.85 77.51 L788.55 75.88 L792.26 74.25 L795.97 72.62 L799.7 71 L803.43 69.37 L807.17 67.74 L810.92 66.11 L814.68 64.49 L818.44 62.86 L822.21 61.23 L825.98 59.6 L829.76 57.97 L833.55 56.35 L837.34 54.72 L841.13 53.09 L844.93 51.46 L848.74 49.84 L852.55 48.21 L856.36 46.58 L860.18 44.95 L863.99 43.32 L867.82 41.7 L871.64 40.07 L875.47 38.44 L879.3 36.81 L883.13 35.19 L886.96 33.56 L890.8 31.93 L894.63 30.3 L898.46 28.67 L902.3 27.05" stroke-dashoffset="0.0"/><path d="M902.3 613.63 L898.04 612 L893.78 610.37 L889.52 608.74 L885.26 607.11 L881 605.48 L876.74 603.84 L872.49 602.21 L868.24 600.58 L863.99 598.95 L859.74 597.32 L855.49 595.69 L851.25 594.06 L847.02 592.43 L842.79 590.8 L838.56 589.16 L834.34 587.53 L830.12 585.9 L825.91 584.27 L821.7 582.64 L817.5 581.01 L813.31 579.38 L809.12 577.75 L804.94 576.12 L800.77 574.49 L796.6 572.86 L792.45 571.22 L788.3 569.59 L784.16 567.96 L780.03 566.33 L775.91 564.7 L771.8 563.07 L767.7 561.44 L763.6 559.81 L759.52 558.18 L755.45 556.55 L751.39 554.91 L747.35 553.28 L743.31 551.65 L739.29 550.02 L735.28 548.39 L731.28 546.76 L727.29 545.13 L723.32 543.5 L719.36 541.87 L715.42 540.24 L711.49 538.6 L707.57 536.97 L703.67 535.34 L699.79 533.71 L695.92 532.08 L692.06 530.45 L688.23 528.82 L684.4 527.19 L680.6 525.56 L676.81 523.92 L673.04 522.29 L669.28 520.66 L665.55 519.03 L661.83 517.4 L658.13 515.77 L654.45 514.14 L650.79 512.51 L647.14 510.88 L643.52 509.25 L639.92 507.62 L636.33 505.98 L632.77 504.35 L629.22 502.72 L625.7 501.09 L622.2 499.46 L618.72 497.83 L615.26 496.2 L611.82 494.57 L608.41 492.94 L605.02 491.31 L601.65 489.67 L598.3 488.04 L594.98 486.41 L591.68 484.78 L588.4 483.15 L585.15 481.52 L581.92 479.89 L578.72 478.26 L575.54 476.63 L572.38 475 L569.25 473.36 L566.15 471.73 L563.07 470.1 L560.02 468.47 L556.99 466.84 L553.99 465.21 L551.02 463.58 L548.07 461.95 L545.15 460.32 L542.26 458.69 L539.39 457.05 L536.55 455.42 L533.75 453.79 L530.96 452.16 L528.21 450.53 L525.48 448.9 L522.79 447.27 L520.12 445.64 L517.48 444.01 L514.87 442.38 L512.29 440.74 L509.74 439.11 L507.22 437.48 L504.73 435.85 L502.28 434.22 L499.85 432.59 L497.45 430.96 L495.08 429.33 L492.74 427.7 L490.44 426.06 L488.16 424.43 L485.92 422.8 L483.71 421.17 L481.53 419.54 L479.39 417.91 L477.27 416.28 L475.19 414.65 L473.14 413.02 L471.12 411.39 L469.14 409.75 L467.19 408.12 L465.27 406.49 L463.38 404.86 L461.53 403.23 L459.71 401.6 L457.93 399.97 L456.18 398.34 L454.46 396.71 L452.78 395.08 L451.13 393.44 L449.52 391.81 L447.94 390.18 L446.4 388.55 L444.89 386.92 L443.41 385.29 L441.97 383.66 L440.57 382.03 L439.2 380.4 L437.86 378.77 L436.56 377.13 L435.3 375.5 L434.07 373.87 L432.88 372.24 L431.72 370.61 L430.6 368.98 L429.51 367.35 L428.47 365.72 L427.45 364.09 L426.48 362.46 L425.54 360.82 L424.63 359.19 L423.76 357.56 L422.93 355.93 L422.14 354.3 L421.38 352.67 L420.66 351.04 L419.97 349.41 L419.32 347.78 L418.71 346.15 L418.14 344.51 L417.6 342.88 L417.1 341.25 L416.64 339.62 L416.21 337.99 L415.82 336.36 L415.47 334.73 L415.15 333.1 L414.87 331.47 L414.63 329.84 L414.42 328.2 L414.26 326.57 L414.13 324.94 L414.03 323.31 L413.98 321.68 L413.96 320.05 L413.98 318.42 L414.03 316.79 L414.13 315.17 L414.26 313.54 L414.42 311.91 L414.63 310.28 L414.87 308.66 L415.15 307.03 L415.47 305.4 L415.82 303.77 L416.21 302.14 L416.64 300.52 L417.1 298.89 L417.6 297.26 L418.14 295.63 L418.71 294.01 L419.32 292.38 L419.97 290.75 L420.66 289.12 L421.38 287.49 L422.14 285.87 L422.93 284.24 L423.76 282.61 L424.63 280.98 L425.54 279.36 L426.48 277.73 L427.45 276.1 L428.47 274.47 L429.51 272.84 L430.6 271.22 L431.72 269.59 L432.88 267.96 L434.07 266.33 L435.3 264.7 L436.56 263.08 L437.86 261.45 L439.2 259.82 L440.57 258.19 L441.97 256.57 L443.41 254.94 L444.89 253.31 L446.4 251.68 L447.94 250.05 L449.52 248.43 L451.13 246.8 L452.78 245.17 L454.46 243.54 L456.18 241.92 L457.93 240.29 L459.71 238.66 L461.53 237.03 L463.38 235.4 L465.27 233.78 L467.19 232.15 L469.14 230.52 L471.12 228.89 L473.14 227.27 L475.19 225.64 L477.27 224.01 L479.39 222.38 L481.53 220.75 L483.71 219.13 L485.92 217.5 L488.16 215.87 L490.44 214.24 L492.74 212.62 L495.08 210.99 L497.45 209.36 L499.85 207.73 L502.28 206.1 L504.73 204.48 L507.22 202.85 L509.74 201.22 L512.29 199.59 L514.87 197.97 L517.48 196.34 L520.12 194.71 L522.79 193.08 L525.48 191.45 L528.21 189.83 L530.96 188.2 L533.75 186.57 L536.55 184.94 L539.39 183.31 L542.26 181.69 L545.15 180.06 L548.07 178.43 L551.02 176.8 L553.99 175.18 L556.99 173.55 L560.02 171.92 L563.07 170.29 L566.15 168.66 L569.25 167.04 L572.38 165.41 L575.54 163.78 L578.72 162.15 L581.92 160.53 L585.15 158.9 L588.4 157.27 L591.68 155.64 L594.98 154.01 L598.3 152.39 L601.65 150.76 L605.02 149.13 L608.41 147.5 L611.82 145.88 L615.26 144.25 L618.72 142.62 L622.2 140.99 L625.7 139.36 L629.22 137.74 L632.77 136.11 L636.33 134.48 L639.92 132.85 L643.52 131.23 L647.14 129.6 L650.79 127.97 L654.45 126.34 L658.13 124.71 L661.83 123.09 L665.55 121.46 L669.28 119.83 L673.04 118.2 L676.81 116.58 L680.6 114.95 L684.4 113.32 L688.23 111.69 L692.06 110.06 L695.92 108.44 L699.79 106.81 L703.67 105.18 L707.57 103.55 L711.49 101.92 L715.42 100.3 L719.36 98.67 L723.32 97.04 L727.29 95.41 L731.28 93.79 L735.28 92.16 L739.29 90.53 L743.31 88.9 L747.35 87.27 L751.39 85.65 L755.45 84.02 L759.52 82.39 L763.6 80.76 L767.7 79.14 L771.8 77.51 L775.91 75.88 L780.03 74.25 L784.16 72.62 L788.3 71 L792.45 69.37 L796.6 67.74 L800.77 66.11 L804.94 64.49 L809.12 62.86 L813.31 61.23 L817.5 59.6 L821.7 57.97 L825.91 56.35 L830.12 54.72 L834.34 53.09 L838.56 51.46 L842.79 49.84 L847.02 48.21 L851.25 46.58 L855.49 44.95 L859.74 43.32 L863.99 41.7 L868.24 40.07 L872.49 38.44 L876.74 36.81 L881 35.19 L885.26 33.56 L889.52 31.93 L893.78 30.3 L898.04 28.67 L902.3 27.05" stroke-dashoffset="0.0"/><path d="M902.3 613.63 L897.61 612 L892.93 610.37 L888.24 608.74 L883.55 607.11 L878.87 605.48 L874.19 603.84 L869.51 602.21 L864.83 600.58 L860.15 598.95 L855.48 597.32 L850.81 595.69 L846.15 594.06 L841.49 592.43 L836.83 590.8 L832.18 589.16 L827.54 587.53 L822.9 585.9 L818.27 584.27 L813.64 582.64 L809.02 581.01 L804.41 579.38 L799.8 577.75 L795.2 576.12 L790.62 574.49 L786.03 572.86 L781.46 571.22 L776.9 569.59 L772.35 567.96 L767.8 566.33 L763.27 564.7 L758.75 563.07 L754.23 561.44 L749.73 559.81 L745.25 558.18 L740.77 556.55 L736.3 554.91 L731.85 553.28 L727.41 551.65 L722.99 550.02 L718.58 548.39 L714.18 546.76 L709.79 545.13 L705.43 543.5 L701.07 541.87 L696.73 540.24 L692.41 538.6 L688.1 536.97 L683.81 535.34 L679.54 533.71 L675.28 532.08 L671.04 530.45 L666.82 528.82 L662.61 527.19 L658.43 525.56 L654.26 523.92 L650.11 522.29 L645.98 520.66 L641.87 519.03 L637.78 517.4 L633.71 515.77 L629.66 514.14 L625.63 512.51 L621.63 510.88 L617.64 509.25 L613.68 507.62 L609.73 505.98 L605.81 504.35 L601.92 502.72 L598.04 501.09 L594.19 499.46 L590.36 497.83 L586.56 496.2 L582.78 494.57 L579.02 492.94 L575.29 491.31 L571.58 489.67 L567.9 488.04 L564.25 486.41 L560.62 484.78 L557.01 483.15 L553.43 481.52 L549.88 479.89 L546.36 478.26 L542.86 476.63 L539.39 475 L535.95 473.36 L532.53 471.73 L529.15 470.1 L525.79 468.47 L522.46 466.84 L519.16 465.21 L515.89 463.58 L512.65 461.95 L509.44 460.32 L506.25 458.69 L503.1 457.05 L499.98 455.42 L496.89 453.79 L493.83 452.16 L490.8 450.53 L487.8 448.9 L484.84 447.27 L481.9 445.64 L479 444.01 L476.13 442.38 L473.29 440.74 L470.49 439.11 L467.72 437.48 L464.98 435.85 L462.27 434.22 L459.6 432.59 L456.96 430.96 L454.36 429.33 L451.79 427.7 L449.25 426.06 L446.75 424.43 L444.28 422.8 L441.85 421.17 L439.46 419.54 L437.09 417.91 L434.77 416.28 L432.48 414.65 L430.22 413.02 L428 411.39 L425.82 409.75 L423.67 408.12 L421.56 406.49 L419.49 404.86 L417.45 403.23 L415.46 401.6 L413.49 399.97 L411.57 398.34 L409.68 396.71 L407.83 395.08 L406.02 393.44 L404.24 391.81 L402.5 390.18 L400.8 388.55 L399.14 386.92 L397.52 385.29 L395.94 383.66 L394.39 382.03 L392.89 380.4 L391.42 378.77 L389.99 377.13 L388.6 375.5 L387.25 373.87 L385.94 372.24 L384.66 370.61 L383.43 368.98 L382.24 367.35 L381.08 365.72 L379.97 364.09 L378.89 362.46 L377.86 360.82 L376.86 359.19 L375.91 357.56 L375 355.93 L374.12 354.3 L373.29 352.67 L372.49 351.04 L371.74 349.41 L371.03 347.78 L370.35 346.15 L369.72 344.51 L369.13 342.88 L368.58 341.25 L368.07 339.62 L367.6 337.99 L367.17 336.36 L366.78 334.73 L366.43 333.1 L366.13 331.47 L365.86 329.84 L365.64 328.2 L365.45 326.57 L365.31 324.94 L365.21 323.31 L365.15 321.68 L365.13 320.05 L365.15 318.42 L365.21 316.79 L365.31 315.17 L365.45 313.54 L365.64 311.91 L365.86 310.28 L366.13 308.66 L366.43 307.03 L366.78 305.4 L367.17 303.77 L367.6 302.14 L368.07 300.52 L368.58 298.89 L369.13 297.26 L369.72 295.63 L370.35 294.01 L371.03 292.38 L371.74 290.75 L372.49 289.12 L373.29 287.49 L374.12 285.87 L375 284.24 L375.91 282.61 L376.86 280.98 L377.86 279.36 L378.89 277.73 L379.97 276.1 L381.08 274.47 L382.24 272.84 L383.43 271.22 L384.66 269.59 L385.94 267.96 L387.25 266.33 L388.6 264.7 L389.99 263.08 L391.42 261.45 L392.89 259.82 L394.39 258.19 L395.94 256.57 L397.52 254.94 L399.14 253.31 L400.8 251.68 L402.5 250.05 L404.24 248.43 L406.02 246.8 L407.83 245.17 L409.68 243.54 L411.57 241.92 L413.49 240.29 L415.46 238.66 L417.45 237.03 L419.49 235.4 L421.56 233.78 L423.67 232.15 L425.82 230.52 L428 228.89 L430.22 227.27 L432.48 225.64 L434.77 224.01 L437.09 222.38 L439.46 220.75 L441.85 219.13 L444.28 217.5 L446.75 215.87 L449.25 214.24 L451.79 212.62 L454.36 210.99 L456.96 209.36 L459.6 207.73 L462.27 206.1 L464.98 204.48 L467.72 202.85 L470.49 201.22 L473.29 199.59 L476.13 197.97 L479 196.34 L481.9 194.71 L484.84 193.08 L487.8 191.45 L490.8 189.83 L493.83 188.2 L496.89 186.57 L499.98 184.94 L503.1 183.31 L506.25 181.69 L509.44 180.06 L512.65 178.43 L515.89 176.8 L519.16 175.18 L522.46 173.55 L525.79 171.92 L529.15 170.29 L532.53 168.66 L535.95 167.04 L539.39 165.41 L542.86 163.78 L546.36 162.15 L549.88 160.53 L553.43 158.9 L557.01 157.27 L560.62 155.64 L564.25 154.01 L567.9 152.39 L571.58 150.76 L575.29 149.13 L579.02 147.5 L582.78 145.88 L586.56 144.25 L590.36 142.62 L594.19 140.99 L598.04 139.36 L601.92 137.74 L605.81 136.11 L609.73 134.48 L613.68 132.85 L617.64 131.23 L621.63 129.6 L625.63 127.97 L629.66 126.34 L633.71 124.71 L637.78 123.09 L641.87 121.46 L645.98 119.83 L650.11 118.2 L654.26 116.58 L658.43 114.95 L662.61 113.32 L666.82 111.69 L671.04 110.06 L675.28 108.44 L679.54 106.81 L683.81 105.18 L688.1 103.55 L692.41 101.92 L696.73 100.3 L701.07 98.67 L705.43 97.04 L709.79 95.41 L714.18 93.79 L718.58 92.16 L722.99 90.53 L727.41 88.9 L731.85 87.27 L736.3 85.65 L740.77 84.02 L745.25 82.39 L749.73 80.76 L754.23 79.14 L758.75 77.51 L763.27 75.88 L767.8 74.25 L772.35 72.62 L776.9 71 L781.46 69.37 L786.03 67.74 L790.62 66.11 L795.2 64.49 L799.8 62.86 L804.41 61.23 L809.02 59.6 L813.64 57.97 L818.27 56.35 L822.9 54.72 L827.54 53.09 L832.18 51.46 L836.83 49.84 L841.49 48.21 L846.15 46.58 L850.81 44.95 L855.48 43.32 L860.15 41.7 L864.83 40.07 L869.51 38.44 L874.19 36.81 L878.87 35.19 L883.55 33.56 L888.24 31.93 L892.93 30.3 L897.61 28.67 L902.3 27.05" stroke-dashoffset="0.0"/><path d="M902.3 613.63 L897.19 612 L892.07 610.37 L886.96 608.74 L881.85 607.11 L876.74 605.48 L871.63 603.84 L866.53 602.21 L861.42 600.58 L856.32 598.95 L851.23 597.32 L846.13 595.69 L841.05 594.06 L835.96 592.43 L830.88 590.8 L825.81 589.16 L820.74 587.53 L815.68 585.9 L810.63 584.27 L805.58 582.64 L800.54 581.01 L795.51 579.38 L790.48 577.75 L785.47 576.12 L780.46 574.49 L775.46 572.86 L770.48 571.22 L765.5 569.59 L760.53 567.96 L755.58 566.33 L750.63 564.7 L745.7 563.07 L740.77 561.44 L735.86 559.81 L730.97 558.18 L726.08 556.55 L721.21 554.91 L716.36 553.28 L711.51 551.65 L706.69 550.02 L701.87 548.39 L697.08 546.76 L692.29 545.13 L687.53 543.5 L682.78 541.87 L678.04 540.24 L673.33 538.6 L668.63 536.97 L663.95 535.34 L659.29 533.71 L654.64 532.08 L650.02 530.45 L645.41 528.82 L640.82 527.19 L636.26 525.56 L631.71 523.92 L627.19 522.29 L622.68 520.66 L618.2 519.03 L613.74 517.4 L609.3 515.77 L604.88 514.14 L600.48 512.51 L596.11 510.88 L591.76 509.25 L587.44 507.62 L583.14 505.98 L578.86 504.35 L574.61 502.72 L570.38 501.09 L566.18 499.46 L562 497.83 L557.85 496.2 L553.73 494.57 L549.63 492.94 L545.56 491.31 L541.52 489.67 L537.5 488.04 L533.51 486.41 L529.55 484.78 L525.62 483.15 L521.72 481.52 L517.84 479.89 L514 478.26 L510.18 476.63 L506.4 475 L502.64 473.36 L498.92 471.73 L495.22 470.1 L491.56 468.47 L487.93 466.84 L484.33 465.21 L480.76 463.58 L477.22 461.95 L473.72 460.32 L470.25 458.69 L466.81 457.05 L463.41 455.42 L460.03 453.79 L456.7 452.16 L453.39 450.53 L450.12 448.9 L446.89 447.27 L443.69 445.64 L440.52 444.01 L437.39 442.38 L434.29 440.74 L431.23 439.11 L428.21 437.48 L425.22 435.85 L422.27 434.22 L419.36 432.59 L416.48 430.96 L413.64 429.33 L410.83 427.7 L408.07 426.06 L405.34 424.43 L402.65 422.8 L399.99 421.17 L397.38 419.54 L394.8 417.91 L392.26 416.28 L389.77 414.65 L387.31 413.02 L384.89 411.39 L382.5 409.75 L380.16 408.12 L377.86 406.49 L375.6 404.86 L373.38 403.23 L371.2 401.6 L369.06 399.97 L366.96 398.34 L364.9 396.71 L362.88 395.08 L360.9 393.44 L358.96 391.81 L357.07 390.18 L355.21 388.55 L353.4 386.92 L351.63 385.29 L349.9 383.66 L348.22 382.03 L346.57 380.4 L344.97 378.77 L343.41 377.13 L341.9 375.5 L340.42 373.87 L338.99 372.24 L337.6 370.61 L336.26 368.98 L334.96 367.35 L333.7 365.72 L332.48 364.09 L331.31 362.46 L330.18 360.82 L329.1 359.19 L328.06 357.56 L327.06 355.93 L326.1 354.3 L325.19 352.67 L324.33 351.04 L323.51 349.41 L322.73 347.78 L321.99 346.15 L321.31 344.51 L320.66 342.88 L320.06 341.25 L319.5 339.62 L318.99 337.99 L318.52 336.36 L318.1 334.73 L317.72 333.1 L317.39 331.47 L317.1 329.84 L316.85 328.2 L316.65 326.57 L316.49 324.94 L316.38 323.31 L316.31 321.68 L316.29 320.05 L316.31 318.42 L316.38 316.79 L316.49 315.17 L316.65 313.54 L316.85 311.91 L317.1 310.28 L317.39 308.66 L317.72 307.03 L318.1 305.4 L318.52 303.77 L318.99 302.14 L319.5 300.52 L320.06 298.89 L320.66 297.26 L321.31 295.63 L321.99 294.01 L322.73 292.38 L323.51 290.75 L324.33 289.12 L325.19 287.49 L326.1 285.87 L327.06 284.24 L328.06 282.61 L329.1 280.98 L330.18 279.36 L331.31 277.73 L332.48 276.1 L333.7 274.47 L334.96 272.84 L336.26 271.22 L337.6 269.59 L338.99 267.96 L340.42 266.33 L341.9 264.7 L343.41 263.08 L344.97 261.45 L346.57 259.82 L348.22 258.19 L349.9 256.57 L351.63 254.94 L353.4 253.31 L355.21 251.68 L357.07 250.05 L358.96 248.43 L360.9 246.8 L362.88 245.17 L364.9 243.54 L366.96 241.92 L369.06 240.29 L371.2 238.66 L373.38 237.03 L375.6 235.4 L377.86 233.78 L380.16 232.15 L382.5 230.52 L384.89 228.89 L387.31 227.27 L389.77 225.64 L392.26 224.01 L394.8 222.38 L397.38 220.75 L399.99 219.13 L402.65 217.5 L405.34 215.87 L408.07 214.24 L410.83 212.62 L413.64 210.99 L416.48 209.36 L419.36 207.73 L422.27 206.1 L425.22 204.48 L428.21 202.85 L431.23 201.22 L434.29 199.59 L437.39 197.97 L440.52 196.34 L443.69 194.71 L446.89 193.08 L450.12 191.45 L453.39 189.83 L456.7 188.2 L460.03 186.57 L463.41 184.94 L466.81 183.31 L470.25 181.69 L473.72 180.06 L477.22 178.43 L480.76 176.8 L484.33 175.18 L487.93 173.55 L491.56 171.92 L495.22 170.29 L498.92 168.66 L502.64 167.04 L506.4 165.41 L510.18 163.78 L514 162.15 L517.84 160.53 L521.72 158.9 L525.62 157.27 L529.55 155.64 L533.51 154.01 L537.5 152.39 L541.52 150.76 L545.56 149.13 L549.63 147.5 L553.73 145.88 L557.85 144.25 L562 142.62 L566.18 140.99 L570.38 139.36 L574.61 137.74 L578.86 136.11 L583.14 134.48 L587.44 132.85 L591.76 131.23 L596.11 129.6 L600.48 127.97 L604.88 126.34 L609.3 124.71 L613.74 123.09 L618.2 121.46 L622.68 119.83 L627.19 118.2 L631.71 116.58 L636.26 114.95 L640.82 113.32 L645.41 111.69 L650.02 110.06 L654.64 108.44 L659.29 106.81 L663.95 105.18 L668.63 103.55 L673.33 101.92 L678.04 100.3 L682.78 98.67 L687.53 97.04 L692.29 95.41 L697.08 93.79 L701.87 92.16 L706.69 90.53 L711.51 88.9 L716.36 87.27 L721.21 85.65 L726.08 84.02 L730.97 82.39 L735.86 80.76 L740.77 79.14 L745.7 77.51 L750.63 75.88 L755.58 74.25 L760.53 72.62 L765.5 71 L770.48 69.37 L775.46 67.74 L780.46 66.11 L785.47 64.49 L790.48 62.86 L795.51 61.23 L800.54 59.6 L805.58 57.97 L810.63 56.35 L815.68 54.72 L820.74 53.09 L825.81 51.46 L830.88 49.84 L835.96 48.21 L841.05 46.58 L846.13 44.95 L851.23 43.32 L856.32 41.7 L861.42 40.07 L866.53 38.44 L871.63 36.81 L876.74 35.19 L881.85 33.56 L886.96 31.93 L892.07 30.3 L897.19 28.67 L902.3 27.05" stroke-dashoffset="0.0"/><path d="M1053.97 564.7 L1053.55 564.7 L1053.13 564.7 L1052.71 564.7 L1052.28 564.7 L1051.86 564.7 L1051.44 564.7 L1051.02 564.7 L1050.6 564.7 L1050.18 564.7 L1049.76 564.7 L1049.34 564.7 L1048.91 564.7 L1048.49 564.7 L1048.07 564.7 L1047.65 564.7 L1047.23 564.7 L1046.81 564.7 L1046.39 564.7 L1045.97 564.7 L1045.54 564.7 L1045.12 564.7 L1044.7 564.7 L1044.28 564.7 L1043.86 564.7 L1043.44 564.7 L1043.02 564.7 L1042.59 564.7 L1042.17 564.7 L1041.75 564.7 L1041.33 564.7 L1040.91 564.7 L1040.49 564.7 L1040.07 564.7 L1039.65 564.7 L1039.22 564.7 L1038.8 564.7 L1038.38 564.7 L1037.96 564.7 L1037.54 564.7 L1037.12 564.7 L1036.7 564.7 L1036.28 564.7 L1035.85 564.7 L1035.43 564.7 L1035.01 564.7 L1034.59 564.7 L1034.17 564.7 L1033.75 564.7 L1033.33 564.7 L1032.9 564.7 L1032.48 564.7 L1032.06 564.7 L1031.64 564.7 L1031.22 564.7 L1030.8 564.7 L1030.38 564.7 L1029.96 564.7 L1029.53 564.7 L1029.11 564.7 L1028.69 564.7 L1028.27 564.7 L1027.85 564.7 L1027.43 564.7 L1027.01 564.7 L1026.59 564.7 L1026.16 564.7 L1025.74 564.7 L1025.32 564.7 L1024.9 564.7 L1024.48 564.7 L1024.06 564.7 L1023.64 564.7 L1023.21 564.7 L1022.79 564.7 L1022.37 564.7 L1021.95 564.7 L1021.53 564.7 L1021.11 564.7 L1020.69 564.7 L1020.27 564.7 L1019.84 564.7 L1019.42 564.7 L1019 564.7 L1018.58 564.7 L1018.16 564.7 L1017.74 564.7 L1017.32 564.7 L1016.9 564.7 L1016.47 564.7 L1016.05 564.7 L1015.63 564.7 L1015.21 564.7 L1014.79 564.7 L1014.37 564.7 L1013.95 564.7 L1013.52 564.7 L1013.1 564.7 L1012.68 564.7 L1012.26 564.7 L1011.84 564.7 L1011.42 564.7 L1011 564.7 L1010.58 564.7 L1010.15 564.7 L1009.73 564.7 L1009.31 564.7 L1008.89 564.7 L1008.47 564.7 L1008.05 564.7 L1007.63 564.7 L1007.21 564.7 L1006.78 564.7 L1006.36 564.7 L1005.94 564.7 L1005.52 564.7 L1005.1 564.7 L1004.68 564.7 L1004.26 564.7 L1003.83 564.7 L1003.41 564.7 L1002.99 564.7 L1002.57 564.7 L1002.15 564.7 L1001.73 564.7 L1001.31 564.7 L1000.89 564.7 L1000.46 564.7 L1000.04 564.7 L999.62 564.7 L999.2 564.7 L998.78 564.7 L998.36 564.7 L997.94 564.7 L997.52 564.7 L997.09 564.7 L996.67 564.7 L996.25 564.7 L995.83 564.7 L995.41 564.7 L994.99 564.7 L994.57 564.7 L994.14 564.7 L993.72 564.7 L993.3 564.7 L992.88 564.7 L992.46 564.7 L992.04 564.7 L991.62 564.7 L991.2 564.7 L990.77 564.7 L990.35 564.7 L989.93 564.7 L989.51 564.7 L989.09 564.7 L988.67 564.7 L988.25 564.7 L987.83 564.7 L987.4 564.7 L986.98 564.7 L986.56 564.7 L986.14 564.7 L985.72 564.7 L985.3 564.7 L984.88 564.7 L984.45 564.7 L984.03 564.7 L983.61 564.7 L983.19 564.7 L982.77 564.7 L982.35 564.7 L981.93 564.7 L981.51 564.7 L981.08 564.7 L980.66 564.7 L980.24 564.7 L979.82 564.7 L979.4 564.7 L978.98 564.7 L978.56 564.7 L978.14 564.7 L977.71 564.7 L977.29 564.7 L976.87 564.7 L976.45 564.7 L976.03 564.7 L975.61 564.7 L975.19 564.7 L974.76 564.7 L974.34 564.7 L973.92 564.7 L973.5 564.7 L973.08 564.7 L972.66 564.7 L972.24 564.7 L971.82 564.7 L971.39 564.7 L970.97 564.7 L970.55 564.7 L970.13 564.7 L969.71 564.7 L969.29 564.7 L968.87 564.7 L968.44 564.7 L968.02 564.7 L967.6 564.7 L967.18 564.7 L966.76 564.7 L966.34 564.7 L965.92 564.7 L965.5 564.7 L965.07 564.7 L964.65 564.7 L964.23 564.7 L963.81 564.7 L963.39 564.7 L962.97 564.7 L962.55 564.7 L962.13 564.7 L961.7 564.7 L961.28 564.7 L960.86 564.7 L960.44 564.7 L960.02 564.7 L959.6 564.7 L959.18 564.7 L958.75 564.7 L958.33 564.7 L957.91 564.7 L957.49 564.7 L957.07 564.7 L956.65 564.7 L956.23 564.7 L955.81 564.7 L955.38 564.7 L954.96 564.7 L954.54 564.7 L954.12 564.7 L953.7 564.7 L953.28 564.7 L952.86 564.7 L952.44 564.7 L952.01 564.7 L951.59 564.7 L951.17 564.7 L950.75 564.7 L950.33 564.7 L949.91 564.7 L949.49 564.7 L949.06 564.7 L948.64 564.7 L948.22 564.7 L947.8 564.7 L947.38 564.7 L946.96 564.7 L946.54 564.7 L946.12 564.7 L945.69 564.7 L945.27 564.7 L944.85 564.7 L944.43 564.7 L944.01 564.7 L943.59 564.7 L943.17 564.7 L942.75 564.7 L942.32 564.7 L941.9 564.7 L941.48 564.7 L941.06 564.7 L940.64 564.7 L940.22 564.7 L939.8 564.7 L939.37 564.7 L938.95 564.7 L938.53 564.7 L938.11 564.7 L937.69 564.7 L937.27 564.7 L936.85 564.7 L936.43 564.7 L936 564.7 L935.58 564.7 L935.16 564.7 L934.74 564.7 L934.32 564.7 L933.9 564.7 L933.48 564.7 L933.06 564.7 L932.63 564.7 L932.21 564.7 L931.79 564.7 L931.37 564.7 L930.95 564.7 L930.53 564.7 L930.11 564.7 L929.68 564.7 L929.26 564.7 L928.84 564.7 L928.42 564.7 L928 564.7 L927.58 564.7 L927.16 564.7 L926.74 564.7 L926.31 564.7 L925.89 564.7 L925.47 564.7 L925.05 564.7 L924.63 564.7 L924.21 564.7 L923.79 564.7 L923.37 564.7 L922.94 564.7 L922.52 564.7 L922.1 564.7 L921.68 564.7 L921.26 564.7 L920.84 564.7 L920.42 564.7 L919.99 564.7 L919.57 564.7 L919.15 564.7 L918.73 564.7 L918.31 564.7 L917.89 564.7 L917.47 564.7 L917.05 564.7 L916.62 564.7 L916.2 564.7 L915.78 564.7 L915.36 564.7 L914.94 564.7 L914.52 564.7 L914.1 564.7 L913.68 564.7 L913.25 564.7 L912.83 564.7 L912.41 564.7 L911.99 564.7 L911.57 564.7 L911.15 564.7 L910.73 564.7 L910.3 564.7 L909.88 564.7 L909.46 564.7 L909.04 564.7 L908.62 564.7 L908.2 564.7 L907.78 564.7 L907.36 564.7 L906.93 564.7 L906.51 564.7 L906.09 564.7 L905.67 564.7 L905.25 564.7 L904.83 564.7 L904.41 564.7 L903.99 564.7 L903.56 564.7 L903.14 564.7 L902.72 564.7 L902.3 564.7 L901.88 564.7 L901.46 564.7 L901.04 564.7 L900.61 564.7 L900.19 564.7 L899.77 564.7 L899.35 564.7 L898.93 564.7 L898.51 564.7 L898.09 564.7 L897.67 564.7 L897.24 564.7 L896.82 564.7 L896.4 564.7 L895.98 564.7 L895.56 564.7 L895.14 564.7 L894.72 564.7 L894.3 564.7 L893.87 564.7 L893.45 564.7 L893.03 564.7 L892.61 564.7 L892.19 564.7 L891.77 564.7 L891.35 564.7 L890.92 564.7 L890.5 564.7 L890.08 564.7 L889.66 564.7 L889.24 564.7 L888.82 564.7 L888.4 564.7 L887.98 564.7 L887.55 564.7 L887.13 564.7 L886.71 564.7 L886.29 564.7 L885.87 564.7 L885.45 564.7 L885.03 564.7 L884.61 564.7 L884.18 564.7 L883.76 564.7 L883.34 564.7 L882.92 564.7 L882.5 564.7 L882.08 564.7 L881.66 564.7 L881.23 564.7 L880.81 564.7 L880.39 564.7 L879.97 564.7 L879.55 564.7 L879.13 564.7 L878.71 564.7 L878.29 564.7 L877.86 564.7 L877.44 564.7 L877.02 564.7 L876.6 564.7 L876.18 564.7 L875.76 564.7 L875.34 564.7 L874.92 564.7 L874.49 564.7 L874.07 564.7 L873.65 564.7 L873.23 564.7 L872.81 564.7 L872.39 564.7 L871.97 564.7 L871.54 564.7 L871.12 564.7 L870.7 564.7 L870.28 564.7 L869.86 564.7 L869.44 564.7 L869.02 564.7 L868.6 564.7 L868.17 564.7 L867.75 564.7 L867.33 564.7 L866.91 564.7 L866.49 564.7 L866.07 564.7 L865.65 564.7 L865.23 564.7 L864.8 564.7 L864.38 564.7 L863.96 564.7 L863.54 564.7 L863.12 564.7 L862.7 564.7 L862.28 564.7 L861.85 564.7 L861.43 564.7 L861.01 564.7 L860.59 564.7 L860.17 564.7 L859.75 564.7 L859.33 564.7 L858.91 564.7 L858.48 564.7 L858.06 564.7 L857.64 564.7 L857.22 564.7 L856.8 564.7 L856.38 564.7 L855.96 564.7 L855.54 564.7 L855.11 564.7 L854.69 564.7 L854.27 564.7 L853.85 564.7 L853.43 564.7 L853.01 564.7 L852.59 564.7 L852.16 564.7 L851.74 564.7 L851.32 564.7 L850.9 564.7 L850.48 564.7 L850.06 564.7 L849.64 564.7 L849.22 564.7 L848.79 564.7 L848.37 564.7 L847.95 564.7 L847.53 564.7 L847.11 564.7 L846.69 564.7 L846.27 564.7 L845.85 564.7 L845.42 564.7 L845 564.7 L844.58 564.7 L844.16 564.7 L843.74 564.7 L843.32 564.7 L842.9 564.7 L842.47 564.7 L842.05 564.7 L841.63 564.7 L841.21 564.7 L840.79 564.7 L840.37 564.7 L839.95 564.7 L839.53 564.7 L839.1 564.7 L838.68 564.7 L838.26 564.7 L837.84 564.7 L837.42 564.7 L837 564.7 L836.58 564.7 L836.16 564.7 L835.73 564.7 L835.31 564.7 L834.89 564.7 L834.47 564.7 L834.05 564.7 L833.63 564.7 L833.21 564.7 L832.78 564.7 L832.36 564.7 L831.94 564.7 L831.52 564.7 L831.1 564.7 L830.68 564.7 L830.26 564.7 L829.84 564.7 L829.41 564.7 L828.99 564.7 L828.57 564.7 L828.15 564.7 L827.73 564.7 L827.31 564.7 L826.89 564.7 L826.46 564.7 L826.04 564.7 L825.62 564.7 L825.2 564.7 L824.78 564.7 L824.36 564.7 L823.94 564.7 L823.52 564.7 L823.09 564.7 L822.67 564.7 L822.25 564.7 L821.83 564.7 L821.41 564.7 L820.99 564.7 L820.57 564.7 L820.15 564.7 L819.72 564.7 L819.3 564.7 L818.88 564.7 L818.46 564.7 L818.04 564.7 L817.62 564.7 L817.2 564.7 L816.77 564.7 L816.35 564.7 L815.93 564.7 L815.51 564.7 L815.09 564.7 L814.67 564.7 L814.25 564.7 L813.83 564.7 L813.4 564.7 L812.98 564.7 L812.56 564.7 L812.14 564.7 L811.72 564.7 L811.3 564.7 L810.88 564.7 L810.46 564.7 L810.03 564.7 L809.61 564.7 L809.19 564.7 L808.77 564.7 L808.35 564.7 L807.93 564.7 L807.51 564.7 L807.08 564.7 L806.66 564.7 L806.24 564.7 L805.82 564.7 L805.4 564.7 L804.98 564.7 L804.56 564.7 L804.14 564.7 L803.71 564.7 L803.29 564.7 L802.87 564.7 L802.45 564.7 L802.03 564.7 L801.61 564.7 L801.19 564.7 L800.77 564.7 L800.34 564.7 L799.92 564.7 L799.5 564.7 L799.08 564.7 L798.66 564.7 L798.24 564.7 L797.82 564.7 L797.39 564.7 L796.97 564.7 L796.55 564.7 L796.13 564.7 L795.71 564.7 L795.29 564.7 L794.87 564.7 L794.45 564.7 L794.02 564.7 L793.6 564.7 L793.18 564.7 L792.76 564.7 L792.34 564.7 L791.92 564.7 L791.5 564.7 L791.08 564.7 L790.65 564.7 L790.23 564.7 L789.81 564.7 L789.39 564.7 L788.97 564.7 L788.55 564.7 L788.13 564.7 L787.7 564.7 L787.28 564.7 L786.86 564.7 L786.44 564.7 L786.02 564.7 L785.6 564.7 L785.18 564.7 L784.76 564.7 L784.33 564.7 L783.91 564.7 L783.49 564.7 L783.07 564.7 L782.65 564.7 L782.23 564.7 L781.81 564.7 L781.39 564.7 L780.96 564.7 L780.54 564.7 L780.12 564.7 L779.7 564.7 L779.28 564.7 L778.86 564.7 L778.44 564.7 L778.01 564.7 L777.59 564.7 L777.17 564.7 L776.75 564.7 L776.33 564.7 L775.91 564.7 L775.49 564.7 L775.07 564.7 L774.64 564.7 L774.22 564.7 L773.8 564.7 L773.38 564.7 L772.96 564.7 L772.54 564.7 L772.12 564.7 L771.7 564.7 L771.27 564.7 L770.85 564.7 L770.43 564.7 L770.01 564.7 L769.59 564.7 L769.17 564.7 L768.75 564.7 L768.32 564.7 L767.9 564.7 L767.48 564.7 L767.06 564.7 L766.64 564.7 L766.22 564.7 L765.8 564.7 L765.38 564.7 L764.95 564.7 L764.53 564.7 L764.11 564.7 L763.69 564.7 L763.27 564.7 L762.85 564.7 L762.43 564.7 L762.01 564.7 L761.58 564.7 L761.16 564.7 L760.74 564.7 L760.32 564.7 L759.9 564.7 L759.48 564.7 L759.06 564.7 L758.63 564.7 L758.21 564.7 L757.79 564.7 L757.37 564.7 L756.95 564.7 L756.53 564.7 L756.11 564.7 L755.69 564.7 L755.26 564.7 L754.84 564.7 L754.42 564.7 L754 564.7 L753.58 564.7 L753.16 564.7 L752.74 564.7 L752.32 564.7 L751.89 564.7 L751.47 564.7 L751.05 564.7 L750.63 564.7"/><path d="M1195.3 515.77 L1194.49 515.77 L1193.68 515.77 L1192.86 515.77 L1192.05 515.77 L1191.23 515.77 L1190.42 515.77 L1189.61 515.77 L1188.79 515.77 L1187.98 515.77 L1187.16 515.77 L1186.35 515.77 L1185.54 515.77 L1184.72 515.77 L1183.91 515.77 L1183.1 515.77 L1182.28 515.77 L1181.47 515.77 L1180.65 515.77 L1179.84 515.77 L1179.03 515.77 L1178.21 515.77 L1177.4 515.77 L1176.58 515.77 L1175.77 515.77 L1174.96 515.77 L1174.14 515.77 L1173.33 515.77 L1172.51 515.77 L1171.7 515.77 L1170.89 515.77 L1170.07 515.77 L1169.26 515.77 L1168.45 515.77 L1167.63 515.77 L1166.82 515.77 L1166 515.77 L1165.19 515.77 L1164.38 515.77 L1163.56 515.77 L1162.75 515.77 L1161.93 515.77 L1161.12 515.77 L1160.31 515.77 L1159.49 515.77 L1158.68 515.77 L1157.86 515.77 L1157.05 515.77 L1156.24 515.77 L1155.42 515.77 L1154.61 515.77 L1153.8 515.77 L1152.98 515.77 L1152.17 515.77 L1151.35 515.77 L1150.54 515.77 L1149.73 515.77 L1148.91 515.77 L1148.1 515.77 L1147.28 515.77 L1146.47 515.77 L1145.66 515.77 L1144.84 515.77 L1144.03 515.77 L1143.21 515.77 L1142.4 515.77 L1141.59 515.77 L1140.77 515.77 L1139.96 515.77 L1139.14 515.77 L1138.33 515.77 L1137.52 515.77 L1136.7 515.77 L1135.89 515.77 L1135.08 515.77 L1134.26 515.77 L1133.45 515.77 L1132.63 515.77 L1131.82 515.77 L1131.01 515.77 L1130.19 515.77 L1129.38 515.77 L1128.56 515.77 L1127.75 515.77 L1126.94 515.77 L1126.12 515.77 L1125.31 515.77 L1124.49 515.77 L1123.68 515.77 L1122.87 515.77 L1122.05 515.77 L1121.24 515.77 L1120.43 515.77 L1119.61 515.77 L1118.8 515.77 L1117.98 515.77 L1117.17 515.77 L1116.36 515.77 L1115.54 515.77 L1114.73 515.77 L1113.91 515.77 L1113.1 515.77 L1112.29 515.77 L1111.47 515.77 L1110.66 515.77 L1109.84 515.77 L1109.03 515.77 L1108.22 515.77 L1107.4 515.77 L1106.59 515.77 L1105.78 515.77 L1104.96 515.77 L1104.15 515.77 L1103.33 515.77 L1102.52 515.77 L1101.71 515.77 L1100.89 515.77 L1100.08 515.77 L1099.26 515.77 L1098.45 515.77 L1097.64 515.77 L1096.82 515.77 L1096.01 515.77 L1095.19 515.77 L1094.38 515.77 L1093.57 515.77 L1092.75 515.77 L1091.94 515.77 L1091.12 515.77 L1090.31 515.77 L1089.5 515.77 L1088.68 515.77 L1087.87 515.77 L1087.06 515.77 L1086.24 515.77 L1085.43 515.77 L1084.61 515.77 L1083.8 515.77 L1082.99 515.77 L1082.17 515.77 L1081.36 515.77 L1080.54 515.77 L1079.73 515.77 L1078.92 515.77 L1078.1 515.77 L1077.29 515.77 L1076.47 515.77 L1075.66 515.77 L1074.85 515.77 L1074.03 515.77 L1073.22 515.77 L1072.41 515.77 L1071.59 515.77 L1070.78 515.77 L1069.96 515.77 L1069.15 515.77 L1068.34 515.77 L1067.52 515.77 L1066.71 515.77 L1065.89 515.77 L1065.08 515.77 L1064.27 515.77 L1063.45 515.77 L1062.64 515.77 L1061.82 515.77 L1061.01 515.77 L1060.2 515.77 L1059.38 515.77 L1058.57 515.77 L1057.75 515.77 L1056.94 515.77 L1056.13 515.77 L1055.31 515.77 L1054.5 515.77 L1053.69 515.77 L1052.87 515.77 L1052.06 515.77 L1051.24 515.77 L1050.43 515.77 L1049.62 515.77 L1048.8 515.77 L1047.99 515.77 L1047.17 515.77 L1046.36 515.77 L1045.55 515.77 L1044.73 515.77 L1043.92 515.77 L1043.1 515.77 L1042.29 515.77 L1041.48 515.77 L1040.66 515.77 L1039.85 515.77 L1039.04 515.77 L1038.22 515.77 L1037.41 515.77 L1036.59 515.77 L1035.78 515.77 L1034.97 515.77 L1034.15 515.77 L1033.34 515.77 L1032.52 515.77 L1031.71 515.77 L1030.9 515.77 L1030.08 515.77 L1029.27 515.77 L1028.45 515.77 L1027.64 515.77 L1026.83 515.77 L1026.01 515.77 L1025.2 515.77 L1024.38 515.77 L1023.57 515.77 L1022.76 515.77 L1021.94 515.77 L1021.13 515.77 L1020.32 515.77 L1019.5 515.77 L1018.69 515.77 L1017.87 515.77 L1017.06 515.77 L1016.25 515.77 L1015.43 515.77 L1014.62 515.77 L1013.8 515.77 L1012.99 515.77 L1012.18 515.77 L1011.36 515.77 L1010.55 515.77 L1009.73 515.77 L1008.92 515.77 L1008.11 515.77 L1007.29 515.77 L1006.48 515.77 L1005.67 515.77 L1004.85 515.77 L1004.04 515.77 L1003.22 515.77 L1002.41 515.77 L1001.6 515.77 L1000.78 515.77 L999.97 515.77 L999.15 515.77 L998.34 515.77 L997.53 515.77 L996.71 515.77 L995.9 515.77 L995.08 515.77 L994.27 515.77 L993.46 515.77 L992.64 515.77 L991.83 515.77 L991.02 515.77 L990.2 515.77 L989.39 515.77 L988.57 515.77 L987.76 515.77 L986.95 515.77 L986.13 515.77 L985.32 515.77 L984.5 515.77 L983.69 515.77 L982.88 515.77 L982.06 515.77 L981.25 515.77 L980.43 515.77 L979.62 515.77 L978.81 515.77 L977.99 515.77 L977.18 515.77 L976.36 515.77 L975.55 515.77 L974.74 515.77 L973.92 515.77 L973.11 515.77 L972.3 515.77 L971.48 515.77 L970.67 515.77 L969.85 515.77 L969.04 515.77 L968.23 515.77 L967.41 515.77 L966.6 515.77 L965.78 515.77 L964.97 515.77 L964.16 515.77 L963.34 515.77 L962.53 515.77 L961.71 515.77 L960.9 515.77 L960.09 515.77 L959.27 515.77 L958.46 515.77 L957.65 515.77 L956.83 515.77 L956.02 515.77 L955.2 515.77 L954.39 515.77 L953.58 515.77 L952.76 515.77 L951.95 515.77 L951.13 515.77 L950.32 515.77 L949.51 515.77 L948.69 515.77 L947.88 515.77 L947.06 515.77 L946.25 515.77 L945.44 515.77 L944.62 515.77 L943.81 515.77 L943 515.77 L942.18 515.77 L941.37 515.77 L940.55 515.77 L939.74 515.77 L938.93 515.77 L938.11 515.77 L937.3 515.77 L936.48 515.77 L935.67 515.77 L934.86 515.77 L934.04 515.77 L933.23 515.77 L932.41 515.77 L931.6 515.77 L930.79 515.77 L929.97 515.77 L929.16 515.77 L928.34 515.77 L927.53 515.77 L926.72 515.77 L925.9 515.77 L925.09 515.77 L924.28 515.77 L923.46 515.77 L922.65 515.77 L921.83 515.77 L921.02 515.77 L920.21 515.77 L919.39 515.77 L918.58 515.77 L917.76 515.77 L916.95 515.77 L916.14 515.77 L915.32 515.77 L914.51 515.77 L913.69 515.77 L912.88 515.77 L912.07 515.77 L911.25 515.77 L910.44 515.77 L909.63 515.77 L908.81 515.77 L908 515.77 L907.18 515.77 L906.37 515.77 L905.56 515.77 L904.74 515.77 L903.93 515.77 L903.11 515.77 L902.3 515.77 L901.49 515.77 L900.67 515.77 L899.86 515.77 L899.04 515.77 L898.23 515.77 L897.42 515.77 L896.6 515.77 L895.79 515.77 L894.97 515.77 L894.16 515.77 L893.35 515.77 L892.53 515.77 L891.72 515.77 L890.91 515.77 L890.09 515.77 L889.28 515.77 L888.46 515.77 L887.65 515.77 L886.84 515.77 L886.02 515.77 L885.21 515.77 L884.39 515.77 L883.58 515.77 L882.77 515.77 L881.95 515.77 L881.14 515.77 L880.32 515.77 L879.51 515.77 L878.7 515.77 L877.88 515.77 L877.07 515.77 L876.26 515.77 L875.44 515.77 L874.63 515.77 L873.81 515.77 L873 515.77 L872.19 515.77 L871.37 515.77 L870.56 515.77 L869.74 515.77 L868.93 515.77 L868.12 515.77 L867.3 515.77 L866.49 515.77 L865.67 515.77 L864.86 515.77 L864.05 515.77 L863.23 515.77 L862.42 515.77 L861.6 515.77 L860.79 515.77 L859.98 515.77 L859.16 515.77 L858.35 515.77 L857.54 515.77 L856.72 515.77 L855.91 515.77 L855.09 515.77 L854.28 515.77 L853.47 515.77 L852.65 515.77 L851.84 515.77 L851.02 515.77 L850.21 515.77 L849.4 515.77 L848.58 515.77 L847.77 515.77 L846.95 515.77 L846.14 515.77 L845.33 515.77 L844.51 515.77 L843.7 515.77 L842.89 515.77 L842.07 515.77 L841.26 515.77 L840.44 515.77 L839.63 515.77 L838.82 515.77 L838 515.77 L837.19 515.77 L836.37 515.77 L835.56 515.77 L834.75 515.77 L833.93 515.77 L833.12 515.77 L832.3 515.77 L831.49 515.77 L830.68 515.77 L829.86 515.77 L829.05 515.77 L828.24 515.77 L827.42 515.77 L826.61 515.77 L825.79 515.77 L824.98 515.77 L824.17 515.77 L823.35 515.77 L822.54 515.77 L821.72 515.77 L820.91 515.77 L820.1 515.77 L819.28 515.77 L818.47 515.77 L817.65 515.77 L816.84 515.77 L816.03 515.77 L815.21 515.77 L814.4 515.77 L813.58 515.77 L812.77 515.77 L811.96 515.77 L811.14 515.77 L810.33 515.77 L809.52 515.77 L808.7 515.77 L807.89 515.77 L807.07 515.77 L806.26 515.77 L805.45 515.77 L804.63 515.77 L803.82 515.77 L803 515.77 L802.19 515.77 L801.38 515.77 L800.56 515.77 L799.75 515.77 L798.93 515.77 L798.12 515.77 L797.31 515.77 L796.49 515.77 L795.68 515.77 L794.87 515.77 L794.05 515.77 L793.24 515.77 L792.42 515.77 L791.61 515.77 L790.8 515.77 L789.98 515.77 L789.17 515.77 L788.35 515.77 L787.54 515.77 L786.73 515.77 L785.91 515.77 L785.1 515.77 L784.28 515.77 L783.47 515.77 L782.66 515.77 L781.84 515.77 L781.03 515.77 L780.21 515.77 L779.4 515.77 L778.59 515.77 L777.77 515.77 L776.96 515.77 L776.15 515.77 L775.33 515.77 L774.52 515.77 L773.7 515.77 L772.89 515.77 L772.08 515.77 L771.26 515.77 L770.45 515.77 L769.63 515.77 L768.82 515.77 L768.01 515.77 L767.19 515.77 L766.38 515.77 L765.56 515.77 L764.75 515.77 L763.94 515.77 L763.12 515.77 L762.31 515.77 L761.5 515.77 L760.68 515.77 L759.87 515.77 L759.05 515.77 L758.24 515.77 L757.43 515.77 L756.61 515.77 L755.8 515.77 L754.98 515.77 L754.17 515.77 L753.36 515.77 L752.54 515.77 L751.73 515.77 L750.91 515.77 L750.1 515.77 L749.29 515.77 L748.47 515.77 L747.66 515.77 L746.85 515.77 L746.03 515.77 L745.22 515.77 L744.4 515.77 L743.59 515.77 L742.78 515.77 L741.96 515.77 L741.15 515.77 L740.33 515.77 L739.52 515.77 L738.71 515.77 L737.89 515.77 L737.08 515.77 L736.26 515.77 L735.45 515.77 L734.64 515.77 L733.82 515.77 L733.01 515.77 L732.19 515.77 L731.38 515.77 L730.57 515.77 L729.75 515.77 L728.94 515.77 L728.13 515.77 L727.31 515.77 L726.5 515.77 L725.68 515.77 L724.87 515.77 L724.06 515.77 L723.24 515.77 L722.43 515.77 L721.61 515.77 L720.8 515.77 L719.99 515.77 L719.17 515.77 L718.36 515.77 L717.54 515.77 L716.73 515.77 L715.92 515.77 L715.1 515.77 L714.29 515.77 L713.48 515.77 L712.66 515.77 L711.85 515.77 L711.03 515.77 L710.22 515.77 L709.41 515.77 L708.59 515.77 L707.78 515.77 L706.96 515.77 L706.15 515.77 L705.34 515.77 L704.52 515.77 L703.71 515.77 L702.89 515.77 L702.08 515.77 L701.27 515.77 L700.45 515.77 L699.64 515.77 L698.82 515.77 L698.01 515.77 L697.2 515.77 L696.38 515.77 L695.57 515.77 L694.76 515.77 L693.94 515.77 L693.13 515.77 L692.31 515.77 L691.5 515.77 L690.69 515.77 L689.87 515.77 L689.06 515.77 L688.24 515.77 L687.43 515.77 L686.62 515.77 L685.8 515.77 L684.99 515.77 L684.17 515.77 L683.36 515.77 L682.55 515.77 L681.73 515.77 L680.92 515.77 L680.11 515.77 L679.29 515.77 L678.48 515.77 L677.66 515.77 L676.85 515.77 L676.04 515.77 L675.22 515.77 L674.41 515.77 L673.59 515.77 L672.78 515.77 L671.97 515.77 L671.15 515.77 L670.34 515.77 L669.52 515.77 L668.71 515.77 L667.9 515.77 L667.08 515.77 L666.27 515.77 L665.46 515.77 L664.64 515.77 L663.83 515.77 L663.01 515.77 L662.2 515.77 L661.39 515.77 L660.57 515.77 L659.76 515.77 L658.94 515.77 L658.13 515.77 L657.32 515.77 L656.5 515.77 L655.69 515.77 L654.87 515.77 L654.06 515.77 L653.25 515.77 L652.43 515.77 L651.62 515.77 L650.8 515.77 L649.99 515.77 L649.18 515.77 L648.36 515.77 L647.55 515.77 L646.74 515.77 L645.92 515.77 L645.11 515.77 L644.29 515.77 L643.48 515.77 L642.67 515.77 L641.85 515.77 L641.04 515.77 L640.22 515.77 L639.41 515.77 L638.6 515.77 L637.78 515.77 L636.97 515.77 L636.15 515.77 L635.34 515.77 L634.53 515.77 L633.71 515.77 L632.9 515.77 L632.09 515.77 L631.27 515.77 L630.46 515.77 L629.64 515.77 L628.83 515.77 L628.02 515.77 L627.2 515.77 L626.39 515.77 L625.57 515.77 L624.76 515.77 L623.95 515.77 L623.13 515.77 L622.32 515.77 L621.5 515.77 L620.69 515.77 L619.88 515.77 L619.06 515.77 L618.25 515.77 L617.43 515.77 L616.62 515.77 L615.81 515.77 L614.99 515.77 L614.18 515.77 L613.37 515.77 L612.55 515.77 L611.74 515.77 L610.92 515.77 L610.11 515.77 L609.3 515.77"/><path d="M1316.67 466.84 L1315.52 466.84 L1314.37 466.84 L1313.22 466.84 L1312.07 466.84 L1310.92 466.84 L1309.76 466.84 L1308.61 466.84 L1307.46 466.84 L1306.31 466.84 L1305.16 466.84 L1304.01 466.84 L1302.86 466.84 L1301.71 466.84 L1300.56 466.84 L1299.4 466.84 L1298.25 466.84 L1297.1 466.84 L1295.95 466.84 L1294.8 466.84 L1293.65 466.84 L1292.5 466.84 L1291.35 466.84 L1290.2 466.84 L1289.05 466.84 L1287.89 466.84 L1286.74 466.84 L1285.59 466.84 L1284.44 466.84 L1283.29 466.84 L1282.14 466.84 L1280.99 466.84 L1279.84 466.84 L1278.69 466.84 L1277.54 466.84 L1276.38 466.84 L1275.23 466.84 L1274.08 466.84 L1272.93 466.84 L1271.78 466.84 L1270.63 466.84 L1269.48 466.84 L1268.33 466.84 L1267.18 466.84 L1266.02 466.84 L1264.87 466.84 L1263.72 466.84 L1262.57 466.84 L1261.42 466.84 L1260.27 466.84 L1259.12 466.84 L1257.97 466.84 L1256.82 466.84 L1255.67 466.84 L1254.51 466.84 L1253.36 466.84 L1252.21 466.84 L1251.06 466.84 L1249.91 466.84 L1248.76 466.84 L1247.61 466.84 L1246.46 466.84 L1245.31 466.84 L1244.16 466.84 L1243 466.84 L1241.85 466.84 L1240.7 466.84 L1239.55 466.84 L1238.4 466.84 L1237.25 466.84 L1236.1 466.84 L1234.95 466.84 L1233.8 466.84 L1232.65 466.84 L1231.49 466.84 L1230.34 466.84 L1229.19 466.84 L1228.04 466.84 L1226.89 466.84 L1225.74 466.84 L1224.59 466.84 L1223.44 466.84 L1222.29 466.84 L1221.13 466.84 L1219.98 466.84 L1218.83 466.84 L1217.68 466.84 L1216.53 466.84 L1215.38 466.84 L1214.23 466.84 L1213.08 466.84 L1211.93 466.84 L1210.78 466.84 L1209.62 466.84 L1208.47 466.84 L1207.32 466.84 L1206.17 466.84 L1205.02 466.84 L1203.87 466.84 L1202.72 466.84 L1201.57 466.84 L1200.42 466.84 L1199.27 466.84 L1198.11 466.84 L1196.96 466.84 L1195.81 466.84 L1194.66 466.84 L1193.51 466.84 L1192.36 466.84 L1191.21 466.84 L1190.06 466.84 L1188.91 466.84 L1187.76 466.84 L1186.6 466.84 L1185.45 466.84 L1184.3 466.84 L1183.15 466.84 L1182 466.84 L1180.85 466.84 L1179.7 466.84 L1178.55 466.84 L1177.4 466.84 L1176.24 466.84 L1175.09 466.84 L1173.94 466.84 L1172.79 466.84 L1171.64 466.84 L1170.49 466.84 L1169.34 466.84 L1168.19 466.84 L1167.04 466.84 L1165.89 466.84 L1164.73 466.84 L1163.58 466.84 L1162.43 466.84 L1161.28 466.84 L1160.13 466.84 L1158.98 466.84 L1157.83 466.84 L1156.68 466.84 L1155.53 466.84 L1154.38 466.84 L1153.22 466.84 L1152.07 466.84 L1150.92 466.84 L1149.77 466.84 L1148.62 466.84 L1147.47 466.84 L1146.32 466.84 L1145.17 466.84 L1144.02 466.84 L1142.86 466.84 L1141.71 466.84 L1140.56 466.84 L1139.41 466.84 L1138.26 466.84 L1137.11 466.84 L1135.96 466.84 L1134.81 466.84 L1133.66 466.84 L1132.51 466.84 L1131.35 466.84 L1130.2 466.84 L1129.05 466.84 L1127.9 466.84 L1126.75 466.84 L1125.6 466.84 L1124.45 466.84 L1123.3 466.84 L1122.15 466.84 L1121 466.84 L1119.84 466.84 L1118.69 466.84 L1117.54 466.84 L1116.39 466.84 L1115.24 466.84 L1114.09 466.84 L1112.94 466.84 L1111.79 466.84 L1110.64 466.84 L1109.49 466.84 L1108.33 466.84 L1107.18 466.84 L1106.03 466.84 L1104.88 466.84 L1103.73 466.84 L1102.58 466.84 L1101.43 466.84 L1100.28 466.84 L1099.13 466.84 L1097.97 466.84 L1096.82 466.84 L1095.67 466.84 L1094.52 466.84 L1093.37 466.84 L1092.22 466.84 L1091.07 466.84 L1089.92 466.84 L1088.77 466.84 L1087.62 466.84 L1086.46 466.84 L1085.31 466.84 L1084.16 466.84 L1083.01 466.84 L1081.86 466.84 L1080.71 466.84 L1079.56 466.84 L1078.41 466.84 L1077.26 466.84 L1076.11 466.84 L1074.95 466.84 L1073.8 466.84 L1072.65 466.84 L1071.5 466.84 L1070.35 466.84 L1069.2 466.84 L1068.05 466.84 L1066.9 466.84 L1065.75 466.84 L1064.6 466.84 L1063.44 466.84 L1062.29 466.84 L1061.14 466.84 L1059.99 466.84 L1058.84 466.84 L1057.69 466.84 L1056.54 466.84 L1055.39 466.84 L1054.24 466.84 L1053.08 466.84 L1051.93 466.84 L1050.78 466.84 L1049.63 466.84 L1048.48 466.84 L1047.33 466.84 L1046.18 466.84 L1045.03 466.84 L1043.88 466.84 L1042.73 466.84 L1041.57 466.84 L1040.42 466.84 L1039.27 466.84 L1038.12 466.84 L1036.97 466.84 L1035.82 466.84 L1034.67 466.84 L1033.52 466.84 L1032.37 466.84 L1031.22 466.84 L1030.06 466.84 L1028.91 466.84 L1027.76 466.84 L1026.61 466.84 L1025.46 466.84 L1024.31 466.84 L1023.16 466.84 L1022.01 466.84 L1020.86 466.84 L1019.7 466.84 L1018.55 466.84 L1017.4 466.84 L1016.25 466.84 L1015.1 466.84 L1013.95 466.84 L1012.8 466.84 L1011.65 466.84 L1010.5 466.84 L1009.35 466.84 L1008.19 466.84 L1007.04 466.84 L1005.89 466.84 L1004.74 466.84 L1003.59 466.84 L1002.44 466.84 L1001.29 466.84 L1000.14 466.84 L998.99 466.84 L997.84 466.84 L996.68 466.84 L995.53 466.84 L994.38 466.84 L993.23 466.84 L992.08 466.84 L990.93 466.84 L989.78 466.84 L988.63 466.84 L987.48 466.84 L986.33 466.84 L985.17 466.84 L984.02 466.84 L982.87 466.84 L981.72 466.84 L980.57 466.84 L979.42 466.84 L978.27 466.84 L977.12 466.84 L975.97 466.84 L974.81 466.84 L973.66 466.84 L972.51 466.84 L971.36 466.84 L970.21 466.84 L969.06 466.84 L967.91 466.84 L966.76 466.84 L965.61 466.84 L964.46 466.84 L963.3 466.84 L962.15 466.84 L961 466.84 L959.85 466.84 L958.7 466.84 L957.55 466.84 L956.4 466.84 L955.25 466.84 L954.1 466.84 L952.95 466.84 L951.79 466.84 L950.64 466.84 L949.49 466.84 L948.34 466.84 L947.19 466.84 L946.04 466.84 L944.89 466.84 L943.74 466.84 L942.59 466.84 L941.43 466.84 L940.28 466.84 L939.13 466.84 L937.98 466.84 L936.83 466.84 L935.68 466.84 L934.53 466.84 L933.38 466.84 L932.23 466.84 L931.08 466.84 L929.92 466.84 L928.77 466.84 L927.62 466.84 L926.47 466.84 L925.32 466.84 L924.17 466.84 L923.02 466.84 L921.87 466.84 L920.72 466.84 L919.57 466.84 L918.41 466.84 L917.26 466.84 L916.11 466.84 L914.96 466.84 L913.81 466.84 L912.66 466.84 L911.51 466.84 L910.36 466.84 L909.21 466.84 L908.06 466.84 L906.9 466.84 L905.75 466.84 L904.6 466.84 L903.45 466.84 L902.3 466.84 L901.15 466.84 L900 466.84 L898.85 466.84 L897.7 466.84 L896.54 466.84 L895.39 466.84 L894.24 466.84 L893.09 466.84 L891.94 466.84 L890.79 466.84 L889.64 466.84 L888.49 466.84 L887.34 466.84 L886.19 466.84 L885.03 466.84 L883.88 466.84 L882.73 466.84 L881.58 466.84 L880.43 466.84 L879.28 466.84 L878.13 466.84 L876.98 466.84 L875.83 466.84 L874.68 466.84 L873.52 466.84 L872.37 466.84 L871.22 466.84 L870.07 466.84 L868.92 466.84 L867.77 466.84 L866.62 466.84 L865.47 466.84 L864.32 466.84 L863.17 466.84 L862.01 466.84 L860.86 466.84 L859.71 466.84 L858.56 466.84 L857.41 466.84 L856.26 466.84 L855.11 466.84 L853.96 466.84 L852.81 466.84 L851.65 466.84 L850.5 466.84 L849.35 466.84 L848.2 466.84 L847.05 466.84 L845.9 466.84 L844.75 466.84 L843.6 466.84 L842.45 466.84 L841.3 466.84 L840.14 466.84 L838.99 466.84 L837.84 466.84 L836.69 466.84 L835.54 466.84 L834.39 466.84 L833.24 466.84 L832.09 466.84 L830.94 466.84 L829.79 466.84 L828.63 466.84 L827.48 466.84 L826.33 466.84 L825.18 466.84 L824.03 466.84 L822.88 466.84 L821.73 466.84 L820.58 466.84 L819.43 466.84 L818.27 466.84 L817.12 466.84 L815.97 466.84 L814.82 466.84 L813.67 466.84 L812.52 466.84 L811.37 466.84 L810.22 466.84 L809.07 466.84 L807.92 466.84 L806.76 466.84 L805.61 466.84 L804.46 466.84 L803.31 466.84 L802.16 466.84 L801.01 466.84 L799.86 466.84 L798.71 466.84 L797.56 466.84 L796.41 466.84 L795.25 466.84 L794.1 466.84 L792.95 466.84 L791.8 466.84 L790.65 466.84 L789.5 466.84 L788.35 466.84 L787.2 466.84 L786.05 466.84 L784.9 466.84 L783.74 466.84 L782.59 466.84 L781.44 466.84 L780.29 466.84 L779.14 466.84 L777.99 466.84 L776.84 466.84 L775.69 466.84 L774.54 466.84 L773.38 466.84 L772.23 466.84 L771.08 466.84 L769.93 466.84 L768.78 466.84 L767.63 466.84 L766.48 466.84 L765.33 466.84 L764.18 466.84 L763.03 466.84 L761.87 466.84 L760.72 466.84 L759.57 466.84 L758.42 466.84 L757.27 466.84 L756.12 466.84 L754.97 466.84 L753.82 466.84 L752.67 466.84 L751.52 466.84 L750.36 466.84 L749.21 466.84 L748.06 466.84 L746.91 466.84 L745.76 466.84 L744.61 466.84 L743.46 466.84 L742.31 466.84 L741.16 466.84 L740 466.84 L738.85 466.84 L737.7 466.84 L736.55 466.84 L735.4 466.84 L734.25 466.84 L733.1 466.84 L731.95 466.84 L730.8 466.84 L729.65 466.84 L728.49 466.84 L727.34 466.84 L726.19 466.84 L725.04 466.84 L723.89 466.84 L722.74 466.84 L721.59 466.84 L720.44 466.84 L719.29 466.84 L718.14 466.84 L716.98 466.84 L715.83 466.84 L714.68 466.84 L713.53 466.84 L712.38 466.84 L711.23 466.84 L710.08 466.84 L708.93 466.84 L707.78 466.84 L706.63 466.84 L705.47 466.84 L704.32 466.84 L703.17 466.84 L702.02 466.84 L700.87 466.84 L699.72 466.84 L698.57 466.84 L697.42 466.84 L696.27 466.84 L695.11 466.84 L693.96 466.84 L692.81 466.84 L691.66 466.84 L690.51 466.84 L689.36 466.84 L688.21 466.84 L687.06 466.84 L685.91 466.84 L684.76 466.84 L683.6 466.84 L682.45 466.84 L681.3 466.84 L680.15 466.84 L679 466.84 L677.85 466.84 L676.7 466.84 L675.55 466.84 L674.4 466.84 L673.25 466.84 L672.09 466.84 L670.94 466.84 L669.79 466.84 L668.64 466.84 L667.49 466.84 L666.34 466.84 L665.19 466.84 L664.04 466.84 L662.89 466.84 L661.74 466.84 L660.58 466.84 L659.43 466.84 L658.28 466.84 L657.13 466.84 L655.98 466.84 L654.83 466.84 L653.68 466.84 L652.53 466.84 L651.38 466.84 L650.22 466.84 L649.07 466.84 L647.92 466.84 L646.77 466.84 L645.62 466.84 L644.47 466.84 L643.32 466.84 L642.17 466.84 L641.02 466.84 L639.87 466.84 L638.71 466.84 L637.56 466.84 L636.41 466.84 L635.26 466.84 L634.11 466.84 L632.96 466.84 L631.81 466.84 L630.66 466.84 L629.51 466.84 L628.36 466.84 L627.2 466.84 L626.05 466.84 L624.9 466.84 L623.75 466.84 L622.6 466.84 L621.45 466.84 L620.3 466.84 L619.15 466.84 L618 466.84 L616.84 466.84 L615.69 466.84 L614.54 466.84 L613.39 466.84 L612.24 466.84 L611.09 466.84 L609.94 466.84 L608.79 466.84 L607.64 466.84 L606.49 466.84 L605.33 466.84 L604.18 466.84 L603.03 466.84 L601.88 466.84 L600.73 466.84 L599.58 466.84 L598.43 466.84 L597.28 466.84 L596.13 466.84 L594.98 466.84 L593.82 466.84 L592.67 466.84 L591.52 466.84 L590.37 466.84 L589.22 466.84 L588.07 466.84 L586.92 466.84 L585.77 466.84 L584.62 466.84 L583.47 466.84 L582.31 466.84 L581.16 466.84 L580.01 466.84 L578.86 466.84 L577.71 466.84 L576.56 466.84 L575.41 466.84 L574.26 466.84 L573.11 466.84 L571.95 466.84 L570.8 466.84 L569.65 466.84 L568.5 466.84 L567.35 466.84 L566.2 466.84 L565.05 466.84 L563.9 466.84 L562.75 466.84 L561.6 466.84 L560.44 466.84 L559.29 466.84 L558.14 466.84 L556.99 466.84 L555.84 466.84 L554.69 466.84 L553.54 466.84 L552.39 466.84 L551.24 466.84 L550.09 466.84 L548.93 466.84 L547.78 466.84 L546.63 466.84 L545.48 466.84 L544.33 466.84 L543.18 466.84 L542.03 466.84 L540.88 466.84 L539.73 466.84 L538.58 466.84 L537.42 466.84 L536.27 466.84 L535.12 466.84 L533.97 466.84 L532.82 466.84 L531.67 466.84 L530.52 466.84 L529.37 466.84 L528.22 466.84 L527.06 466.84 L525.91 466.84 L524.76 466.84 L523.61 466.84 L522.46 466.84 L521.31 466.84 L520.16 466.84 L519.01 466.84 L517.86 466.84 L516.71 466.84 L515.55 466.84 L514.4 466.84 L513.25 466.84 L512.1 466.84 L510.95 466.84 L509.8 466.84 L508.65 466.84 L507.5 466.84 L506.35 466.84 L505.2 466.84 L504.04 466.84 L502.89 466.84 L501.74 466.84 L500.59 466.84 L499.44 466.84 L498.29 466.84 L497.14 466.84 L495.99 466.84 L494.84 466.84 L493.68 466.84 L492.53 466.84 L491.38 466.84 L490.23 466.84 L489.08 466.84 L487.93 466.84"/><path d="M1409.8 417.91 L1408.39 417.91 L1406.98 417.91 L1405.57 417.91 L1404.16 417.91 L1402.75 417.91 L1401.34 417.91 L1399.93 417.91 L1398.52 417.91 L1397.11 417.91 L1395.7 417.91 L1394.29 417.91 L1392.88 417.91 L1391.47 417.91 L1390.06 417.91 L1388.65 417.91 L1387.24 417.91 L1385.83 417.91 L1384.42 417.91 L1383.01 417.91 L1381.6 417.91 L1380.19 417.91 L1378.78 417.91 L1377.37 417.91 L1375.96 417.91 L1374.55 417.91 L1373.15 417.91 L1371.74 417.91 L1370.33 417.91 L1368.92 417.91 L1367.51 417.91 L1366.1 417.91 L1364.69 417.91 L1363.28 417.91 L1361.87 417.91 L1360.46 417.91 L1359.05 417.91 L1357.64 417.91 L1356.23 417.91 L1354.82 417.91 L1353.41 417.91 L1352 417.91 L1350.59 417.91 L1349.18 417.91 L1347.77 417.91 L1346.36 417.91 L1344.95 417.91 L1343.54 417.91 L1342.13 417.91 L1340.72 417.91 L1339.31 417.91 L1337.9 417.91 L1336.49 417.91 L1335.08 417.91 L1333.67 417.91 L1332.26 417.91 L1330.85 417.91 L1329.44 417.91 L1328.03 417.91 L1326.62 417.91 L1325.21 417.91 L1323.81 417.91 L1322.4 417.91 L1320.99 417.91 L1319.58 417.91 L1318.17 417.91 L1316.76 417.91 L1315.35 417.91 L1313.94 417.91 L1312.53 417.91 L1311.12 417.91 L1309.71 417.91 L1308.3 417.91 L1306.89 417.91 L1305.48 417.91 L1304.07 417.91 L1302.66 417.91 L1301.25 417.91 L1299.84 417.91 L1298.43 417.91 L1297.02 417.91 L1295.61 417.91 L1294.2 417.91 L1292.79 417.91 L1291.38 417.91 L1289.97 417.91 L1288.56 417.91 L1287.15 417.91 L1285.74 417.91 L1284.33 417.91 L1282.92 417.91 L1281.51 417.91 L1280.1 417.91 L1278.69 417.91 L1277.28 417.91 L1275.87 417.91 L1274.47 417.91 L1273.06 417.91 L1271.65 417.91 L1270.24 417.91 L1268.83 417.91 L1267.42 417.91 L1266.01 417.91 L1264.6 417.91 L1263.19 417.91 L1261.78 417.91 L1260.37 417.91 L1258.96 417.91 L1257.55 417.91 L1256.14 417.91 L1254.73 417.91 L1253.32 417.91 L1251.91 417.91 L1250.5 417.91 L1249.09 417.91 L1247.68 417.91 L1246.27 417.91 L1244.86 417.91 L1243.45 417.91 L1242.04 417.91 L1240.63 417.91 L1239.22 417.91 L1237.81 417.91 L1236.4 417.91 L1234.99 417.91 L1233.58 417.91 L1232.17 417.91 L1230.76 417.91 L1229.35 417.91 L1227.94 417.91 L1226.53 417.91 L1225.12 417.91 L1223.72 417.91 L1222.31 417.91 L1220.9 417.91 L1219.49 417.91 L1218.08 417.91 L1216.67 417.91 L1215.26 417.91 L1213.85 417.91 L1212.44 417.91 L1211.03 417.91 L1209.62 417.91 L1208.21 417.91 L1206.8 417.91 L1205.39 417.91 L1203.98 417.91 L1202.57 417.91 L1201.16 417.91 L1199.75 417.91 L1198.34 417.91 L1196.93 417.91 L1195.52 417.91 L1194.11 417.91 L1192.7 417.91 L1191.29 417.91 L1189.88 417.91 L1188.47 417.91 L1187.06 417.91 L1185.65 417.91 L1184.24 417.91 L1182.83 417.91 L1181.42 417.91 L1180.01 417.91 L1178.6 417.91 L1177.19 417.91 L1175.78 417.91 L1174.38 417.91 L1172.97 417.91 L1171.56 417.91 L1170.15 417.91 L1168.74 417.91 L1167.33 417.91 L1165.92 417.91 L1164.51 417.91 L1163.1 417.91 L1161.69 417.91 L1160.28 417.91 L1158.87 417.91 L1157.46 417.91 L1156.05 417.91 L1154.64 417.91 L1153.23 417.91 L1151.82 417.91 L1150.41 417.91 L1149 417.91 L1147.59 417.91 L1146.18 417.91 L1144.77 417.91 L1143.36 417.91 L1141.95 417.91 L1140.54 417.91 L1139.13 417.91 L1137.72 417.91 L1136.31 417.91 L1134.9 417.91 L1133.49 417.91 L1132.08 417.91 L1130.67 417.91 L1129.26 417.91 L1127.85 417.91 L1126.44 417.91 L1125.04 417.91 L1123.63 417.91 L1122.22 417.91 L1120.81 417.91 L1119.4 417.91 L1117.99 417.91 L1116.58 417.91 L1115.17 417.91 L1113.76 417.91 L1112.35 417.91 L1110.94 417.91 L1109.53 417.91 L1108.12 417.91 L1106.71 417.91 L1105.3 417.91 L1103.89 417.91 L1102.48 417.91 L1101.07 417.91 L1099.66 417.91 L1098.25 417.91 L1096.84 417.91 L1095.43 417.91 L1094.02 417.91 L1092.61 417.91 L1091.2 417.91 L1089.79 417.91 L1088.38 417.91 L1086.97 417.91 L1085.56 417.91 L1084.15 417.91 L1082.74 417.91 L1081.33 417.91 L1079.92 417.91 L1078.51 417.91 L1077.1 417.91 L1075.7 417.91 L1074.29 417.91 L1072.88 417.91 L1071.47 417.91 L1070.06 417.91 L1068.65 417.91 L1067.24 417.91 L1065.83 417.91 L1064.42 417.91 L1063.01 417.91 L1061.6 417.91 L1060.19 417.91 L1058.78 417.91 L1057.37 417.91 L1055.96 417.91 L1054.55 417.91 L1053.14 417.91 L1051.73 417.91 L1050.32 417.91 L1048.91 417.91 L1047.5 417.91 L1046.09 417.91 L1044.68 417.91 L1043.27 417.91 L1041.86 417.91 L1040.45 417.91 L1039.04 417.91 L1037.63 417.91 L1036.22 417.91 L1034.81 417.91 L1033.4 417.91 L1031.99 417.91 L1030.58 417.91 L1029.17 417.91 L1027.76 417.91 L1026.36 417.91 L1024.95 417.91 L1023.54 417.91 L1022.13 417.91 L1020.72 417.91 L1019.31 417.91 L1017.9 417.91 L1016.49 417.91 L1015.08 417.91 L1013.67 417.91 L1012.26 417.91 L1010.85 417.91 L1009.44 417.91 L1008.03 417.91 L1006.62 417.91 L1005.21 417.91 L1003.8 417.91 L1002.39 417.91 L1000.98 417.91 L999.57 417.91 L998.16 417.91 L996.75 417.91 L995.34 417.91 L993.93 417.91 L992.52 417.91 L991.11 417.91 L989.7 417.91 L988.29 417.91 L986.88 417.91 L985.47 417.91 L984.06 417.91 L982.65 417.91 L981.24 417.91 L979.83 417.91 L978.42 417.91 L977.01 417.91 L975.61 417.91 L974.2 417.91 L972.79 417.91 L971.38 417.91 L969.97 417.91 L968.56 417.91 L967.15 417.91 L965.74 417.91 L964.33 417.91 L962.92 417.91 L961.51 417.91 L960.1 417.91 L958.69 417.91 L957.28 417.91 L955.87 417.91 L954.46 417.91 L953.05 417.91 L951.64 417.91 L950.23 417.91 L948.82 417.91 L947.41 417.91 L946 417.91 L944.59 417.91 L943.18 417.91 L941.77 417.91 L940.36 417.91 L938.95 417.91 L937.54 417.91 L936.13 417.91 L934.72 417.91 L933.31 417.91 L931.9 417.91 L930.49 417.91 L929.08 417.91 L927.67 417.91 L926.27 417.91 L924.86 417.91 L923.45 417.91 L922.04 417.91 L920.63 417.91 L919.22 417.91 L917.81 417.91 L916.4 417.91 L914.99 417.91 L913.58 417.91 L912.17 417.91 L910.76 417.91 L909.35 417.91 L907.94 417.91 L906.53 417.91 L905.12 417.91 L903.71 417.91 L902.3 417.91 L900.89 417.91 L899.48 417.91 L898.07 417.91 L896.66 417.91 L895.25 417.91 L893.84 417.91 L892.43 417.91 L891.02 417.91 L889.61 417.91 L888.2 417.91 L886.79 417.91 L885.38 417.91 L883.97 417.91 L882.56 417.91 L881.15 417.91 L879.74 417.91 L878.33 417.91 L876.93 417.91 L875.52 417.91 L874.11 417.91 L872.7 417.91 L871.29 417.91 L869.88 417.91 L868.47 417.91 L867.06 417.91 L865.65 417.91 L864.24 417.91 L862.83 417.91 L861.42 417.91 L860.01 417.91 L858.6 417.91 L857.19 417.91 L855.78 417.91 L854.37 417.91 L852.96 417.91 L851.55 417.91 L850.14 417.91 L848.73 417.91 L847.32 417.91 L845.91 417.91 L844.5 417.91 L843.09 417.91 L841.68 417.91 L840.27 417.91 L838.86 417.91 L837.45 417.91 L836.04 417.91 L834.63 417.91 L833.22 417.91 L831.81 417.91 L830.4 417.91 L828.99 417.91 L827.59 417.91 L826.18 417.91 L824.77 417.91 L823.36 417.91 L821.95 417.91 L820.54 417.91 L819.13 417.91 L817.72 417.91 L816.31 417.91 L814.9 417.91 L813.49 417.91 L812.08 417.91 L810.67 417.91 L809.26 417.91 L807.85 417.91 L806.44 417.91 L805.03 417.91 L803.62 417.91 L802.21 417.91 L800.8 417.91 L799.39 417.91 L797.98 417.91 L796.57 417.91 L795.16 417.91 L793.75 417.91 L792.34 417.91 L790.93 417.91 L789.52 417.91 L788.11 417.91 L786.7 417.91 L785.29 417.91 L783.88 417.91 L782.47 417.91 L781.06 417.91 L779.65 417.91 L778.24 417.91 L776.84 417.91 L775.43 417.91 L774.02 417.91 L772.61 417.91 L771.2 417.91 L769.79 417.91 L768.38 417.91 L766.97 417.91 L765.56 417.91 L764.15 417.91 L762.74 417.91 L761.33 417.91 L759.92 417.91 L758.51 417.91 L757.1 417.91 L755.69 417.91 L754.28 417.91 L752.87 417.91 L751.46 417.91 L750.05 417.91 L748.64 417.91 L747.23 417.91 L745.82 417.91 L744.41 417.91 L743 417.91 L741.59 417.91 L740.18 417.91 L738.77 417.91 L737.36 417.91 L735.95 417.91 L734.54 417.91 L733.13 417.91 L731.72 417.91 L730.31 417.91 L728.9 417.91 L727.5 417.91 L726.09 417.91 L724.68 417.91 L723.27 417.91 L721.86 417.91 L720.45 417.91 L719.04 417.91 L717.63 417.91 L716.22 417.91 L714.81 417.91 L713.4 417.91 L711.99 417.91 L710.58 417.91 L709.17 417.91 L707.76 417.91 L706.35 417.91 L704.94 417.91 L703.53 417.91 L702.12 417.91 L700.71 417.91 L699.3 417.91 L697.89 417.91 L696.48 417.91 L695.07 417.91 L693.66 417.91 L692.25 417.91 L690.84 417.91 L689.43 417.91 L688.02 417.91 L686.61 417.91 L685.2 417.91 L683.79 417.91 L682.38 417.91 L680.97 417.91 L679.56 417.91 L678.16 417.91 L676.75 417.91 L675.34 417.91 L673.93 417.91 L672.52 417.91 L671.11 417.91 L669.7 417.91 L668.29 417.91 L666.88 417.91 L665.47 417.91 L664.06 417.91 L662.65 417.91 L661.24 417.91 L659.83 417.91 L658.42 417.91 L657.01 417.91 L655.6 417.91 L654.19 417.91 L652.78 417.91 L651.37 417.91 L649.96 417.91 L648.55 417.91 L647.14 417.91 L645.73 417.91 L644.32 417.91 L642.91 417.91 L641.5 417.91 L640.09 417.91 L638.68 417.91 L637.27 417.91 L635.86 417.91 L634.45 417.91 L633.04 417.91 L631.63 417.91 L630.22 417.91 L628.82 417.91 L627.41 417.91 L626 417.91 L624.59 417.91 L623.18 417.91 L621.77 417.91 L620.36 417.91 L618.95 417.91 L617.54 417.91 L616.13 417.91 L614.72 417.91 L613.31 417.91 L611.9 417.91 L610.49 417.91 L609.08 417.91 L607.67 417.91 L606.26 417.91 L604.85 417.91 L603.44 417.91 L602.03 417.91 L600.62 417.91 L599.21 417.91 L597.8 417.91 L596.39 417.91 L594.98 417.91 L593.57 417.91 L592.16 417.91 L590.75 417.91 L589.34 417.91 L587.93 417.91 L586.52 417.91 L585.11 417.91 L583.7 417.91 L582.29 417.91 L580.88 417.91 L579.48 417.91 L578.07 417.91 L576.66 417.91 L575.25 417.91 L573.84 417.91 L572.43 417.91 L571.02 417.91 L569.61 417.91 L568.2 417.91 L566.79 417.91 L565.38 417.91 L563.97 417.91 L562.56 417.91 L561.15 417.91 L559.74 417.91 L558.33 417.91 L556.92 417.91 L555.51 417.91 L554.1 417.91 L552.69 417.91 L551.28 417.91 L549.87 417.91 L548.46 417.91 L547.05 417.91 L545.64 417.91 L544.23 417.91 L542.82 417.91 L541.41 417.91 L540 417.91 L538.59 417.91 L537.18 417.91 L535.77 417.91 L534.36 417.91 L532.95 417.91 L531.54 417.91 L530.13 417.91 L528.73 417.91 L527.32 417.91 L525.91 417.91 L524.5 417.91 L523.09 417.91 L521.68 417.91 L520.27 417.91 L518.86 417.91 L517.45 417.91 L516.04 417.91 L514.63 417.91 L513.22 417.91 L511.81 417.91 L510.4 417.91 L508.99 417.91 L507.58 417.91 L506.17 417.91 L504.76 417.91 L503.35 417.91 L501.94 417.91 L500.53 417.91 L499.12 417.91 L497.71 417.91 L496.3 417.91 L494.89 417.91 L493.48 417.91 L492.07 417.91 L490.66 417.91 L489.25 417.91 L487.84 417.91 L486.43 417.91 L485.02 417.91 L483.61 417.91 L482.2 417.91 L480.79 417.91 L479.39 417.91 L477.98 417.91 L476.57 417.91 L475.16 417.91 L473.75 417.91 L472.34 417.91 L470.93 417.91 L469.52 417.91 L468.11 417.91 L466.7 417.91 L465.29 417.91 L463.88 417.91 L462.47 417.91 L461.06 417.91 L459.65 417.91 L458.24 417.91 L456.83 417.91 L455.42 417.91 L454.01 417.91 L452.6 417.91 L451.19 417.91 L449.78 417.91 L448.37 417.91 L446.96 417.91 L445.55 417.91 L444.14 417.91 L442.73 417.91 L441.32 417.91 L439.91 417.91 L438.5 417.91 L437.09 417.91 L435.68 417.91 L434.27 417.91 L432.86 417.91 L431.45 417.91 L430.05 417.91 L428.64 417.91 L427.23 417.91 L425.82 417.91 L424.41 417.91 L423 417.91 L421.59 417.91 L420.18 417.91 L418.77 417.91 L417.36 417.91 L415.95 417.91 L414.54 417.91 L413.13 417.91 L411.72 417.91 L410.31 417.91 L408.9 417.91 L407.49 417.91 L406.08 417.91 L404.67 417.91 L403.26 417.91 L401.85 417.91 L400.44 417.91 L399.03 417.91 L397.62 417.91 L396.21 417.91 L394.8 417.91"/><path d="M1468.34 368.98 L1466.77 368.98 L1465.2 368.98 L1463.62 368.98 L1462.05 368.98 L1460.48 368.98 L1458.91 368.98 L1457.33 368.98 L1455.76 368.98 L1454.19 368.98 L1452.62 368.98 L1451.04 368.98 L1449.47 368.98 L1447.9 368.98 L1446.33 368.98 L1444.76 368.98 L1443.18 368.98 L1441.61 368.98 L1440.04 368.98 L1438.47 368.98 L1436.89 368.98 L1435.32 368.98 L1433.75 368.98 L1432.18 368.98 L1430.6 368.98 L1429.03 368.98 L1427.46 368.98 L1425.89 368.98 L1424.31 368.98 L1422.74 368.98 L1421.17 368.98 L1419.6 368.98 L1418.03 368.98 L1416.45 368.98 L1414.88 368.98 L1413.31 368.98 L1411.74 368.98 L1410.16 368.98 L1408.59 368.98 L1407.02 368.98 L1405.45 368.98 L1403.87 368.98 L1402.3 368.98 L1400.73 368.98 L1399.16 368.98 L1397.59 368.98 L1396.01 368.98 L1394.44 368.98 L1392.87 368.98 L1391.3 368.98 L1389.72 368.98 L1388.15 368.98 L1386.58 368.98 L1385.01 368.98 L1383.43 368.98 L1381.86 368.98 L1380.29 368.98 L1378.72 368.98 L1377.14 368.98 L1375.57 368.98 L1374 368.98 L1372.43 368.98 L1370.86 368.98 L1369.28 368.98 L1367.71 368.98 L1366.14 368.98 L1364.57 368.98 L1362.99 368.98 L1361.42 368.98 L1359.85 368.98 L1358.28 368.98 L1356.7 368.98 L1355.13 368.98 L1353.56 368.98 L1351.99 368.98 L1350.42 368.98 L1348.84 368.98 L1347.27 368.98 L1345.7 368.98 L1344.13 368.98 L1342.55 368.98 L1340.98 368.98 L1339.41 368.98 L1337.84 368.98 L1336.26 368.98 L1334.69 368.98 L1333.12 368.98 L1331.55 368.98 L1329.97 368.98 L1328.4 368.98 L1326.83 368.98 L1325.26 368.98 L1323.69 368.98 L1322.11 368.98 L1320.54 368.98 L1318.97 368.98 L1317.4 368.98 L1315.82 368.98 L1314.25 368.98 L1312.68 368.98 L1311.11 368.98 L1309.53 368.98 L1307.96 368.98 L1306.39 368.98 L1304.82 368.98 L1303.25 368.98 L1301.67 368.98 L1300.1 368.98 L1298.53 368.98 L1296.96 368.98 L1295.38 368.98 L1293.81 368.98 L1292.24 368.98 L1290.67 368.98 L1289.09 368.98 L1287.52 368.98 L1285.95 368.98 L1284.38 368.98 L1282.8 368.98 L1281.23 368.98 L1279.66 368.98 L1278.09 368.98 L1276.52 368.98 L1274.94 368.98 L1273.37 368.98 L1271.8 368.98 L1270.23 368.98 L1268.65 368.98 L1267.08 368.98 L1265.51 368.98 L1263.94 368.98 L1262.36 368.98 L1260.79 368.98 L1259.22 368.98 L1257.65 368.98 L1256.08 368.98 L1254.5 368.98 L1252.93 368.98 L1251.36 368.98 L1249.79 368.98 L1248.21 368.98 L1246.64 368.98 L1245.07 368.98 L1243.5 368.98 L1241.92 368.98 L1240.35 368.98 L1238.78 368.98 L1237.21 368.98 L1235.63 368.98 L1234.06 368.98 L1232.49 368.98 L1230.92 368.98 L1229.35 368.98 L1227.77 368.98 L1226.2 368.98 L1224.63 368.98 L1223.06 368.98 L1221.48 368.98 L1219.91 368.98 L1218.34 368.98 L1216.77 368.98 L1215.19 368.98 L1213.62 368.98 L1212.05 368.98 L1210.48 368.98 L1208.91 368.98 L1207.33 368.98 L1205.76 368.98 L1204.19 368.98 L1202.62 368.98 L1201.04 368.98 L1199.47 368.98 L1197.9 368.98 L1196.33 368.98 L1194.75 368.98 L1193.18 368.98 L1191.61 368.98 L1190.04 368.98 L1188.46 368.98 L1186.89 368.98 L1185.32 368.98 L1183.75 368.98 L1182.18 368.98 L1180.6 368.98 L1179.03 368.98 L1177.46 368.98 L1175.89 368.98 L1174.31 368.98 L1172.74 368.98 L1171.17 368.98 L1169.6 368.98 L1168.02 368.98 L1166.45 368.98 L1164.88 368.98 L1163.31 368.98 L1161.74 368.98 L1160.16 368.98 L1158.59 368.98 L1157.02 368.98 L1155.45 368.98 L1153.87 368.98 L1152.3 368.98 L1150.73 368.98 L1149.16 368.98 L1147.58 368.98 L1146.01 368.98 L1144.44 368.98 L1142.87 368.98 L1141.29 368.98 L1139.72 368.98 L1138.15 368.98 L1136.58 368.98 L1135.01 368.98 L1133.43 368.98 L1131.86 368.98 L1130.29 368.98 L1128.72 368.98 L1127.14 368.98 L1125.57 368.98 L1124 368.98 L1122.43 368.98 L1120.85 368.98 L1119.28 368.98 L1117.71 368.98 L1116.14 368.98 L1114.57 368.98 L1112.99 368.98 L1111.42 368.98 L1109.85 368.98 L1108.28 368.98 L1106.7 368.98 L1105.13 368.98 L1103.56 368.98 L1101.99 368.98 L1100.41 368.98 L1098.84 368.98 L1097.27 368.98 L1095.7 368.98 L1094.12 368.98 L1092.55 368.98 L1090.98 368.98 L1089.41 368.98 L1087.84 368.98 L1086.26 368.98 L1084.69 368.98 L1083.12 368.98 L1081.55 368.98 L1079.97 368.98 L1078.4 368.98 L1076.83 368.98 L1075.26 368.98 L1073.68 368.98 L1072.11 368.98 L1070.54 368.98 L1068.97 368.98 L1067.4 368.98 L1065.82 368.98 L1064.25 368.98 L1062.68 368.98 L1061.11 368.98 L1059.53 368.98 L1057.96 368.98 L1056.39 368.98 L1054.82 368.98 L1053.24 368.98 L1051.67 368.98 L1050.1 368.98 L1048.53 368.98 L1046.95 368.98 L1045.38 368.98 L1043.81 368.98 L1042.24 368.98 L1040.67 368.98 L1039.09 368.98 L1037.52 368.98 L1035.95 368.98 L1034.38 368.98 L1032.8 368.98 L1031.23 368.98 L1029.66 368.98 L1028.09 368.98 L1026.51 368.98 L1024.94 368.98 L1023.37 368.98 L1021.8 368.98 L1020.23 368.98 L1018.65 368.98 L1017.08 368.98 L1015.51 368.98 L1013.94 368.98 L1012.36 368.98 L1010.79 368.98 L1009.22 368.98 L1007.65 368.98 L1006.07 368.98 L1004.5 368.98 L1002.93 368.98 L1001.36 368.98 L999.78 368.98 L998.21 368.98 L996.64 368.98 L995.07 368.98 L993.5 368.98 L991.92 368.98 L990.35 368.98 L988.78 368.98 L987.21 368.98 L985.63 368.98 L984.06 368.98 L982.49 368.98 L980.92 368.98 L979.34 368.98 L977.77 368.98 L976.2 368.98 L974.63 368.98 L973.06 368.98 L971.48 368.98 L969.91 368.98 L968.34 368.98 L966.77 368.98 L965.19 368.98 L963.62 368.98 L962.05 368.98 L960.48 368.98 L958.9 368.98 L957.33 368.98 L955.76 368.98 L954.19 368.98 L952.61 368.98 L951.04 368.98 L949.47 368.98 L947.9 368.98 L946.33 368.98 L944.75 368.98 L943.18 368.98 L941.61 368.98 L940.04 368.98 L938.46 368.98 L936.89 368.98 L935.32 368.98 L933.75 368.98 L932.17 368.98 L930.6 368.98 L929.03 368.98 L927.46 368.98 L925.89 368.98 L924.31 368.98 L922.74 368.98 L921.17 368.98 L919.6 368.98 L918.02 368.98 L916.45 368.98 L914.88 368.98 L913.31 368.98 L911.73 368.98 L910.16 368.98 L908.59 368.98 L907.02 368.98 L905.44 368.98 L903.87 368.98 L902.3 368.98 L900.73 368.98 L899.16 368.98 L897.58 368.98 L896.01 368.98 L894.44 368.98 L892.87 368.98 L891.29 368.98 L889.72 368.98 L888.15 368.98 L886.58 368.98 L885 368.98 L883.43 368.98 L881.86 368.98 L880.29 368.98 L878.71 368.98 L877.14 368.98 L875.57 368.98 L874 368.98 L872.43 368.98 L870.85 368.98 L869.28 368.98 L867.71 368.98 L866.14 368.98 L864.56 368.98 L862.99 368.98 L861.42 368.98 L859.85 368.98 L858.27 368.98 L856.7 368.98 L855.13 368.98 L853.56 368.98 L851.99 368.98 L850.41 368.98 L848.84 368.98 L847.27 368.98 L845.7 368.98 L844.12 368.98 L842.55 368.98 L840.98 368.98 L839.41 368.98 L837.83 368.98 L836.26 368.98 L834.69 368.98 L833.12 368.98 L831.54 368.98 L829.97 368.98 L828.4 368.98 L826.83 368.98 L825.26 368.98 L823.68 368.98 L822.11 368.98 L820.54 368.98 L818.97 368.98 L817.39 368.98 L815.82 368.98 L814.25 368.98 L812.68 368.98 L811.1 368.98 L809.53 368.98 L807.96 368.98 L806.39 368.98 L804.82 368.98 L803.24 368.98 L801.67 368.98 L800.1 368.98 L798.53 368.98 L796.95 368.98 L795.38 368.98 L793.81 368.98 L792.24 368.98 L790.66 368.98 L789.09 368.98 L787.52 368.98 L785.95 368.98 L784.37 368.98 L782.8 368.98 L781.23 368.98 L779.66 368.98 L778.09 368.98 L776.51 368.98 L774.94 368.98 L773.37 368.98 L771.8 368.98 L770.22 368.98 L768.65 368.98 L767.08 368.98 L765.51 368.98 L763.93 368.98 L762.36 368.98 L760.79 368.98 L759.22 368.98 L757.65 368.98 L756.07 368.98 L754.5 368.98 L752.93 368.98 L751.36 368.98 L749.78 368.98 L748.21 368.98 L746.64 368.98 L745.07 368.98 L743.49 368.98 L741.92 368.98 L740.35 368.98 L738.78 368.98 L737.2 368.98 L735.63 368.98 L734.06 368.98 L732.49 368.98 L730.92 368.98 L729.34 368.98 L727.77 368.98 L726.2 368.98 L724.63 368.98 L723.05 368.98 L721.48 368.98 L719.91 368.98 L718.34 368.98 L716.76 368.98 L715.19 368.98 L713.62 368.98 L712.05 368.98 L710.48 368.98 L708.9 368.98 L707.33 368.98 L705.76 368.98 L704.19 368.98 L702.61 368.98 L701.04 368.98 L699.47 368.98 L697.9 368.98 L696.32 368.98 L694.75 368.98 L693.18 368.98 L691.61 368.98 L690.03 368.98 L688.46 368.98 L686.89 368.98 L685.32 368.98 L683.75 368.98 L682.17 368.98 L680.6 368.98 L679.03 368.98 L677.46 368.98 L675.88 368.98 L674.31 368.98 L672.74 368.98 L671.17 368.98 L669.59 368.98 L668.02 368.98 L666.45 368.98 L664.88 368.98 L663.31 368.98 L661.73 368.98 L660.16 368.98 L658.59 368.98 L657.02 368.98 L655.44 368.98 L653.87 368.98 L652.3 368.98 L650.73 368.98 L649.15 368.98 L647.58 368.98 L646.01 368.98 L644.44 368.98 L642.86 368.98 L641.29 368.98 L639.72 368.98 L638.15 368.98 L636.58 368.98 L635 368.98 L633.43 368.98 L631.86 368.98 L630.29 368.98 L628.71 368.98 L627.14 368.98 L625.57 368.98 L624 368.98 L622.42 368.98 L620.85 368.98 L619.28 368.98 L617.71 368.98 L616.14 368.98 L614.56 368.98 L612.99 368.98 L611.42 368.98 L609.85 368.98 L608.27 368.98 L606.7 368.98 L605.13 368.98 L603.56 368.98 L601.98 368.98 L600.41 368.98 L598.84 368.98 L597.27 368.98 L595.69 368.98 L594.12 368.98 L592.55 368.98 L590.98 368.98 L589.41 368.98 L587.83 368.98 L586.26 368.98 L584.69 368.98 L583.12 368.98 L581.54 368.98 L579.97 368.98 L578.4 368.98 L576.83 368.98 L575.25 368.98 L573.68 368.98 L572.11 368.98 L570.54 368.98 L568.97 368.98 L567.39 368.98 L565.82 368.98 L564.25 368.98 L562.68 368.98 L561.1 368.98 L559.53 368.98 L557.96 368.98 L556.39 368.98 L554.81 368.98 L553.24 368.98 L551.67 368.98 L550.1 368.98 L548.52 368.98 L546.95 368.98 L545.38 368.98 L543.81 368.98 L542.24 368.98 L540.66 368.98 L539.09 368.98 L537.52 368.98 L535.95 368.98 L534.37 368.98 L532.8 368.98 L531.23 368.98 L529.66 368.98 L528.08 368.98 L526.51 368.98 L524.94 368.98 L523.37 368.98 L521.8 368.98 L520.22 368.98 L518.65 368.98 L517.08 368.98 L515.51 368.98 L513.93 368.98 L512.36 368.98 L510.79 368.98 L509.22 368.98 L507.64 368.98 L506.07 368.98 L504.5 368.98 L502.93 368.98 L501.35 368.98 L499.78 368.98 L498.21 368.98 L496.64 368.98 L495.07 368.98 L493.49 368.98 L491.92 368.98 L490.35 368.98 L488.78 368.98 L487.2 368.98 L485.63 368.98 L484.06 368.98 L482.49 368.98 L480.91 368.98 L479.34 368.98 L477.77 368.98 L476.2 368.98 L474.63 368.98 L473.05 368.98 L471.48 368.98 L469.91 368.98 L468.34 368.98 L466.76 368.98 L465.19 368.98 L463.62 368.98 L462.05 368.98 L460.47 368.98 L458.9 368.98 L457.33 368.98 L455.76 368.98 L454.18 368.98 L452.61 368.98 L451.04 368.98 L449.47 368.98 L447.9 368.98 L446.32 368.98 L444.75 368.98 L443.18 368.98 L441.61 368.98 L440.03 368.98 L438.46 368.98 L436.89 368.98 L435.32 368.98 L433.74 368.98 L432.17 368.98 L430.6 368.98 L429.03 368.98 L427.46 368.98 L425.88 368.98 L424.31 368.98 L422.74 368.98 L421.17 368.98 L419.59 368.98 L418.02 368.98 L416.45 368.98 L414.88 368.98 L413.3 368.98 L411.73 368.98 L410.16 368.98 L408.59 368.98 L407.01 368.98 L405.44 368.98 L403.87 368.98 L402.3 368.98 L400.73 368.98 L399.15 368.98 L397.58 368.98 L396.01 368.98 L394.44 368.98 L392.86 368.98 L391.29 368.98 L389.72 368.98 L388.15 368.98 L386.57 368.98 L385 368.98 L383.43 368.98 L381.86 368.98 L380.29 368.98 L378.71 368.98 L377.14 368.98 L375.57 368.98 L374 368.98 L372.42 368.98 L370.85 368.98 L369.28 368.98 L367.71 368.98 L366.13 368.98 L364.56 368.98 L362.99 368.98 L361.42 368.98 L359.84 368.98 L358.27 368.98 L356.7 368.98 L355.13 368.98 L353.56 368.98 L351.98 368.98 L350.41 368.98 L348.84 368.98 L347.27 368.98 L345.69 368.98 L344.12 368.98 L342.55 368.98 L340.98 368.98 L339.4 368.98 L337.83 368.98 L336.26 368.98"/><path d="M1488.31 320.05 L1486.68 320.05 L1485.05 320.05 L1483.42 320.05 L1481.8 320.05 L1480.17 320.05 L1478.54 320.05 L1476.91 320.05 L1475.29 320.05 L1473.66 320.05 L1472.03 320.05 L1470.4 320.05 L1468.77 320.05 L1467.15 320.05 L1465.52 320.05 L1463.89 320.05 L1462.26 320.05 L1460.64 320.05 L1459.01 320.05 L1457.38 320.05 L1455.75 320.05 L1454.12 320.05 L1452.5 320.05 L1450.87 320.05 L1449.24 320.05 L1447.61 320.05 L1445.99 320.05 L1444.36 320.05 L1442.73 320.05 L1441.1 320.05 L1439.47 320.05 L1437.85 320.05 L1436.22 320.05 L1434.59 320.05 L1432.96 320.05 L1431.34 320.05 L1429.71 320.05 L1428.08 320.05 L1426.45 320.05 L1424.82 320.05 L1423.2 320.05 L1421.57 320.05 L1419.94 320.05 L1418.31 320.05 L1416.68 320.05 L1415.06 320.05 L1413.43 320.05 L1411.8 320.05 L1410.17 320.05 L1408.55 320.05 L1406.92 320.05 L1405.29 320.05 L1403.66 320.05 L1402.03 320.05 L1400.41 320.05 L1398.78 320.05 L1397.15 320.05 L1395.52 320.05 L1393.9 320.05 L1392.27 320.05 L1390.64 320.05 L1389.01 320.05 L1387.38 320.05 L1385.76 320.05 L1384.13 320.05 L1382.5 320.05 L1380.87 320.05 L1379.25 320.05 L1377.62 320.05 L1375.99 320.05 L1374.36 320.05 L1372.73 320.05 L1371.11 320.05 L1369.48 320.05 L1367.85 320.05 L1366.22 320.05 L1364.6 320.05 L1362.97 320.05 L1361.34 320.05 L1359.71 320.05 L1358.08 320.05 L1356.46 320.05 L1354.83 320.05 L1353.2 320.05 L1351.57 320.05 L1349.94 320.05 L1348.32 320.05 L1346.69 320.05 L1345.06 320.05 L1343.43 320.05 L1341.81 320.05 L1340.18 320.05 L1338.55 320.05 L1336.92 320.05 L1335.29 320.05 L1333.67 320.05 L1332.04 320.05 L1330.41 320.05 L1328.78 320.05 L1327.16 320.05 L1325.53 320.05 L1323.9 320.05 L1322.27 320.05 L1320.64 320.05 L1319.02 320.05 L1317.39 320.05 L1315.76 320.05 L1314.13 320.05 L1312.51 320.05 L1310.88 320.05 L1309.25 320.05 L1307.62 320.05 L1305.99 320.05 L1304.37 320.05 L1302.74 320.05 L1301.11 320.05 L1299.48 320.05 L1297.86 320.05 L1296.23 320.05 L1294.6 320.05 L1292.97 320.05 L1291.34 320.05 L1289.72 320.05 L1288.09 320.05 L1286.46 320.05 L1284.83 320.05 L1283.21 320.05 L1281.58 320.05 L1279.95 320.05 L1278.32 320.05 L1276.69 320.05 L1275.07 320.05 L1273.44 320.05 L1271.81 320.05 L1270.18 320.05 L1268.55 320.05 L1266.93 320.05 L1265.3 320.05 L1263.67 320.05 L1262.04 320.05 L1260.42 320.05 L1258.79 320.05 L1257.16 320.05 L1255.53 320.05 L1253.9 320.05 L1252.28 320.05 L1250.65 320.05 L1249.02 320.05 L1247.39 320.05 L1245.77 320.05 L1244.14 320.05 L1242.51 320.05 L1240.88 320.05 L1239.25 320.05 L1237.63 320.05 L1236 320.05 L1234.37 320.05 L1232.74 320.05 L1231.12 320.05 L1229.49 320.05 L1227.86 320.05 L1226.23 320.05 L1224.6 320.05 L1222.98 320.05 L1221.35 320.05 L1219.72 320.05 L1218.09 320.05 L1216.47 320.05 L1214.84 320.05 L1213.21 320.05 L1211.58 320.05 L1209.95 320.05 L1208.33 320.05 L1206.7 320.05 L1205.07 320.05 L1203.44 320.05 L1201.82 320.05 L1200.19 320.05 L1198.56 320.05 L1196.93 320.05 L1195.3 320.05 L1193.68 320.05 L1192.05 320.05 L1190.42 320.05 L1188.79 320.05 L1187.16 320.05 L1185.54 320.05 L1183.91 320.05 L1182.28 320.05 L1180.65 320.05 L1179.03 320.05 L1177.4 320.05 L1175.77 320.05 L1174.14 320.05 L1172.51 320.05 L1170.89 320.05 L1169.26 320.05 L1167.63 320.05 L1166 320.05 L1164.38 320.05 L1162.75 320.05 L1161.12 320.05 L1159.49 320.05 L1157.86 320.05 L1156.24 320.05 L1154.61 320.05 L1152.98 320.05 L1151.35 320.05 L1149.73 320.05 L1148.1 320.05 L1146.47 320.05 L1144.84 320.05 L1143.21 320.05 L1141.59 320.05 L1139.96 320.05 L1138.33 320.05 L1136.7 320.05 L1135.08 320.05 L1133.45 320.05 L1131.82 320.05 L1130.19 320.05 L1128.56 320.05 L1126.94 320.05 L1125.31 320.05 L1123.68 320.05 L1122.05 320.05 L1120.43 320.05 L1118.8 320.05 L1117.17 320.05 L1115.54 320.05 L1113.91 320.05 L1112.29 320.05 L1110.66 320.05 L1109.03 320.05 L1107.4 320.05 L1105.77 320.05 L1104.15 320.05 L1102.52 320.05 L1100.89 320.05 L1099.26 320.05 L1097.64 320.05 L1096.01 320.05 L1094.38 320.05 L1092.75 320.05 L1091.12 320.05 L1089.5 320.05 L1087.87 320.05 L1086.24 320.05 L1084.61 320.05 L1082.99 320.05 L1081.36 320.05 L1079.73 320.05 L1078.1 320.05 L1076.47 320.05 L1074.85 320.05 L1073.22 320.05 L1071.59 320.05 L1069.96 320.05 L1068.34 320.05 L1066.71 320.05 L1065.08 320.05 L1063.45 320.05 L1061.82 320.05 L1060.2 320.05 L1058.57 320.05 L1056.94 320.05 L1055.31 320.05 L1053.69 320.05 L1052.06 320.05 L1050.43 320.05 L1048.8 320.05 L1047.17 320.05 L1045.55 320.05 L1043.92 320.05 L1042.29 320.05 L1040.66 320.05 L1039.04 320.05 L1037.41 320.05 L1035.78 320.05 L1034.15 320.05 L1032.52 320.05 L1030.9 320.05 L1029.27 320.05 L1027.64 320.05 L1026.01 320.05 L1024.38 320.05 L1022.76 320.05 L1021.13 320.05 L1019.5 320.05 L1017.87 320.05 L1016.25 320.05 L1014.62 320.05 L1012.99 320.05 L1011.36 320.05 L1009.73 320.05 L1008.11 320.05 L1006.48 320.05 L1004.85 320.05 L1003.22 320.05 L1001.6 320.05 L999.97 320.05 L998.34 320.05 L996.71 320.05 L995.08 320.05 L993.46 320.05 L991.83 320.05 L990.2 320.05 L988.57 320.05 L986.95 320.05 L985.32 320.05 L983.69 320.05 L982.06 320.05 L980.43 320.05 L978.81 320.05 L977.18 320.05 L975.55 320.05 L973.92 320.05 L972.3 320.05 L970.67 320.05 L969.04 320.05 L967.41 320.05 L965.78 320.05 L964.16 320.05 L962.53 320.05 L960.9 320.05 L959.27 320.05 L957.65 320.05 L956.02 320.05 L954.39 320.05 L952.76 320.05 L951.13 320.05 L949.51 320.05 L947.88 320.05 L946.25 320.05 L944.62 320.05 L943 320.05 L941.37 320.05 L939.74 320.05 L938.11 320.05 L936.48 320.05 L934.86 320.05 L933.23 320.05 L931.6 320.05 L929.97 320.05 L928.34 320.05 L926.72 320.05 L925.09 320.05 L923.46 320.05 L921.83 320.05 L920.21 320.05 L918.58 320.05 L916.95 320.05 L915.32 320.05 L913.69 320.05 L912.07 320.05 L910.44 320.05 L908.81 320.05 L907.18 320.05 L905.56 320.05 L903.93 320.05 L902.3 320.05 L900.67 320.05 L899.04 320.05 L897.42 320.05 L895.79 320.05 L894.16 320.05 L892.53 320.05 L890.91 320.05 L889.28 320.05 L887.65 320.05 L886.02 320.05 L884.39 320.05 L882.77 320.05 L881.14 320.05 L879.51 320.05 L877.88 320.05 L876.26 320.05 L874.63 320.05 L873 320.05 L871.37 320.05 L869.74 320.05 L868.12 320.05 L866.49 320.05 L864.86 320.05 L863.23 320.05 L861.6 320.05 L859.98 320.05 L858.35 320.05 L856.72 320.05 L855.09 320.05 L853.47 320.05 L851.84 320.05 L850.21 320.05 L848.58 320.05 L846.95 320.05 L845.33 320.05 L843.7 320.05 L842.07 320.05 L840.44 320.05 L838.82 320.05 L837.19 320.05 L835.56 320.05 L833.93 320.05 L832.3 320.05 L830.68 320.05 L829.05 320.05 L827.42 320.05 L825.79 320.05 L824.17 320.05 L822.54 320.05 L820.91 320.05 L819.28 320.05 L817.65 320.05 L816.03 320.05 L814.4 320.05 L812.77 320.05 L811.14 320.05 L809.52 320.05 L807.89 320.05 L806.26 320.05 L804.63 320.05 L803 320.05 L801.38 320.05 L799.75 320.05 L798.12 320.05 L796.49 320.05 L794.87 320.05 L793.24 320.05 L791.61 320.05 L789.98 320.05 L788.35 320.05 L786.73 320.05 L785.1 320.05 L783.47 320.05 L781.84 320.05 L780.21 320.05 L778.59 320.05 L776.96 320.05 L775.33 320.05 L773.7 320.05 L772.08 320.05 L770.45 320.05 L768.82 320.05 L767.19 320.05 L765.56 320.05 L763.94 320.05 L762.31 320.05 L760.68 320.05 L759.05 320.05 L757.43 320.05 L755.8 320.05 L754.17 320.05 L752.54 320.05 L750.91 320.05 L749.29 320.05 L747.66 320.05 L746.03 320.05 L744.4 320.05 L742.78 320.05 L741.15 320.05 L739.52 320.05 L737.89 320.05 L736.26 320.05 L734.64 320.05 L733.01 320.05 L731.38 320.05 L729.75 320.05 L728.13 320.05 L726.5 320.05 L724.87 320.05 L723.24 320.05 L721.61 320.05 L719.99 320.05 L718.36 320.05 L716.73 320.05 L715.1 320.05 L713.48 320.05 L711.85 320.05 L710.22 320.05 L708.59 320.05 L706.96 320.05 L705.34 320.05 L703.71 320.05 L702.08 320.05 L700.45 320.05 L698.82 320.05 L697.2 320.05 L695.57 320.05 L693.94 320.05 L692.31 320.05 L690.69 320.05 L689.06 320.05 L687.43 320.05 L685.8 320.05 L684.17 320.05 L682.55 320.05 L680.92 320.05 L679.29 320.05 L677.66 320.05 L676.04 320.05 L674.41 320.05 L672.78 320.05 L671.15 320.05 L669.52 320.05 L667.9 320.05 L666.27 320.05 L664.64 320.05 L663.01 320.05 L661.39 320.05 L659.76 320.05 L658.13 320.05 L656.5 320.05 L654.87 320.05 L653.25 320.05 L651.62 320.05 L649.99 320.05 L648.36 320.05 L646.74 320.05 L645.11 320.05 L643.48 320.05 L641.85 320.05 L640.22 320.05 L638.6 320.05 L636.97 320.05 L635.34 320.05 L633.71 320.05 L632.09 320.05 L630.46 320.05 L628.83 320.05 L627.2 320.05 L625.57 320.05 L623.95 320.05 L622.32 320.05 L620.69 320.05 L619.06 320.05 L617.43 320.05 L615.81 320.05 L614.18 320.05 L612.55 320.05 L610.92 320.05 L609.3 320.05 L607.67 320.05 L606.04 320.05 L604.41 320.05 L602.78 320.05 L601.16 320.05 L599.53 320.05 L597.9 320.05 L596.27 320.05 L594.65 320.05 L593.02 320.05 L591.39 320.05 L589.76 320.05 L588.13 320.05 L586.51 320.05 L584.88 320.05 L583.25 320.05 L581.62 320.05 L580 320.05 L578.37 320.05 L576.74 320.05 L575.11 320.05 L573.48 320.05 L571.86 320.05 L570.23 320.05 L568.6 320.05 L566.97 320.05 L565.35 320.05 L563.72 320.05 L562.09 320.05 L560.46 320.05 L558.83 320.05 L557.21 320.05 L555.58 320.05 L553.95 320.05 L552.32 320.05 L550.7 320.05 L549.07 320.05 L547.44 320.05 L545.81 320.05 L544.18 320.05 L542.56 320.05 L540.93 320.05 L539.3 320.05 L537.67 320.05 L536.04 320.05 L534.42 320.05 L532.79 320.05 L531.16 320.05 L529.53 320.05 L527.91 320.05 L526.28 320.05 L524.65 320.05 L523.02 320.05 L521.39 320.05 L519.77 320.05 L518.14 320.05 L516.51 320.05 L514.88 320.05 L513.26 320.05 L511.63 320.05 L510 320.05 L508.37 320.05 L506.74 320.05 L505.12 320.05 L503.49 320.05 L501.86 320.05 L500.23 320.05 L498.61 320.05 L496.98 320.05 L495.35 320.05 L493.72 320.05 L492.09 320.05 L490.47 320.05 L488.84 320.05 L487.21 320.05 L485.58 320.05 L483.96 320.05 L482.33 320.05 L480.7 320.05 L479.07 320.05 L477.44 320.05 L475.82 320.05 L474.19 320.05 L472.56 320.05 L470.93 320.05 L469.31 320.05 L467.68 320.05 L466.05 320.05 L464.42 320.05 L462.79 320.05 L461.17 320.05 L459.54 320.05 L457.91 320.05 L456.28 320.05 L454.65 320.05 L453.03 320.05 L451.4 320.05 L449.77 320.05 L448.14 320.05 L446.52 320.05 L444.89 320.05 L443.26 320.05 L441.63 320.05 L440 320.05 L438.38 320.05 L436.75 320.05 L435.12 320.05 L433.49 320.05 L431.87 320.05 L430.24 320.05 L428.61 320.05 L426.98 320.05 L425.35 320.05 L423.73 320.05 L422.1 320.05 L420.47 320.05 L418.84 320.05 L417.22 320.05 L415.59 320.05 L413.96 320.05 L412.33 320.05 L410.7 320.05 L409.08 320.05 L407.45 320.05 L405.82 320.05 L404.19 320.05 L402.57 320.05 L400.94 320.05 L399.31 320.05 L397.68 320.05 L396.05 320.05 L394.43 320.05 L392.8 320.05 L391.17 320.05 L389.54 320.05 L387.92 320.05 L386.29 320.05 L384.66 320.05 L383.03 320.05 L381.4 320.05 L379.78 320.05 L378.15 320.05 L376.52 320.05 L374.89 320.05 L373.26 320.05 L371.64 320.05 L370.01 320.05 L368.38 320.05 L366.75 320.05 L365.13 320.05 L363.5 320.05 L361.87 320.05 L360.24 320.05 L358.61 320.05 L356.99 320.05 L355.36 320.05 L353.73 320.05 L352.1 320.05 L350.48 320.05 L348.85 320.05 L347.22 320.05 L345.59 320.05 L343.96 320.05 L342.34 320.05 L340.71 320.05 L339.08 320.05 L337.45 320.05 L335.83 320.05 L334.2 320.05 L332.57 320.05 L330.94 320.05 L329.31 320.05 L327.69 320.05 L326.06 320.05 L324.43 320.05 L322.8 320.05 L321.18 320.05 L319.55 320.05 L317.92 320.05 L316.29 320.05"/><path d="M1468.34 271.22 L1466.77 271.22 L1465.2 271.22 L1463.62 271.22 L1462.05 271.22 L1460.48 271.22 L1458.91 271.22 L1457.33 271.22 L1455.76 271.22 L1454.19 271.22 L1452.62 271.22 L1451.04 271.22 L1449.47 271.22 L1447.9 271.22 L1446.33 271.22 L1444.76 271.22 L1443.18 271.22 L1441.61 271.22 L1440.04 271.22 L1438.47 271.22 L1436.89 271.22 L1435.32 271.22 L1433.75 271.22 L1432.18 271.22 L1430.6 271.22 L1429.03 271.22 L1427.46 271.22 L1425.89 271.22 L1424.31 271.22 L1422.74 271.22 L1421.17 271.22 L1419.6 271.22 L1418.03 271.22 L1416.45 271.22 L1414.88 271.22 L1413.31 271.22 L1411.74 271.22 L1410.16 271.22 L1408.59 271.22 L1407.02 271.22 L1405.45 271.22 L1403.87 271.22 L1402.3 271.22 L1400.73 271.22 L1399.16 271.22 L1397.59 271.22 L1396.01 271.22 L1394.44 271.22 L1392.87 271.22 L1391.3 271.22 L1389.72 271.22 L1388.15 271.22 L1386.58 271.22 L1385.01 271.22 L1383.43 271.22 L1381.86 271.22 L1380.29 271.22 L1378.72 271.22 L1377.14 271.22 L1375.57 271.22 L1374 271.22 L1372.43 271.22 L1370.86 271.22 L1369.28 271.22 L1367.71 271.22 L1366.14 271.22 L1364.57 271.22 L1362.99 271.22 L1361.42 271.22 L1359.85 271.22 L1358.28 271.22 L1356.7 271.22 L1355.13 271.22 L1353.56 271.22 L1351.99 271.22 L1350.42 271.22 L1348.84 271.22 L1347.27 271.22 L1345.7 271.22 L1344.13 271.22 L1342.55 271.22 L1340.98 271.22 L1339.41 271.22 L1337.84 271.22 L1336.26 271.22 L1334.69 271.22 L1333.12 271.22 L1331.55 271.22 L1329.97 271.22 L1328.4 271.22 L1326.83 271.22 L1325.26 271.22 L1323.69 271.22 L1322.11 271.22 L1320.54 271.22 L1318.97 271.22 L1317.4 271.22 L1315.82 271.22 L1314.25 271.22 L1312.68 271.22 L1311.11 271.22 L1309.53 271.22 L1307.96 271.22 L1306.39 271.22 L1304.82 271.22 L1303.25 271.22 L1301.67 271.22 L1300.1 271.22 L1298.53 271.22 L1296.96 271.22 L1295.38 271.22 L1293.81 271.22 L1292.24 271.22 L1290.67 271.22 L1289.09 271.22 L1287.52 271.22 L1285.95 271.22 L1284.38 271.22 L1282.8 271.22 L1281.23 271.22 L1279.66 271.22 L1278.09 271.22 L1276.52 271.22 L1274.94 271.22 L1273.37 271.22 L1271.8 271.22 L1270.23 271.22 L1268.65 271.22 L1267.08 271.22 L1265.51 271.22 L1263.94 271.22 L1262.36 271.22 L1260.79 271.22 L1259.22 271.22 L1257.65 271.22 L1256.08 271.22 L1254.5 271.22 L1252.93 271.22 L1251.36 271.22 L1249.79 271.22 L1248.21 271.22 L1246.64 271.22 L1245.07 271.22 L1243.5 271.22 L1241.92 271.22 L1240.35 271.22 L1238.78 271.22 L1237.21 271.22 L1235.63 271.22 L1234.06 271.22 L1232.49 271.22 L1230.92 271.22 L1229.35 271.22 L1227.77 271.22 L1226.2 271.22 L1224.63 271.22 L1223.06 271.22 L1221.48 271.22 L1219.91 271.22 L1218.34 271.22 L1216.77 271.22 L1215.19 271.22 L1213.62 271.22 L1212.05 271.22 L1210.48 271.22 L1208.91 271.22 L1207.33 271.22 L1205.76 271.22 L1204.19 271.22 L1202.62 271.22 L1201.04 271.22 L1199.47 271.22 L1197.9 271.22 L1196.33 271.22 L1194.75 271.22 L1193.18 271.22 L1191.61 271.22 L1190.04 271.22 L1188.46 271.22 L1186.89 271.22 L1185.32 271.22 L1183.75 271.22 L1182.18 271.22 L1180.6 271.22 L1179.03 271.22 L1177.46 271.22 L1175.89 271.22 L1174.31 271.22 L1172.74 271.22 L1171.17 271.22 L1169.6 271.22 L1168.02 271.22 L1166.45 271.22 L1164.88 271.22 L1163.31 271.22 L1161.74 271.22 L1160.16 271.22 L1158.59 271.22 L1157.02 271.22 L1155.45 271.22 L1153.87 271.22 L1152.3 271.22 L1150.73 271.22 L1149.16 271.22 L1147.58 271.22 L1146.01 271.22 L1144.44 271.22 L1142.87 271.22 L1141.29 271.22 L1139.72 271.22 L1138.15 271.22 L1136.58 271.22 L1135.01 271.22 L1133.43 271.22 L1131.86 271.22 L1130.29 271.22 L1128.72 271.22 L1127.14 271.22 L1125.57 271.22 L1124 271.22 L1122.43 271.22 L1120.85 271.22 L1119.28 271.22 L1117.71 271.22 L1116.14 271.22 L1114.57 271.22 L1112.99 271.22 L1111.42 271.22 L1109.85 271.22 L1108.28 271.22 L1106.7 271.22 L1105.13 271.22 L1103.56 271.22 L1101.99 271.22 L1100.41 271.22 L1098.84 271.22 L1097.27 271.22 L1095.7 271.22 L1094.12 271.22 L1092.55 271.22 L1090.98 271.22 L1089.41 271.22 L1087.84 271.22 L1086.26 271.22 L1084.69 271.22 L1083.12 271.22 L1081.55 271.22 L1079.97 271.22 L1078.4 271.22 L1076.83 271.22 L1075.26 271.22 L1073.68 271.22 L1072.11 271.22 L1070.54 271.22 L1068.97 271.22 L1067.4 271.22 L1065.82 271.22 L1064.25 271.22 L1062.68 271.22 L1061.11 271.22 L1059.53 271.22 L1057.96 271.22 L1056.39 271.22 L1054.82 271.22 L1053.24 271.22 L1051.67 271.22 L1050.1 271.22 L1048.53 271.22 L1046.95 271.22 L1045.38 271.22 L1043.81 271.22 L1042.24 271.22 L1040.67 271.22 L1039.09 271.22 L1037.52 271.22 L1035.95 271.22 L1034.38 271.22 L1032.8 271.22 L1031.23 271.22 L1029.66 271.22 L1028.09 271.22 L1026.51 271.22 L1024.94 271.22 L1023.37 271.22 L1021.8 271.22 L1020.23 271.22 L1018.65 271.22 L1017.08 271.22 L1015.51 271.22 L1013.94 271.22 L1012.36 271.22 L1010.79 271.22 L1009.22 271.22 L1007.65 271.22 L1006.07 271.22 L1004.5 271.22 L1002.93 271.22 L1001.36 271.22 L999.78 271.22 L998.21 271.22 L996.64 271.22 L995.07 271.22 L993.5 271.22 L991.92 271.22 L990.35 271.22 L988.78 271.22 L987.21 271.22 L985.63 271.22 L984.06 271.22 L982.49 271.22 L980.92 271.22 L979.34 271.22 L977.77 271.22 L976.2 271.22 L974.63 271.22 L973.06 271.22 L971.48 271.22 L969.91 271.22 L968.34 271.22 L966.77 271.22 L965.19 271.22 L963.62 271.22 L962.05 271.22 L960.48 271.22 L958.9 271.22 L957.33 271.22 L955.76 271.22 L954.19 271.22 L952.61 271.22 L951.04 271.22 L949.47 271.22 L947.9 271.22 L946.33 271.22 L944.75 271.22 L943.18 271.22 L941.61 271.22 L940.04 271.22 L938.46 271.22 L936.89 271.22 L935.32 271.22 L933.75 271.22 L932.17 271.22 L930.6 271.22 L929.03 271.22 L927.46 271.22 L925.89 271.22 L924.31 271.22 L922.74 271.22 L921.17 271.22 L919.6 271.22 L918.02 271.22 L916.45 271.22 L914.88 271.22 L913.31 271.22 L911.73 271.22 L910.16 271.22 L908.59 271.22 L907.02 271.22 L905.44 271.22 L903.87 271.22 L902.3 271.22 L900.73 271.22 L899.16 271.22 L897.58 271.22 L896.01 271.22 L894.44 271.22 L892.87 271.22 L891.29 271.22 L889.72 271.22 L888.15 271.22 L886.58 271.22 L885 271.22 L883.43 271.22 L881.86 271.22 L880.29 271.22 L878.71 271.22 L877.14 271.22 L875.57 271.22 L874 271.22 L872.43 271.22 L870.85 271.22 L869.28 271.22 L867.71 271.22 L866.14 271.22 L864.56 271.22 L862.99 271.22 L861.42 271.22 L859.85 271.22 L858.27 271.22 L856.7 271.22 L855.13 271.22 L853.56 271.22 L851.99 271.22 L850.41 271.22 L848.84 271.22 L847.27 271.22 L845.7 271.22 L844.12 271.22 L842.55 271.22 L840.98 271.22 L839.41 271.22 L837.83 271.22 L836.26 271.22 L834.69 271.22 L833.12 271.22 L831.54 271.22 L829.97 271.22 L828.4 271.22 L826.83 271.22 L825.26 271.22 L823.68 271.22 L822.11 271.22 L820.54 271.22 L818.97 271.22 L817.39 271.22 L815.82 271.22 L814.25 271.22 L812.68 271.22 L811.1 271.22 L809.53 271.22 L807.96 271.22 L806.39 271.22 L804.82 271.22 L803.24 271.22 L801.67 271.22 L800.1 271.22 L798.53 271.22 L796.95 271.22 L795.38 271.22 L793.81 271.22 L792.24 271.22 L790.66 271.22 L789.09 271.22 L787.52 271.22 L785.95 271.22 L784.37 271.22 L782.8 271.22 L781.23 271.22 L779.66 271.22 L778.09 271.22 L776.51 271.22 L774.94 271.22 L773.37 271.22 L771.8 271.22 L770.22 271.22 L768.65 271.22 L767.08 271.22 L765.51 271.22 L763.93 271.22 L762.36 271.22 L760.79 271.22 L759.22 271.22 L757.65 271.22 L756.07 271.22 L754.5 271.22 L752.93 271.22 L751.36 271.22 L749.78 271.22 L748.21 271.22 L746.64 271.22 L745.07 271.22 L743.49 271.22 L741.92 271.22 L740.35 271.22 L738.78 271.22 L737.2 271.22 L735.63 271.22 L734.06 271.22 L732.49 271.22 L730.92 271.22 L729.34 271.22 L727.77 271.22 L726.2 271.22 L724.63 271.22 L723.05 271.22 L721.48 271.22 L719.91 271.22 L718.34 271.22 L716.76 271.22 L715.19 271.22 L713.62 271.22 L712.05 271.22 L710.48 271.22 L708.9 271.22 L707.33 271.22 L705.76 271.22 L704.19 271.22 L702.61 271.22 L701.04 271.22 L699.47 271.22 L697.9 271.22 L696.32 271.22 L694.75 271.22 L693.18 271.22 L691.61 271.22 L690.03 271.22 L688.46 271.22 L686.89 271.22 L685.32 271.22 L683.75 271.22 L682.17 271.22 L680.6 271.22 L679.03 271.22 L677.46 271.22 L675.88 271.22 L674.31 271.22 L672.74 271.22 L671.17 271.22 L669.59 271.22 L668.02 271.22 L666.45 271.22 L664.88 271.22 L663.31 271.22 L661.73 271.22 L660.16 271.22 L658.59 271.22 L657.02 271.22 L655.44 271.22 L653.87 271.22 L652.3 271.22 L650.73 271.22 L649.15 271.22 L647.58 271.22 L646.01 271.22 L644.44 271.22 L642.86 271.22 L641.29 271.22 L639.72 271.22 L638.15 271.22 L636.58 271.22 L635 271.22 L633.43 271.22 L631.86 271.22 L630.29 271.22 L628.71 271.22 L627.14 271.22 L625.57 271.22 L624 271.22 L622.42 271.22 L620.85 271.22 L619.28 271.22 L617.71 271.22 L616.14 271.22 L614.56 271.22 L612.99 271.22 L611.42 271.22 L609.85 271.22 L608.27 271.22 L606.7 271.22 L605.13 271.22 L603.56 271.22 L601.98 271.22 L600.41 271.22 L598.84 271.22 L597.27 271.22 L595.69 271.22 L594.12 271.22 L592.55 271.22 L590.98 271.22 L589.41 271.22 L587.83 271.22 L586.26 271.22 L584.69 271.22 L583.12 271.22 L581.54 271.22 L579.97 271.22 L578.4 271.22 L576.83 271.22 L575.25 271.22 L573.68 271.22 L572.11 271.22 L570.54 271.22 L568.97 271.22 L567.39 271.22 L565.82 271.22 L564.25 271.22 L562.68 271.22 L561.1 271.22 L559.53 271.22 L557.96 271.22 L556.39 271.22 L554.81 271.22 L553.24 271.22 L551.67 271.22 L550.1 271.22 L548.52 271.22 L546.95 271.22 L545.38 271.22 L543.81 271.22 L542.24 271.22 L540.66 271.22 L539.09 271.22 L537.52 271.22 L535.95 271.22 L534.37 271.22 L532.8 271.22 L531.23 271.22 L529.66 271.22 L528.08 271.22 L526.51 271.22 L524.94 271.22 L523.37 271.22 L521.8 271.22 L520.22 271.22 L518.65 271.22 L517.08 271.22 L515.51 271.22 L513.93 271.22 L512.36 271.22 L510.79 271.22 L509.22 271.22 L507.64 271.22 L506.07 271.22 L504.5 271.22 L502.93 271.22 L501.35 271.22 L499.78 271.22 L498.21 271.22 L496.64 271.22 L495.07 271.22 L493.49 271.22 L491.92 271.22 L490.35 271.22 L488.78 271.22 L487.2 271.22 L485.63 271.22 L484.06 271.22 L482.49 271.22 L480.91 271.22 L479.34 271.22 L477.77 271.22 L476.2 271.22 L474.63 271.22 L473.05 271.22 L471.48 271.22 L469.91 271.22 L468.34 271.22 L466.76 271.22 L465.19 271.22 L463.62 271.22 L462.05 271.22 L460.47 271.22 L458.9 271.22 L457.33 271.22 L455.76 271.22 L454.18 271.22 L452.61 271.22 L451.04 271.22 L449.47 271.22 L447.9 271.22 L446.32 271.22 L444.75 271.22 L443.18 271.22 L441.61 271.22 L440.03 271.22 L438.46 271.22 L436.89 271.22 L435.32 271.22 L433.74 271.22 L432.17 271.22 L430.6 271.22 L429.03 271.22 L427.46 271.22 L425.88 271.22 L424.31 271.22 L422.74 271.22 L421.17 271.22 L419.59 271.22 L418.02 271.22 L416.45 271.22 L414.88 271.22 L413.3 271.22 L411.73 271.22 L410.16 271.22 L408.59 271.22 L407.01 271.22 L405.44 271.22 L403.87 271.22 L402.3 271.22 L400.73 271.22 L399.15 271.22 L397.58 271.22 L396.01 271.22 L394.44 271.22 L392.86 271.22 L391.29 271.22 L389.72 271.22 L388.15 271.22 L386.57 271.22 L385 271.22 L383.43 271.22 L381.86 271.22 L380.29 271.22 L378.71 271.22 L377.14 271.22 L375.57 271.22 L374 271.22 L372.42 271.22 L370.85 271.22 L369.28 271.22 L367.71 271.22 L366.13 271.22 L364.56 271.22 L362.99 271.22 L361.42 271.22 L359.84 271.22 L358.27 271.22 L356.7 271.22 L355.13 271.22 L353.56 271.22 L351.98 271.22 L350.41 271.22 L348.84 271.22 L347.27 271.22 L345.69 271.22 L344.12 271.22 L342.55 271.22 L340.98 271.22 L339.4 271.22 L337.83 271.22 L336.26 271.22"/><path d="M1409.8 222.38 L1408.39 222.38 L1406.98 222.38 L1405.57 222.38 L1404.16 222.38 L1402.75 222.38 L1401.34 222.38 L1399.93 222.38 L1398.52 222.38 L1397.11 222.38 L1395.7 222.38 L1394.29 222.38 L1392.88 222.38 L1391.47 222.38 L1390.06 222.38 L1388.65 222.38 L1387.24 222.38 L1385.83 222.38 L1384.42 222.38 L1383.01 222.38 L1381.6 222.38 L1380.19 222.38 L1378.78 222.38 L1377.37 222.38 L1375.96 222.38 L1374.55 222.38 L1373.15 222.38 L1371.74 222.38 L1370.33 222.38 L1368.92 222.38 L1367.51 222.38 L1366.1 222.38 L1364.69 222.38 L1363.28 222.38 L1361.87 222.38 L1360.46 222.38 L1359.05 222.38 L1357.64 222.38 L1356.23 222.38 L1354.82 222.38 L1353.41 222.38 L1352 222.38 L1350.59 222.38 L1349.18 222.38 L1347.77 222.38 L1346.36 222.38 L1344.95 222.38 L1343.54 222.38 L1342.13 222.38 L1340.72 222.38 L1339.31 222.38 L1337.9 222.38 L1336.49 222.38 L1335.08 222.38 L1333.67 222.38 L1332.26 222.38 L1330.85 222.38 L1329.44 222.38 L1328.03 222.38 L1326.62 222.38 L1325.21 222.38 L1323.81 222.38 L1322.4 222.38 L1320.99 222.38 L1319.58 222.38 L1318.17 222.38 L1316.76 222.38 L1315.35 222.38 L1313.94 222.38 L1312.53 222.38 L1311.12 222.38 L1309.71 222.38 L1308.3 222.38 L1306.89 222.38 L1305.48 222.38 L1304.07 222.38 L1302.66 222.38 L1301.25 222.38 L1299.84 222.38 L1298.43 222.38 L1297.02 222.38 L1295.61 222.38 L1294.2 222.38 L1292.79 222.38 L1291.38 222.38 L1289.97 222.38 L1288.56 222.38 L1287.15 222.38 L1285.74 222.38 L1284.33 222.38 L1282.92 222.38 L1281.51 222.38 L1280.1 222.38 L1278.69 222.38 L1277.28 222.38 L1275.87 222.38 L1274.47 222.38 L1273.06 222.38 L1271.65 222.38 L1270.24 222.38 L1268.83 222.38 L1267.42 222.38 L1266.01 222.38 L1264.6 222.38 L1263.19 222.38 L1261.78 222.38 L1260.37 222.38 L1258.96 222.38 L1257.55 222.38 L1256.14 222.38 L1254.73 222.38 L1253.32 222.38 L1251.91 222.38 L1250.5 222.38 L1249.09 222.38 L1247.68 222.38 L1246.27 222.38 L1244.86 222.38 L1243.45 222.38 L1242.04 222.38 L1240.63 222.38 L1239.22 222.38 L1237.81 222.38 L1236.4 222.38 L1234.99 222.38 L1233.58 222.38 L1232.17 222.38 L1230.76 222.38 L1229.35 222.38 L1227.94 222.38 L1226.53 222.38 L1225.12 222.38 L1223.72 222.38 L1222.31 222.38 L1220.9 222.38 L1219.49 222.38 L1218.08 222.38 L1216.67 222.38 L1215.26 222.38 L1213.85 222.38 L1212.44 222.38 L1211.03 222.38 L1209.62 222.38 L1208.21 222.38 L1206.8 222.38 L1205.39 222.38 L1203.98 222.38 L1202.57 222.38 L1201.16 222.38 L1199.75 222.38 L1198.34 222.38 L1196.93 222.38 L1195.52 222.38 L1194.11 222.38 L1192.7 222.38 L1191.29 222.38 L1189.88 222.38 L1188.47 222.38 L1187.06 222.38 L1185.65 222.38 L1184.24 222.38 L1182.83 222.38 L1181.42 222.38 L1180.01 222.38 L1178.6 222.38 L1177.19 222.38 L1175.78 222.38 L1174.38 222.38 L1172.97 222.38 L1171.56 222.38 L1170.15 222.38 L1168.74 222.38 L1167.33 222.38 L1165.92 222.38 L1164.51 222.38 L1163.1 222.38 L1161.69 222.38 L1160.28 222.38 L1158.87 222.38 L1157.46 222.38 L1156.05 222.38 L1154.64 222.38 L1153.23 222.38 L1151.82 222.38 L1150.41 222.38 L1149 222.38 L1147.59 222.38 L1146.18 222.38 L1144.77 222.38 L1143.36 222.38 L1141.95 222.38 L1140.54 222.38 L1139.13 222.38 L1137.72 222.38 L1136.31 222.38 L1134.9 222.38 L1133.49 222.38 L1132.08 222.38 L1130.67 222.38 L1129.26 222.38 L1127.85 222.38 L1126.44 222.38 L1125.04 222.38 L1123.63 222.38 L1122.22 222.38 L1120.81 222.38 L1119.4 222.38 L1117.99 222.38 L1116.58 222.38 L1115.17 222.38 L1113.76 222.38 L1112.35 222.38 L1110.94 222.38 L1109.53 222.38 L1108.12 222.38 L1106.71 222.38 L1105.3 222.38 L1103.89 222.38 L1102.48 222.38 L1101.07 222.38 L1099.66 222.38 L1098.25 222.38 L1096.84 222.38 L1095.43 222.38 L1094.02 222.38 L1092.61 222.38 L1091.2 222.38 L1089.79 222.38 L1088.38 222.38 L1086.97 222.38 L1085.56 222.38 L1084.15 222.38 L1082.74 222.38 L1081.33 222.38 L1079.92 222.38 L1078.51 222.38 L1077.1 222.38 L1075.7 222.38 L1074.29 222.38 L1072.88 222.38 L1071.47 222.38 L1070.06 222.38 L1068.65 222.38 L1067.24 222.38 L1065.83 222.38 L1064.42 222.38 L1063.01 222.38 L1061.6 222.38 L1060.19 222.38 L1058.78 222.38 L1057.37 222.38 L1055.96 222.38 L1054.55 222.38 L1053.14 222.38 L1051.73 222.38 L1050.32 222.38 L1048.91 222.38 L1047.5 222.38 L1046.09 222.38 L1044.68 222.38 L1043.27 222.38 L1041.86 222.38 L1040.45 222.38 L1039.04 222.38 L1037.63 222.38 L1036.22 222.38 L1034.81 222.38 L1033.4 222.38 L1031.99 222.38 L1030.58 222.38 L1029.17 222.38 L1027.76 222.38 L1026.36 222.38 L1024.95 222.38 L1023.54 222.38 L1022.13 222.38 L1020.72 222.38 L1019.31 222.38 L1017.9 222.38 L1016.49 222.38 L1015.08 222.38 L1013.67 222.38 L1012.26 222.38 L1010.85 222.38 L1009.44 222.38 L1008.03 222.38 L1006.62 222.38 L1005.21 222.38 L1003.8 222.38 L1002.39 222.38 L1000.98 222.38 L999.57 222.38 L998.16 222.38 L996.75 222.38 L995.34 222.38 L993.93 222.38 L992.52 222.38 L991.11 222.38 L989.7 222.38 L988.29 222.38 L986.88 222.38 L985.47 222.38 L984.06 222.38 L982.65 222.38 L981.24 222.38 L979.83 222.38 L978.42 222.38 L977.01 222.38 L975.61 222.38 L974.2 222.38 L972.79 222.38 L971.38 222.38 L969.97 222.38 L968.56 222.38 L967.15 222.38 L965.74 222.38 L964.33 222.38 L962.92 222.38 L961.51 222.38 L960.1 222.38 L958.69 222.38 L957.28 222.38 L955.87 222.38 L954.46 222.38 L953.05 222.38 L951.64 222.38 L950.23 222.38 L948.82 222.38 L947.41 222.38 L946 222.38 L944.59 222.38 L943.18 222.38 L941.77 222.38 L940.36 222.38 L938.95 222.38 L937.54 222.38 L936.13 222.38 L934.72 222.38 L933.31 222.38 L931.9 222.38 L930.49 222.38 L929.08 222.38 L927.67 222.38 L926.27 222.38 L924.86 222.38 L923.45 222.38 L922.04 222.38 L920.63 222.38 L919.22 222.38 L917.81 222.38 L916.4 222.38 L914.99 222.38 L913.58 222.38 L912.17 222.38 L910.76 222.38 L909.35 222.38 L907.94 222.38 L906.53 222.38 L905.12 222.38 L903.71 222.38 L902.3 222.38 L900.89 222.38 L899.48 222.38 L898.07 222.38 L896.66 222.38 L895.25 222.38 L893.84 222.38 L892.43 222.38 L891.02 222.38 L889.61 222.38 L888.2 222.38 L886.79 222.38 L885.38 222.38 L883.97 222.38 L882.56 222.38 L881.15 222.38 L879.74 222.38 L878.33 222.38 L876.93 222.38 L875.52 222.38 L874.11 222.38 L872.7 222.38 L871.29 222.38 L869.88 222.38 L868.47 222.38 L867.06 222.38 L865.65 222.38 L864.24 222.38 L862.83 222.38 L861.42 222.38 L860.01 222.38 L858.6 222.38 L857.19 222.38 L855.78 222.38 L854.37 222.38 L852.96 222.38 L851.55 222.38 L850.14 222.38 L848.73 222.38 L847.32 222.38 L845.91 222.38 L844.5 222.38 L843.09 222.38 L841.68 222.38 L840.27 222.38 L838.86 222.38 L837.45 222.38 L836.04 222.38 L834.63 222.38 L833.22 222.38 L831.81 222.38 L830.4 222.38 L828.99 222.38 L827.59 222.38 L826.18 222.38 L824.77 222.38 L823.36 222.38 L821.95 222.38 L820.54 222.38 L819.13 222.38 L817.72 222.38 L816.31 222.38 L814.9 222.38 L813.49 222.38 L812.08 222.38 L810.67 222.38 L809.26 222.38 L807.85 222.38 L806.44 222.38 L805.03 222.38 L803.62 222.38 L802.21 222.38 L800.8 222.38 L799.39 222.38 L797.98 222.38 L796.57 222.38 L795.16 222.38 L793.75 222.38 L792.34 222.38 L790.93 222.38 L789.52 222.38 L788.11 222.38 L786.7 222.38 L785.29 222.38 L783.88 222.38 L782.47 222.38 L781.06 222.38 L779.65 222.38 L778.24 222.38 L776.84 222.38 L775.43 222.38 L774.02 222.38 L772.61 222.38 L771.2 222.38 L769.79 222.38 L768.38 222.38 L766.97 222.38 L765.56 222.38 L764.15 222.38 L762.74 222.38 L761.33 222.38 L759.92 222.38 L758.51 222.38 L757.1 222.38 L755.69 222.38 L754.28 222.38 L752.87 222.38 L751.46 222.38 L750.05 222.38 L748.64 222.38 L747.23 222.38 L745.82 222.38 L744.41 222.38 L743 222.38 L741.59 222.38 L740.18 222.38 L738.77 222.38 L737.36 222.38 L735.95 222.38 L734.54 222.38 L733.13 222.38 L731.72 222.38 L730.31 222.38 L728.9 222.38 L727.5 222.38 L726.09 222.38 L724.68 222.38 L723.27 222.38 L721.86 222.38 L720.45 222.38 L719.04 222.38 L717.63 222.38 L716.22 222.38 L714.81 222.38 L713.4 222.38 L711.99 222.38 L710.58 222.38 L709.17 222.38 L707.76 222.38 L706.35 222.38 L704.94 222.38 L703.53 222.38 L702.12 222.38 L700.71 222.38 L699.3 222.38 L697.89 222.38 L696.48 222.38 L695.07 222.38 L693.66 222.38 L692.25 222.38 L690.84 222.38 L689.43 222.38 L688.02 222.38 L686.61 222.38 L685.2 222.38 L683.79 222.38 L682.38 222.38 L680.97 222.38 L679.56 222.38 L678.16 222.38 L676.75 222.38 L675.34 222.38 L673.93 222.38 L672.52 222.38 L671.11 222.38 L669.7 222.38 L668.29 222.38 L666.88 222.38 L665.47 222.38 L664.06 222.38 L662.65 222.38 L661.24 222.38 L659.83 222.38 L658.42 222.38 L657.01 222.38 L655.6 222.38 L654.19 222.38 L652.78 222.38 L651.37 222.38 L649.96 222.38 L648.55 222.38 L647.14 222.38 L645.73 222.38 L644.32 222.38 L642.91 222.38 L641.5 222.38 L640.09 222.38 L638.68 222.38 L637.27 222.38 L635.86 222.38 L634.45 222.38 L633.04 222.38 L631.63 222.38 L630.22 222.38 L628.82 222.38 L627.41 222.38 L626 222.38 L624.59 222.38 L623.18 222.38 L621.77 222.38 L620.36 222.38 L618.95 222.38 L617.54 222.38 L616.13 222.38 L614.72 222.38 L613.31 222.38 L611.9 222.38 L610.49 222.38 L609.08 222.38 L607.67 222.38 L606.26 222.38 L604.85 222.38 L603.44 222.38 L602.03 222.38 L600.62 222.38 L599.21 222.38 L597.8 222.38 L596.39 222.38 L594.98 222.38 L593.57 222.38 L592.16 222.38 L590.75 222.38 L589.34 222.38 L587.93 222.38 L586.52 222.38 L585.11 222.38 L583.7 222.38 L582.29 222.38 L580.88 222.38 L579.48 222.38 L578.07 222.38 L576.66 222.38 L575.25 222.38 L573.84 222.38 L572.43 222.38 L571.02 222.38 L569.61 222.38 L568.2 222.38 L566.79 222.38 L565.38 222.38 L563.97 222.38 L562.56 222.38 L561.15 222.38 L559.74 222.38 L558.33 222.38 L556.92 222.38 L555.51 222.38 L554.1 222.38 L552.69 222.38 L551.28 222.38 L549.87 222.38 L548.46 222.38 L547.05 222.38 L545.64 222.38 L544.23 222.38 L542.82 222.38 L541.41 222.38 L540 222.38 L538.59 222.38 L537.18 222.38 L535.77 222.38 L534.36 222.38 L532.95 222.38 L531.54 222.38 L530.13 222.38 L528.73 222.38 L527.32 222.38 L525.91 222.38 L524.5 222.38 L523.09 222.38 L521.68 222.38 L520.27 222.38 L518.86 222.38 L517.45 222.38 L516.04 222.38 L514.63 222.38 L513.22 222.38 L511.81 222.38 L510.4 222.38 L508.99 222.38 L507.58 222.38 L506.17 222.38 L504.76 222.38 L503.35 222.38 L501.94 222.38 L500.53 222.38 L499.12 222.38 L497.71 222.38 L496.3 222.38 L494.89 222.38 L493.48 222.38 L492.07 222.38 L490.66 222.38 L489.25 222.38 L487.84 222.38 L486.43 222.38 L485.02 222.38 L483.61 222.38 L482.2 222.38 L480.79 222.38 L479.39 222.38 L477.98 222.38 L476.57 222.38 L475.16 222.38 L473.75 222.38 L472.34 222.38 L470.93 222.38 L469.52 222.38 L468.11 222.38 L466.7 222.38 L465.29 222.38 L463.88 222.38 L462.47 222.38 L461.06 222.38 L459.65 222.38 L458.24 222.38 L456.83 222.38 L455.42 222.38 L454.01 222.38 L452.6 222.38 L451.19 222.38 L449.78 222.38 L448.37 222.38 L446.96 222.38 L445.55 222.38 L444.14 222.38 L442.73 222.38 L441.32 222.38 L439.91 222.38 L438.5 222.38 L437.09 222.38 L435.68 222.38 L434.27 222.38 L432.86 222.38 L431.45 222.38 L430.05 222.38 L428.64 222.38 L427.23 222.38 L425.82 222.38 L424.41 222.38 L423 222.38 L421.59 222.38 L420.18 222.38 L418.77 222.38 L417.36 222.38 L415.95 222.38 L414.54 222.38 L413.13 222.38 L411.72 222.38 L410.31 222.38 L408.9 222.38 L407.49 222.38 L406.08 222.38 L404.67 222.38 L403.26 222.38 L401.85 222.38 L400.44 222.38 L399.03 222.38 L397.62 222.38 L396.21 222.38 L394.8 222.38"/><path d="M1316.67 173.55 L1315.52 173.55 L1314.37 173.55 L1313.22 173.55 L1312.07 173.55 L1310.92 173.55 L1309.76 173.55 L1308.61 173.55 L1307.46 173.55 L1306.31 173.55 L1305.16 173.55 L1304.01 173.55 L1302.86 173.55 L1301.71 173.55 L1300.56 173.55 L1299.4 173.55 L1298.25 173.55 L1297.1 173.55 L1295.95 173.55 L1294.8 173.55 L1293.65 173.55 L1292.5 173.55 L1291.35 173.55 L1290.2 173.55 L1289.05 173.55 L1287.89 173.55 L1286.74 173.55 L1285.59 173.55 L1284.44 173.55 L1283.29 173.55 L1282.14 173.55 L1280.99 173.55 L1279.84 173.55 L1278.69 173.55 L1277.54 173.55 L1276.38 173.55 L1275.23 173.55 L1274.08 173.55 L1272.93 173.55 L1271.78 173.55 L1270.63 173.55 L1269.48 173.55 L1268.33 173.55 L1267.18 173.55 L1266.02 173.55 L1264.87 173.55 L1263.72 173.55 L1262.57 173.55 L1261.42 173.55 L1260.27 173.55 L1259.12 173.55 L1257.97 173.55 L1256.82 173.55 L1255.67 173.55 L1254.51 173.55 L1253.36 173.55 L1252.21 173.55 L1251.06 173.55 L1249.91 173.55 L1248.76 173.55 L1247.61 173.55 L1246.46 173.55 L1245.31 173.55 L1244.16 173.55 L1243 173.55 L1241.85 173.55 L1240.7 173.55 L1239.55 173.55 L1238.4 173.55 L1237.25 173.55 L1236.1 173.55 L1234.95 173.55 L1233.8 173.55 L1232.65 173.55 L1231.49 173.55 L1230.34 173.55 L1229.19 173.55 L1228.04 173.55 L1226.89 173.55 L1225.74 173.55 L1224.59 173.55 L1223.44 173.55 L1222.29 173.55 L1221.13 173.55 L1219.98 173.55 L1218.83 173.55 L1217.68 173.55 L1216.53 173.55 L1215.38 173.55 L1214.23 173.55 L1213.08 173.55 L1211.93 173.55 L1210.78 173.55 L1209.62 173.55 L1208.47 173.55 L1207.32 173.55 L1206.17 173.55 L1205.02 173.55 L1203.87 173.55 L1202.72 173.55 L1201.57 173.55 L1200.42 173.55 L1199.27 173.55 L1198.11 173.55 L1196.96 173.55 L1195.81 173.55 L1194.66 173.55 L1193.51 173.55 L1192.36 173.55 L1191.21 173.55 L1190.06 173.55 L1188.91 173.55 L1187.76 173.55 L1186.6 173.55 L1185.45 173.55 L1184.3 173.55 L1183.15 173.55 L1182 173.55 L1180.85 173.55 L1179.7 173.55 L1178.55 173.55 L1177.4 173.55 L1176.24 173.55 L1175.09 173.55 L1173.94 173.55 L1172.79 173.55 L1171.64 173.55 L1170.49 173.55 L1169.34 173.55 L1168.19 173.55 L1167.04 173.55 L1165.89 173.55 L1164.73 173.55 L1163.58 173.55 L1162.43 173.55 L1161.28 173.55 L1160.13 173.55 L1158.98 173.55 L1157.83 173.55 L1156.68 173.55 L1155.53 173.55 L1154.38 173.55 L1153.22 173.55 L1152.07 173.55 L1150.92 173.55 L1149.77 173.55 L1148.62 173.55 L1147.47 173.55 L1146.32 173.55 L1145.17 173.55 L1144.02 173.55 L1142.86 173.55 L1141.71 173.55 L1140.56 173.55 L1139.41 173.55 L1138.26 173.55 L1137.11 173.55 L1135.96 173.55 L1134.81 173.55 L1133.66 173.55 L1132.51 173.55 L1131.35 173.55 L1130.2 173.55 L1129.05 173.55 L1127.9 173.55 L1126.75 173.55 L1125.6 173.55 L1124.45 173.55 L1123.3 173.55 L1122.15 173.55 L1121 173.55 L1119.84 173.55 L1118.69 173.55 L1117.54 173.55 L1116.39 173.55 L1115.24 173.55 L1114.09 173.55 L1112.94 173.55 L1111.79 173.55 L1110.64 173.55 L1109.49 173.55 L1108.33 173.55 L1107.18 173.55 L1106.03 173.55 L1104.88 173.55 L1103.73 173.55 L1102.58 173.55 L1101.43 173.55 L1100.28 173.55 L1099.13 173.55 L1097.97 173.55 L1096.82 173.55 L1095.67 173.55 L1094.52 173.55 L1093.37 173.55 L1092.22 173.55 L1091.07 173.55 L1089.92 173.55 L1088.77 173.55 L1087.62 173.55 L1086.46 173.55 L1085.31 173.55 L1084.16 173.55 L1083.01 173.55 L1081.86 173.55 L1080.71 173.55 L1079.56 173.55 L1078.41 173.55 L1077.26 173.55 L1076.11 173.55 L1074.95 173.55 L1073.8 173.55 L1072.65 173.55 L1071.5 173.55 L1070.35 173.55 L1069.2 173.55 L1068.05 173.55 L1066.9 173.55 L1065.75 173.55 L1064.6 173.55 L1063.44 173.55 L1062.29 173.55 L1061.14 173.55 L1059.99 173.55 L1058.84 173.55 L1057.69 173.55 L1056.54 173.55 L1055.39 173.55 L1054.24 173.55 L1053.08 173.55 L1051.93 173.55 L1050.78 173.55 L1049.63 173.55 L1048.48 173.55 L1047.33 173.55 L1046.18 173.55 L1045.03 173.55 L1043.88 173.55 L1042.73 173.55 L1041.57 173.55 L1040.42 173.55 L1039.27 173.55 L1038.12 173.55 L1036.97 173.55 L1035.82 173.55 L1034.67 173.55 L1033.52 173.55 L1032.37 173.55 L1031.22 173.55 L1030.06 173.55 L1028.91 173.55 L1027.76 173.55 L1026.61 173.55 L1025.46 173.55 L1024.31 173.55 L1023.16 173.55 L1022.01 173.55 L1020.86 173.55 L1019.7 173.55 L1018.55 173.55 L1017.4 173.55 L1016.25 173.55 L1015.1 173.55 L1013.95 173.55 L1012.8 173.55 L1011.65 173.55 L1010.5 173.55 L1009.35 173.55 L1008.19 173.55 L1007.04 173.55 L1005.89 173.55 L1004.74 173.55 L1003.59 173.55 L1002.44 173.55 L1001.29 173.55 L1000.14 173.55 L998.99 173.55 L997.84 173.55 L996.68 173.55 L995.53 173.55 L994.38 173.55 L993.23 173.55 L992.08 173.55 L990.93 173.55 L989.78 173.55 L988.63 173.55 L987.48 173.55 L986.33 173.55 L985.17 173.55 L984.02 173.55 L982.87 173.55 L981.72 173.55 L980.57 173.55 L979.42 173.55 L978.27 173.55 L977.12 173.55 L975.97 173.55 L974.81 173.55 L973.66 173.55 L972.51 173.55 L971.36 173.55 L970.21 173.55 L969.06 173.55 L967.91 173.55 L966.76 173.55 L965.61 173.55 L964.46 173.55 L963.3 173.55 L962.15 173.55 L961 173.55 L959.85 173.55 L958.7 173.55 L957.55 173.55 L956.4 173.55 L955.25 173.55 L954.1 173.55 L952.95 173.55 L951.79 173.55 L950.64 173.55 L949.49 173.55 L948.34 173.55 L947.19 173.55 L946.04 173.55 L944.89 173.55 L943.74 173.55 L942.59 173.55 L941.43 173.55 L940.28 173.55 L939.13 173.55 L937.98 173.55 L936.83 173.55 L935.68 173.55 L934.53 173.55 L933.38 173.55 L932.23 173.55 L931.08 173.55 L929.92 173.55 L928.77 173.55 L927.62 173.55 L926.47 173.55 L925.32 173.55 L924.17 173.55 L923.02 173.55 L921.87 173.55 L920.72 173.55 L919.57 173.55 L918.41 173.55 L917.26 173.55 L916.11 173.55 L914.96 173.55 L913.81 173.55 L912.66 173.55 L911.51 173.55 L910.36 173.55 L909.21 173.55 L908.06 173.55 L906.9 173.55 L905.75 173.55 L904.6 173.55 L903.45 173.55 L902.3 173.55 L901.15 173.55 L900 173.55 L898.85 173.55 L897.7 173.55 L896.54 173.55 L895.39 173.55 L894.24 173.55 L893.09 173.55 L891.94 173.55 L890.79 173.55 L889.64 173.55 L888.49 173.55 L887.34 173.55 L886.19 173.55 L885.03 173.55 L883.88 173.55 L882.73 173.55 L881.58 173.55 L880.43 173.55 L879.28 173.55 L878.13 173.55 L876.98 173.55 L875.83 173.55 L874.68 173.55 L873.52 173.55 L872.37 173.55 L871.22 173.55 L870.07 173.55 L868.92 173.55 L867.77 173.55 L866.62 173.55 L865.47 173.55 L864.32 173.55 L863.17 173.55 L862.01 173.55 L860.86 173.55 L859.71 173.55 L858.56 173.55 L857.41 173.55 L856.26 173.55 L855.11 173.55 L853.96 173.55 L852.81 173.55 L851.65 173.55 L850.5 173.55 L849.35 173.55 L848.2 173.55 L847.05 173.55 L845.9 173.55 L844.75 173.55 L843.6 173.55 L842.45 173.55 L841.3 173.55 L840.14 173.55 L838.99 173.55 L837.84 173.55 L836.69 173.55 L835.54 173.55 L834.39 173.55 L833.24 173.55 L832.09 173.55 L830.94 173.55 L829.79 173.55 L828.63 173.55 L827.48 173.55 L826.33 173.55 L825.18 173.55 L824.03 173.55 L822.88 173.55 L821.73 173.55 L820.58 173.55 L819.43 173.55 L818.27 173.55 L817.12 173.55 L815.97 173.55 L814.82 173.55 L813.67 173.55 L812.52 173.55 L811.37 173.55 L810.22 173.55 L809.07 173.55 L807.92 173.55 L806.76 173.55 L805.61 173.55 L804.46 173.55 L803.31 173.55 L802.16 173.55 L801.01 173.55 L799.86 173.55 L798.71 173.55 L797.56 173.55 L796.41 173.55 L795.25 173.55 L794.1 173.55 L792.95 173.55 L791.8 173.55 L790.65 173.55 L789.5 173.55 L788.35 173.55 L787.2 173.55 L786.05 173.55 L784.9 173.55 L783.74 173.55 L782.59 173.55 L781.44 173.55 L780.29 173.55 L779.14 173.55 L777.99 173.55 L776.84 173.55 L775.69 173.55 L774.54 173.55 L773.38 173.55 L772.23 173.55 L771.08 173.55 L769.93 173.55 L768.78 173.55 L767.63 173.55 L766.48 173.55 L765.33 173.55 L764.18 173.55 L763.03 173.55 L761.87 173.55 L760.72 173.55 L759.57 173.55 L758.42 173.55 L757.27 173.55 L756.12 173.55 L754.97 173.55 L753.82 173.55 L752.67 173.55 L751.52 173.55 L750.36 173.55 L749.21 173.55 L748.06 173.55 L746.91 173.55 L745.76 173.55 L744.61 173.55 L743.46 173.55 L742.31 173.55 L741.16 173.55 L740 173.55 L738.85 173.55 L737.7 173.55 L736.55 173.55 L735.4 173.55 L734.25 173.55 L733.1 173.55 L731.95 173.55 L730.8 173.55 L729.65 173.55 L728.49 173.55 L727.34 173.55 L726.19 173.55 L725.04 173.55 L723.89 173.55 L722.74 173.55 L721.59 173.55 L720.44 173.55 L719.29 173.55 L718.14 173.55 L716.98 173.55 L715.83 173.55 L714.68 173.55 L713.53 173.55 L712.38 173.55 L711.23 173.55 L710.08 173.55 L708.93 173.55 L707.78 173.55 L706.63 173.55 L705.47 173.55 L704.32 173.55 L703.17 173.55 L702.02 173.55 L700.87 173.55 L699.72 173.55 L698.57 173.55 L697.42 173.55 L696.27 173.55 L695.11 173.55 L693.96 173.55 L692.81 173.55 L691.66 173.55 L690.51 173.55 L689.36 173.55 L688.21 173.55 L687.06 173.55 L685.91 173.55 L684.76 173.55 L683.6 173.55 L682.45 173.55 L681.3 173.55 L680.15 173.55 L679 173.55 L677.85 173.55 L676.7 173.55 L675.55 173.55 L674.4 173.55 L673.25 173.55 L672.09 173.55 L670.94 173.55 L669.79 173.55 L668.64 173.55 L667.49 173.55 L666.34 173.55 L665.19 173.55 L664.04 173.55 L662.89 173.55 L661.74 173.55 L660.58 173.55 L659.43 173.55 L658.28 173.55 L657.13 173.55 L655.98 173.55 L654.83 173.55 L653.68 173.55 L652.53 173.55 L651.38 173.55 L650.22 173.55 L649.07 173.55 L647.92 173.55 L646.77 173.55 L645.62 173.55 L644.47 173.55 L643.32 173.55 L642.17 173.55 L641.02 173.55 L639.87 173.55 L638.71 173.55 L637.56 173.55 L636.41 173.55 L635.26 173.55 L634.11 173.55 L632.96 173.55 L631.81 173.55 L630.66 173.55 L629.51 173.55 L628.36 173.55 L627.2 173.55 L626.05 173.55 L624.9 173.55 L623.75 173.55 L622.6 173.55 L621.45 173.55 L620.3 173.55 L619.15 173.55 L618 173.55 L616.84 173.55 L615.69 173.55 L614.54 173.55 L613.39 173.55 L612.24 173.55 L611.09 173.55 L609.94 173.55 L608.79 173.55 L607.64 173.55 L606.49 173.55 L605.33 173.55 L604.18 173.55 L603.03 173.55 L601.88 173.55 L600.73 173.55 L599.58 173.55 L598.43 173.55 L597.28 173.55 L596.13 173.55 L594.98 173.55 L593.82 173.55 L592.67 173.55 L591.52 173.55 L590.37 173.55 L589.22 173.55 L588.07 173.55 L586.92 173.55 L585.77 173.55 L584.62 173.55 L583.47 173.55 L582.31 173.55 L581.16 173.55 L580.01 173.55 L578.86 173.55 L577.71 173.55 L576.56 173.55 L575.41 173.55 L574.26 173.55 L573.11 173.55 L571.95 173.55 L570.8 173.55 L569.65 173.55 L568.5 173.55 L567.35 173.55 L566.2 173.55 L565.05 173.55 L563.9 173.55 L562.75 173.55 L561.6 173.55 L560.44 173.55 L559.29 173.55 L558.14 173.55 L556.99 173.55 L555.84 173.55 L554.69 173.55 L553.54 173.55 L552.39 173.55 L551.24 173.55 L550.09 173.55 L548.93 173.55 L547.78 173.55 L546.63 173.55 L545.48 173.55 L544.33 173.55 L543.18 173.55 L542.03 173.55 L540.88 173.55 L539.73 173.55 L538.58 173.55 L537.42 173.55 L536.27 173.55 L535.12 173.55 L533.97 173.55 L532.82 173.55 L531.67 173.55 L530.52 173.55 L529.37 173.55 L528.22 173.55 L527.06 173.55 L525.91 173.55 L524.76 173.55 L523.61 173.55 L522.46 173.55 L521.31 173.55 L520.16 173.55 L519.01 173.55 L517.86 173.55 L516.71 173.55 L515.55 173.55 L514.4 173.55 L513.25 173.55 L512.1 173.55 L510.95 173.55 L509.8 173.55 L508.65 173.55 L507.5 173.55 L506.35 173.55 L505.2 173.55 L504.04 173.55 L502.89 173.55 L501.74 173.55 L500.59 173.55 L499.44 173.55 L498.29 173.55 L497.14 173.55 L495.99 173.55 L494.84 173.55 L493.68 173.55 L492.53 173.55 L491.38 173.55 L490.23 173.55 L489.08 173.55 L487.93 173.55"/><path d="M1195.3 124.71 L1194.49 124.71 L1193.68 124.71 L1192.86 124.71 L1192.05 124.71 L1191.23 124.71 L1190.42 124.71 L1189.61 124.71 L1188.79 124.71 L1187.98 124.71 L1187.16 124.71 L1186.35 124.71 L1185.54 124.71 L1184.72 124.71 L1183.91 124.71 L1183.1 124.71 L1182.28 124.71 L1181.47 124.71 L1180.65 124.71 L1179.84 124.71 L1179.03 124.71 L1178.21 124.71 L1177.4 124.71 L1176.58 124.71 L1175.77 124.71 L1174.96 124.71 L1174.14 124.71 L1173.33 124.71 L1172.51 124.71 L1171.7 124.71 L1170.89 124.71 L1170.07 124.71 L1169.26 124.71 L1168.45 124.71 L1167.63 124.71 L1166.82 124.71 L1166 124.71 L1165.19 124.71 L1164.38 124.71 L1163.56 124.71 L1162.75 124.71 L1161.93 124.71 L1161.12 124.71 L1160.31 124.71 L1159.49 124.71 L1158.68 124.71 L1157.86 124.71 L1157.05 124.71 L1156.24 124.71 L1155.42 124.71 L1154.61 124.71 L1153.8 124.71 L1152.98 124.71 L1152.17 124.71 L1151.35 124.71 L1150.54 124.71 L1149.73 124.71 L1148.91 124.71 L1148.1 124.71 L1147.28 124.71 L1146.47 124.71 L1145.66 124.71 L1144.84 124.71 L1144.03 124.71 L1143.21 124.71 L1142.4 124.71 L1141.59 124.71 L1140.77 124.71 L1139.96 124.71 L1139.14 124.71 L1138.33 124.71 L1137.52 124.71 L1136.7 124.71 L1135.89 124.71 L1135.08 124.71 L1134.26 124.71 L1133.45 124.71 L1132.63 124.71 L1131.82 124.71 L1131.01 124.71 L1130.19 124.71 L1129.38 124.71 L1128.56 124.71 L1127.75 124.71 L1126.94 124.71 L1126.12 124.71 L1125.31 124.71 L1124.49 124.71 L1123.68 124.71 L1122.87 124.71 L1122.05 124.71 L1121.24 124.71 L1120.43 124.71 L1119.61 124.71 L1118.8 124.71 L1117.98 124.71 L1117.17 124.71 L1116.36 124.71 L1115.54 124.71 L1114.73 124.71 L1113.91 124.71 L1113.1 124.71 L1112.29 124.71 L1111.47 124.71 L1110.66 124.71 L1109.84 124.71 L1109.03 124.71 L1108.22 124.71 L1107.4 124.71 L1106.59 124.71 L1105.78 124.71 L1104.96 124.71 L1104.15 124.71 L1103.33 124.71 L1102.52 124.71 L1101.71 124.71 L1100.89 124.71 L1100.08 124.71 L1099.26 124.71 L1098.45 124.71 L1097.64 124.71 L1096.82 124.71 L1096.01 124.71 L1095.19 124.71 L1094.38 124.71 L1093.57 124.71 L1092.75 124.71 L1091.94 124.71 L1091.12 124.71 L1090.31 124.71 L1089.5 124.71 L1088.68 124.71 L1087.87 124.71 L1087.06 124.71 L1086.24 124.71 L1085.43 124.71 L1084.61 124.71 L1083.8 124.71 L1082.99 124.71 L1082.17 124.71 L1081.36 124.71 L1080.54 124.71 L1079.73 124.71 L1078.92 124.71 L1078.1 124.71 L1077.29 124.71 L1076.47 124.71 L1075.66 124.71 L1074.85 124.71 L1074.03 124.71 L1073.22 124.71 L1072.41 124.71 L1071.59 124.71 L1070.78 124.71 L1069.96 124.71 L1069.15 124.71 L1068.34 124.71 L1067.52 124.71 L1066.71 124.71 L1065.89 124.71 L1065.08 124.71 L1064.27 124.71 L1063.45 124.71 L1062.64 124.71 L1061.82 124.71 L1061.01 124.71 L1060.2 124.71 L1059.38 124.71 L1058.57 124.71 L1057.75 124.71 L1056.94 124.71 L1056.13 124.71 L1055.31 124.71 L1054.5 124.71 L1053.69 124.71 L1052.87 124.71 L1052.06 124.71 L1051.24 124.71 L1050.43 124.71 L1049.62 124.71 L1048.8 124.71 L1047.99 124.71 L1047.17 124.71 L1046.36 124.71 L1045.55 124.71 L1044.73 124.71 L1043.92 124.71 L1043.1 124.71 L1042.29 124.71 L1041.48 124.71 L1040.66 124.71 L1039.85 124.71 L1039.04 124.71 L1038.22 124.71 L1037.41 124.71 L1036.59 124.71 L1035.78 124.71 L1034.97 124.71 L1034.15 124.71 L1033.34 124.71 L1032.52 124.71 L1031.71 124.71 L1030.9 124.71 L1030.08 124.71 L1029.27 124.71 L1028.45 124.71 L1027.64 124.71 L1026.83 124.71 L1026.01 124.71 L1025.2 124.71 L1024.38 124.71 L1023.57 124.71 L1022.76 124.71 L1021.94 124.71 L1021.13 124.71 L1020.32 124.71 L1019.5 124.71 L1018.69 124.71 L1017.87 124.71 L1017.06 124.71 L1016.25 124.71 L1015.43 124.71 L1014.62 124.71 L1013.8 124.71 L1012.99 124.71 L1012.18 124.71 L1011.36 124.71 L1010.55 124.71 L1009.73 124.71 L1008.92 124.71 L1008.11 124.71 L1007.29 124.71 L1006.48 124.71 L1005.67 124.71 L1004.85 124.71 L1004.04 124.71 L1003.22 124.71 L1002.41 124.71 L1001.6 124.71 L1000.78 124.71 L999.97 124.71 L999.15 124.71 L998.34 124.71 L997.53 124.71 L996.71 124.71 L995.9 124.71 L995.08 124.71 L994.27 124.71 L993.46 124.71 L992.64 124.71 L991.83 124.71 L991.02 124.71 L990.2 124.71 L989.39 124.71 L988.57 124.71 L987.76 124.71 L986.95 124.71 L986.13 124.71 L985.32 124.71 L984.5 124.71 L983.69 124.71 L982.88 124.71 L982.06 124.71 L981.25 124.71 L980.43 124.71 L979.62 124.71 L978.81 124.71 L977.99 124.71 L977.18 124.71 L976.36 124.71 L975.55 124.71 L974.74 124.71 L973.92 124.71 L973.11 124.71 L972.3 124.71 L971.48 124.71 L970.67 124.71 L969.85 124.71 L969.04 124.71 L968.23 124.71 L967.41 124.71 L966.6 124.71 L965.78 124.71 L964.97 124.71 L964.16 124.71 L963.34 124.71 L962.53 124.71 L961.71 124.71 L960.9 124.71 L960.09 124.71 L959.27 124.71 L958.46 124.71 L957.65 124.71 L956.83 124.71 L956.02 124.71 L955.2 124.71 L954.39 124.71 L953.58 124.71 L952.76 124.71 L951.95 124.71 L951.13 124.71 L950.32 124.71 L949.51 124.71 L948.69 124.71 L947.88 124.71 L947.06 124.71 L946.25 124.71 L945.44 124.71 L944.62 124.71 L943.81 124.71 L943 124.71 L942.18 124.71 L941.37 124.71 L940.55 124.71 L939.74 124.71 L938.93 124.71 L938.11 124.71 L937.3 124.71 L936.48 124.71 L935.67 124.71 L934.86 124.71 L934.04 124.71 L933.23 124.71 L932.41 124.71 L931.6 124.71 L930.79 124.71 L929.97 124.71 L929.16 124.71 L928.34 124.71 L927.53 124.71 L926.72 124.71 L925.9 124.71 L925.09 124.71 L924.28 124.71 L923.46 124.71 L922.65 124.71 L921.83 124.71 L921.02 124.71 L920.21 124.71 L919.39 124.71 L918.58 124.71 L917.76 124.71 L916.95 124.71 L916.14 124.71 L915.32 124.71 L914.51 124.71 L913.69 124.71 L912.88 124.71 L912.07 124.71 L911.25 124.71 L910.44 124.71 L909.63 124.71 L908.81 124.71 L908 124.71 L907.18 124.71 L906.37 124.71 L905.56 124.71 L904.74 124.71 L903.93 124.71 L903.11 124.71 L902.3 124.71 L901.49 124.71 L900.67 124.71 L899.86 124.71 L899.04 124.71 L898.23 124.71 L897.42 124.71 L896.6 124.71 L895.79 124.71 L894.97 124.71 L894.16 124.71 L893.35 124.71 L892.53 124.71 L891.72 124.71 L890.91 124.71 L890.09 124.71 L889.28 124.71 L888.46 124.71 L887.65 124.71 L886.84 124.71 L886.02 124.71 L885.21 124.71 L884.39 124.71 L883.58 124.71 L882.77 124.71 L881.95 124.71 L881.14 124.71 L880.32 124.71 L879.51 124.71 L878.7 124.71 L877.88 124.71 L877.07 124.71 L876.26 124.71 L875.44 124.71 L874.63 124.71 L873.81 124.71 L873 124.71 L872.19 124.71 L871.37 124.71 L870.56 124.71 L869.74 124.71 L868.93 124.71 L868.12 124.71 L867.3 124.71 L866.49 124.71 L865.67 124.71 L864.86 124.71 L864.05 124.71 L863.23 124.71 L862.42 124.71 L861.6 124.71 L860.79 124.71 L859.98 124.71 L859.16 124.71 L858.35 124.71 L857.54 124.71 L856.72 124.71 L855.91 124.71 L855.09 124.71 L854.28 124.71 L853.47 124.71 L852.65 124.71 L851.84 124.71 L851.02 124.71 L850.21 124.71 L849.4 124.71 L848.58 124.71 L847.77 124.71 L846.95 124.71 L846.14 124.71 L845.33 124.71 L844.51 124.71 L843.7 124.71 L842.89 124.71 L842.07 124.71 L841.26 124.71 L840.44 124.71 L839.63 124.71 L838.82 124.71 L838 124.71 L837.19 124.71 L836.37 124.71 L835.56 124.71 L834.75 124.71 L833.93 124.71 L833.12 124.71 L832.3 124.71 L831.49 124.71 L830.68 124.71 L829.86 124.71 L829.05 124.71 L828.24 124.71 L827.42 124.71 L826.61 124.71 L825.79 124.71 L824.98 124.71 L824.17 124.71 L823.35 124.71 L822.54 124.71 L821.72 124.71 L820.91 124.71 L820.1 124.71 L819.28 124.71 L818.47 124.71 L817.65 124.71 L816.84 124.71 L816.03 124.71 L815.21 124.71 L814.4 124.71 L813.58 124.71 L812.77 124.71 L811.96 124.71 L811.14 124.71 L810.33 124.71 L809.52 124.71 L808.7 124.71 L807.89 124.71 L807.07 124.71 L806.26 124.71 L805.45 124.71 L804.63 124.71 L803.82 124.71 L803 124.71 L802.19 124.71 L801.38 124.71 L800.56 124.71 L799.75 124.71 L798.93 124.71 L798.12 124.71 L797.31 124.71 L796.49 124.71 L795.68 124.71 L794.87 124.71 L794.05 124.71 L793.24 124.71 L792.42 124.71 L791.61 124.71 L790.8 124.71 L789.98 124.71 L789.17 124.71 L788.35 124.71 L787.54 124.71 L786.73 124.71 L785.91 124.71 L785.1 124.71 L784.28 124.71 L783.47 124.71 L782.66 124.71 L781.84 124.71 L781.03 124.71 L780.21 124.71 L779.4 124.71 L778.59 124.71 L777.77 124.71 L776.96 124.71 L776.15 124.71 L775.33 124.71 L774.52 124.71 L773.7 124.71 L772.89 124.71 L772.08 124.71 L771.26 124.71 L770.45 124.71 L769.63 124.71 L768.82 124.71 L768.01 124.71 L767.19 124.71 L766.38 124.71 L765.56 124.71 L764.75 124.71 L763.94 124.71 L763.12 124.71 L762.31 124.71 L761.5 124.71 L760.68 124.71 L759.87 124.71 L759.05 124.71 L758.24 124.71 L757.43 124.71 L756.61 124.71 L755.8 124.71 L754.98 124.71 L754.17 124.71 L753.36 124.71 L752.54 124.71 L751.73 124.71 L750.91 124.71 L750.1 124.71 L749.29 124.71 L748.47 124.71 L747.66 124.71 L746.85 124.71 L746.03 124.71 L745.22 124.71 L744.4 124.71 L743.59 124.71 L742.78 124.71 L741.96 124.71 L741.15 124.71 L740.33 124.71 L739.52 124.71 L738.71 124.71 L737.89 124.71 L737.08 124.71 L736.26 124.71 L735.45 124.71 L734.64 124.71 L733.82 124.71 L733.01 124.71 L732.19 124.71 L731.38 124.71 L730.57 124.71 L729.75 124.71 L728.94 124.71 L728.13 124.71 L727.31 124.71 L726.5 124.71 L725.68 124.71 L724.87 124.71 L724.06 124.71 L723.24 124.71 L722.43 124.71 L721.61 124.71 L720.8 124.71 L719.99 124.71 L719.17 124.71 L718.36 124.71 L717.54 124.71 L716.73 124.71 L715.92 124.71 L715.1 124.71 L714.29 124.71 L713.48 124.71 L712.66 124.71 L711.85 124.71 L711.03 124.71 L710.22 124.71 L709.41 124.71 L708.59 124.71 L707.78 124.71 L706.96 124.71 L706.15 124.71 L705.34 124.71 L704.52 124.71 L703.71 124.71 L702.89 124.71 L702.08 124.71 L701.27 124.71 L700.45 124.71 L699.64 124.71 L698.82 124.71 L698.01 124.71 L697.2 124.71 L696.38 124.71 L695.57 124.71 L694.76 124.71 L693.94 124.71 L693.13 124.71 L692.31 124.71 L691.5 124.71 L690.69 124.71 L689.87 124.71 L689.06 124.71 L688.24 124.71 L687.43 124.71 L686.62 124.71 L685.8 124.71 L684.99 124.71 L684.17 124.71 L683.36 124.71 L682.55 124.71 L681.73 124.71 L680.92 124.71 L680.11 124.71 L679.29 124.71 L678.48 124.71 L677.66 124.71 L676.85 124.71 L676.04 124.71 L675.22 124.71 L674.41 124.71 L673.59 124.71 L672.78 124.71 L671.97 124.71 L671.15 124.71 L670.34 124.71 L669.52 124.71 L668.71 124.71 L667.9 124.71 L667.08 124.71 L666.27 124.71 L665.46 124.71 L664.64 124.71 L663.83 124.71 L663.01 124.71 L662.2 124.71 L661.39 124.71 L660.57 124.71 L659.76 124.71 L658.94 124.71 L658.13 124.71 L657.32 124.71 L656.5 124.71 L655.69 124.71 L654.87 124.71 L654.06 124.71 L653.25 124.71 L652.43 124.71 L651.62 124.71 L650.8 124.71 L649.99 124.71 L649.18 124.71 L648.36 124.71 L647.55 124.71 L646.74 124.71 L645.92 124.71 L645.11 124.71 L644.29 124.71 L643.48 124.71 L642.67 124.71 L641.85 124.71 L641.04 124.71 L640.22 124.71 L639.41 124.71 L638.6 124.71 L637.78 124.71 L636.97 124.71 L636.15 124.71 L635.34 124.71 L634.53 124.71 L633.71 124.71 L632.9 124.71 L632.09 124.71 L631.27 124.71 L630.46 124.71 L629.64 124.71 L628.83 124.71 L628.02 124.71 L627.2 124.71 L626.39 124.71 L625.57 124.71 L624.76 124.71 L623.95 124.71 L623.13 124.71 L622.32 124.71 L621.5 124.71 L620.69 124.71 L619.88 124.71 L619.06 124.71 L618.25 124.71 L617.43 124.71 L616.62 124.71 L615.81 124.71 L614.99 124.71 L614.18 124.71 L613.37 124.71 L612.55 124.71 L611.74 124.71 L610.92 124.71 L610.11 124.71 L609.3 124.71"/><path d="M1053.97 75.88 L1053.55 75.88 L1053.13 75.88 L1052.71 75.88 L1052.28 75.88 L1051.86 75.88 L1051.44 75.88 L1051.02 75.88 L1050.6 75.88 L1050.18 75.88 L1049.76 75.88 L1049.34 75.88 L1048.91 75.88 L1048.49 75.88 L1048.07 75.88 L1047.65 75.88 L1047.23 75.88 L1046.81 75.88 L1046.39 75.88 L1045.97 75.88 L1045.54 75.88 L1045.12 75.88 L1044.7 75.88 L1044.28 75.88 L1043.86 75.88 L1043.44 75.88 L1043.02 75.88 L1042.59 75.88 L1042.17 75.88 L1041.75 75.88 L1041.33 75.88 L1040.91 75.88 L1040.49 75.88 L1040.07 75.88 L1039.65 75.88 L1039.22 75.88 L1038.8 75.88 L1038.38 75.88 L1037.96 75.88 L1037.54 75.88 L1037.12 75.88 L1036.7 75.88 L1036.28 75.88 L1035.85 75.88 L1035.43 75.88 L1035.01 75.88 L1034.59 75.88 L1034.17 75.88 L1033.75 75.88 L1033.33 75.88 L1032.9 75.88 L1032.48 75.88 L1032.06 75.88 L1031.64 75.88 L1031.22 75.88 L1030.8 75.88 L1030.38 75.88 L1029.96 75.88 L1029.53 75.88 L1029.11 75.88 L1028.69 75.88 L1028.27 75.88 L1027.85 75.88 L1027.43 75.88 L1027.01 75.88 L1026.59 75.88 L1026.16 75.88 L1025.74 75.88 L1025.32 75.88 L1024.9 75.88 L1024.48 75.88 L1024.06 75.88 L1023.64 75.88 L1023.21 75.88 L1022.79 75.88 L1022.37 75.88 L1021.95 75.88 L1021.53 75.88 L1021.11 75.88 L1020.69 75.88 L1020.27 75.88 L1019.84 75.88 L1019.42 75.88 L1019 75.88 L1018.58 75.88 L1018.16 75.88 L1017.74 75.88 L1017.32 75.88 L1016.9 75.88 L1016.47 75.88 L1016.05 75.88 L1015.63 75.88 L1015.21 75.88 L1014.79 75.88 L1014.37 75.88 L1013.95 75.88 L1013.52 75.88 L1013.1 75.88 L1012.68 75.88 L1012.26 75.88 L1011.84 75.88 L1011.42 75.88 L1011 75.88 L1010.58 75.88 L1010.15 75.88 L1009.73 75.88 L1009.31 75.88 L1008.89 75.88 L1008.47 75.88 L1008.05 75.88 L1007.63 75.88 L1007.21 75.88 L1006.78 75.88 L1006.36 75.88 L1005.94 75.88 L1005.52 75.88 L1005.1 75.88 L1004.68 75.88 L1004.26 75.88 L1003.83 75.88 L1003.41 75.88 L1002.99 75.88 L1002.57 75.88 L1002.15 75.88 L1001.73 75.88 L1001.31 75.88 L1000.89 75.88 L1000.46 75.88 L1000.04 75.88 L999.62 75.88 L999.2 75.88 L998.78 75.88 L998.36 75.88 L997.94 75.88 L997.52 75.88 L997.09 75.88 L996.67 75.88 L996.25 75.88 L995.83 75.88 L995.41 75.88 L994.99 75.88 L994.57 75.88 L994.14 75.88 L993.72 75.88 L993.3 75.88 L992.88 75.88 L992.46 75.88 L992.04 75.88 L991.62 75.88 L991.2 75.88 L990.77 75.88 L990.35 75.88 L989.93 75.88 L989.51 75.88 L989.09 75.88 L988.67 75.88 L988.25 75.88 L987.83 75.88 L987.4 75.88 L986.98 75.88 L986.56 75.88 L986.14 75.88 L985.72 75.88 L985.3 75.88 L984.88 75.88 L984.45 75.88 L984.03 75.88 L983.61 75.88 L983.19 75.88 L982.77 75.88 L982.35 75.88 L981.93 75.88 L981.51 75.88 L981.08 75.88 L980.66 75.88 L980.24 75.88 L979.82 75.88 L979.4 75.88 L978.98 75.88 L978.56 75.88 L978.14 75.88 L977.71 75.88 L977.29 75.88 L976.87 75.88 L976.45 75.88 L976.03 75.88 L975.61 75.88 L975.19 75.88 L974.76 75.88 L974.34 75.88 L973.92 75.88 L973.5 75.88 L973.08 75.88 L972.66 75.88 L972.24 75.88 L971.82 75.88 L971.39 75.88 L970.97 75.88 L970.55 75.88 L970.13 75.88 L969.71 75.88 L969.29 75.88 L968.87 75.88 L968.44 75.88 L968.02 75.88 L967.6 75.88 L967.18 75.88 L966.76 75.88 L966.34 75.88 L965.92 75.88 L965.5 75.88 L965.07 75.88 L964.65 75.88 L964.23 75.88 L963.81 75.88 L963.39 75.88 L962.97 75.88 L962.55 75.88 L962.13 75.88 L961.7 75.88 L961.28 75.88 L960.86 75.88 L960.44 75.88 L960.02 75.88 L959.6 75.88 L959.18 75.88 L958.75 75.88 L958.33 75.88 L957.91 75.88 L957.49 75.88 L957.07 75.88 L956.65 75.88 L956.23 75.88 L955.81 75.88 L955.38 75.88 L954.96 75.88 L954.54 75.88 L954.12 75.88 L953.7 75.88 L953.28 75.88 L952.86 75.88 L952.44 75.88 L952.01 75.88 L951.59 75.88 L951.17 75.88 L950.75 75.88 L950.33 75.88 L949.91 75.88 L949.49 75.88 L949.06 75.88 L948.64 75.88 L948.22 75.88 L947.8 75.88 L947.38 75.88 L946.96 75.88 L946.54 75.88 L946.12 75.88 L945.69 75.88 L945.27 75.88 L944.85 75.88 L944.43 75.88 L944.01 75.88 L943.59 75.88 L943.17 75.88 L942.75 75.88 L942.32 75.88 L941.9 75.88 L941.48 75.88 L941.06 75.88 L940.64 75.88 L940.22 75.88 L939.8 75.88 L939.37 75.88 L938.95 75.88 L938.53 75.88 L938.11 75.88 L937.69 75.88 L937.27 75.88 L936.85 75.88 L936.43 75.88 L936 75.88 L935.58 75.88 L935.16 75.88 L934.74 75.88 L934.32 75.88 L933.9 75.88 L933.48 75.88 L933.06 75.88 L932.63 75.88 L932.21 75.88 L931.79 75.88 L931.37 75.88 L930.95 75.88 L930.53 75.88 L930.11 75.88 L929.68 75.88 L929.26 75.88 L928.84 75.88 L928.42 75.88 L928 75.88 L927.58 75.88 L927.16 75.88 L926.74 75.88 L926.31 75.88 L925.89 75.88 L925.47 75.88 L925.05 75.88 L924.63 75.88 L924.21 75.88 L923.79 75.88 L923.37 75.88 L922.94 75.88 L922.52 75.88 L922.1 75.88 L921.68 75.88 L921.26 75.88 L920.84 75.88 L920.42 75.88 L919.99 75.88 L919.57 75.88 L919.15 75.88 L918.73 75.88 L918.31 75.88 L917.89 75.88 L917.47 75.88 L917.05 75.88 L916.62 75.88 L916.2 75.88 L915.78 75.88 L915.36 75.88 L914.94 75.88 L914.52 75.88 L914.1 75.88 L913.68 75.88 L913.25 75.88 L912.83 75.88 L912.41 75.88 L911.99 75.88 L911.57 75.88 L911.15 75.88 L910.73 75.88 L910.3 75.88 L909.88 75.88 L909.46 75.88 L909.04 75.88 L908.62 75.88 L908.2 75.88 L907.78 75.88 L907.36 75.88 L906.93 75.88 L906.51 75.88 L906.09 75.88 L905.67 75.88 L905.25 75.88 L904.83 75.88 L904.41 75.88 L903.99 75.88 L903.56 75.88 L903.14 75.88 L902.72 75.88 L902.3 75.88 L901.88 75.88 L901.46 75.88 L901.04 75.88 L900.61 75.88 L900.19 75.88 L899.77 75.88 L899.35 75.88 L898.93 75.88 L898.51 75.88 L898.09 75.88 L897.67 75.88 L897.24 75.88 L896.82 75.88 L896.4 75.88 L895.98 75.88 L895.56 75.88 L895.14 75.88 L894.72 75.88 L894.3 75.88 L893.87 75.88 L893.45 75.88 L893.03 75.88 L892.61 75.88 L892.19 75.88 L891.77 75.88 L891.35 75.88 L890.92 75.88 L890.5 75.88 L890.08 75.88 L889.66 75.88 L889.24 75.88 L888.82 75.88 L888.4 75.88 L887.98 75.88 L887.55 75.88 L887.13 75.88 L886.71 75.88 L886.29 75.88 L885.87 75.88 L885.45 75.88 L885.03 75.88 L884.61 75.88 L884.18 75.88 L883.76 75.88 L883.34 75.88 L882.92 75.88 L882.5 75.88 L882.08 75.88 L881.66 75.88 L881.23 75.88 L880.81 75.88 L880.39 75.88 L879.97 75.88 L879.55 75.88 L879.13 75.88 L878.71 75.88 L878.29 75.88 L877.86 75.88 L877.44 75.88 L877.02 75.88 L876.6 75.88 L876.18 75.88 L875.76 75.88 L875.34 75.88 L874.92 75.88 L874.49 75.88 L874.07 75.88 L873.65 75.88 L873.23 75.88 L872.81 75.88 L872.39 75.88 L871.97 75.88 L871.54 75.88 L871.12 75.88 L870.7 75.88 L870.28 75.88 L869.86 75.88 L869.44 75.88 L869.02 75.88 L868.6 75.88 L868.17 75.88 L867.75 75.88 L867.33 75.88 L866.91 75.88 L866.49 75.88 L866.07 75.88 L865.65 75.88 L865.23 75.88 L864.8 75.88 L864.38 75.88 L863.96 75.88 L863.54 75.88 L863.12 75.88 L862.7 75.88 L862.28 75.88 L861.85 75.88 L861.43 75.88 L861.01 75.88 L860.59 75.88 L860.17 75.88 L859.75 75.88 L859.33 75.88 L858.91 75.88 L858.48 75.88 L858.06 75.88 L857.64 75.88 L857.22 75.88 L856.8 75.88 L856.38 75.88 L855.96 75.88 L855.54 75.88 L855.11 75.88 L854.69 75.88 L854.27 75.88 L853.85 75.88 L853.43 75.88 L853.01 75.88 L852.59 75.88 L852.16 75.88 L851.74 75.88 L851.32 75.88 L850.9 75.88 L850.48 75.88 L850.06 75.88 L849.64 75.88 L849.22 75.88 L848.79 75.88 L848.37 75.88 L847.95 75.88 L847.53 75.88 L847.11 75.88 L846.69 75.88 L846.27 75.88 L845.85 75.88 L845.42 75.88 L845 75.88 L844.58 75.88 L844.16 75.88 L843.74 75.88 L843.32 75.88 L842.9 75.88 L842.47 75.88 L842.05 75.88 L841.63 75.88 L841.21 75.88 L840.79 75.88 L840.37 75.88 L839.95 75.88 L839.53 75.88 L839.1 75.88 L838.68 75.88 L838.26 75.88 L837.84 75.88 L837.42 75.88 L837 75.88 L836.58 75.88 L836.16 75.88 L835.73 75.88 L835.31 75.88 L834.89 75.88 L834.47 75.88 L834.05 75.88 L833.63 75.88 L833.21 75.88 L832.78 75.88 L832.36 75.88 L831.94 75.88 L831.52 75.88 L831.1 75.88 L830.68 75.88 L830.26 75.88 L829.84 75.88 L829.41 75.88 L828.99 75.88 L828.57 75.88 L828.15 75.88 L827.73 75.88 L827.31 75.88 L826.89 75.88 L826.46 75.88 L826.04 75.88 L825.62 75.88 L825.2 75.88 L824.78 75.88 L824.36 75.88 L823.94 75.88 L823.52 75.88 L823.09 75.88 L822.67 75.88 L822.25 75.88 L821.83 75.88 L821.41 75.88 L820.99 75.88 L820.57 75.88 L820.15 75.88 L819.72 75.88 L819.3 75.88 L818.88 75.88 L818.46 75.88 L818.04 75.88 L817.62 75.88 L817.2 75.88 L816.77 75.88 L816.35 75.88 L815.93 75.88 L815.51 75.88 L815.09 75.88 L814.67 75.88 L814.25 75.88 L813.83 75.88 L813.4 75.88 L812.98 75.88 L812.56 75.88 L812.14 75.88 L811.72 75.88 L811.3 75.88 L810.88 75.88 L810.46 75.88 L810.03 75.88 L809.61 75.88 L809.19 75.88 L808.77 75.88 L808.35 75.88 L807.93 75.88 L807.51 75.88 L807.08 75.88 L806.66 75.88 L806.24 75.88 L805.82 75.88 L805.4 75.88 L804.98 75.88 L804.56 75.88 L804.14 75.88 L803.71 75.88 L803.29 75.88 L802.87 75.88 L802.45 75.88 L802.03 75.88 L801.61 75.88 L801.19 75.88 L800.77 75.88 L800.34 75.88 L799.92 75.88 L799.5 75.88 L799.08 75.88 L798.66 75.88 L798.24 75.88 L797.82 75.88 L797.39 75.88 L796.97 75.88 L796.55 75.88 L796.13 75.88 L795.71 75.88 L795.29 75.88 L794.87 75.88 L794.45 75.88 L794.02 75.88 L793.6 75.88 L793.18 75.88 L792.76 75.88 L792.34 75.88 L791.92 75.88 L791.5 75.88 L791.08 75.88 L790.65 75.88 L790.23 75.88 L789.81 75.88 L789.39 75.88 L788.97 75.88 L788.55 75.88 L788.13 75.88 L787.7 75.88 L787.28 75.88 L786.86 75.88 L786.44 75.88 L786.02 75.88 L785.6 75.88 L785.18 75.88 L784.76 75.88 L784.33 75.88 L783.91 75.88 L783.49 75.88 L783.07 75.88 L782.65 75.88 L782.23 75.88 L781.81 75.88 L781.39 75.88 L780.96 75.88 L780.54 75.88 L780.12 75.88 L779.7 75.88 L779.28 75.88 L778.86 75.88 L778.44 75.88 L778.01 75.88 L777.59 75.88 L777.17 75.88 L776.75 75.88 L776.33 75.88 L775.91 75.88 L775.49 75.88 L775.07 75.88 L774.64 75.88 L774.22 75.88 L773.8 75.88 L773.38 75.88 L772.96 75.88 L772.54 75.88 L772.12 75.88 L771.7 75.88 L771.27 75.88 L770.85 75.88 L770.43 75.88 L770.01 75.88 L769.59 75.88 L769.17 75.88 L768.75 75.88 L768.32 75.88 L767.9 75.88 L767.48 75.88 L767.06 75.88 L766.64 75.88 L766.22 75.88 L765.8 75.88 L765.38 75.88 L764.95 75.88 L764.53 75.88 L764.11 75.88 L763.69 75.88 L763.27 75.88 L762.85 75.88 L762.43 75.88 L762.01 75.88 L761.58 75.88 L761.16 75.88 L760.74 75.88 L760.32 75.88 L759.9 75.88 L759.48 75.88 L759.06 75.88 L758.63 75.88 L758.21 75.88 L757.79 75.88 L757.37 75.88 L756.95 75.88 L756.53 75.88 L756.11 75.88 L755.69 75.88 L755.26 75.88 L754.84 75.88 L754.42 75.88 L754 75.88 L753.58 75.88 L753.16 75.88 L752.74 75.88 L752.32 75.88 L751.89 75.88 L751.47 75.88 L751.05 75.88 L750.63 75.88"/></g>
<path d="M751.55 263.99 L751.35 264.62 L751.15 265.25 L750.93 265.88 L750.69 266.51 L750.45 267.13 L750.18 267.75 L749.91 268.37 L749.62 268.99 L749.31 269.6 L749 270.21 L748.67 270.81 L748.33 271.41 L747.97 272 L747.6 272.59 L747.22 273.17 L746.83 273.74 L746.43 274.3 L746.01 274.86 L745.59 275.41 L745.15 275.95 L744.7 276.49 L744.24 277.01 L743.77 277.53 L743.29 278.03 L742.8 278.53 L742.3 279.01 L741.79 279.49 L741.27 279.95 L740.74 280.41 L740.2 280.85 L739.66 281.28 L739.11 281.7 L738.55 282.1 L737.98 282.49 L737.4 282.87 L736.82 283.24 L736.23 283.59 L735.64 283.93 L735.04 284.26 L734.44 284.57 L733.83 284.87 L733.21 285.15 L732.59 285.42 L731.97 285.68 L731.34 285.92 L730.71 286.14 L730.08 286.35 L729.44 286.55 L728.81 286.73 L728.17 286.89 L727.53 287.04 L726.88 287.17 L726.24 287.29 L725.6 287.39 L724.96 287.47 L724.32 287.54 L723.68 287.59 L723.04 287.63 L722.4 287.65 L721.77 287.65 L721.14 287.64 L720.51 287.61 L719.89 287.57 L719.27 287.51 L718.65 287.43 L718.04 287.34 L717.44 287.23 L716.84 287.11 L716.24 286.97 L715.66 286.81 L715.08 286.64 L714.51 286.45 L713.95 286.25 L713.39 286.03 L712.85 285.8 L712.31 285.55 L711.78 285.29 L711.27 285.01 L710.76 284.72 L710.27 284.42 L709.78 284.1 L709.31 283.77 L708.86 283.42 L708.41 283.06 L707.98 282.68 L707.56 282.3 L707.15 281.9 L706.76 281.49 L706.38 281.06 L706.02 280.63 L705.67 280.18 L705.34 279.72 L705.03 279.25 L704.73 278.77 L704.45 278.28 L704.18 277.78 L703.93 277.27 L703.7 276.75 L703.48 276.22 L703.29 275.69 L703.11 275.14 L702.95 274.58 L702.81 274.02 L702.68 273.45 L702.58 272.88 L702.49 272.3 L702.43 271.71 L702.38 271.11 L702.35 270.51 L702.34 269.91 L702.35 269.3 L702.38 268.68 L702.43 268.06 L702.5 267.44 L702.59 266.82 L702.69 266.19 L702.82 265.56 L702.96 264.93 L703.13 264.3 L703.31 263.67 L703.52 263.04 L703.74 262.4 L703.98 261.77 L704.24 261.14 L704.51 260.51 L704.81 259.88 L705.12 259.25 L705.45 258.63 L705.8 258.01 L706.16 257.39 L706.55 256.77 L706.94 256.16 L707.36 255.56 L707.79 254.96 L708.23 254.37 L708.69 253.78 L709.17 253.2 L709.66 252.62 L710.16 252.05 L710.68 251.49 L711.21 250.94 L711.75 250.4 L712.31 249.86 L712.87 249.34 L713.45 248.82 L714.04 248.32 L714.63 247.82 L715.24 247.34 L715.86 246.87 L716.48 246.41 L717.12 245.96 L717.76 245.52 L718.4 245.09 L719.06 244.68 L719.72 244.29 L720.38 243.9 L721.05 243.53 L721.73 243.17 L722.4 242.83 L723.08 242.5 L723.77 242.19 L724.45 241.89 L725.14 241.61 L725.83 241.34 L726.52 241.09 L727.2 240.86 L727.89 240.64 L728.58 240.44 L729.26 240.25 L729.94 240.08 L730.62 239.93 L731.3 239.8 L731.97 239.68 L732.64 239.58 L733.3 239.5 L733.96 239.43 L734.61 239.38 L735.25 239.35 L735.89 239.34 L736.52 239.35 L737.15 239.37 L737.76 239.41 L738.37 239.46 L738.97 239.54 L739.56 239.63 L740.14 239.74 L740.71 239.86 L741.27 240.01 L741.82 240.17 L742.36 240.34 L742.89 240.54 L743.4 240.75 L743.91 240.97 L744.4 241.22 L744.88 241.47 L745.35 241.75 L745.8 242.04 L746.24 242.34 L746.67 242.66 L747.08 243 L747.49 243.35 L747.87 243.71 L748.25 244.09 L748.6 244.48 L748.95 244.89 L749.28 245.31 L749.59 245.74 L749.89 246.18 L750.18 246.63 L750.45 247.1 L750.7 247.58 L750.94 248.07 L751.17 248.57 L751.38 249.08 L751.57 249.6 L751.75 250.13 L751.91 250.67 L752.06 251.22 L752.19 251.77 L752.3 252.34 L752.4 252.91 L752.49 253.49 L752.56 254.07 L752.61 254.66 L752.65 255.26 L752.67 255.86 L752.67 256.47 L752.66 257.08 L752.64 257.7 L752.6 258.32 L752.54 258.94 L752.47 259.56 L752.38 260.19 L752.28 260.82 L752.16 261.45 L752.03 262.09 L751.88 262.72 L751.72 263.35 L751.55 263.99Z" fill="none" stroke="#4ec36b" stroke-width="2.1"/>
<path d="M915.59 199.84 L915.13 199.89 L914.68 199.94 L914.22 199.99 L913.76 200.04 L913.3 200.1 L912.84 200.15 L912.39 200.2 L911.93 200.26 L911.47 200.31 L911.01 200.37 L910.55 200.43 L910.1 200.48 L909.64 200.54 L909.18 200.6 L908.72 200.66 L908.27 200.72 L907.81 200.79 L907.35 200.85 L906.89 200.91 L906.44 200.98 L905.98 201.04 L905.52 201.11 L905.06 201.18 L904.61 201.24 L904.15 201.31 L903.69 201.38 L903.23 201.45 L902.78 201.53 L902.32 201.6 L901.86 201.67 L901.4 201.74 L900.95 201.82 L900.49 201.89 L900.03 201.97 L899.57 202.05 L899.12 202.13 L898.66 202.2 L898.2 202.28 L897.74 202.36 L897.29 202.45 L896.83 202.53 L896.37 202.61 L895.91 202.69 L895.46 202.78 L895 202.86 L894.54 202.95 L894.08 203.04 L893.63 203.12 L893.17 203.21 L892.71 203.3 L892.25 203.39 L891.8 203.48 L891.34 203.57 L890.88 203.67 L890.42 203.76 L889.96 203.85 L889.51 203.95 L889.05 204.04 L888.59 204.14 L888.13 204.24 L887.67 204.34 L887.22 204.43 L886.76 204.53 L886.3 204.63 L885.84 204.74 L885.38 204.84 L884.92 204.94 L884.47 205.04 L884.01 205.15 L883.55 205.25 L883.09 205.36 L882.63 205.47 L882.17 205.57 L881.71 205.68 L881.26 205.79 L880.8 205.9 L880.34 206.01 L879.88 206.12 L879.42 206.23 L878.96 206.34 L878.5 206.46 L878.04 206.57 L877.58 206.69 L877.12 206.8 L876.67 206.92 L876.21 207.04 L875.75 207.15 L875.29 207.27 L874.83 207.39 L874.37 207.51 L873.91 207.63 L873.45 207.75 L872.99 207.88 L872.53 208 L872.07 208.12 L871.61 208.25 L871.15 208.37 L870.69 208.5 L870.23 208.63 L869.77 208.75 L869.31 208.88 L868.85 209.01 L868.39 209.14 L867.93 209.27 L867.46 209.4 L867 209.53 L866.54 209.67 L866.08 209.8 L865.62 209.93 L865.16 210.07 L864.7 210.2 L864.24 210.34 L863.78 210.48 L863.32 210.61 L862.85 210.75 L862.39 210.89 L861.93 211.03 L861.47 211.17 L861.01 211.31 L860.55 211.45 L860.08 211.59 L859.62 211.74 L859.16 211.88 L858.7 212.02 L858.24 212.17 L857.77 212.31 L857.31 212.46 L856.85 212.61 L856.39 212.76 L855.92 212.9 L855.46 213.05 L855 213.2 L854.54 213.35 L854.07 213.5 L853.61 213.66 L853.15 213.81 L852.68 213.96 L852.22 214.11 L851.76 214.27 L851.29 214.42 L850.83 214.58 L850.37 214.74 L849.9 214.89 L849.44 215.05 L848.98 215.21 L848.51 215.37 L848.05 215.53 L847.58 215.69 L847.12 215.85 L846.66 216.01 L846.19 216.17 L845.73 216.33 L845.26 216.5 L844.8 216.66 L844.34 216.82 L843.87 216.99 L843.41 217.15 L842.94 217.32 L842.48 217.49 L842.01 217.66 L841.55 217.82 L841.08 217.99 L840.62 218.16 L840.15 218.33 L839.69 218.5 L839.22 218.67 L838.76 218.84 L838.29 219.02 L837.82 219.19 L837.36 219.36 L836.89 219.54 L836.43 219.71 L835.96 219.89 L835.5 220.06 L835.03 220.24 L834.56 220.42 L834.1 220.59 L833.63 220.77 L833.17 220.95 L832.7 221.13 L832.23 221.31 L831.77 221.49 L831.3 221.67 L830.83 221.85 L830.37 222.04 L829.9 222.22 L829.44 222.4 L828.97 222.59 L828.5 222.77 L828.04 222.96 L827.57 223.14 L827.1 223.33 L826.63 223.51 L826.17 223.7 L825.7 223.89 L825.23 224.08 L824.77 224.27 L824.3 224.46 L823.83 224.65 L823.36 224.84 L822.9 225.03 L822.43 225.22 L821.96 225.41 L821.5 225.6 L821.03 225.8 L820.56 225.99 L820.09 226.18 L819.63 226.38 L819.16 226.57 L818.69 226.77 L818.22 226.97 L817.75 227.16 L817.29 227.36 L816.82 227.56 L816.35 227.76 L815.88 227.96 L815.42 228.15 L814.95 228.35 L814.48 228.55 L814.01 228.76 L813.54 228.96 L813.08 229.16 L812.61 229.36 L812.14 229.56 L811.67 229.77 L811.2 229.97 L810.74 230.17 L810.27 230.38 L809.8 230.58 L809.33 230.79 L808.86 231 L808.4 231.2 L807.93 231.41 L807.46 231.62 L806.99 231.83 L806.52 232.03 L806.05 232.24 L805.59 232.45 L805.12 232.66 L804.65 232.87 L804.18 233.08 L803.71 233.3 L803.25 233.51 L802.78 233.72 L802.31 233.93 L801.84 234.15 L801.37 234.36 L800.9 234.57 L800.44 234.79 L799.97 235 L799.5 235.22 L799.03 235.43 L798.56 235.65 L798.1 235.87 L797.63 236.08 L797.16 236.3 L796.69 236.52 L796.22 236.74 L795.76 236.96 L795.29 237.18 L794.82 237.4 L794.35 237.62 L793.89 237.84 L793.42 238.06 L792.95 238.28 L792.48 238.5 L792.02 238.72 L791.55 238.94 L791.08 239.17 L790.61 239.39 L790.15 239.61 L789.68 239.84 L789.21 240.06 L788.74 240.29 L788.28 240.51 L787.81 240.74 L787.34 240.97 L786.88 241.19 L786.41 241.42 L785.94 241.65 L785.47 241.88 L785.01 242.1 L784.54 242.33 L784.07 242.56 L783.61 242.79 L783.14 243.02 L782.68 243.25 L782.21 243.48 L781.74 243.71 L781.28 243.94 L780.81 244.17 L780.34 244.41 L779.88 244.64 L779.41 244.87 L778.95 245.1 L778.48 245.34 L778.02 245.57 L777.55 245.81 L777.09 246.04 L776.62 246.28 L776.15 246.51 L775.69 246.75 L775.22 246.98 L774.76 247.22 L774.3 247.46 L773.83 247.69 L773.37 247.93 L772.9 248.17 L772.44 248.41 L771.97 248.64 L771.51 248.88 L771.04 249.12 L770.58 249.36 L770.12 249.6 L769.65 249.84 L769.19 250.08 L768.73 250.32 L768.26 250.56 L767.8 250.8 L767.34 251.05 L766.88 251.29 L766.41 251.53 L765.95 251.77 L765.49 252.02 L765.03 252.26 L764.56 252.5 L764.1 252.75 L763.64 252.99 L763.18 253.24 L762.72 253.48 L762.26 253.73 L761.79 253.97 L761.33 254.22 L760.87 254.46 L760.41 254.71 L759.95 254.96 L759.49 255.2 L759.03 255.45 L758.57 255.7 L758.11 255.95 L757.65 256.19 L757.19 256.44 L756.73 256.69 L756.27 256.94 L755.81 257.19 L755.35 257.44 L754.9 257.69 L754.44 257.94 L753.98 258.19 L753.52 258.44 L753.06 258.69 L752.61 258.94 L752.15 259.2 L751.69 259.45 L751.23 259.7 L750.78 259.95 L750.32 260.2 L749.86 260.46 L749.41 260.71 L748.95 260.96 L748.5 261.22 L748.04 261.47 L747.59 261.73 L747.13 261.98 L746.68 262.24 L746.22 262.49 L745.77 262.75 L745.31 263 L744.86 263.26 L744.4 263.51 L743.95 263.77 L743.5 264.03 L743.04 264.28 L742.59 264.54 L742.14 264.8 L741.69 265.06 L741.23 265.31 L740.78 265.57 L740.33 265.83 L739.88 266.09 L739.43 266.35 L738.98 266.61 L738.53 266.86 L738.08 267.12 L737.63 267.38 L737.18 267.64 L736.73 267.9 L736.28 268.16 L735.83 268.43 L735.38 268.69 L734.93 268.95 L734.48 269.21 L734.03 269.47 L733.59 269.73 L733.14 269.99 L732.69 270.26 L732.25 270.52 L731.8 270.78 L731.35 271.04" fill="none" stroke="#4ec36b" stroke-width="1.8" stroke-dasharray="1.8 1.88" stroke-opacity="0.72"/>
<path d="M915.59 199.84 L915.95 199.81 L916.32 199.77 L916.68 199.73 L917.04 199.7 L917.4 199.66 L917.77 199.63 L918.13 199.59 L918.49 199.56 L918.85 199.52 L919.22 199.49 L919.58 199.46 L919.94 199.43 L920.3 199.4 L920.67 199.36 L921.03 199.33 L921.39 199.3 L921.76 199.28 L922.12 199.25 L922.48 199.22 L922.84 199.19 L923.21 199.16 L923.57 199.14 L923.93 199.11 L924.3 199.09 L924.66 199.06 L925.02 199.04 L925.39 199.01 L925.75 198.99 L926.11 198.97 L926.48 198.94 L926.84 198.92 L927.21 198.9 L927.57 198.88 L927.93 198.86 L928.3 198.84 L928.66 198.82 L929.02 198.8 L929.39 198.79 L929.75 198.77 L930.12 198.75 L930.48 198.74 L930.84 198.72 L931.21 198.71 L931.57 198.69 L931.94 198.68 L932.3 198.66 L932.67 198.65 L933.03 198.64 L933.4 198.63 L933.76 198.62 L934.13 198.61 L934.49 198.59 L934.86 198.59 L935.22 198.58 L935.59 198.57 L935.95 198.56 L936.32 198.55 L936.68 198.55 L937.05 198.54 L937.41 198.53 L937.78 198.53 L938.14 198.52 L938.51 198.52 L938.88 198.52 L939.24 198.51 L939.61 198.51 L939.97 198.51 L940.34 198.51 L940.71 198.51 L941.07 198.51 L941.44 198.51 L941.8 198.51 L942.17 198.51 L942.54 198.51 L942.9 198.51 L943.27 198.52 L943.64 198.52 L944.01 198.52 L944.37 198.53" fill="none" stroke="#4ec36b" stroke-width="1.25"/>
<rect x="943.17" y="197.33" width="2.4" height="2.4" fill="#ff6347"/>
<path d="M894.03 46.81 L893.54 47.28 L893.05 47.76 L892.56 48.23 L892.07 48.72 L891.57 49.2 L891.07 49.69 L890.58 50.18 L890.08 50.68 L889.58 51.17 L889.07 51.67 L888.57 52.17 L888.07 52.68 L887.56 53.18 L887.06 53.69 L886.55 54.2 L886.04 54.71 L885.53 55.22 L885.03 55.73 L884.52 56.25 L884 56.77 L883.49 57.28 L882.98 57.8 L882.47 58.32 L881.96 58.84 L881.44 59.37 L880.93 59.89 L880.42 60.41 L879.9 60.94 L879.39 61.46 L878.87 61.99 L878.36 62.52 L877.84 63.05 L877.32 63.58 L876.81 64.11 L876.29 64.64 L875.77 65.17 L875.26 65.7 L874.74 66.23 L874.22 66.76 L873.7 67.3 L873.19 67.83 L872.67 68.36 L872.15 68.9 L871.63 69.43 L871.11 69.97 L870.59 70.51 L870.08 71.04 L869.56 71.58 L869.04 72.12 L868.52 72.65 L868 73.19 L867.49 73.73 L866.97 74.27 L866.45 74.81 L865.93 75.35 L865.41 75.89 L864.9 76.43 L864.38 76.97 L863.86 77.51 L863.34 78.05 L862.83 78.59 L862.31 79.13 L861.79 79.67 L861.28 80.21 L860.76 80.75 L860.24 81.29 L859.73 81.84 L859.21 82.38 L858.69 82.92 L858.18 83.46 L857.66 84.01 L857.15 84.55 L856.63 85.09 L856.12 85.64 L855.6 86.18 L855.09 86.72 L854.58 87.27 L854.06 87.81 L853.55 88.36 L853.04 88.9 L852.52 89.45 L852.01 89.99 L851.5 90.54 L850.99 91.08 L850.48 91.63 L849.97 92.17 L849.46 92.72 L848.95 93.26 L848.44 93.81 L847.93 94.35 L847.42 94.9 L846.91 95.44 L846.4 95.99 L845.89 96.54 L845.39 97.08 L844.88 97.63 L844.37 98.18 L843.87 98.72 L843.36 99.27 L842.85 99.81 L842.35 100.36 L841.85 100.91 L841.34 101.46 L840.84 102 L840.33 102.55 L839.83 103.1 L839.33 103.64 L838.83 104.19 L838.33 104.74 L837.83 105.29 L837.33 105.83 L836.83 106.38 L836.33 106.93 L835.83 107.48 L835.33 108.02 L834.83 108.57 L834.34 109.12 L833.84 109.67 L833.34 110.22 L832.85 110.76 L832.35 111.31 L831.86 111.86 L831.37 112.41 L830.87 112.96 L830.38 113.5 L829.89 114.05 L829.4 114.6 L828.91 115.15 L828.42 115.7 L827.93 116.25 L827.44 116.8 L826.95 117.34 L826.46 117.89 L825.97 118.44 L825.49 118.99 L825 119.54 L824.52 120.09 L824.03 120.64 L823.55 121.19 L823.06 121.74 L822.58 122.28 L822.1 122.83 L821.62 123.38 L821.14 123.93 L820.66 124.48 L820.18 125.03 L819.7 125.58 L819.22 126.13 L818.75 126.68 L818.27 127.23 L817.79 127.78 L817.32 128.33 L816.84 128.88 L816.37 129.43 L815.9 129.97 L815.42 130.52 L814.95 131.07 L814.48 131.62 L814.01 132.17 L813.54 132.72 L813.07 133.27 L812.61 133.82 L812.14 134.37 L811.67 134.92 L811.21 135.47 L810.74 136.02 L810.28 136.57 L809.82 137.12 L809.35 137.67 L808.89 138.22 L808.43 138.77 L807.97 139.32 L807.51 139.87 L807.05 140.42 L806.6 140.97 L806.14 141.52 L805.68 142.07 L805.23 142.62 L804.77 143.17 L804.32 143.72 L803.87 144.27 L803.42 144.82 L802.97 145.37 L802.52 145.92 L802.07 146.47 L801.62 147.02 L801.17 147.57 L800.72 148.12 L800.28 148.67 L799.83 149.22 L799.39 149.77 L798.95 150.33 L798.5 150.88 L798.06 151.43 L797.62 151.98 L797.18 152.53 L796.74 153.08 L796.31 153.63 L795.87 154.18 L795.43 154.73 L795 155.28 L794.57 155.83 L794.13 156.38 L793.7 156.93 L793.27 157.48 L792.84 158.03 L792.41 158.58 L791.98 159.13 L791.55 159.68 L791.13 160.23 L790.7 160.79 L790.28 161.34 L789.85 161.89 L789.43 162.44 L789.01 162.99 L788.59 163.54 L788.17 164.09 L787.75 164.64 L787.33 165.19 L786.91 165.74 L786.5 166.29 L786.08 166.84 L785.67 167.39 L785.26 167.95 L784.85 168.5 L784.44 169.05 L784.03 169.6 L783.62 170.15 L783.21 170.7 L782.8 171.25 L782.4 171.8 L781.99 172.35 L781.59 172.9 L781.19 173.45 L780.79 174.01 L780.39 174.56 L779.99 175.11 L779.59 175.66 L779.19 176.21 L778.79 176.76 L778.4 177.31 L778.01 177.86 L777.61 178.41 L777.22 178.97 L776.83 179.52 L776.44 180.07 L776.05 180.62 L775.66 181.17 L775.28 181.72 L774.89 182.27 L774.51 182.82 L774.13 183.37 L773.74 183.93 L773.36 184.48 L772.98 185.03 L772.61 185.58 L772.23 186.13 L771.85 186.68 L771.48 187.23 L771.1 187.78 L770.73 188.33 L770.36 188.89 L769.99 189.44 L769.62 189.99 L769.25 190.54 L768.88 191.09 L768.52 191.64 L768.15 192.19 L767.79 192.74 L767.43 193.3 L767.06 193.85 L766.7 194.4 L766.35 194.95 L765.99 195.5 L765.63 196.05 L765.28 196.6 L764.92 197.15 L764.57 197.71 L764.22 198.26 L763.87 198.81 L763.52 199.36 L763.17 199.91 L762.82 200.46 L762.48 201.01 L762.13 201.57 L761.79 202.12 L761.45 202.67 L761.11 203.22 L760.77 203.77 L760.43 204.32 L760.09 204.87 L759.76 205.43 L759.42 205.98 L759.09 206.53 L758.76 207.08 L758.42 207.63 L758.09 208.18 L757.77 208.73 L757.44 209.29 L757.11 209.84 L756.79 210.39 L756.47 210.94 L756.14 211.49 L755.82 212.04 L755.5 212.59 L755.19 213.15 L754.87 213.7 L754.55 214.25 L754.24 214.8 L753.93 215.35 L753.61 215.9 L753.3 216.45 L752.99 217.01 L752.69 217.56 L752.38 218.11 L752.07 218.66 L751.77 219.21 L751.47 219.76 L751.17 220.32 L750.87 220.87 L750.57 221.42 L750.27 221.97 L749.97 222.52 L749.68 223.07 L749.39 223.62 L749.09 224.18 L748.8 224.73 L748.51 225.28 L748.23 225.83 L747.94 226.38 L747.65 226.93 L747.37 227.49 L747.09 228.04 L746.81 228.59 L746.53 229.14 L746.25 229.69 L745.97 230.24 L745.7 230.8 L745.42 231.35 L745.15 231.9 L744.88 232.45 L744.61 233 L744.34 233.55 L744.07 234.1 L743.8 234.66 L743.54 235.21 L743.28 235.76 L743.01 236.31 L742.75 236.86 L742.49 237.41 L742.24 237.97 L741.98 238.52 L741.72 239.07 L741.47 239.62 L741.22 240.17 L740.97 240.72 L740.72 241.28 L740.47 241.83 L740.22 242.38 L739.98 242.93 L739.73 243.48 L739.49 244.03 L739.25 244.59 L739.01 245.14 L738.77 245.69 L738.54 246.24 L738.3 246.79 L738.07 247.34 L737.84 247.9 L737.61 248.45 L737.38 249 L737.15 249.55 L736.92 250.1 L736.7 250.65 L736.47 251.21 L736.25 251.76 L736.03 252.31 L735.81 252.86 L735.59 253.41 L735.38 253.97 L735.16 254.52 L734.95 255.07 L734.74 255.62 L734.53 256.17 L734.32 256.72 L734.11 257.28 L733.9 257.83 L733.7 258.38 L733.5 258.93 L733.29 259.48 L733.09 260.03 L732.89 260.59 L732.7 261.14 L732.5 261.69 L732.31 262.24 L732.11 262.79 L731.92 263.34 L731.73 263.9 L731.55 264.45" fill="none" stroke="#4ec36b" stroke-width="1.8" stroke-dasharray="1.8 1.88" stroke-opacity="0.72"/>
<path d="M894.03 46.81 L894.33 46.53 L894.62 46.25 L894.91 45.97 L895.21 45.69 L895.5 45.42 L895.79 45.14 L896.08 44.87 L896.37 44.6 L896.66 44.33 L896.95 44.07 L897.23 43.81 L897.52 43.55 L897.81 43.29 L898.09 43.04 L898.38 42.79 L898.66 42.54 L898.94 42.29 L899.22 42.05 L899.5 41.82 L899.79 41.58 L900.07 41.35 L900.34 41.13 L900.62 40.91 L900.9 40.69 L901.18 40.48 L901.46 40.27 L901.73 40.07 L902.01 39.87 L902.29 39.68 L902.56 39.5 L902.84 39.32 L903.12 39.15 L903.39 38.98 L903.67 38.83 L903.95 38.68 L904.23 38.53 L904.51 38.4 L904.8 38.27 L905.08 38.16 L905.37 38.05 L905.66 37.95 L905.95 37.86 L906.25 37.78 L906.54 37.71 L906.85 37.65 L907.16 37.6 L907.47 37.56 L907.79 37.53 L908.11 37.51 L908.44 37.5 L908.77 37.5 L909.12 37.52 L909.46 37.54 L909.82 37.58 L910.18 37.62 L910.55 37.68 L910.93 37.74 L911.32 37.82 L911.72 37.9 L912.12 37.99 L912.53 38.1 L912.95 38.21 L913.38 38.33 L913.82 38.46 L914.26 38.6 L914.71 38.75 L915.17 38.9 L915.64 39.06 L916.12 39.23 L916.6 39.4 L917.1 39.58 L917.6 39.77 L918.1 39.96 L918.61 40.16 L919.13 40.37 L919.66 40.58 L920.19 40.79 L920.73 41.01 L921.28 41.23" fill="none" stroke="#4ec36b" stroke-width="1.25"/>
<rect x="920.08" y="40.03" width="2.4" height="2.4" fill="#ff6347"/>
<path d="M728 271.6H735.2M731.6 268V275.2" stroke="#ff0000" stroke-width="1.1" fill="none"/>
<path d="M728.8 264.5H736M732.4 260.9V268.1" stroke="#ff0000" stroke-width="1.1" fill="none"/>
<path d="M1140.5 842 V641.5" stroke="#ff0000" stroke-width="1.39" stroke-dasharray="5.14 2.22"/>
<text transform="translate(149.7 697.05) rotate(-90)" font-size="30.8" textLength="54.61" lengthAdjust="spacingAndGlyphs" fill="#555555">APR</text><text transform="translate(294.7 701.3) rotate(-90)" font-size="30.8" textLength="57.2" lengthAdjust="spacingAndGlyphs" fill="#555555">MAY</text><text transform="translate(436.7 691.55) rotate(-90)" font-size="30.8" textLength="48.52" lengthAdjust="spacingAndGlyphs" fill="#555555">JUN</text><text transform="translate(576.7 685.3) rotate(-90)" font-size="30.8" textLength="44.88" lengthAdjust="spacingAndGlyphs" fill="#555555">JUL</text><text transform="translate(723.7 703.05) rotate(-90)" font-size="30.8" textLength="58.69" lengthAdjust="spacingAndGlyphs" fill="#555555">AUG</text><text transform="translate(872.7 694.55) rotate(-90)" font-size="30.8" textLength="50.59" lengthAdjust="spacingAndGlyphs" fill="#555555">SEP</text><text transform="translate(1016.7 700.05) rotate(-90)" font-size="30.8" textLength="56.65" lengthAdjust="spacingAndGlyphs" fill="#555555">OCT</text><text transform="translate(1169.7 703.8) rotate(-90)" font-size="30.8" textLength="59.18" lengthAdjust="spacingAndGlyphs" fill="#555555">NOV</text><text transform="translate(1318.7 702.3) rotate(-90)" font-size="30.8" textLength="56.24" lengthAdjust="spacingAndGlyphs" fill="#555555">DEC</text><text transform="translate(1469.7 689.55) rotate(-90)" font-size="30.8" textLength="47.5" lengthAdjust="spacingAndGlyphs" fill="#555555">JAN</text><text transform="translate(1628.7 696.05) rotate(-90)" font-size="30.8" textLength="50.7" lengthAdjust="spacingAndGlyphs" fill="#555555">FEB</text><text transform="translate(1766.7 706.3) rotate(-90)" font-size="30.8" textLength="60.27" lengthAdjust="spacingAndGlyphs" fill="#555555">MAR</text>
<rect x="106" y="831.91" width="23" height="4.17" fill="#bddf26"/><rect x="165" y="831.91" width="180" height="4.17" fill="#bddf26"/><rect x="366" y="831.91" width="258.6" height="4.17" fill="#bddf26"/><rect x="634.9" y="831.91" width="150.7" height="4.17" fill="#bddf26"/><rect x="807" y="831.91" width="91.9" height="4.17" fill="#bddf26"/><rect x="920" y="831.91" width="52.9" height="4.17" fill="#bddf26"/><rect x="984" y="831.91" width="81.8" height="4.17" fill="#bddf26"/><rect x="1082" y="831.91" width="120.8" height="4.17" fill="#bddf26"/><rect x="1244" y="831.91" width="81.8" height="4.17" fill="#bddf26"/><rect x="1337" y="831.91" width="17.7" height="4.17" fill="#bddf26"/><rect x="1381" y="831.91" width="62.7" height="4.17" fill="#bddf26"/><rect x="1459" y="831.91" width="52.8" height="4.17" fill="#bddf26"/><rect x="1523" y="831.91" width="24" height="4.17" fill="#bddf26"/><rect x="1724" y="831.91" width="23.8" height="4.17" fill="#bddf26"/><rect x="1758" y="831.91" width="23.7" height="4.17" fill="#bddf26"/><rect x="165" y="815.58" width="23" height="4.17" fill="#81d34d"/><rect x="223" y="815.58" width="63" height="4.17" fill="#81d34d"/><rect x="312" y="815.58" width="28" height="4.17" fill="#81d34d"/><rect x="366" y="815.58" width="126" height="4.17" fill="#81d34d"/><rect x="507.9" y="815.58" width="145.9" height="4.17" fill="#81d34d"/><rect x="704" y="815.58" width="32.8" height="4.17" fill="#81d34d"/><rect x="773" y="815.58" width="71.8" height="4.17" fill="#81d34d"/><rect x="871" y="815.58" width="116.9" height="4.17" fill="#81d34d"/><rect x="1003" y="815.58" width="13.7" height="4.17" fill="#81d34d"/><rect x="1061.9" y="815.58" width="151" height="4.17" fill="#81d34d"/><rect x="1244" y="815.58" width="22.8" height="4.17" fill="#81d34d"/><rect x="1293" y="815.58" width="22.9" height="4.17" fill="#81d34d"/><rect x="1342" y="815.58" width="22.8" height="4.17" fill="#81d34d"/><rect x="1386" y="815.58" width="42.7" height="4.17" fill="#81d34d"/><rect x="1459" y="815.58" width="24" height="4.17" fill="#81d34d"/><rect x="1547.8" y="815.58" width="23.2" height="4.17" fill="#81d34d"/><rect x="165" y="799.25" width="23" height="4.17" fill="#4ec36b"/><rect x="258" y="799.25" width="228.9" height="4.17" fill="#4ec36b"/><rect x="507.9" y="799.25" width="107.1" height="4.17" fill="#4ec36b"/><rect x="626" y="799.25" width="91.7" height="4.17" fill="#4ec36b"/><rect x="729" y="799.25" width="96.7" height="4.17" fill="#4ec36b"/><rect x="949" y="799.25" width="199.8" height="4.17" fill="#4ec36b"/><rect x="1160" y="799.25" width="87.9" height="4.17" fill="#4ec36b"/><rect x="1258" y="799.25" width="185.7" height="4.17" fill="#4ec36b"/><rect x="1459" y="799.25" width="24" height="4.17" fill="#4ec36b"/><rect x="1552" y="799.25" width="24" height="4.17" fill="#4ec36b"/><rect x="194" y="782.92" width="24" height="4.17" fill="#2ab07f"/><rect x="321" y="782.92" width="185.8" height="4.17" fill="#2ab07f"/><rect x="517.9" y="782.92" width="23.1" height="4.17" fill="#2ab07f"/><rect x="557" y="782.92" width="125.8" height="4.17" fill="#2ab07f"/><rect x="807" y="782.92" width="23.9" height="4.17" fill="#2ab07f"/><rect x="954" y="782.92" width="18.9" height="4.17" fill="#2ab07f"/><rect x="988" y="782.92" width="136.7" height="4.17" fill="#2ab07f"/><rect x="1155" y="782.92" width="62.9" height="4.17" fill="#2ab07f"/><rect x="1244" y="782.92" width="22.8" height="4.17" fill="#2ab07f"/><rect x="1317" y="782.92" width="23.8" height="4.17" fill="#2ab07f"/><rect x="1396" y="782.92" width="22.9" height="4.17" fill="#2ab07f"/><rect x="1464" y="782.92" width="186" height="4.17" fill="#2ab07f"/><rect x="341" y="766.6" width="29" height="4.17" fill="#1e9b8a"/><rect x="410" y="766.6" width="37.8" height="4.17" fill="#1e9b8a"/><rect x="469" y="766.6" width="23" height="4.17" fill="#1e9b8a"/><rect x="527" y="766.6" width="18.9" height="4.17" fill="#1e9b8a"/><rect x="561.9" y="766.6" width="28" height="4.17" fill="#1e9b8a"/><rect x="616" y="766.6" width="32.9" height="4.17" fill="#1e9b8a"/><rect x="959" y="766.6" width="28.9" height="4.17" fill="#1e9b8a"/><rect x="1061.9" y="766.6" width="23.8" height="4.17" fill="#1e9b8a"/><rect x="1101" y="766.6" width="23.7" height="4.17" fill="#1e9b8a"/><rect x="1160" y="766.6" width="33.8" height="4.17" fill="#1e9b8a"/><rect x="1248" y="766.6" width="23.7" height="4.17" fill="#1e9b8a"/><rect x="1425" y="766.6" width="86.8" height="4.17" fill="#1e9b8a"/><rect x="420" y="750.26" width="22.9" height="4.17" fill="#25858e"/><rect x="532" y="750.26" width="23.7" height="4.17" fill="#25858e"/><rect x="567" y="750.26" width="22.9" height="4.17" fill="#25858e"/><rect x="620.9" y="750.26" width="121.1" height="4.17" fill="#25858e"/><rect x="969" y="750.26" width="165.8" height="4.17" fill="#25858e"/><rect x="1185" y="750.26" width="160.9" height="4.17" fill="#25858e"/><rect x="1469" y="750.26" width="23.9" height="4.17" fill="#25858e"/><rect x="428.9" y="733.93" width="23.9" height="4.17" fill="#2d708e"/><rect x="575.9" y="733.93" width="157.1" height="4.17" fill="#2d708e"/><rect x="993" y="733.93" width="111.8" height="4.17" fill="#2d708e"/><rect x="1116" y="733.93" width="106.8" height="4.17" fill="#2d708e"/><rect x="1263" y="733.93" width="28.8" height="4.17" fill="#2d708e"/><rect x="1489" y="733.93" width="22.8" height="4.17" fill="#2d708e"/><rect x="591" y="717.61" width="23.7" height="4.17" fill="#375a8c"/><rect x="655" y="717.61" width="116.9" height="4.17" fill="#375a8c"/><rect x="1072" y="717.61" width="170.9" height="4.17" fill="#375a8c"/><rect x="1263" y="717.61" width="23.7" height="4.17" fill="#375a8c"/><rect x="595.8" y="701.27" width="137.2" height="4.17" fill="#424086"/><rect x="1090.9" y="701.27" width="29.1" height="4.17" fill="#424086"/><rect x="1199" y="701.27" width="23.8" height="4.17" fill="#424086"/><rect x="1273" y="701.27" width="53" height="4.17" fill="#424086"/><rect x="1111" y="684.94" width="23.8" height="4.17" fill="#482475"/>
<g stroke="#ffffff" stroke-opacity="0.3" stroke-width="2.08" stroke-dasharray="2.08 3.44"><path d="M74 842V641.5"/><path d="M218 842V641.5"/><path d="M365 842V641.5"/><path d="M505 842V641.5"/><path d="M650 842V641.5"/><path d="M797 842V641.5"/><path d="M940 842V641.5"/><path d="M1091 842V641.5"/><path d="M1239 842V641.5"/><path d="M1394 842V641.5"/><path d="M1548 842V641.5"/><path d="M1687 842V641.5"/></g>
<path d="M112.83 834H121.17M117 829.83V838.17M240.63 834H248.97M244.8 829.83V838.17M510.43 834H518.77M514.6 829.83V838.17M706.33 834H714.67M710.5 829.83V838.17M832.43 834H840.77M836.6 829.83V838.17M961.53 834H969.87M965.7 829.83V838.17M985.53 834H993.87M989.7 829.83V838.17M1115.63 834H1123.97M1119.8 829.83V838.17M1294.43 834H1302.77M1298.6 829.83V838.17M1341.33 834H1349.67M1345.5 829.83V838.17M1412.63 834H1420.97M1416.8 829.83V838.17M1481.33 834H1489.67M1485.5 829.83V838.17M1530.63 834H1538.97M1534.8 829.83V838.17M1731.43 834H1739.77M1735.6 829.83V838.17M1765.43 834H1773.77M1769.6 829.83V838.17M171.33 817.67H179.67M175.5 813.5V821.84M255.83 817.67H264.17M260 813.5V821.84M322.63 817.67H330.97M326.8 813.5V821.84M436.43 817.67H444.77M440.6 813.5V821.84M598.43 817.67H606.77M602.6 813.5V821.84M716.43 817.67H724.77M720.6 813.5V821.84M792.33 817.67H800.67M796.5 813.5V821.84M938.33 817.67H946.67M942.5 813.5V821.84M1005.53 817.67H1013.87M1009.7 813.5V821.84M1152.63 817.67H1160.97M1156.8 813.5V821.84M1250.23 817.67H1258.57M1254.4 813.5V821.84M1299.63 817.67H1307.97M1303.8 813.5V821.84M1348.33 817.67H1356.67M1352.5 813.5V821.84M1402.33 817.67H1410.67M1406.5 813.5V821.84M1466.53 817.67H1474.87M1470.7 813.5V821.84M1554.73 817.67H1563.07M1558.9 813.5V821.84M172.83 801.34H181.17M177 797.17V805.51M377.53 801.34H385.87M381.7 797.17V805.51M544.33 801.34H552.67M548.5 797.17V805.51M681.53 801.34H689.87M685.7 797.17V805.51M740.53 801.34H748.87M744.7 797.17V805.51M1074.53 801.34H1082.87M1078.7 797.17V805.51M1216.33 801.34H1224.67M1220.5 797.17V805.51M1304.33 801.34H1312.67M1308.5 797.17V805.51M1466.53 801.34H1474.87M1470.7 797.17V805.51M1559.63 801.34H1567.97M1563.8 797.17V805.51M201.83 785.01H210.17M206 780.84V789.18M399.43 785.01H407.77M403.6 780.84V789.18M524.43 785.01H532.77M528.6 780.84V789.18M638.53 785.01H646.87M642.7 780.84V789.18M814.33 785.01H822.67M818.5 780.84V789.18M958.43 785.01H966.77M962.6 780.84V789.18M1039.43 785.01H1047.77M1043.6 780.84V789.18M1187.13 785.01H1195.47M1191.3 780.84V789.18M1250.23 785.01H1258.57M1254.4 780.84V789.18M1324.23 785.01H1332.57M1328.4 780.84V789.18M1402.83 785.01H1411.17M1407 780.84V789.18M1545.43 785.01H1553.77M1549.6 780.84V789.18M355.53 768.68H363.87M359.7 764.51V772.85M425.13 768.68H433.47M429.3 764.51V772.85M475.53 768.68H483.87M479.7 764.51V772.85M534.13 768.68H542.47M538.3 764.51V772.85M570.53 768.68H578.87M574.7 764.51V772.85M630.33 768.68H638.67M634.5 764.51V772.85M973.63 768.68H981.97M977.8 764.51V772.85M1069.23 768.68H1077.57M1073.4 764.51V772.85M1108.63 768.68H1116.97M1112.8 764.51V772.85M1177.73 768.68H1186.07M1181.9 764.51V772.85M1255.43 768.68H1263.77M1259.6 764.51V772.85M1466.53 768.68H1474.87M1470.7 764.51V772.85M426.63 752.35H434.97M430.8 748.18V756.52M539.63 752.35H547.97M543.8 748.18V756.52M573.53 752.35H581.87M577.7 748.18V756.52M703.73 752.35H712.07M707.9 748.18V756.52M1093.53 752.35H1101.87M1097.7 748.18V756.52M1270.83 752.35H1279.17M1275 748.18V756.52M1476.63 752.35H1484.97M1480.8 748.18V756.52M436.43 736.02H444.77M440.6 731.85V740.19M630.33 736.02H638.67M634.5 731.85V740.19M1038.43 736.02H1046.77M1042.6 731.85V740.19M1167.63 736.02H1175.97M1171.8 731.85V740.19M1274.53 736.02H1282.87M1278.7 731.85V740.19M1496.53 736.02H1504.87M1500.7 731.85V740.19M598.43 719.69H606.77M602.6 715.52V723.86M726.53 719.69H734.87M730.7 715.52V723.86M1187.53 719.69H1195.87M1191.7 715.52V723.86M1270.83 719.69H1279.17M1275 715.52V723.86M686.63 703.36H694.97M690.8 699.19V707.53M1101.63 703.36H1109.97M1105.8 699.19V707.53M1206.73 703.36H1215.07M1210.9 699.19V707.53M1299.63 703.36H1307.97M1303.8 699.19V707.53M1118.33 687.03H1126.67M1122.5 682.86V691.2" stroke="#ffffff" stroke-width="2.08" fill="none"/>
<rect x="19.5" y="641.5" width="1766" height="201" fill="none" stroke="#ffffff" stroke-width="1"/>
<path d="M19.5 842V847M264.5 842V847M510.5 842V847M755.5 842V847M1000.5 842V847M1245.5 842V847M1491.5 842V847M1736.5 842V847" stroke="#ffffff" stroke-width="1"/>
<text x="1473.5" y="330" font-size="10.3" textLength="25.2" lengthAdjust="spacingAndGlyphs" fill="#8c8c8c" xml:space="preserve">+180</text><text x="1375.5" y="330" font-size="10.3" textLength="25.2" lengthAdjust="spacingAndGlyphs" fill="#8c8c8c" xml:space="preserve">+210</text><text x="1278.4" y="330" font-size="10.3" textLength="24.6" lengthAdjust="spacingAndGlyphs" fill="#8c8c8c" xml:space="preserve">+240</text><text x="1180.5" y="330" font-size="10.3" textLength="25.2" lengthAdjust="spacingAndGlyphs" fill="#8c8c8c" xml:space="preserve">+270</text><text x="1082.5" y="330" font-size="10.3" textLength="25.2" lengthAdjust="spacingAndGlyphs" fill="#8c8c8c" xml:space="preserve">+300</text><text x="985.5" y="330" font-size="10.3" textLength="25.2" lengthAdjust="spacingAndGlyphs" fill="#8c8c8c" xml:space="preserve">+330</text><text x="893.5" y="330" font-size="10.3" textLength="12.6" lengthAdjust="spacingAndGlyphs" fill="#8c8c8c" xml:space="preserve">+0</text><text x="793.5" y="330" font-size="10.3" textLength="18.9" lengthAdjust="spacingAndGlyphs" fill="#8c8c8c" xml:space="preserve">+30</text><text x="695.5" y="330" font-size="10.3" textLength="18.9" lengthAdjust="spacingAndGlyphs" fill="#8c8c8c" xml:space="preserve">+60</text><text x="597.9" y="330" font-size="10.3" textLength="18.9" lengthAdjust="spacingAndGlyphs" fill="#8c8c8c" xml:space="preserve">+90</text><text x="496.6" y="330" font-size="10.3" textLength="24.6" lengthAdjust="spacingAndGlyphs" fill="#8c8c8c" xml:space="preserve">+120</text><text x="399.5" y="330" font-size="10.3" textLength="25.2" lengthAdjust="spacingAndGlyphs" fill="#8c8c8c" xml:space="preserve">+150</text><text x="301.6" y="330" font-size="10.3" textLength="24.6" lengthAdjust="spacingAndGlyphs" fill="#8c8c8c" xml:space="preserve">+180</text><text x="890.5" y="25" font-size="10.3" textLength="18.9" lengthAdjust="spacingAndGlyphs" fill="#8c8c8c" xml:space="preserve">+90</text><text x="890.5" y="122.6" font-size="10.3" textLength="18.9" lengthAdjust="spacingAndGlyphs" fill="#8c8c8c" xml:space="preserve">+60</text><text x="890.5" y="220" font-size="10.3" textLength="18.9" lengthAdjust="spacingAndGlyphs" fill="#8c8c8c" xml:space="preserve">+30</text><text x="890.5" y="428.4" font-size="10.3" textLength="18.9" lengthAdjust="spacingAndGlyphs" fill="#8c8c8c" xml:space="preserve">−30</text><text x="890.5" y="526" font-size="10.3" textLength="18.9" lengthAdjust="spacingAndGlyphs" fill="#8c8c8c" xml:space="preserve">−60</text><text x="890.5" y="624" font-size="10.3" textLength="18.9" lengthAdjust="spacingAndGlyphs" fill="#8c8c8c" xml:space="preserve">−90</text><text x="718.5" y="266" font-size="11.77" textLength="18.9" lengthAdjust="spacingAndGlyphs" fill="#ffffff" xml:space="preserve">STA</text><text x="107.5" y="832" font-size="11.77" textLength="19.95" lengthAdjust="spacingAndGlyphs" fill="#ffffff" xml:space="preserve">KSE</text><text x="245.5" y="832" font-size="11.77" textLength="18.9" lengthAdjust="spacingAndGlyphs" fill="#ffffff" xml:space="preserve">ETA</text><text x="484.5" y="832" font-size="11.77" textLength="22.05" lengthAdjust="spacingAndGlyphs" fill="#ffffff" xml:space="preserve">NZC</text><text x="699.5" y="832" font-size="11.77" textLength="23.1" lengthAdjust="spacingAndGlyphs" fill="#ffffff" xml:space="preserve">NDA</text><text x="844.5" y="832" font-size="11.77" textLength="18.9" lengthAdjust="spacingAndGlyphs" fill="#ffffff" xml:space="preserve">SPE</text><text x="934.5" y="832" font-size="11.77" textLength="23.1" lengthAdjust="spacingAndGlyphs" fill="#ffffff" xml:space="preserve">ARD</text><text x="1014.5" y="832" font-size="11.77" textLength="21" lengthAdjust="spacingAndGlyphs" fill="#ffffff" xml:space="preserve">EGE</text><text x="1132.5" y="832" font-size="11.77" textLength="21" lengthAdjust="spacingAndGlyphs" fill="#ffffff" xml:space="preserve">NTA</text><text x="1272.5" y="832" font-size="11.77" textLength="25.2" lengthAdjust="spacingAndGlyphs" fill="#ffffff" xml:space="preserve">MON</text><text x="1333.5" y="832" font-size="11.77" textLength="22.05" lengthAdjust="spacingAndGlyphs" fill="#ffffff" xml:space="preserve">URS</text><text x="1400.5" y="832" font-size="11.77" textLength="22.05" lengthAdjust="spacingAndGlyphs" fill="#ffffff" xml:space="preserve">AHY</text><text x="1474.5" y="832" font-size="11.77" textLength="24.15" lengthAdjust="spacingAndGlyphs" fill="#ffffff" xml:space="preserve">GUM</text><text x="1524.5" y="832" font-size="11.77" textLength="23.1" lengthAdjust="spacingAndGlyphs" fill="#ffffff" xml:space="preserve">OHY</text><text x="1725.5" y="832" font-size="11.77" textLength="21" lengthAdjust="spacingAndGlyphs" fill="#ffffff" xml:space="preserve">XHE</text><text x="1762" y="832" font-size="11.77" textLength="16.88" lengthAdjust="spacingAndGlyphs" fill="#ffffff" xml:space="preserve">EVI</text><text x="164.5" y="815" font-size="11.77" textLength="21" lengthAdjust="spacingAndGlyphs" fill="#ffffff" xml:space="preserve">AVB</text><text x="246.5" y="815" font-size="11.77" textLength="16.8" lengthAdjust="spacingAndGlyphs" fill="#ffffff" xml:space="preserve">ELY</text><text x="312.5" y="815" font-size="11.77" textLength="23.1" lengthAdjust="spacingAndGlyphs" fill="#ffffff" xml:space="preserve">CAM</text><text x="421.5" y="815" font-size="11.77" textLength="21" lengthAdjust="spacingAndGlyphs" fill="#ffffff" xml:space="preserve">SSG</text><text x="568.5" y="815" font-size="11.77" textLength="21" lengthAdjust="spacingAndGlyphs" fill="#ffffff" xml:space="preserve">PCA</text><text x="708.5" y="815" font-size="11.77" textLength="24.15" lengthAdjust="spacingAndGlyphs" fill="#ffffff" xml:space="preserve">AUD</text><text x="797.5" y="815" font-size="11.77" textLength="23.1" lengthAdjust="spacingAndGlyphs" fill="#ffffff" xml:space="preserve">AUR</text><text x="920.5" y="815" font-size="11.77" textLength="22.05" lengthAdjust="spacingAndGlyphs" fill="#ffffff" xml:space="preserve">DSX</text><text x="999.5" y="815" font-size="11.77" textLength="23.1" lengthAdjust="spacingAndGlyphs" fill="#ffffff" xml:space="preserve">OCU</text><text x="1127.5" y="815" font-size="11.77" textLength="22.05" lengthAdjust="spacingAndGlyphs" fill="#ffffff" xml:space="preserve">OER</text><text x="1244.5" y="815" font-size="11.77" textLength="23.1" lengthAdjust="spacingAndGlyphs" fill="#ffffff" xml:space="preserve">DKD</text><text x="1293.5" y="815" font-size="11.77" textLength="22.05" lengthAdjust="spacingAndGlyphs" fill="#ffffff" xml:space="preserve">DSV</text><text x="1343.5" y="815" font-size="11.77" textLength="18.9" lengthAdjust="spacingAndGlyphs" fill="#ffffff" xml:space="preserve">ALY</text><text x="1399.5" y="815.2" font-size="11.77" textLength="15.75" lengthAdjust="spacingAndGlyphs" fill="#ffffff" xml:space="preserve">JLE</text><text x="1461.5" y="815" font-size="11.77" textLength="21" lengthAdjust="spacingAndGlyphs" fill="#ffffff" xml:space="preserve">SCC</text><text x="1550.5" y="815" font-size="11.77" textLength="19.95" lengthAdjust="spacingAndGlyphs" fill="#ffffff" xml:space="preserve">FEV</text><text x="167.5" y="799" font-size="11.77" textLength="17.85" lengthAdjust="spacingAndGlyphs" fill="#ffffff" xml:space="preserve">LYR</text><text x="362.5" y="799.2" font-size="11.77" textLength="19.95" lengthAdjust="spacingAndGlyphs" fill="#ffffff" xml:space="preserve">JMC</text><text x="550.5" y="799.2" font-size="11.77" textLength="15.75" lengthAdjust="spacingAndGlyphs" fill="#ffffff" xml:space="preserve">JPE</text><text x="661.5" y="799" font-size="11.77" textLength="19.95" lengthAdjust="spacingAndGlyphs" fill="#ffffff" xml:space="preserve">PAU</text><text x="765.5" y="799" font-size="11.77" textLength="17.85" lengthAdjust="spacingAndGlyphs" fill="#ffffff" xml:space="preserve">NIA</text><text x="1040.5" y="799" font-size="11.77" textLength="18.9" lengthAdjust="spacingAndGlyphs" fill="#ffffff" xml:space="preserve">STA</text><text x="1194.5" y="799" font-size="11.77" textLength="24.15" lengthAdjust="spacingAndGlyphs" fill="#ffffff" xml:space="preserve">NOO</text><text x="1341.5" y="799" font-size="11.77" textLength="24.15" lengthAdjust="spacingAndGlyphs" fill="#ffffff" xml:space="preserve">COM</text><text x="1460.5" y="799" font-size="11.77" textLength="22.05" lengthAdjust="spacingAndGlyphs" fill="#ffffff" xml:space="preserve">NCC</text><text x="1554.5" y="799" font-size="11.77" textLength="19.95" lengthAdjust="spacingAndGlyphs" fill="#ffffff" xml:space="preserve">FED</text><text x="196" y="783" font-size="11.77" textLength="17.92" lengthAdjust="spacingAndGlyphs" fill="#ffffff" xml:space="preserve">HVI</text><text x="402.5" y="783" font-size="11.77" textLength="17.91" lengthAdjust="spacingAndGlyphs" fill="#ffffff" xml:space="preserve">ARI</text><text x="519.5" y="783" font-size="11.77" textLength="19.95" lengthAdjust="spacingAndGlyphs" fill="#ffffff" xml:space="preserve">SZC</text><text x="608.5" y="783" font-size="11.77" textLength="21" lengthAdjust="spacingAndGlyphs" fill="#ffffff" xml:space="preserve">CAP</text><text x="807.5" y="783" font-size="11.77" textLength="22.05" lengthAdjust="spacingAndGlyphs" fill="#ffffff" xml:space="preserve">NUE</text><text x="950.5" y="783" font-size="11.77" textLength="22.05" lengthAdjust="spacingAndGlyphs" fill="#ffffff" xml:space="preserve">OCT</text><text x="1050.7" y="783" font-size="11.77" textLength="18.4" lengthAdjust="spacingAndGlyphs" fill="#ffffff" xml:space="preserve">ORI</text><text x="1173.5" y="783" font-size="11.77" textLength="25.2" lengthAdjust="spacingAndGlyphs" fill="#ffffff" xml:space="preserve">AMO</text><text x="1244.5" y="783" font-size="11.77" textLength="21" lengthAdjust="spacingAndGlyphs" fill="#ffffff" xml:space="preserve">DPC</text><text x="1320.7" y="783" font-size="11.77" textLength="16.31" lengthAdjust="spacingAndGlyphs" fill="#ffffff" xml:space="preserve">XVI</text><text x="1396.5" y="782.5" font-size="11.77" textLength="23.1" lengthAdjust="spacingAndGlyphs" fill="#ffffff" xml:space="preserve">QUA</text><text x="1547.5" y="783" font-size="11.77" textLength="23.1" lengthAdjust="spacingAndGlyphs" fill="#ffffff" xml:space="preserve">AAN</text><text x="341.5" y="766" font-size="11.77" textLength="22.05" lengthAdjust="spacingAndGlyphs" fill="#ffffff" xml:space="preserve">TAH</text><text x="422.5" y="766.2" font-size="11.77" textLength="17.85" lengthAdjust="spacingAndGlyphs" fill="#ffffff" xml:space="preserve">JEA</text><text x="473.5" y="766.2" font-size="11.77" textLength="12.6" lengthAdjust="spacingAndGlyphs" fill="#ffffff" xml:space="preserve">JIP</text><text x="529.5" y="766" font-size="11.77" textLength="18.9" lengthAdjust="spacingAndGlyphs" fill="#ffffff" xml:space="preserve">PPS</text><text x="568.5" y="766" font-size="11.77" textLength="21" lengthAdjust="spacingAndGlyphs" fill="#ffffff" xml:space="preserve">ZCS</text><text x="621.5" y="766" font-size="11.77" textLength="23.1" lengthAdjust="spacingAndGlyphs" fill="#ffffff" xml:space="preserve">GDR</text><text x="960.5" y="766" font-size="11.77" textLength="22.05" lengthAdjust="spacingAndGlyphs" fill="#ffffff" xml:space="preserve">DRA</text><text x="1063.5" y="766" font-size="11.77" textLength="21" lengthAdjust="spacingAndGlyphs" fill="#ffffff" xml:space="preserve">LUM</text><text x="1102.5" y="766" font-size="11.77" textLength="21" lengthAdjust="spacingAndGlyphs" fill="#ffffff" xml:space="preserve">RPU</text><text x="1166" y="766" font-size="11.77" textLength="22.1" lengthAdjust="spacingAndGlyphs" fill="#ffffff" xml:space="preserve">THA</text><text x="1250.5" y="766" font-size="11.77" textLength="19.95" lengthAdjust="spacingAndGlyphs" fill="#ffffff" xml:space="preserve">PSU</text><text x="1461.5" y="766" font-size="11.77" textLength="19.95" lengthAdjust="spacingAndGlyphs" fill="#ffffff" xml:space="preserve">XCB</text><text x="422.5" y="750.2" font-size="11.77" textLength="16.8" lengthAdjust="spacingAndGlyphs" fill="#ffffff" xml:space="preserve">JBC</text><text x="533.5" y="750" font-size="11.77" textLength="22.05" lengthAdjust="spacingAndGlyphs" fill="#ffffff" xml:space="preserve">CAN</text><text x="568.5" y="750" font-size="11.77" textLength="18.9" lengthAdjust="spacingAndGlyphs" fill="#ffffff" xml:space="preserve">FAN</text><text x="671.5" y="750" font-size="11.77" textLength="19.95" lengthAdjust="spacingAndGlyphs" fill="#ffffff" xml:space="preserve">PER</text><text x="1040.5" y="750" font-size="11.77" textLength="19.95" lengthAdjust="spacingAndGlyphs" fill="#ffffff" xml:space="preserve">CTA</text><text x="1254.5" y="750" font-size="11.77" textLength="22.05" lengthAdjust="spacingAndGlyphs" fill="#ffffff" xml:space="preserve">HYD</text><text x="1469.5" y="750" font-size="11.77" textLength="23.1" lengthAdjust="spacingAndGlyphs" fill="#ffffff" xml:space="preserve">XUM</text><text x="430.5" y="734" font-size="11.77" textLength="23.1" lengthAdjust="spacingAndGlyphs" fill="#ffffff" xml:space="preserve">COR</text><text x="646.5" y="734" font-size="11.77" textLength="22.05" lengthAdjust="spacingAndGlyphs" fill="#ffffff" xml:space="preserve">SDA</text><text x="1040" y="734" font-size="11.77" textLength="17.92" lengthAdjust="spacingAndGlyphs" fill="#ffffff" xml:space="preserve">LMI</text><text x="1157.5" y="734" font-size="11.77" textLength="19.95" lengthAdjust="spacingAndGlyphs" fill="#ffffff" xml:space="preserve">LEO</text><text x="1264.5" y="734" font-size="11.77" textLength="21" lengthAdjust="spacingAndGlyphs" fill="#ffffff" xml:space="preserve">EHY</text><text x="1490.5" y="734" font-size="11.77" textLength="21" lengthAdjust="spacingAndGlyphs" fill="#ffffff" xml:space="preserve">ECV</text><text x="593.5" y="717.2" font-size="11.77" textLength="17.85" lengthAdjust="spacingAndGlyphs" fill="#ffffff" xml:space="preserve">JXA</text><text x="705.5" y="717" font-size="11.77" textLength="21" lengthAdjust="spacingAndGlyphs" fill="#ffffff" xml:space="preserve">KCG</text><text x="1144.5" y="717" font-size="11.77" textLength="24.15" lengthAdjust="spacingAndGlyphs" fill="#ffffff" xml:space="preserve">AND</text><text x="1263.5" y="717" font-size="11.77" textLength="23.1" lengthAdjust="spacingAndGlyphs" fill="#ffffff" xml:space="preserve">DAD</text><text x="658" y="701" font-size="11.77" textLength="16.88" lengthAdjust="spacingAndGlyphs" fill="#ffffff" xml:space="preserve">ERI</text><text x="1098.5" y="701" font-size="11.77" textLength="19.95" lengthAdjust="spacingAndGlyphs" fill="#ffffff" xml:space="preserve">SLD</text><text x="1200.5" y="701" font-size="11.77" textLength="22.05" lengthAdjust="spacingAndGlyphs" fill="#ffffff" xml:space="preserve">ORS</text><text x="1288.5" y="701" font-size="11.77" textLength="23.1" lengthAdjust="spacingAndGlyphs" fill="#ffffff" xml:space="preserve">GEM</text><text x="1111.5" y="685" font-size="11.77" textLength="23.1" lengthAdjust="spacingAndGlyphs" fill="#ffffff" xml:space="preserve">KUM</text><text x="16" y="862" font-size="14.72" textLength="8.58" lengthAdjust="spacingAndGlyphs" fill="#ffffff" xml:space="preserve">0</text><text x="256.5" y="862" font-size="14.72" textLength="15.75" lengthAdjust="spacingAndGlyphs" fill="#ffffff" xml:space="preserve">50</text><text x="498.5" y="862" font-size="14.72" textLength="23.1" lengthAdjust="spacingAndGlyphs" fill="#ffffff" xml:space="preserve">100</text><text x="744.5" y="862" font-size="14.72" textLength="23.1" lengthAdjust="spacingAndGlyphs" fill="#ffffff" xml:space="preserve">150</text><text x="988.5" y="862" font-size="14.72" textLength="25.2" lengthAdjust="spacingAndGlyphs" fill="#ffffff" xml:space="preserve">200</text><text x="1233.5" y="862" font-size="14.72" textLength="25.2" lengthAdjust="spacingAndGlyphs" fill="#ffffff" xml:space="preserve">250</text><text x="1478.5" y="862" font-size="14.72" textLength="24.15" lengthAdjust="spacingAndGlyphs" fill="#ffffff" xml:space="preserve">300</text><text x="1723.5" y="862" font-size="14.72" textLength="24.15" lengthAdjust="spacingAndGlyphs" fill="#ffffff" xml:space="preserve">350</text><text x="829" y="882" font-size="14.72" textLength="147.15" lengthAdjust="spacingAndGlyphs" fill="#ffffff" xml:space="preserve">Solar longitude (deg)</text><text x="315" y="30" font-size="13.93" textLength="50.09" lengthAdjust="spacingAndGlyphs" fill="#ffffff" font-family="Liberation Mono, monospace" xml:space="preserve">UK00BD</text><text x="314.5" y="43" font-size="13.93" textLength="317.07" lengthAdjust="spacingAndGlyphs" fill="#ffffff" font-family="Liberation Mono, monospace" xml:space="preserve">Beg: 20251110 22:57:30 (sol = 228.44°)</text><text x="314.5" y="56" font-size="13.93" textLength="317.07" lengthAdjust="spacingAndGlyphs" fill="#ffffff" font-family="Liberation Mono, monospace" xml:space="preserve">End: 20251110 23:02:37 (sol = 228.45°)</text><text x="315" y="69" font-size="13.93" textLength="317.05" lengthAdjust="spacingAndGlyphs" fill="#ffffff" font-family="Liberation Mono, monospace" xml:space="preserve">--------------------------------------</text><text x="315" y="82" font-size="13.93" textLength="50.09" lengthAdjust="spacingAndGlyphs" fill="#ffffff" font-family="Liberation Mono, monospace" xml:space="preserve">STA: 2</text>
<g fill="none" stroke="#8c8c8c" stroke-width="0.6"><circle cx="1503" cy="323" r="0.8"/><circle cx="1405" cy="323" r="0.8"/><circle cx="1308" cy="323" r="0.8"/><circle cx="1210" cy="323" r="0.8"/><circle cx="1112" cy="323" r="0.8"/><circle cx="1015" cy="323" r="0.8"/><circle cx="910" cy="323" r="0.8"/><circle cx="817" cy="323" r="0.8"/><circle cx="719" cy="323" r="0.8"/><circle cx="621" cy="323" r="0.8"/><circle cx="526" cy="323" r="0.8"/><circle cx="429" cy="323" r="0.8"/><circle cx="331" cy="323" r="0.8"/><circle cx="914" cy="18" r="0.8"/><circle cx="914" cy="116" r="0.8"/><circle cx="914" cy="213" r="0.8"/><circle cx="914" cy="421" r="0.8"/><circle cx="914" cy="519" r="0.8"/><circle cx="914" cy="617" r="0.8"/></g>
</svg></div>
</body></html>
